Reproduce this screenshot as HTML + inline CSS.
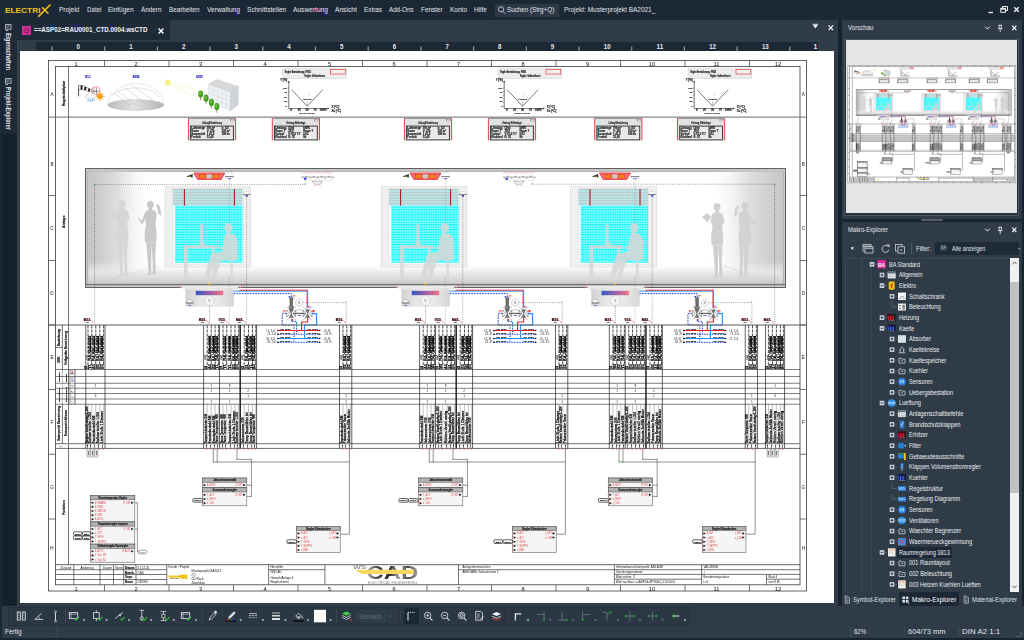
<!DOCTYPE html>
<html lang="de"><head><meta charset="utf-8"><title>ELECTRIX</title><style>
html,body{margin:0;padding:0}
body{width:1024px;height:640px;overflow:hidden;background:#2f3b47;position:relative;font-family:"Liberation Sans",sans-serif}
.b{position:absolute;display:block;overflow:hidden}
.t{position:absolute;display:block;white-space:nowrap;transform-origin:0 50%}
svg text{font-family:"Liberation Sans",sans-serif}
</style></head><body>
<div class="b" style="left:0px;top:0px;width:1024px;height:20px;background:#1c2836;"></div>
<span class="t" style="left:5px;top:5.6px;font-size:6.6px;line-height:10px;color:#f2c317;font-weight:bold;transform:scaleX(1.257)">ELECTRI</span>
<svg class="b" style="left:38px;top:3px" width="14" height="16" viewBox="0 0 14 16"><path d="M4.6 4.9 L10 10.2 M12 2 L0.6 13.4" stroke="#f2c317" stroke-width="1.5" fill="none" stroke-linecap="round"/></svg>
<span class="t" style="left:59.25px;top:4.80px;font-size:8px;line-height:10px;color:#e4e6e8;transform:scaleX(0.813);">Projekt</span>
<span class="t" style="left:86.75px;top:4.80px;font-size:8px;line-height:10px;color:#e4e6e8;transform:scaleX(0.776);">Datei</span>
<span class="t" style="left:108.25px;top:4.80px;font-size:8px;line-height:10px;color:#e4e6e8;transform:scaleX(0.807);">Einfügen</span>
<span class="t" style="left:140.75px;top:4.80px;font-size:8px;line-height:10px;color:#e4e6e8;transform:scaleX(0.795);">Ändern</span>
<span class="t" style="left:168.75px;top:4.80px;font-size:8px;line-height:10px;color:#e4e6e8;transform:scaleX(0.788);">Bearbeiten</span>
<span class="t" style="left:207.00px;top:4.80px;font-size:8px;line-height:10px;color:#e4e6e8;transform:scaleX(0.834);">Verwaltung</span>
<span class="t" style="left:246.75px;top:4.80px;font-size:8px;line-height:10px;color:#e4e6e8;transform:scaleX(0.825);">Schnittstellen</span>
<span class="t" style="left:293.00px;top:4.80px;font-size:8px;line-height:10px;color:#e4e6e8;transform:scaleX(0.828);">Auswertung</span>
<span class="t" style="left:335.00px;top:4.80px;font-size:8px;line-height:10px;color:#e4e6e8;transform:scaleX(0.829);">Ansicht</span>
<span class="t" style="left:363.75px;top:4.80px;font-size:8px;line-height:10px;color:#e4e6e8;transform:scaleX(0.794);">Extras</span>
<span class="t" style="left:388.75px;top:4.80px;font-size:8px;line-height:10px;color:#e4e6e8;transform:scaleX(0.776);">Add-Ons</span>
<span class="t" style="left:420.50px;top:4.80px;font-size:8px;line-height:10px;color:#e4e6e8;transform:scaleX(0.793);">Fenster</span>
<span class="t" style="left:449.75px;top:4.80px;font-size:8px;line-height:10px;color:#e4e6e8;transform:scaleX(0.813);">Konto</span>
<span class="t" style="left:473.75px;top:4.80px;font-size:8px;line-height:10px;color:#e4e6e8;transform:scaleX(0.796);">Hilfe</span>
<div class="b" style="left:495px;top:4px;width:63.5px;height:12.5px;background:#2c3845;border-radius:1px;"></div>
<svg class="b" style="left:497px;top:5px" width="9" height="10" viewBox="0 0 9 10"><circle cx="4" cy="4.3" r="2.6" fill="none" stroke="#d8dadc" stroke-width="0.8"/><path d="M5.9 6.3 L8 8.6" stroke="#d8dadc" stroke-width="0.9"/></svg>
<span class="t" style="left:507.00px;top:4.80px;font-size:8px;line-height:10px;color:#e4e6e8;transform:scaleX(0.784);">Suchen (Strg+Q)</span>
<span class="t" style="left:563.75px;top:4.80px;font-size:8px;line-height:10px;color:#e4e6e8;transform:scaleX(0.808);">Projekt: Musterprojekt BA2021_</span>
<svg class="b" style="left:984px;top:3px" width="38" height="14" viewBox="0 0 38 14"><path d="M4.5 9.5 h4.5" stroke="#eee" stroke-width="1.3"/><path d="M18.5 5.5 v-2 h5 v4 h-2" stroke="#eee" stroke-width="1" fill="none"/><rect x="16.8" y="5.3" width="4.6" height="4" fill="none" stroke="#eee" stroke-width="1"/><path d="M16.8 5.9h4.6" stroke="#eee" stroke-width="1.4"/><path d="M30.3 4.2 l4.4 4.6 M34.7 4.2 l-4.4 4.6" stroke="#fff" stroke-width="1.3"/></svg>
<div class="b" style="left:0px;top:20px;width:2.3px;height:587px;background:#1c2836;"></div>
<div class="b" style="left:2.3px;top:20px;width:14.7px;height:587px;background:#14212d;"></div>
<div class="b" style="left:3px;top:20px;width:14px;height:54.5px;background:#1e2a38;"></div>
<div class="b" style="left:3px;top:75.5px;width:14px;height:58px;background:#1e2a38;"></div>
<svg class="b" style="left:5px;top:23.5px" width="8" height="8" viewBox="0 0 8 8"><rect x="0.6" y="0.6" width="5.4" height="4.6" fill="none" stroke="#cfd3d6" stroke-width="0.8"/><path d="M1.6 2h3.2M1.6 3.4h2" stroke="#cfd3d6" stroke-width="0.6"/><path d="M0.6 6.6h2.4" stroke="#cfd3d6" stroke-width="0.8"/></svg>
<svg class="b" style="left:5px;top:78px" width="8" height="8" viewBox="0 0 8 8"><rect x="0.6" y="0.6" width="5.4" height="4.6" fill="none" stroke="#cfd3d6" stroke-width="0.8"/><path d="M1.6 2h3.2M1.6 3.4h2" stroke="#cfd3d6" stroke-width="0.6"/><path d="M0.6 6.6h2.4" stroke="#cfd3d6" stroke-width="0.8"/></svg>
<span class="t" style="left:13px;top:33px;font-size:6.6px;line-height:9px;color:#e4e6e8;font-weight:bold;transform-origin:0 0;transform:rotate(90deg) scaleX(0.820)">Eigenschaften</span>
<span class="t" style="left:13px;top:86.5px;font-size:6.6px;line-height:9px;color:#e4e6e8;font-weight:bold;transform-origin:0 0;transform:rotate(90deg) scaleX(0.837)">Projekt-Explorer</span>
<div class="b" style="left:17px;top:20px;width:821px;height:586px;background:#2f3b47;"></div>
<div class="b" style="left:17px;top:40px;width:1px;height:566px;background:#3a424b;"></div>
<div class="b" style="left:17px;top:20px;width:153px;height:20px;background:#1e2a38;"></div>
<div class="b" style="left:22px;top:25.5px;width:9.2px;height:9.5px;background:#d42f98;"></div>
<svg class="b" style="left:22px;top:25.5px" width="9.2" height="9.5" viewBox="0 0 9.2 9.5"><circle cx="4.6" cy="4.75" r="1.9" fill="none" stroke="#7a1c58" stroke-width="0.8"/><path d="M4.6 1.4v1.2M4.6 6.9v1.2M1.3 4.75h1.2M6.7 4.75h1.2M2.3 2.4l.8.8M6.1 6.3l.8.8M6.9 2.4l-.8.8M3.1 6.3l-.8.8" stroke="#7a1c58" stroke-width="0.7"/></svg>
<span class="t" style="left:33.50px;top:25.30px;font-size:8px;line-height:10px;color:#f0f2f4;transform:scaleX(0.784);font-weight:bold;">==ASP02=RAU0001_CTD.0004.wsCTD</span>
<svg class="b" style="left:156px;top:25.5px" width="10" height="10" viewBox="0 0 10 10"><path d="M2.6 2.4 l4.8 5 M7.4 2.4 l-4.8 5" stroke="#fff" stroke-width="1.4"/></svg>
<svg class="b" style="left:809px;top:22px" width="30" height="12" viewBox="0 0 30 12"><path d="M3.7 2.6h5.4l-2.7 4z" fill="#fff"/><path d="M3.7 2.2h5.4" stroke="#cfd3d6" stroke-width=".8"/><path d="M19.6 3.4 l4.6 4.8 M24.2 3.4 l-4.6 4.8" stroke="#fff" stroke-width="1.15"/></svg>
<div class="b" style="left:36px;top:42px;width:782px;height:9px;background:#1c2836;"></div>
<svg class="b" style="left:36px;top:42px" width="782" height="9" viewBox="0 0 782 9"><path d="M16.00 4.5v4.5" stroke="#909aa4" stroke-width="1.2"/><path d="M68.70 4.5v4.5" stroke="#909aa4" stroke-width="1.2"/><path d="M121.40 4.5v4.5" stroke="#909aa4" stroke-width="1.2"/><path d="M174.10 4.5v4.5" stroke="#909aa4" stroke-width="1.2"/><path d="M226.80 4.5v4.5" stroke="#909aa4" stroke-width="1.2"/><path d="M279.50 4.5v4.5" stroke="#909aa4" stroke-width="1.2"/><path d="M332.20 4.5v4.5" stroke="#909aa4" stroke-width="1.2"/><path d="M384.90 4.5v4.5" stroke="#909aa4" stroke-width="1.2"/><path d="M437.60 4.5v4.5" stroke="#909aa4" stroke-width="1.2"/><path d="M490.30 4.5v4.5" stroke="#909aa4" stroke-width="1.2"/><path d="M543.00 4.5v4.5" stroke="#909aa4" stroke-width="1.2"/><path d="M595.70 4.5v4.5" stroke="#909aa4" stroke-width="1.2"/><path d="M648.40 4.5v4.5" stroke="#909aa4" stroke-width="1.2"/><path d="M701.10 4.5v4.5" stroke="#909aa4" stroke-width="1.2"/><path d="M753.80 4.5v4.5" stroke="#909aa4" stroke-width="1.2"/><text x="42.20" y="7.4" font-size="6.8" font-weight="bold" fill="#e8eaec" text-anchor="middle" textLength="3.4" lengthAdjust="spacingAndGlyphs">0</text><text x="94.90" y="7.4" font-size="6.8" font-weight="bold" fill="#e8eaec" text-anchor="middle" textLength="3.4" lengthAdjust="spacingAndGlyphs">1</text><text x="147.60" y="7.4" font-size="6.8" font-weight="bold" fill="#e8eaec" text-anchor="middle" textLength="3.4" lengthAdjust="spacingAndGlyphs">2</text><text x="200.30" y="7.4" font-size="6.8" font-weight="bold" fill="#e8eaec" text-anchor="middle" textLength="3.4" lengthAdjust="spacingAndGlyphs">3</text><text x="253.00" y="7.4" font-size="6.8" font-weight="bold" fill="#e8eaec" text-anchor="middle" textLength="3.4" lengthAdjust="spacingAndGlyphs">4</text><text x="305.70" y="7.4" font-size="6.8" font-weight="bold" fill="#e8eaec" text-anchor="middle" textLength="3.4" lengthAdjust="spacingAndGlyphs">5</text><text x="358.40" y="7.4" font-size="6.8" font-weight="bold" fill="#e8eaec" text-anchor="middle" textLength="3.4" lengthAdjust="spacingAndGlyphs">6</text><text x="411.10" y="7.4" font-size="6.8" font-weight="bold" fill="#e8eaec" text-anchor="middle" textLength="3.4" lengthAdjust="spacingAndGlyphs">7</text><text x="463.80" y="7.4" font-size="6.8" font-weight="bold" fill="#e8eaec" text-anchor="middle" textLength="3.4" lengthAdjust="spacingAndGlyphs">8</text><text x="516.50" y="7.4" font-size="6.8" font-weight="bold" fill="#e8eaec" text-anchor="middle" textLength="3.4" lengthAdjust="spacingAndGlyphs">9</text><text x="571.20" y="7.4" font-size="6.8" font-weight="bold" fill="#e8eaec" text-anchor="middle" textLength="6.8" lengthAdjust="spacingAndGlyphs">10</text><text x="623.90" y="7.4" font-size="6.8" font-weight="bold" fill="#e8eaec" text-anchor="middle" textLength="6.8" lengthAdjust="spacingAndGlyphs">11</text><text x="676.60" y="7.4" font-size="6.8" font-weight="bold" fill="#e8eaec" text-anchor="middle" textLength="6.8" lengthAdjust="spacingAndGlyphs">12</text><text x="729.30" y="7.4" font-size="6.8" font-weight="bold" fill="#e8eaec" text-anchor="middle" textLength="6.8" lengthAdjust="spacingAndGlyphs">13</text><text x="779.5" y="7.4" font-size="6.8" font-weight="bold" fill="#e8eaec" text-anchor="middle">1</text></svg>
<div class="b" style="left:838px;top:20px;width:4px;height:586px;background:#17232f;"></div>
<div class="b" style="left:1022px;top:20px;width:2px;height:586px;background:#17232f;"></div>
<div class="b" style="left:842px;top:20px;width:180px;height:198.5px;background:#2f3b47;"></div>
<span class="t" style="left:847.50px;top:23.05px;font-size:7.5px;line-height:9px;color:#e4e6e8;transform:scaleX(0.815);">Vorschau</span>
<svg class="b" style="left:982px;top:24px" width="38" height="10" viewBox="0 0 38 10"><path d="M3 2.6 l2.4 2.5 l2.4-2.5" stroke="#eee" stroke-width="1" fill="none"/><path d="M16.5 1.2h3.4M17.1 1.2v3.2M19.3 1.2v3.2M15.9 4.6h4.6M18.2 4.6v3.6" stroke="#eee" stroke-width="0.85" fill="none"/><path d="M30.2 1.6 l4.2 4.6 M34.4 1.6 l-4.2 4.6" stroke="#fff" stroke-width="1.15"/></svg>
<div class="b" style="left:844px;top:38.5px;width:175px;height:177.5px;background:#26323d;border:1px solid #4a545e;box-sizing:border-box;"></div>
<div class="b" style="left:846px;top:40px;width:171px;height:173px;background:#e5e5e5;"></div>
<div class="b" style="left:842px;top:218.5px;width:180px;height:3.5px;background:#17232f;"></div>
<div class="b" style="left:921px;top:219.3px;width:21.5px;height:1.7px;background:#5a5f63;border-radius:1px;"></div>
<div class="b" style="left:842px;top:222px;width:180px;height:384px;background:#2f3b47;"></div>
<span class="t" style="left:847.50px;top:225.25px;font-size:7.5px;line-height:9px;color:#e4e6e8;transform:scaleX(0.780);">Makro-Explorer</span>
<svg class="b" style="left:982px;top:226.2px" width="38" height="10" viewBox="0 0 38 10"><path d="M3 2.6 l2.4 2.5 l2.4-2.5" stroke="#eee" stroke-width="1" fill="none"/><path d="M16.5 1.2h3.4M17.1 1.2v3.2M19.3 1.2v3.2M15.9 4.6h4.6M18.2 4.6v3.6" stroke="#eee" stroke-width="0.85" fill="none"/><path d="M30.2 1.6 l4.2 4.6 M34.4 1.6 l-4.2 4.6" stroke="#fff" stroke-width="1.15"/></svg>
<svg class="b" style="left:842px;top:240px" width="80" height="17" viewBox="0 0 80 17"><path d="M8.6 7.2h3.4l-1.7 2.8z" fill="#e8eaec"/><rect x="21" y="4.6" width="8" height="6.4" fill="none" stroke="#cfd3d6" stroke-width=".8"/><path d="M21 6.2h8" stroke="#cfd3d6" stroke-width="1"/><rect x="23" y="6.6" width="8" height="6.4" fill="#2f3b47" stroke="#cfd3d6" stroke-width=".8"/><path d="M23 8.2h8" stroke="#cfd3d6" stroke-width="1"/><path d="M45.5 6.2 a3.4 3.4 0 1 0 1.3 3.6" stroke="#cfd3d6" stroke-width=".9" fill="none"/><path d="M44.3 4.4h3.2v3.2z" fill="#cfd3d6"/><rect x="53.5" y="4.4" width="6.6" height="6.6" fill="none" stroke="#cfd3d6" stroke-width=".8"/><rect x="56" y="6.8" width="6.6" height="6.4" fill="#2f3b47" stroke="#cfd3d6" stroke-width=".8"/><path d="M58 10h2.6" stroke="#cfd3d6" stroke-width=".8"/><path d="M69.7 2.6v12" stroke="#56616c" stroke-width=".8"/></svg>
<span class="t" style="left:916.40px;top:244.05px;font-size:7.5px;line-height:9px;color:#e4e6e8;transform:scaleX(0.800);">Filter:</span>
<div class="b" style="left:935.2px;top:242.3px;width:84.3px;height:12.8px;background:#1e2a38;"></div>
<div class="b" style="left:940px;top:245.5px;width:7px;height:5.6px;background:#39444f;"></div>
<span class="t" style="left:940.80px;top:245.25px;font-size:4.5px;line-height:6px;color:#9aa3ab;transform:scaleX(0.800);font-weight:bold;">BA</span>
<span class="t" style="left:952.40px;top:244.05px;font-size:7.5px;line-height:9px;color:#e4e6e8;transform:scaleX(0.742);">Alle anzeigen</span>
<svg class="b" style="left:1015px;top:246px" width="6" height="6" viewBox="0 0 6 6"><path d="M3 2h2.4l-1.2 1.6z" fill="#aab"/></svg>
<div class="b" style="left:844.5px;top:258px;width:174.5px;height:334px;background:#2f3b47;border-left:1px solid #3c4853;border-top:1px solid #3c4853;box-sizing:border-box;"></div>
<div class="b" style="left:1009.7px;top:258px;width:9px;height:334px;background:#f1f1f1;"></div>
<div class="b" style="left:1009.7px;top:281.5px;width:9px;height:211.5px;background:#c2c2c2;"></div>
<svg class="b" style="left:1009.7px;top:258px" width="9" height="334" viewBox="0 0 9 334"><path d="M2.3 6.2l2.2-2.2 2.2 2.2" stroke="#505050" stroke-width="1" fill="none"/><path d="M2.3 327.6l2.2 2.2 2.2-2.2" stroke="#505050" stroke-width="1" fill="none"/></svg>
<svg class="b" style="left:842px;top:256px" width="180" height="338" viewBox="842 256 180 338"><path d="M861.7 258V592M871.2 258V592" stroke="#4a5560" stroke-width=".6"/><rect x="869.70" y="262.00" width="4.6" height="4.6" fill="#ccd3da"/><path d="M870.60 264.30h2.8" stroke="#223" stroke-width=".8"/><path d="M874.30 264.30h2.6" stroke="#7a858f" stroke-width=".5"/><g transform="translate(877.30 260.05)"><rect width="8.5" height="8.5" fill="#d42f98"/><text x="4.25" y="6.6" font-size="5.6" font-weight="bold" fill="#fff" text-anchor="middle" textLength="7" lengthAdjust="spacingAndGlyphs">BA</text></g><rect x="879.70" y="272.67" width="4.6" height="4.6" fill="#ccd3da"/><path d="M880.60 274.97h2.8" stroke="#223" stroke-width=".8"/><path d="M882.00 273.57v2.8" stroke="#223" stroke-width=".8"/><path d="M884.30 274.97h2.6" stroke="#7a858f" stroke-width=".5"/><g transform="translate(887.50 270.72)"><rect x="0.3" y="1.2" width="7.9" height="6.3" fill="#f4f4f4" stroke="#9aa" stroke-width=".5"/><rect x="0.3" y="1.2" width="7.9" height="1.6" fill="#5a6a7a"/><path d="M1.2 4.3h6M1.2 5.9h6" stroke="#667" stroke-width=".6" stroke-dasharray="1.2 .6"/></g><rect x="879.70" y="283.34" width="4.6" height="4.6" fill="#ccd3da"/><path d="M880.60 285.64h2.8" stroke="#223" stroke-width=".8"/><path d="M884.30 285.64h2.6" stroke="#7a858f" stroke-width=".5"/><g transform="translate(887.50 281.39)"><rect x="1.2" y="0.2" width="6" height="8.1" rx="1.4" fill="#f6c21a"/><path d="M5.4 1.6 L3.2 4.4 H4.8 L3.4 7" stroke="#c0281c" stroke-width="1" fill="none"/></g><rect x="889.70" y="294.01" width="4.6" height="4.6" fill="#ccd3da"/><path d="M890.60 296.31h2.8" stroke="#223" stroke-width=".8"/><path d="M892.00 294.91v2.8" stroke="#223" stroke-width=".8"/><path d="M894.30 296.31h2.6" stroke="#7a858f" stroke-width=".5"/><g transform="translate(897.70 292.06)"><rect x="0.3" y="0.5" width="7.9" height="7.5" fill="#f6f6f6"/><path d="M1 6.4h2v-2h2.6v2h2" stroke="#888" stroke-width=".6" fill="none"/></g><path d="M892.00 301.68V306.98h5" stroke="#7a858f" stroke-width=".5" fill="none"/><g transform="translate(897.70 302.73)"><rect x="0.3" y="0.8" width="7.9" height="7" fill="#f2f2f2"/><path d="M1.2 3h2M1.2 5.6h2M4.6 2.6h2.6M4.6 3.8h2.6M4.6 5.2h2.6M4.6 6.4h2.6" stroke="#333" stroke-width=".7"/></g><rect x="879.70" y="315.35" width="4.6" height="4.6" fill="#ccd3da"/><path d="M880.60 317.65h2.8" stroke="#223" stroke-width=".8"/><path d="M882.00 316.25v2.8" stroke="#223" stroke-width=".8"/><path d="M884.30 317.65h2.6" stroke="#7a858f" stroke-width=".5"/><g transform="translate(887.50 313.40)"><rect x="0.3" y="0.5" width="7.9" height="7.5" fill="#2a1418"/><path d="M1.2 6.5V2.5M2.8 6.5V2M4.4 6.5V2.8M6 6.5V2.2" stroke="#e23" stroke-width=".9"/><path d="M1 7h6.4" stroke="#99a" stroke-width=".6"/></g><rect x="879.70" y="326.02" width="4.6" height="4.6" fill="#ccd3da"/><path d="M880.60 328.32h2.8" stroke="#223" stroke-width=".8"/><path d="M884.30 328.32h2.6" stroke="#7a858f" stroke-width=".5"/><g transform="translate(887.50 324.07)"><rect x="0.3" y="0.5" width="7.9" height="7.5" fill="#16163a"/><path d="M1.2 6.5V2.5M2.8 6.5V2M4.4 6.5V2.8M6 6.5V2.2" stroke="#36f" stroke-width=".9"/><path d="M1 7h6.4" stroke="#aab" stroke-width=".6"/></g><rect x="889.70" y="336.69" width="4.6" height="4.6" fill="#ccd3da"/><path d="M890.60 338.99h2.8" stroke="#223" stroke-width=".8"/><path d="M892.00 337.59v2.8" stroke="#223" stroke-width=".8"/><path d="M894.30 338.99h2.6" stroke="#7a858f" stroke-width=".5"/><g transform="translate(897.70 334.74)"><rect x="0.3" y="0.5" width="7.9" height="7.5" fill="#e8eef0"/><path d="M1.2 2.2h6M1.2 4.2h6M1.2 6.2h6" stroke="#8ab" stroke-width=".6" stroke-dasharray="1 .6"/></g><rect x="889.70" y="347.36" width="4.6" height="4.6" fill="#ccd3da"/><path d="M890.60 349.66h2.8" stroke="#223" stroke-width=".8"/><path d="M892.00 348.26v2.8" stroke="#223" stroke-width=".8"/><path d="M894.30 349.66h2.6" stroke="#7a858f" stroke-width=".5"/><g transform="translate(897.70 345.41)"><path d="M1 7.4h6.6M2.6 7.2V3.4l1.6-2 1.6 2v3.8M1.4 4.6h1.2M5.8 4.6h1.4" stroke="#dfe3e6" stroke-width=".7" fill="none"/></g><rect x="889.70" y="358.03" width="4.6" height="4.6" fill="#ccd3da"/><path d="M890.60 360.33h2.8" stroke="#223" stroke-width=".8"/><path d="M892.00 358.93v2.8" stroke="#223" stroke-width=".8"/><path d="M894.30 360.33h2.6" stroke="#7a858f" stroke-width=".5"/><g transform="translate(897.70 356.08)"><path d="M1.3 2.2h2.3l.7.9h3v3.9h-6z" stroke="#dfe3e6" stroke-width=".7" fill="none"/><path d="M3 4.8h2.4" stroke="#dfe3e6" stroke-width=".6"/></g><rect x="889.70" y="368.70" width="4.6" height="4.6" fill="#ccd3da"/><path d="M890.60 371.00h2.8" stroke="#223" stroke-width=".8"/><path d="M892.00 369.60v2.8" stroke="#223" stroke-width=".8"/><path d="M894.30 371.00h2.6" stroke="#7a858f" stroke-width=".5"/><g transform="translate(897.70 366.75)"><path d="M1.3 2.2h2.3l.7.9h3v3.9h-6z" stroke="#dfe3e6" stroke-width=".7" fill="none"/><path d="M3 4.8h2.4" stroke="#dfe3e6" stroke-width=".6"/></g><rect x="889.70" y="379.37" width="4.6" height="4.6" fill="#ccd3da"/><path d="M890.60 381.67h2.8" stroke="#223" stroke-width=".8"/><path d="M892.00 380.27v2.8" stroke="#223" stroke-width=".8"/><path d="M894.30 381.67h2.6" stroke="#7a858f" stroke-width=".5"/><g transform="translate(897.70 377.42)"><circle cx="4.25" cy="4.25" r="3.9" fill="#2a7fd8"/><path d="M2.6 2.6v3.3M4.25 2.4v3.7M5.9 2.6v3.3" stroke="#dff" stroke-width=".7"/></g><rect x="889.70" y="390.04" width="4.6" height="4.6" fill="#ccd3da"/><path d="M890.60 392.34h2.8" stroke="#223" stroke-width=".8"/><path d="M892.00 390.94v2.8" stroke="#223" stroke-width=".8"/><path d="M894.30 392.34h2.6" stroke="#7a858f" stroke-width=".5"/><g transform="translate(897.70 388.09)"><path d="M1.3 2.2h2.3l.7.9h3v3.9h-6z" stroke="#dfe3e6" stroke-width=".7" fill="none"/><path d="M3 4.8h2.4" stroke="#dfe3e6" stroke-width=".6"/></g><rect x="879.70" y="400.71" width="4.6" height="4.6" fill="#ccd3da"/><path d="M880.60 403.01h2.8" stroke="#223" stroke-width=".8"/><path d="M884.30 403.01h2.6" stroke="#7a858f" stroke-width=".5"/><g transform="translate(887.50 398.76)"><ellipse cx="4.25" cy="4.25" rx="4" ry="3.7" fill="#2f8fe0"/><path d="M0.6 3.6h7.3M0.6 5h7.3" stroke="#cfe8ff" stroke-width=".7"/></g><rect x="889.70" y="411.38" width="4.6" height="4.6" fill="#ccd3da"/><path d="M890.60 413.68h2.8" stroke="#223" stroke-width=".8"/><path d="M892.00 412.28v2.8" stroke="#223" stroke-width=".8"/><path d="M894.30 413.68h2.6" stroke="#7a858f" stroke-width=".5"/><g transform="translate(897.70 409.43)"><rect x="0.3" y="1.2" width="7.9" height="6.3" fill="#f4f4f4" stroke="#9aa" stroke-width=".5"/><rect x="0.3" y="1.2" width="7.9" height="1.6" fill="#5a6a7a"/><path d="M1.2 4.3h6M1.2 5.9h6" stroke="#667" stroke-width=".6" stroke-dasharray="1.2 .6"/></g><rect x="889.70" y="422.05" width="4.6" height="4.6" fill="#ccd3da"/><path d="M890.60 424.35h2.8" stroke="#223" stroke-width=".8"/><path d="M892.00 422.95v2.8" stroke="#223" stroke-width=".8"/><path d="M894.30 424.35h2.6" stroke="#7a858f" stroke-width=".5"/><g transform="translate(897.70 420.10)"><rect x="2" y="0.4" width="4.6" height="7.8" fill="#2a7fd8"/><path d="M3.2 6L5.4 2.4" stroke="#fff" stroke-width=".8"/></g><rect x="889.70" y="432.72" width="4.6" height="4.6" fill="#ccd3da"/><path d="M890.60 435.02h2.8" stroke="#223" stroke-width=".8"/><path d="M892.00 433.62v2.8" stroke="#223" stroke-width=".8"/><path d="M894.30 435.02h2.6" stroke="#7a858f" stroke-width=".5"/><g transform="translate(897.70 430.77)"><rect x="0.3" y="0.5" width="7.9" height="7.5" fill="#2a1418"/><path d="M1.2 6.5V2.5M2.8 6.5V2M4.4 6.5V2.8M6 6.5V2.2" stroke="#e23" stroke-width=".9"/><path d="M1 7h6.4" stroke="#99a" stroke-width=".6"/></g><rect x="889.70" y="443.39" width="4.6" height="4.6" fill="#ccd3da"/><path d="M890.60 445.69h2.8" stroke="#223" stroke-width=".8"/><path d="M892.00 444.29v2.8" stroke="#223" stroke-width=".8"/><path d="M894.30 445.69h2.6" stroke="#7a858f" stroke-width=".5"/><g transform="translate(897.70 441.44)"><rect x="0.5" y="1.6" width="5.6" height="5.4" fill="#2a7fd8"/><path d="M6.1 4.3l2-1.6v3.2z" fill="#7ab8f0"/></g><rect x="889.70" y="454.06" width="4.6" height="4.6" fill="#ccd3da"/><path d="M890.60 456.36h2.8" stroke="#223" stroke-width=".8"/><path d="M892.00 454.96v2.8" stroke="#223" stroke-width=".8"/><path d="M894.30 456.36h2.6" stroke="#7a858f" stroke-width=".5"/><g transform="translate(897.70 452.11)"><rect x="0.3" y="2.4" width="6" height="4" fill="#2a7fd8"/><rect x="6.3" y="1" width="1.8" height="6.8" fill="#f2c21a"/><path d="M0.3 1.6h6" stroke="#4c4" stroke-width=".8"/></g><rect x="889.70" y="464.73" width="4.6" height="4.6" fill="#ccd3da"/><path d="M890.60 467.03h2.8" stroke="#223" stroke-width=".8"/><path d="M892.00 465.63v2.8" stroke="#223" stroke-width=".8"/><path d="M894.30 467.03h2.6" stroke="#7a858f" stroke-width=".5"/><g transform="translate(897.70 462.78)"><rect x="3" y="0.6" width="2.6" height="5" fill="#4a9af0"/><path d="M4.3 5.6v2.4" stroke="#dde" stroke-width=".8"/></g><rect x="889.70" y="475.40" width="4.6" height="4.6" fill="#ccd3da"/><path d="M890.60 477.70h2.8" stroke="#223" stroke-width=".8"/><path d="M892.00 476.30v2.8" stroke="#223" stroke-width=".8"/><path d="M894.30 477.70h2.6" stroke="#7a858f" stroke-width=".5"/><g transform="translate(897.70 473.45)"><rect x="0.3" y="0.5" width="7.9" height="7.5" fill="#16163a"/><path d="M1.2 6.5V2.5M2.8 6.5V2M4.4 6.5V2.8M6 6.5V2.2" stroke="#36f" stroke-width=".9"/><path d="M1 7h6.4" stroke="#aab" stroke-width=".6"/></g><path d="M892.00 483.07V488.37h5" stroke="#7a858f" stroke-width=".5" fill="none"/><g transform="translate(897.70 484.12)"><rect x="0.2" y="2" width="8.1" height="4.8" fill="#2a7fd8"/><path d="M1 3l1.3 2.6L3.6 3l1.2 2.6L6 3l1.3 2.6" stroke="#cfe8ff" stroke-width=".6" fill="none"/></g><path d="M892.00 493.74V499.04h5" stroke="#7a858f" stroke-width=".5" fill="none"/><g transform="translate(897.70 494.79)"><rect x="0.2" y="2" width="8.1" height="4.8" fill="#2a7fd8"/><path d="M1 3l1.3 2.6L3.6 3l1.2 2.6L6 3l1.3 2.6" stroke="#cfe8ff" stroke-width=".6" fill="none"/></g><rect x="889.70" y="507.41" width="4.6" height="4.6" fill="#ccd3da"/><path d="M890.60 509.71h2.8" stroke="#223" stroke-width=".8"/><path d="M892.00 508.31v2.8" stroke="#223" stroke-width=".8"/><path d="M894.30 509.71h2.6" stroke="#7a858f" stroke-width=".5"/><g transform="translate(897.70 505.46)"><circle cx="4.25" cy="4.25" r="3.9" fill="#2a7fd8"/><path d="M2.6 2.6v3.3M4.25 2.4v3.7M5.9 2.6v3.3" stroke="#dff" stroke-width=".7"/></g><rect x="889.70" y="518.08" width="4.6" height="4.6" fill="#ccd3da"/><path d="M890.60 520.38h2.8" stroke="#223" stroke-width=".8"/><path d="M892.00 518.98v2.8" stroke="#223" stroke-width=".8"/><path d="M894.30 520.38h2.6" stroke="#7a858f" stroke-width=".5"/><g transform="translate(897.70 516.13)"><ellipse cx="4.25" cy="4.25" rx="4" ry="3.7" fill="#2f8fe0"/><path d="M0.6 3.6h7.3M0.6 5h7.3" stroke="#cfe8ff" stroke-width=".7"/></g><rect x="889.70" y="528.75" width="4.6" height="4.6" fill="#ccd3da"/><path d="M890.60 531.05h2.8" stroke="#223" stroke-width=".8"/><path d="M892.00 529.65v2.8" stroke="#223" stroke-width=".8"/><path d="M894.30 531.05h2.6" stroke="#7a858f" stroke-width=".5"/><g transform="translate(897.70 526.80)"><path d="M1.3 2.2h2.3l.7.9h3v3.9h-6z" stroke="#dfe3e6" stroke-width=".7" fill="none"/><path d="M3 4.8h2.4" stroke="#dfe3e6" stroke-width=".6"/></g><rect x="889.70" y="539.42" width="4.6" height="4.6" fill="#ccd3da"/><path d="M890.60 541.72h2.8" stroke="#223" stroke-width=".8"/><path d="M892.00 540.32v2.8" stroke="#223" stroke-width=".8"/><path d="M894.30 541.72h2.6" stroke="#7a858f" stroke-width=".5"/><g transform="translate(897.70 537.47)"><rect x="0.3" y="0.5" width="7.9" height="7.5" fill="#3a8ae0"/><path d="M0.6 0.8l7.3 7M7.9 0.8l-7.3 7" stroke="#e44" stroke-width=".9"/></g><rect x="879.70" y="550.09" width="4.6" height="4.6" fill="#ccd3da"/><path d="M880.60 552.39h2.8" stroke="#223" stroke-width=".8"/><path d="M884.30 552.39h2.6" stroke="#7a858f" stroke-width=".5"/><g transform="translate(887.50 548.14)"><rect x="0.5" y="0.2" width="7.5" height="8.1" fill="#f4f2ea"/><path d="M1.4 2h3" stroke="#e66" stroke-width=".7"/><path d="M1.4 4h5.6M1.4 5.6h5.6" stroke="#9a9" stroke-width=".6" stroke-dasharray="1 .7"/><rect x="5.2" y="1.2" width="1.8" height="1.4" fill="#fa4"/></g><rect x="889.70" y="560.76" width="4.6" height="4.6" fill="#ccd3da"/><path d="M890.60 563.06h2.8" stroke="#223" stroke-width=".8"/><path d="M892.00 561.66v2.8" stroke="#223" stroke-width=".8"/><path d="M894.30 563.06h2.6" stroke="#7a858f" stroke-width=".5"/><g transform="translate(897.70 558.81)"><path d="M1.3 2.2h2.3l.7.9h3v3.9h-6z" stroke="#dfe3e6" stroke-width=".7" fill="none"/><path d="M3 4.8h2.4" stroke="#dfe3e6" stroke-width=".6"/></g><rect x="889.70" y="571.43" width="4.6" height="4.6" fill="#ccd3da"/><path d="M890.60 573.73h2.8" stroke="#223" stroke-width=".8"/><path d="M892.00 572.33v2.8" stroke="#223" stroke-width=".8"/><path d="M894.30 573.73h2.6" stroke="#7a858f" stroke-width=".5"/><g transform="translate(897.70 569.48)"><path d="M1.3 2.2h2.3l.7.9h3v3.9h-6z" stroke="#dfe3e6" stroke-width=".7" fill="none"/><path d="M3 4.8h2.4" stroke="#dfe3e6" stroke-width=".6"/></g><rect x="889.70" y="582.10" width="4.6" height="4.6" fill="#ccd3da"/><path d="M890.60 584.40h2.8" stroke="#223" stroke-width=".8"/><path d="M892.00 583.00v2.8" stroke="#223" stroke-width=".8"/><path d="M894.30 584.40h2.6" stroke="#7a858f" stroke-width=".5"/><g transform="translate(897.70 580.15)"><rect x="0.5" y="0.2" width="7.5" height="8.1" fill="#f4f2ea"/><path d="M1.4 2h3" stroke="#e66" stroke-width=".7"/><path d="M1.4 4h5.6M1.4 5.6h5.6" stroke="#9a9" stroke-width=".6" stroke-dasharray="1 .7"/><rect x="5.2" y="1.2" width="1.8" height="1.4" fill="#fa4"/></g></svg>
<span class="t" style="left:889.00px;top:259.55px;font-size:7.5px;line-height:9px;color:#eceef0;transform:scaleX(0.736);">BA Standard</span>
<span class="t" style="left:899.00px;top:270.22px;font-size:7.5px;line-height:9px;color:#eceef0;transform:scaleX(0.714);">Allgemein</span>
<span class="t" style="left:899.00px;top:280.89px;font-size:7.5px;line-height:9px;color:#eceef0;transform:scaleX(0.728);">Elektro</span>
<span class="t" style="left:909.00px;top:291.56px;font-size:7.5px;line-height:9px;color:#eceef0;transform:scaleX(0.756);">Schaltschrank</span>
<span class="t" style="left:909.00px;top:302.23px;font-size:7.5px;line-height:9px;color:#eceef0;transform:scaleX(0.758);">Beleuchtung</span>
<span class="t" style="left:899.00px;top:312.90px;font-size:7.5px;line-height:9px;color:#eceef0;transform:scaleX(0.727);">Heizung</span>
<span class="t" style="left:899.00px;top:323.57px;font-size:7.5px;line-height:9px;color:#eceef0;transform:scaleX(0.719);">Kaelte</span>
<span class="t" style="left:909.00px;top:334.24px;font-size:7.5px;line-height:9px;color:#eceef0;transform:scaleX(0.729);">Absorber</span>
<span class="t" style="left:909.00px;top:344.91px;font-size:7.5px;line-height:9px;color:#eceef0;transform:scaleX(0.734);">Kaeltekreise</span>
<span class="t" style="left:909.00px;top:355.58px;font-size:7.5px;line-height:9px;color:#eceef0;transform:scaleX(0.750);">Kaeltespeicher</span>
<span class="t" style="left:909.00px;top:366.25px;font-size:7.5px;line-height:9px;color:#eceef0;transform:scaleX(0.727);">Kuehler</span>
<span class="t" style="left:909.00px;top:376.92px;font-size:7.5px;line-height:9px;color:#eceef0;transform:scaleX(0.732);">Sensoren</span>
<span class="t" style="left:909.00px;top:387.59px;font-size:7.5px;line-height:9px;color:#eceef0;transform:scaleX(0.743);">Uebergabestation</span>
<span class="t" style="left:899.00px;top:398.26px;font-size:7.5px;line-height:9px;color:#eceef0;transform:scaleX(0.750);">Lueftung</span>
<span class="t" style="left:909.00px;top:408.93px;font-size:7.5px;line-height:9px;color:#eceef0;transform:scaleX(0.757);">Anlagenschaltbefehle</span>
<span class="t" style="left:909.00px;top:419.60px;font-size:7.5px;line-height:9px;color:#eceef0;transform:scaleX(0.758);">Brandschutzklappen</span>
<span class="t" style="left:909.00px;top:430.27px;font-size:7.5px;line-height:9px;color:#eceef0;transform:scaleX(0.731);">Erhitzer</span>
<span class="t" style="left:909.00px;top:440.94px;font-size:7.5px;line-height:9px;color:#eceef0;transform:scaleX(0.720);">Filter</span>
<span class="t" style="left:909.00px;top:451.61px;font-size:7.5px;line-height:9px;color:#eceef0;transform:scaleX(0.758);">Gebaeudeausschnitte</span>
<span class="t" style="left:909.00px;top:462.28px;font-size:7.5px;line-height:9px;color:#eceef0;transform:scaleX(0.742);">Klappen Volumenstromregler</span>
<span class="t" style="left:909.00px;top:472.95px;font-size:7.5px;line-height:9px;color:#eceef0;transform:scaleX(0.731);">Kuehler</span>
<span class="t" style="left:909.00px;top:483.62px;font-size:7.5px;line-height:9px;color:#eceef0;transform:scaleX(0.762);">Regelstruktur</span>
<span class="t" style="left:909.00px;top:494.29px;font-size:7.5px;line-height:9px;color:#eceef0;transform:scaleX(0.744);">Regelung Diagramm</span>
<span class="t" style="left:909.00px;top:504.96px;font-size:7.5px;line-height:9px;color:#eceef0;transform:scaleX(0.738);">Sensoren</span>
<span class="t" style="left:909.00px;top:515.63px;font-size:7.5px;line-height:9px;color:#eceef0;transform:scaleX(0.745);">Ventilatoren</span>
<span class="t" style="left:909.00px;top:526.30px;font-size:7.5px;line-height:9px;color:#eceef0;transform:scaleX(0.762);">Waechter Begrenzer</span>
<span class="t" style="left:909.00px;top:536.97px;font-size:7.5px;line-height:9px;color:#eceef0;transform:scaleX(0.764);">Waermerueckgewinnung</span>
<div class="b" style="left:897.3px;top:547.39px;width:54.8px;height:10.3px;background:#1c2836;"></div>
<span class="t" style="left:899.00px;top:547.64px;font-size:7.5px;line-height:9px;color:#eceef0;transform:scaleX(0.747);">Raumregelung 3813</span>
<span class="t" style="left:909.00px;top:558.31px;font-size:7.5px;line-height:9px;color:#eceef0;transform:scaleX(0.749);">001 Raumlayout</span>
<span class="t" style="left:909.00px;top:568.98px;font-size:7.5px;line-height:9px;color:#eceef0;transform:scaleX(0.764);">002 Beleuchtung</span>
<span class="t" style="left:909.00px;top:579.65px;font-size:7.5px;line-height:9px;color:#eceef0;transform:scaleX(0.758);">003 Heizen Kuehlen Lueften</span>
<div class="b" style="left:899px;top:592px;width:60px;height:13.7px;background:#1c2836;"></div>
<svg class="b" style="left:843.5px;top:595px" width="7" height="10" viewBox="0 0 7 10"><path d="M1.2 2h3.4l.8.8v5.4H1.2z" stroke="#cfd3d6" stroke-width=".7" fill="none"/><path d="M2 4h2.4M2 5.4h2.4M2 6.8h2.4" stroke="#cfd3d6" stroke-width=".5"/><path d="M0.6 1h2.6" stroke="#cfd3d6" stroke-width=".7"/></svg>
<span class="t" style="left:852.60px;top:595.05px;font-size:7.5px;line-height:9px;color:#dfe2e5;transform:scaleX(0.772);">Symbol-Explorer</span>
<svg class="b" style="left:901.5px;top:595.5px" width="8" height="9" viewBox="0 0 8 9"><rect x=".4" y=".6" width="2.6" height="2.6" fill="#dfe3e6"/><rect x="3.8" y=".6" width="2.6" height="2.6" fill="#dfe3e6"/><rect x=".4" y="4" width="2.6" height="2.6" fill="#dfe3e6"/><rect x="3.8" y="4" width="2.6" height="2.6" fill="#dfe3e6"/><path d="M5.6 6.4l1.6 1.8" stroke="#dfe3e6" stroke-width=".8"/></svg>
<span class="t" style="left:911.70px;top:595.20px;font-size:8px;line-height:10px;color:#ffffff;transform:scaleX(0.810);">Makro-Explorer</span>
<svg class="b" style="left:963px;top:595px" width="7" height="10" viewBox="0 0 7 10"><path d="M1.2 2h3.4l.8.8v5.4H1.2z" stroke="#cfd3d6" stroke-width=".7" fill="none"/><path d="M2 4h2.4M2 5.4h2.4M2 6.8h2.4" stroke="#cfd3d6" stroke-width=".5"/><path d="M0.6 1h2.6" stroke="#cfd3d6" stroke-width=".7"/></svg>
<span class="t" style="left:971.70px;top:595.05px;font-size:7.5px;line-height:9px;color:#dfe2e5;transform:scaleX(0.788);">Material-Explorer</span>
<svg class="b" style="left:20px;top:51px;will-change:transform" width="814" height="552" viewBox="20 51 814 552"><defs><linearGradient id="gl" x1="0" x2="1" y1="0" y2="0"><stop offset="0" stop-color="#c4c4c4"/><stop offset=".45" stop-color="#dedede"/><stop offset="1" stop-color="#fff" stop-opacity="0"/></linearGradient><linearGradient id="gr" x1="0" x2="1" y1="0" y2="0"><stop offset="0" stop-color="#fff" stop-opacity="0"/><stop offset=".55" stop-color="#e0e0e0"/><stop offset="1" stop-color="#c6c6c6"/></linearGradient><linearGradient id="gf" x1="0" x2="0" y1="0" y2="1"><stop offset="0" stop-color="#fff" stop-opacity="0"/><stop offset=".5" stop-color="#e6e6e6" stop-opacity=".9"/><stop offset="1" stop-color="#c9c9c9"/></linearGradient><linearGradient id="gfc" x1="0" x2="1" y1="0" y2="0"><stop offset="0" stop-color="#d2d2d2"/><stop offset=".5" stop-color="#f2f2f2"/><stop offset="1" stop-color="#d6d6d6"/></linearGradient><linearGradient id="gbr" x1="0" x2="1" y1="0" y2="0"><stop offset="0" stop-color="#3458c8"/><stop offset=".5" stop-color="#9a60a8"/><stop offset="1" stop-color="#f27484"/></linearGradient><linearGradient id="gdome" x1="0" x2="1" y1="0" y2="0"><stop offset="0" stop-color="#b8b8b8"/><stop offset=".45" stop-color="#e2e2e2"/><stop offset="1" stop-color="#b4b4b4"/></linearGradient><linearGradient id="gcad" x1="0" x2="1" y1="0" y2="0"><stop offset="0" stop-color="#b4b4b4"/><stop offset=".2" stop-color="#4c4c4c"/><stop offset=".45" stop-color="#2e2e2e"/><stop offset=".62" stop-color="#a4a4a4"/><stop offset=".8" stop-color="#4a4a4a"/><stop offset="1" stop-color="#a8a8a8"/></linearGradient><pattern id="cy" width="4.6" height="2.5" patternUnits="userSpaceOnUse"><rect width="4.6" height="2.5" fill="#0af6fa"/><path d="M.25 .9h1.1M1.8 .9h1.1M3.35 .9h1" stroke="#fff" stroke-width="1.12"/><path d="M0 0v2.5" stroke="#b0fcfd" stroke-width=".5"/></pattern><pattern id="bl" width="4.6" height="2.85" patternUnits="userSpaceOnUse" y="188.9"><rect width="4.6" height="2.85" fill="#f0f6f6"/><rect y="0" width="4.6" height="1.35" fill="#c0c0c0"/><path d="M.4 2.15h.9M1.95 2.15h.9M3.5 2.15h.8" stroke="#40e8f0" stroke-width=".9"/></pattern></defs><rect x="20" y="51" width="814" height="552" fill="#fff"/><g><rect x="48.50" y="60.50" width="758.00" height="530.50" fill="none" stroke="#3a3a3a" stroke-width="0.8" /><rect x="55.50" y="66.60" width="744.50" height="518.20" fill="none" stroke="#3a3a3a" stroke-width="0.8" /><path d="M104.50 60.50L104.50 66.60" stroke="#3a3a3a" stroke-width="0.7" /><path d="M104.50 584.80L104.50 591.00" stroke="#3a3a3a" stroke-width="0.7" /><path d="M169.00 60.50L169.00 66.60" stroke="#3a3a3a" stroke-width="0.7" /><path d="M169.00 584.80L169.00 591.00" stroke="#3a3a3a" stroke-width="0.7" /><path d="M233.50 60.50L233.50 66.60" stroke="#3a3a3a" stroke-width="0.7" /><path d="M233.50 584.80L233.50 591.00" stroke="#3a3a3a" stroke-width="0.7" /><path d="M298.00 60.50L298.00 66.60" stroke="#3a3a3a" stroke-width="0.7" /><path d="M298.00 584.80L298.00 591.00" stroke="#3a3a3a" stroke-width="0.7" /><path d="M362.50 60.50L362.50 66.60" stroke="#3a3a3a" stroke-width="0.7" /><path d="M362.50 584.80L362.50 591.00" stroke="#3a3a3a" stroke-width="0.7" /><path d="M427.00 60.50L427.00 66.60" stroke="#3a3a3a" stroke-width="0.7" /><path d="M427.00 584.80L427.00 591.00" stroke="#3a3a3a" stroke-width="0.7" /><path d="M491.50 60.50L491.50 66.60" stroke="#3a3a3a" stroke-width="0.7" /><path d="M491.50 584.80L491.50 591.00" stroke="#3a3a3a" stroke-width="0.7" /><path d="M556.00 60.50L556.00 66.60" stroke="#3a3a3a" stroke-width="0.7" /><path d="M556.00 584.80L556.00 591.00" stroke="#3a3a3a" stroke-width="0.7" /><path d="M620.50 60.50L620.50 66.60" stroke="#3a3a3a" stroke-width="0.7" /><path d="M620.50 584.80L620.50 591.00" stroke="#3a3a3a" stroke-width="0.7" /><path d="M685.00 60.50L685.00 66.60" stroke="#3a3a3a" stroke-width="0.7" /><path d="M685.00 584.80L685.00 591.00" stroke="#3a3a3a" stroke-width="0.7" /><path d="M749.50 60.50L749.50 66.60" stroke="#3a3a3a" stroke-width="0.7" /><path d="M749.50 584.80L749.50 591.00" stroke="#3a3a3a" stroke-width="0.7" /><text x="76.00" y="66.10" font-size="5.7" fill="#111" text-anchor="middle" >1</text><text x="76.00" y="590.70" font-size="5.7" fill="#111" text-anchor="middle" >1</text><text x="136.00" y="66.10" font-size="5.7" fill="#111" text-anchor="middle" >2</text><text x="136.00" y="590.70" font-size="5.7" fill="#111" text-anchor="middle" >2</text><text x="200.50" y="66.10" font-size="5.7" fill="#111" text-anchor="middle" >3</text><text x="200.50" y="590.70" font-size="5.7" fill="#111" text-anchor="middle" >3</text><text x="265.00" y="66.10" font-size="5.7" fill="#111" text-anchor="middle" >4</text><text x="265.00" y="590.70" font-size="5.7" fill="#111" text-anchor="middle" >4</text><text x="329.50" y="66.10" font-size="5.7" fill="#111" text-anchor="middle" >5</text><text x="329.50" y="590.70" font-size="5.7" fill="#111" text-anchor="middle" >5</text><text x="394.00" y="66.10" font-size="5.7" fill="#111" text-anchor="middle" >6</text><text x="394.00" y="590.70" font-size="5.7" fill="#111" text-anchor="middle" >6</text><text x="458.50" y="66.10" font-size="5.7" fill="#111" text-anchor="middle" >7</text><text x="458.50" y="590.70" font-size="5.7" fill="#111" text-anchor="middle" >7</text><text x="523.00" y="66.10" font-size="5.7" fill="#111" text-anchor="middle" >8</text><text x="523.00" y="590.70" font-size="5.7" fill="#111" text-anchor="middle" >8</text><text x="587.50" y="66.10" font-size="5.7" fill="#111" text-anchor="middle" >9</text><text x="587.50" y="590.70" font-size="5.7" fill="#111" text-anchor="middle" >9</text><text x="652.00" y="66.10" font-size="5.7" fill="#111" text-anchor="middle" >10</text><text x="652.00" y="590.70" font-size="5.7" fill="#111" text-anchor="middle" >10</text><text x="716.50" y="66.10" font-size="5.7" fill="#111" text-anchor="middle" >11</text><text x="716.50" y="590.70" font-size="5.7" fill="#111" text-anchor="middle" >11</text><text x="778.00" y="66.10" font-size="5.7" fill="#111" text-anchor="middle" >12</text><text x="778.00" y="590.70" font-size="5.7" fill="#111" text-anchor="middle" >12</text><path d="M48.50 195.50L55.50 195.50" stroke="#3a3a3a" stroke-width="0.7" /><path d="M800.00 195.50L806.50 195.50" stroke="#3a3a3a" stroke-width="0.7" /><path d="M48.50 260.50L55.50 260.50" stroke="#3a3a3a" stroke-width="0.7" /><path d="M800.00 260.50L806.50 260.50" stroke="#3a3a3a" stroke-width="0.7" /><path d="M48.50 325.00L55.50 325.00" stroke="#3a3a3a" stroke-width="0.7" /><path d="M800.00 325.00L806.50 325.00" stroke="#3a3a3a" stroke-width="0.7" /><path d="M48.50 389.50L55.50 389.50" stroke="#3a3a3a" stroke-width="0.7" /><path d="M800.00 389.50L806.50 389.50" stroke="#3a3a3a" stroke-width="0.7" /><path d="M48.50 454.30L55.50 454.30" stroke="#3a3a3a" stroke-width="0.7" /><path d="M800.00 454.30L806.50 454.30" stroke="#3a3a3a" stroke-width="0.7" /><path d="M48.50 519.00L55.50 519.00" stroke="#3a3a3a" stroke-width="0.7" /><path d="M800.00 519.00L806.50 519.00" stroke="#3a3a3a" stroke-width="0.7" /><text x="52.00" y="95.50" font-size="4.6" fill="#222" text-anchor="middle" >A</text><text x="803.30" y="95.50" font-size="4.6" fill="#222" text-anchor="middle" >A</text><text x="52.00" y="165.50" font-size="4.6" fill="#222" text-anchor="middle" >B</text><text x="803.30" y="165.50" font-size="4.6" fill="#222" text-anchor="middle" >B</text><text x="52.00" y="229.80" font-size="4.6" fill="#222" text-anchor="middle" >C</text><text x="803.30" y="229.80" font-size="4.6" fill="#222" text-anchor="middle" >C</text><text x="52.00" y="294.80" font-size="4.6" fill="#222" text-anchor="middle" >D</text><text x="803.30" y="294.80" font-size="4.6" fill="#222" text-anchor="middle" >D</text><text x="52.00" y="359.00" font-size="4.6" fill="#222" text-anchor="middle" >E</text><text x="803.30" y="359.00" font-size="4.6" fill="#222" text-anchor="middle" >E</text><text x="52.00" y="423.80" font-size="4.6" fill="#222" text-anchor="middle" >F</text><text x="803.30" y="423.80" font-size="4.6" fill="#222" text-anchor="middle" >F</text><text x="52.00" y="488.80" font-size="4.6" fill="#222" text-anchor="middle" >G</text><text x="803.30" y="488.80" font-size="4.6" fill="#222" text-anchor="middle" >G</text><text x="52.00" y="550.00" font-size="4.6" fill="#222" text-anchor="middle" >H</text><text x="803.30" y="550.00" font-size="4.6" fill="#222" text-anchor="middle" >H</text><path d="M68.50 66.60L68.50 564.70" stroke="#3a3a3a" stroke-width="0.7" /><path d="M48.50 117.10L806.50 117.10" stroke="#6a6a6a" stroke-width="1" /><text x="64.80" y="106.00" font-size="3.6" fill="#111" transform="rotate(-90 64.80 106.00)" textLength="25.00" lengthAdjust="spacingAndGlyphs" font-weight="bold" stroke="#111" stroke-width="0.162" >Regelschaltplan</text><text x="64.80" y="228.00" font-size="3.6" fill="#111" transform="rotate(-90 64.80 228.00)" textLength="12.50" lengthAdjust="spacingAndGlyphs" font-weight="bold" stroke="#111" stroke-width="0.162" >Anlage</text><text x="64.80" y="515.00" font-size="3.6" fill="#111" transform="rotate(-90 64.80 515.00)" textLength="14.50" lengthAdjust="spacingAndGlyphs" font-weight="bold" stroke="#111" stroke-width="0.162" >Funktion</text><text x="85.30" y="77.80" font-size="3" fill="#2222cc" textLength="5.40" lengthAdjust="spacingAndGlyphs" font-weight="bold" stroke="#2222cc" stroke-width="0.135" >B1.1</text><text x="132.60" y="77.80" font-size="3" fill="#2222cc" textLength="6.70" lengthAdjust="spacingAndGlyphs" font-weight="bold" stroke="#2222cc" stroke-width="0.135" >A008</text><text x="196.00" y="77.80" font-size="3" fill="#2222cc" textLength="6.50" lengthAdjust="spacingAndGlyphs" font-weight="bold" stroke="#2222cc" stroke-width="0.135" >A010</text><path d="M78.60 85.50L78.60 96.30" stroke="#222" stroke-width="0.8" /><path d="M78.6 85.3L83 85.6L92.5 90.2L92 92.6L82.5 89.6L78.6 89.6Z" stroke="#222" stroke-width="0.4" fill="#fff" /><path d="M80.6 85.4l1.8 .2v4h-1.8zM84.6 86.4l1.8 .9-.4 3-1.8-.6zM88.4 88.2l1.7 .8-.5 2.7-1.6-.6z" stroke="none" stroke-width="0" fill="#111" /><circle cx="95.8" cy="91" r="4.1" fill="none" stroke="#e33" stroke-width=".6"/><path d="M94 88.4v6M96.4 88v6.6M93 91.4h6" stroke="#333" stroke-width="0.5" fill="none" /><circle cx="100" cy="96.3" r="2.8" fill="#f7a21c"/><path d="M100 91.6v9.4M95.3 96.3h9.4M96.7 93l6.6 6.6M103.3 93l-6.6 6.6" stroke="#f7a21c" stroke-width="0.9" fill="none" /><path d="M86.6 98.6a2.2 2.2 0 0 1 1.2-4a3 3 0 0 1 5.6-.6a2.4 2.4 0 0 1 1.6 4.4z" stroke="#aaa" stroke-width="0.4" fill="#f8f8f8" /><path d="M88.6 99.4l-.8 2M90.6 99.4l-.8 2.6M92.6 99.4l-.8 2M94.2 99.2l-.6 1.6" stroke="#3a8fe8" stroke-width="0.8" fill="none" /><ellipse cx="135.8" cy="105" rx="28" ry="5.4" fill="url(#gdome)" stroke="#aaa" stroke-width=".3"/><path d="M107.8 105C108 92 122 83.6 136 83.6C152 83.6 163.6 92 163.8 105" stroke="#999" stroke-width="0.45" fill="none" stroke-dasharray=".8 .8"/><path d="M112 96C120 86 150 84 160 97M117 90.5L137 106M124 87L146 104M131 85L154 101M114 93L132 107" stroke="#aaa" stroke-width="0.35" fill="none" /><circle cx="167.8" cy="82.6" r="2.4" fill="#fff6a0" stroke="#f7e060" stroke-width=".7"/><path d="M167.8 78.8v7.6M164 82.6h7.6M165.2 80l5.2 5.2M170.4 80l-5.2 5.2" stroke="#f9ea80" stroke-width="0.4" fill="none" /><path d="M170 83.4L207 92.6M169.6 84.4L203 100" stroke="#f8e878" stroke-width="0.45" fill="none" stroke-dasharray="1.6 .8"/><path d="M208.4 84.5L216.5 79.4L238.4 86.5L230.4 92Z" stroke="#bbb" stroke-width="0.3" fill="#d8d8d8" /><path d="M208.4 84.5L230.4 92L230.4 110.8L208.4 101.5Z" stroke="#c4ccd2" stroke-width="0.3" fill="#eef2f5" /><path d="M230.4 92L238.4 86.5L238.4 104.6L230.4 110.8Z" stroke="#b8c0c6" stroke-width="0.3" fill="#cfd6dc" /><path d="M208.4 88.8L230.4 96.6M208.4 93L230.4 101.2M208.4 97.2L230.4 106M213 86v17M217.6 87.6v17.2M222 89.2v17.4M226.4 90.6v17.8M230.4 96.6L238.4 91M230.4 101.2L238.4 95.6M230.4 106L238.4 100M234.4 89.4v18.4" stroke="#c5ccd2" stroke-width="0.35" fill="none" /><path d="M200.60 96.00L200.60 100.20" stroke="#6b4a2a" stroke-width="0.6" /><ellipse cx="200.6" cy="94.0" rx="2.5" ry="3.6" fill="#3f9a1e"/><ellipse cx="200.1" cy="93.2" rx="1.3" ry="2" fill="#6dc23a"/><path d="M206.00 100.20L206.00 104.40" stroke="#6b4a2a" stroke-width="0.6" /><ellipse cx="206.0" cy="98.2" rx="2.5" ry="3.6" fill="#3f9a1e"/><ellipse cx="205.5" cy="97.4" rx="1.3" ry="2" fill="#6dc23a"/><path d="M211.40 104.40L211.40 108.60" stroke="#6b4a2a" stroke-width="0.6" /><ellipse cx="211.4" cy="102.4" rx="2.5" ry="3.6" fill="#3f9a1e"/><ellipse cx="210.9" cy="101.6" rx="1.3" ry="2" fill="#6dc23a"/><path d="M216.80 108.60L216.80 112.80" stroke="#6b4a2a" stroke-width="0.6" /><ellipse cx="216.8" cy="106.6" rx="2.5" ry="3.6" fill="#3f9a1e"/><ellipse cx="216.3" cy="105.8" rx="1.3" ry="2" fill="#6dc23a"/><rect x="282.60" y="68.80" width="63.80" height="9.60" fill="#ececec" stroke="#bdbdbd" stroke-width="0.4" /><text x="284.80" y="72.60" font-size="2.8" fill="#111" textLength="26.00" lengthAdjust="spacingAndGlyphs" font-weight="bold" stroke="#111" stroke-width="0.126" >Regler Bezeichnung: PI001</text><text x="304.60" y="76.80" font-size="2.8" fill="#111" textLength="20.50" lengthAdjust="spacingAndGlyphs" font-weight="bold" stroke="#111" stroke-width="0.126" >Regler: Sollwertkurve</text><rect x="330.60" y="69.60" width="14.80" height="4.40" fill="#f0f0f0" stroke="#e22" stroke-width="0.6" /><path d="M288.80 82V108.6H327.80" stroke="#222" stroke-width="0.6" fill="none" /><path d="M288.80 80.6l-1 2h2zM329.40 108.6l-2-1v2z" stroke="none" stroke-width="0" fill="#222" /><path d="M287.60 88.00L288.80 88.00" stroke="#222" stroke-width="0.4" /><path d="M287.60 91.60L288.80 91.60" stroke="#222" stroke-width="0.4" /><path d="M287.60 95.20L288.80 95.20" stroke="#222" stroke-width="0.4" /><path d="M287.60 98.80L288.80 98.80" stroke="#222" stroke-width="0.4" /><path d="M287.60 102.40L288.80 102.40" stroke="#222" stroke-width="0.4" /><path d="M287.60 106.00L288.80 106.00" stroke="#222" stroke-width="0.4" /><text x="287.20" y="80.80" font-size="2.8" fill="#111" font-weight="bold" stroke="#111" stroke-width="0.126" text-anchor="end" >Y [%]</text><text x="287.00" y="89.00" font-size="2.5" fill="#111" font-weight="bold" stroke="#111" stroke-width="0.1125" text-anchor="end" >100</text><text x="287.00" y="93.40" font-size="2.5" fill="#111" font-weight="bold" stroke="#111" stroke-width="0.1125" text-anchor="end" >75</text><text x="287.00" y="97.80" font-size="2.5" fill="#111" font-weight="bold" stroke="#111" stroke-width="0.1125" text-anchor="end" >50</text><text x="287.00" y="102.20" font-size="2.5" fill="#111" font-weight="bold" stroke="#111" stroke-width="0.1125" text-anchor="end" >25</text><text x="287.00" y="106.60" font-size="2.5" fill="#111" font-weight="bold" stroke="#111" stroke-width="0.1125" text-anchor="end" >0</text><text x="291.30" y="111.40" font-size="2.7" fill="#111" font-weight="bold" stroke="#111" stroke-width="0.1215" text-anchor="middle" >0</text><path d="M291.30 108.60L291.30 109.60" stroke="#222" stroke-width="0.4" /><text x="299.20" y="111.40" font-size="2.7" fill="#111" font-weight="bold" stroke="#111" stroke-width="0.1215" text-anchor="middle" >25</text><path d="M299.20 108.60L299.20 109.60" stroke="#222" stroke-width="0.4" /><text x="307.10" y="111.40" font-size="2.7" fill="#111" font-weight="bold" stroke="#111" stroke-width="0.1215" text-anchor="middle" >50</text><path d="M307.10 108.60L307.10 109.60" stroke="#222" stroke-width="0.4" /><text x="315.00" y="111.40" font-size="2.7" fill="#111" font-weight="bold" stroke="#111" stroke-width="0.1215" text-anchor="middle" >75</text><path d="M315.00 108.60L315.00 109.60" stroke="#222" stroke-width="0.4" /><text x="322.90" y="111.40" font-size="2.7" fill="#111" font-weight="bold" stroke="#111" stroke-width="0.1215" text-anchor="middle" >100%</text><path d="M322.90 108.60L322.90 109.60" stroke="#222" stroke-width="0.4" /><path d="M291.60 89.6L307.20 106.2L322.80 89.6" stroke="#222" stroke-width="0.6" fill="none" /><text x="307.20" y="100.40" font-size="2.4" fill="#222" font-weight="bold" stroke="#222" stroke-width="0.108" text-anchor="middle" >Totzone</text><path d="M307.20 101.20L307.20 105.40" stroke="#333" stroke-width="0.3" /><text x="308.80" y="94.60" font-size="2" fill="#333" text-anchor="middle" >0</text><text x="331.40" y="108.20" font-size="2.9" fill="#111" font-weight="bold" stroke="#111" stroke-width="0.1305" >X [°C]</text><text x="331.40" y="111.60" font-size="2.9" fill="#111" font-weight="bold" stroke="#111" stroke-width="0.1305" >Xs [°C]</text><text x="306.80" y="113.60" font-size="2.3" fill="#333" font-weight="bold" stroke="#333" stroke-width="0.1035" text-anchor="middle" >Heizen  Kühlen</text><rect x="498.00" y="68.80" width="63.80" height="9.60" fill="#ececec" stroke="#bdbdbd" stroke-width="0.4" /><text x="500.20" y="72.60" font-size="2.8" fill="#111" textLength="26.00" lengthAdjust="spacingAndGlyphs" font-weight="bold" stroke="#111" stroke-width="0.126" >Regler Bezeichnung: PI001</text><text x="520.00" y="76.80" font-size="2.8" fill="#111" textLength="20.50" lengthAdjust="spacingAndGlyphs" font-weight="bold" stroke="#111" stroke-width="0.126" >Regler: Sollwertkurve</text><rect x="546.00" y="69.60" width="14.80" height="4.40" fill="#f0f0f0" stroke="#e22" stroke-width="0.6" /><path d="M504.20 82V108.6H543.20" stroke="#222" stroke-width="0.6" fill="none" /><path d="M504.20 80.6l-1 2h2zM544.80 108.6l-2-1v2z" stroke="none" stroke-width="0" fill="#222" /><path d="M503.00 88.00L504.20 88.00" stroke="#222" stroke-width="0.4" /><path d="M503.00 91.60L504.20 91.60" stroke="#222" stroke-width="0.4" /><path d="M503.00 95.20L504.20 95.20" stroke="#222" stroke-width="0.4" /><path d="M503.00 98.80L504.20 98.80" stroke="#222" stroke-width="0.4" /><path d="M503.00 102.40L504.20 102.40" stroke="#222" stroke-width="0.4" /><path d="M503.00 106.00L504.20 106.00" stroke="#222" stroke-width="0.4" /><text x="502.60" y="80.80" font-size="2.8" fill="#111" font-weight="bold" stroke="#111" stroke-width="0.126" text-anchor="end" >Y [%]</text><text x="502.40" y="89.00" font-size="2.5" fill="#111" font-weight="bold" stroke="#111" stroke-width="0.1125" text-anchor="end" >100</text><text x="502.40" y="93.40" font-size="2.5" fill="#111" font-weight="bold" stroke="#111" stroke-width="0.1125" text-anchor="end" >75</text><text x="502.40" y="97.80" font-size="2.5" fill="#111" font-weight="bold" stroke="#111" stroke-width="0.1125" text-anchor="end" >50</text><text x="502.40" y="102.20" font-size="2.5" fill="#111" font-weight="bold" stroke="#111" stroke-width="0.1125" text-anchor="end" >25</text><text x="502.40" y="106.60" font-size="2.5" fill="#111" font-weight="bold" stroke="#111" stroke-width="0.1125" text-anchor="end" >0</text><text x="506.70" y="111.40" font-size="2.7" fill="#111" font-weight="bold" stroke="#111" stroke-width="0.1215" text-anchor="middle" >0</text><path d="M506.70 108.60L506.70 109.60" stroke="#222" stroke-width="0.4" /><text x="514.60" y="111.40" font-size="2.7" fill="#111" font-weight="bold" stroke="#111" stroke-width="0.1215" text-anchor="middle" >25</text><path d="M514.60 108.60L514.60 109.60" stroke="#222" stroke-width="0.4" /><text x="522.50" y="111.40" font-size="2.7" fill="#111" font-weight="bold" stroke="#111" stroke-width="0.1215" text-anchor="middle" >50</text><path d="M522.50 108.60L522.50 109.60" stroke="#222" stroke-width="0.4" /><text x="530.40" y="111.40" font-size="2.7" fill="#111" font-weight="bold" stroke="#111" stroke-width="0.1215" text-anchor="middle" >75</text><path d="M530.40 108.60L530.40 109.60" stroke="#222" stroke-width="0.4" /><text x="538.30" y="111.40" font-size="2.7" fill="#111" font-weight="bold" stroke="#111" stroke-width="0.1215" text-anchor="middle" >100%</text><path d="M538.30 108.60L538.30 109.60" stroke="#222" stroke-width="0.4" /><path d="M507.00 89.6L522.60 106.2L538.20 89.6" stroke="#222" stroke-width="0.6" fill="none" /><text x="522.60" y="100.40" font-size="2.4" fill="#222" font-weight="bold" stroke="#222" stroke-width="0.108" text-anchor="middle" >Totzone</text><path d="M522.60 101.20L522.60 105.40" stroke="#333" stroke-width="0.3" /><text x="524.20" y="94.60" font-size="2" fill="#333" text-anchor="middle" >0</text><text x="546.80" y="108.20" font-size="2.9" fill="#111" font-weight="bold" stroke="#111" stroke-width="0.1305" >X [°C]</text><text x="546.80" y="111.60" font-size="2.9" fill="#111" font-weight="bold" stroke="#111" stroke-width="0.1305" >Xs [°C]</text><text x="522.20" y="113.60" font-size="2.3" fill="#333" font-weight="bold" stroke="#333" stroke-width="0.1035" text-anchor="middle" >Heizen  Kühlen</text><rect x="688.00" y="68.80" width="63.80" height="9.60" fill="#ececec" stroke="#bdbdbd" stroke-width="0.4" /><text x="690.20" y="72.60" font-size="2.8" fill="#111" textLength="26.00" lengthAdjust="spacingAndGlyphs" font-weight="bold" stroke="#111" stroke-width="0.126" >Regler Bezeichnung: PI001</text><text x="710.00" y="76.80" font-size="2.8" fill="#111" textLength="20.50" lengthAdjust="spacingAndGlyphs" font-weight="bold" stroke="#111" stroke-width="0.126" >Regler: Sollwertkurve</text><rect x="736.00" y="69.60" width="14.80" height="4.40" fill="#f0f0f0" stroke="#e22" stroke-width="0.6" /><path d="M694.20 82V108.6H733.20" stroke="#222" stroke-width="0.6" fill="none" /><path d="M694.20 80.6l-1 2h2zM734.80 108.6l-2-1v2z" stroke="none" stroke-width="0" fill="#222" /><path d="M693.00 88.00L694.20 88.00" stroke="#222" stroke-width="0.4" /><path d="M693.00 91.60L694.20 91.60" stroke="#222" stroke-width="0.4" /><path d="M693.00 95.20L694.20 95.20" stroke="#222" stroke-width="0.4" /><path d="M693.00 98.80L694.20 98.80" stroke="#222" stroke-width="0.4" /><path d="M693.00 102.40L694.20 102.40" stroke="#222" stroke-width="0.4" /><path d="M693.00 106.00L694.20 106.00" stroke="#222" stroke-width="0.4" /><text x="692.60" y="80.80" font-size="2.8" fill="#111" font-weight="bold" stroke="#111" stroke-width="0.126" text-anchor="end" >Y [%]</text><text x="692.40" y="89.00" font-size="2.5" fill="#111" font-weight="bold" stroke="#111" stroke-width="0.1125" text-anchor="end" >100</text><text x="692.40" y="93.40" font-size="2.5" fill="#111" font-weight="bold" stroke="#111" stroke-width="0.1125" text-anchor="end" >75</text><text x="692.40" y="97.80" font-size="2.5" fill="#111" font-weight="bold" stroke="#111" stroke-width="0.1125" text-anchor="end" >50</text><text x="692.40" y="102.20" font-size="2.5" fill="#111" font-weight="bold" stroke="#111" stroke-width="0.1125" text-anchor="end" >25</text><text x="692.40" y="106.60" font-size="2.5" fill="#111" font-weight="bold" stroke="#111" stroke-width="0.1125" text-anchor="end" >0</text><text x="696.70" y="111.40" font-size="2.7" fill="#111" font-weight="bold" stroke="#111" stroke-width="0.1215" text-anchor="middle" >0</text><path d="M696.70 108.60L696.70 109.60" stroke="#222" stroke-width="0.4" /><text x="704.60" y="111.40" font-size="2.7" fill="#111" font-weight="bold" stroke="#111" stroke-width="0.1215" text-anchor="middle" >25</text><path d="M704.60 108.60L704.60 109.60" stroke="#222" stroke-width="0.4" /><text x="712.50" y="111.40" font-size="2.7" fill="#111" font-weight="bold" stroke="#111" stroke-width="0.1215" text-anchor="middle" >50</text><path d="M712.50 108.60L712.50 109.60" stroke="#222" stroke-width="0.4" /><text x="720.40" y="111.40" font-size="2.7" fill="#111" font-weight="bold" stroke="#111" stroke-width="0.1215" text-anchor="middle" >75</text><path d="M720.40 108.60L720.40 109.60" stroke="#222" stroke-width="0.4" /><text x="728.30" y="111.40" font-size="2.7" fill="#111" font-weight="bold" stroke="#111" stroke-width="0.1215" text-anchor="middle" >100%</text><path d="M728.30 108.60L728.30 109.60" stroke="#222" stroke-width="0.4" /><path d="M697.00 89.6L712.60 106.2L728.20 89.6" stroke="#222" stroke-width="0.6" fill="none" /><text x="712.60" y="100.40" font-size="2.4" fill="#222" font-weight="bold" stroke="#222" stroke-width="0.108" text-anchor="middle" >Totzone</text><path d="M712.60 101.20L712.60 105.40" stroke="#333" stroke-width="0.3" /><text x="714.20" y="94.60" font-size="2" fill="#333" text-anchor="middle" >0</text><text x="736.80" y="108.20" font-size="2.9" fill="#111" font-weight="bold" stroke="#111" stroke-width="0.1305" >X [°C]</text><text x="736.80" y="111.60" font-size="2.9" fill="#111" font-weight="bold" stroke="#111" stroke-width="0.1305" >Xs [°C]</text><text x="712.20" y="113.60" font-size="2.3" fill="#333" font-weight="bold" stroke="#333" stroke-width="0.1035" text-anchor="middle" >Heizen  Kühlen</text><rect x="188.40" y="118.30" width="47.20" height="22.00" fill="#e2e2e2" stroke="none" stroke-width="0" /><path d="M188.40 118.30L235.60 118.30" stroke="#555" stroke-width="0.7" /><path d="M188.40 118.30L188.40 140.30" stroke="#e0363a" stroke-width="0.9" /><path d="M235.60 118.30L235.60 140.30" stroke="#e0363a" stroke-width="0.9" /><rect x="230.80" y="119.40" width="3.40" height="1.60" fill="#f4f4f4" stroke="#555" stroke-width="0.35" /><text x="212.00" y="124.20" font-size="2.9" fill="#222" textLength="19.50" lengthAdjust="spacingAndGlyphs" font-weight="bold" stroke="#222" stroke-width="0.1305" text-anchor="middle" >Lüftung/Klimatisierung</text><rect x="190.60" y="126.10" width="42.80" height="13.80" fill="#e9e9e9" stroke="#333" stroke-width="0.95" /><text x="191.30" y="129.00" font-size="2.7" fill="#111" font-weight="bold" stroke="#111" stroke-width="0.1215" >Luftmenge</text><text x="206.80" y="129.00" font-size="2.7" fill="#111" font-weight="bold" stroke="#111" stroke-width="0.1215" >V/h,m³</text><text x="221.60" y="129.00" font-size="2.7" fill="#111" font-weight="bold" stroke="#111" stroke-width="0.1215" >n: 4,0</text><text x="191.30" y="132.15" font-size="2.7" fill="#111" font-weight="bold" stroke="#111" stroke-width="0.1215" >Raum</text><text x="206.80" y="132.15" font-size="2.7" fill="#111" font-weight="bold" stroke="#111" stroke-width="0.1215" >V: 216</text><text x="221.60" y="132.15" font-size="2.7" fill="#111" font-weight="bold" stroke="#111" stroke-width="0.1215" >100 m³</text><text x="191.30" y="135.30" font-size="2.7" fill="#111" font-weight="bold" stroke="#111" stroke-width="0.1215" >Aussenluft</text><text x="206.80" y="135.30" font-size="2.7" fill="#111" font-weight="bold" stroke="#111" stroke-width="0.1215" >1  45,0</text><text x="221.60" y="135.30" font-size="2.7" fill="#111" font-weight="bold" stroke="#111" stroke-width="0.1215" >108 l/s</text><text x="191.30" y="138.45" font-size="2.7" fill="#111" font-weight="bold" stroke="#111" stroke-width="0.1215" >Fortluft</text><text x="206.80" y="138.45" font-size="2.7" fill="#111" font-weight="bold" stroke="#111" stroke-width="0.1215" >33,40</text><text x="221.60" y="138.45" font-size="2.7" fill="#111" font-weight="bold" stroke="#111" stroke-width="0.1215" ></text><rect x="272.30" y="118.30" width="47.20" height="22.00" fill="#e2e2e2" stroke="none" stroke-width="0" /><path d="M272.30 118.30L319.50 118.30" stroke="#555" stroke-width="0.7" /><path d="M272.30 118.30L272.30 140.30" stroke="#e0363a" stroke-width="0.9" /><path d="M319.50 118.30L319.50 140.30" stroke="#e0363a" stroke-width="0.9" /><rect x="314.70" y="119.40" width="3.40" height="1.60" fill="#f4f4f4" stroke="#555" stroke-width="0.35" /><text x="295.90" y="124.20" font-size="2.9" fill="#222" textLength="19.00" lengthAdjust="spacingAndGlyphs" font-weight="bold" stroke="#222" stroke-width="0.1305" text-anchor="middle" >Heizung Kühlanlage</text><rect x="274.50" y="126.10" width="42.80" height="13.80" fill="#e9e9e9" stroke="#333" stroke-width="0.95" /><text x="275.20" y="129.00" font-size="2.7" fill="#111" font-weight="bold" stroke="#111" stroke-width="0.1215" >Leistung</text><text x="288.30" y="129.00" font-size="2.7" fill="#111" font-weight="bold" stroke="#111" stroke-width="0.1215" >Q(w)</text><text x="303.30" y="129.00" font-size="2.7" fill="#111" font-weight="bold" stroke="#111" stroke-width="0.1215" >kW/K</text><text x="275.20" y="132.15" font-size="2.7" fill="#111" font-weight="bold" stroke="#111" stroke-width="0.1215" >Raum T</text><text x="288.30" y="132.15" font-size="2.7" fill="#111" font-weight="bold" stroke="#111" stroke-width="0.1215" >19,0</text><text x="303.30" y="132.15" font-size="2.7" fill="#111" font-weight="bold" stroke="#111" stroke-width="0.1215" >Raum T</text><text x="275.20" y="135.30" font-size="2.7" fill="#111" font-weight="bold" stroke="#111" stroke-width="0.1215" >Vorlauf</text><text x="288.30" y="135.30" font-size="2.7" fill="#111" font-weight="bold" stroke="#111" stroke-width="0.1215" >V:70,0 T:7</text><text x="303.30" y="135.30" font-size="2.7" fill="#111" font-weight="bold" stroke="#111" stroke-width="0.1215" >6/12</text><text x="275.20" y="138.45" font-size="2.7" fill="#111" font-weight="bold" stroke="#111" stroke-width="0.1215" >Rücklauf</text><text x="288.30" y="138.45" font-size="2.7" fill="#111" font-weight="bold" stroke="#111" stroke-width="0.1215" >R: 55</text><text x="303.30" y="138.45" font-size="2.7" fill="#111" font-weight="bold" stroke="#111" stroke-width="0.1215" >8k</text><rect x="404.40" y="118.30" width="47.20" height="22.00" fill="#e2e2e2" stroke="none" stroke-width="0" /><path d="M404.40 118.30L451.60 118.30" stroke="#555" stroke-width="0.7" /><path d="M404.40 118.30L404.40 140.30" stroke="#e0363a" stroke-width="0.9" /><path d="M451.60 118.30L451.60 140.30" stroke="#e0363a" stroke-width="0.9" /><rect x="446.80" y="119.40" width="3.40" height="1.60" fill="#f4f4f4" stroke="#555" stroke-width="0.35" /><text x="428.00" y="124.20" font-size="2.9" fill="#222" textLength="19.50" lengthAdjust="spacingAndGlyphs" font-weight="bold" stroke="#222" stroke-width="0.1305" text-anchor="middle" >Lüftung/Klimatisierung</text><rect x="406.60" y="126.10" width="42.80" height="13.80" fill="#e9e9e9" stroke="#333" stroke-width="0.95" /><text x="407.30" y="129.00" font-size="2.7" fill="#111" font-weight="bold" stroke="#111" stroke-width="0.1215" >Luftmenge</text><text x="422.80" y="129.00" font-size="2.7" fill="#111" font-weight="bold" stroke="#111" stroke-width="0.1215" >V/h,m³</text><text x="437.60" y="129.00" font-size="2.7" fill="#111" font-weight="bold" stroke="#111" stroke-width="0.1215" >n: 4,0</text><text x="407.30" y="132.15" font-size="2.7" fill="#111" font-weight="bold" stroke="#111" stroke-width="0.1215" >Raum</text><text x="422.80" y="132.15" font-size="2.7" fill="#111" font-weight="bold" stroke="#111" stroke-width="0.1215" >V: 216</text><text x="437.60" y="132.15" font-size="2.7" fill="#111" font-weight="bold" stroke="#111" stroke-width="0.1215" >100 m³</text><text x="407.30" y="135.30" font-size="2.7" fill="#111" font-weight="bold" stroke="#111" stroke-width="0.1215" >Aussenluft</text><text x="422.80" y="135.30" font-size="2.7" fill="#111" font-weight="bold" stroke="#111" stroke-width="0.1215" >1  45,0</text><text x="437.60" y="135.30" font-size="2.7" fill="#111" font-weight="bold" stroke="#111" stroke-width="0.1215" >108 l/s</text><text x="407.30" y="138.45" font-size="2.7" fill="#111" font-weight="bold" stroke="#111" stroke-width="0.1215" >Fortluft</text><text x="422.80" y="138.45" font-size="2.7" fill="#111" font-weight="bold" stroke="#111" stroke-width="0.1215" >33,40</text><text x="437.60" y="138.45" font-size="2.7" fill="#111" font-weight="bold" stroke="#111" stroke-width="0.1215" ></text><rect x="488.40" y="118.30" width="47.20" height="22.00" fill="#e2e2e2" stroke="none" stroke-width="0" /><path d="M488.40 118.30L535.60 118.30" stroke="#555" stroke-width="0.7" /><path d="M488.40 118.30L488.40 140.30" stroke="#e0363a" stroke-width="0.9" /><path d="M535.60 118.30L535.60 140.30" stroke="#e0363a" stroke-width="0.9" /><rect x="530.80" y="119.40" width="3.40" height="1.60" fill="#f4f4f4" stroke="#555" stroke-width="0.35" /><text x="512.00" y="124.20" font-size="2.9" fill="#222" textLength="19.00" lengthAdjust="spacingAndGlyphs" font-weight="bold" stroke="#222" stroke-width="0.1305" text-anchor="middle" >Heizung Kühlanlage</text><rect x="490.60" y="126.10" width="42.80" height="13.80" fill="#e9e9e9" stroke="#333" stroke-width="0.95" /><text x="491.30" y="129.00" font-size="2.7" fill="#111" font-weight="bold" stroke="#111" stroke-width="0.1215" >Leistung</text><text x="504.40" y="129.00" font-size="2.7" fill="#111" font-weight="bold" stroke="#111" stroke-width="0.1215" >Q(w)</text><text x="519.40" y="129.00" font-size="2.7" fill="#111" font-weight="bold" stroke="#111" stroke-width="0.1215" >kW/K</text><text x="491.30" y="132.15" font-size="2.7" fill="#111" font-weight="bold" stroke="#111" stroke-width="0.1215" >Raum T</text><text x="504.40" y="132.15" font-size="2.7" fill="#111" font-weight="bold" stroke="#111" stroke-width="0.1215" >19,0</text><text x="519.40" y="132.15" font-size="2.7" fill="#111" font-weight="bold" stroke="#111" stroke-width="0.1215" >Raum T</text><text x="491.30" y="135.30" font-size="2.7" fill="#111" font-weight="bold" stroke="#111" stroke-width="0.1215" >Vorlauf</text><text x="504.40" y="135.30" font-size="2.7" fill="#111" font-weight="bold" stroke="#111" stroke-width="0.1215" >V:70,0 T:7</text><text x="519.40" y="135.30" font-size="2.7" fill="#111" font-weight="bold" stroke="#111" stroke-width="0.1215" >6/12</text><text x="491.30" y="138.45" font-size="2.7" fill="#111" font-weight="bold" stroke="#111" stroke-width="0.1215" >Rücklauf</text><text x="504.40" y="138.45" font-size="2.7" fill="#111" font-weight="bold" stroke="#111" stroke-width="0.1215" >R: 55</text><text x="519.40" y="138.45" font-size="2.7" fill="#111" font-weight="bold" stroke="#111" stroke-width="0.1215" >8k</text><rect x="594.70" y="118.30" width="47.20" height="22.00" fill="#e2e2e2" stroke="none" stroke-width="0" /><path d="M594.70 118.30L641.90 118.30" stroke="#555" stroke-width="0.7" /><path d="M594.70 118.30L594.70 140.30" stroke="#e0363a" stroke-width="0.9" /><path d="M641.90 118.30L641.90 140.30" stroke="#e0363a" stroke-width="0.9" /><rect x="637.10" y="119.40" width="3.40" height="1.60" fill="#f4f4f4" stroke="#555" stroke-width="0.35" /><text x="618.30" y="124.20" font-size="2.9" fill="#222" textLength="19.50" lengthAdjust="spacingAndGlyphs" font-weight="bold" stroke="#222" stroke-width="0.1305" text-anchor="middle" >Lüftung/Klimatisierung</text><rect x="596.90" y="126.10" width="42.80" height="13.80" fill="#e9e9e9" stroke="#333" stroke-width="0.95" /><text x="597.60" y="129.00" font-size="2.7" fill="#111" font-weight="bold" stroke="#111" stroke-width="0.1215" >Luftmenge</text><text x="613.10" y="129.00" font-size="2.7" fill="#111" font-weight="bold" stroke="#111" stroke-width="0.1215" >V/h,m³</text><text x="627.90" y="129.00" font-size="2.7" fill="#111" font-weight="bold" stroke="#111" stroke-width="0.1215" >n: 4,0</text><text x="597.60" y="132.15" font-size="2.7" fill="#111" font-weight="bold" stroke="#111" stroke-width="0.1215" >Raum</text><text x="613.10" y="132.15" font-size="2.7" fill="#111" font-weight="bold" stroke="#111" stroke-width="0.1215" >V: 216</text><text x="627.90" y="132.15" font-size="2.7" fill="#111" font-weight="bold" stroke="#111" stroke-width="0.1215" >100 m³</text><text x="597.60" y="135.30" font-size="2.7" fill="#111" font-weight="bold" stroke="#111" stroke-width="0.1215" >Aussenluft</text><text x="613.10" y="135.30" font-size="2.7" fill="#111" font-weight="bold" stroke="#111" stroke-width="0.1215" >1  45,0</text><text x="627.90" y="135.30" font-size="2.7" fill="#111" font-weight="bold" stroke="#111" stroke-width="0.1215" >108 l/s</text><text x="597.60" y="138.45" font-size="2.7" fill="#111" font-weight="bold" stroke="#111" stroke-width="0.1215" >Fortluft</text><text x="613.10" y="138.45" font-size="2.7" fill="#111" font-weight="bold" stroke="#111" stroke-width="0.1215" >33,40</text><text x="627.90" y="138.45" font-size="2.7" fill="#111" font-weight="bold" stroke="#111" stroke-width="0.1215" ></text><rect x="677.50" y="118.30" width="47.20" height="22.00" fill="#e2e2e2" stroke="none" stroke-width="0" /><path d="M677.50 118.30L724.70 118.30" stroke="#555" stroke-width="0.7" /><path d="M677.50 118.30L677.50 140.30" stroke="#e0363a" stroke-width="0.9" /><path d="M724.70 118.30L724.70 140.30" stroke="#e0363a" stroke-width="0.9" /><rect x="719.90" y="119.40" width="3.40" height="1.60" fill="#f4f4f4" stroke="#555" stroke-width="0.35" /><text x="701.10" y="124.20" font-size="2.9" fill="#222" textLength="19.00" lengthAdjust="spacingAndGlyphs" font-weight="bold" stroke="#222" stroke-width="0.1305" text-anchor="middle" >Heizung Kühlanlage</text><rect x="679.70" y="126.10" width="42.80" height="13.80" fill="#e9e9e9" stroke="#333" stroke-width="0.95" /><text x="680.40" y="129.00" font-size="2.7" fill="#111" font-weight="bold" stroke="#111" stroke-width="0.1215" >Leistung</text><text x="693.50" y="129.00" font-size="2.7" fill="#111" font-weight="bold" stroke="#111" stroke-width="0.1215" >Q(w)</text><text x="708.50" y="129.00" font-size="2.7" fill="#111" font-weight="bold" stroke="#111" stroke-width="0.1215" >kW/K</text><text x="680.40" y="132.15" font-size="2.7" fill="#111" font-weight="bold" stroke="#111" stroke-width="0.1215" >Raum T</text><text x="693.50" y="132.15" font-size="2.7" fill="#111" font-weight="bold" stroke="#111" stroke-width="0.1215" >19,0</text><text x="708.50" y="132.15" font-size="2.7" fill="#111" font-weight="bold" stroke="#111" stroke-width="0.1215" >Raum T</text><text x="680.40" y="135.30" font-size="2.7" fill="#111" font-weight="bold" stroke="#111" stroke-width="0.1215" >Vorlauf</text><text x="693.50" y="135.30" font-size="2.7" fill="#111" font-weight="bold" stroke="#111" stroke-width="0.1215" >V:70,0 T:7</text><text x="708.50" y="135.30" font-size="2.7" fill="#111" font-weight="bold" stroke="#111" stroke-width="0.1215" >6/12</text><text x="680.40" y="138.45" font-size="2.7" fill="#111" font-weight="bold" stroke="#111" stroke-width="0.1215" >Rücklauf</text><text x="693.50" y="138.45" font-size="2.7" fill="#111" font-weight="bold" stroke="#111" stroke-width="0.1215" >R: 55</text><text x="708.50" y="138.45" font-size="2.7" fill="#111" font-weight="bold" stroke="#111" stroke-width="0.1215" >8k</text><rect x="85.50" y="168.60" width="700.00" height="118.80" fill="#cfcfcf" stroke="#4a4a4a" stroke-width="0.9" /><rect x="88.00" y="171.20" width="695.00" height="113.40" fill="#fff" stroke="#6e6e6e" stroke-width="0.6" /><rect x="88.30" y="171.50" width="66.00" height="112.80" fill="url(#gl)" stroke="none" stroke-width="0.7" /><rect x="706.00" y="171.50" width="76.70" height="112.80" fill="url(#gr)" stroke="none" stroke-width="0.7" /><rect x="88.30" y="262.00" width="694.40" height="22.30" fill="url(#gf)" stroke="none" stroke-width="0.7" /><path d="M85.50 285.30L785.50 285.30" stroke="#b0b0b0" stroke-width="1.6" /><path d="M85.50 284.40L785.50 284.40" stroke="#555" stroke-width="0.7" /><path d="M94.50 283.00L160.00 266.00" stroke="#b4b4b4" stroke-width="0.4" stroke-dasharray="1 1"/><path d="M774.50 283.00L724.00 266.00" stroke="#c4c4c4" stroke-width="0.4" /><g transform="translate(122.00 203.50) scale(1.180 1.000)" fill="#d6d6d6"><ellipse cx="0" cy="0" rx="3" ry="3.8"/><path d="M-1.2 3h2.6l.4 2.6C5 6.4 5.6 8 5.4 12L4.4 21C5.6 26 5.8 32 5 39L-4.6 39C-5.6 32 -5 26 -3.8 21L-4.8 12C-5 8 -4.4 6.4 -1.6 5.6Z"/><path d="M-4.6 8L-8 16L-13 10L-8 6L-3.4 13.4L-6 17.6Z"/><path d="M4.8 8L6.6 16L1 19L.4 17.4L4 15Z"/><path d="M-3.6 39L-2.4 56L-1.6 70L-3.2 72.4L.6 72.4L.8 56L1 39Z"/><path d="M1 39L1.8 56L2.2 69L1.4 71.6L4.8 71.6L4.2 56L4.8 39Z"/></g><g transform="translate(150.40 204.60) scale(1.145 0.970)" fill="#c9c9c9"><ellipse cx="0" cy="0" rx="3" ry="3.8"/><path d="M-1.2 3h2.6l.4 2.6C5 6.4 5.6 8 5.4 12L4.4 21C5.6 26 5.8 32 5 39L-4.6 39C-5.6 32 -5 26 -3.8 21L-4.8 12C-5 8 -4.4 6.4 -1.6 5.6Z"/><path d="M4.6 7.4L9.6 11.4L8.4 2.4L6.4 -1L5 .6L6.4 4.4L6.8 8.4Z"/><path d="M-4.6 8L-7.6 17L-10 13.6L-10.8 14.4L-7.4 20.4L-3.6 13Z"/><path d="M-3.6 39L-2.4 56L-1.6 70L-3.2 72.4L.6 72.4L.8 56L1 39Z"/><path d="M1 39L1.8 56L2.2 69L1.4 71.6L4.8 71.6L4.2 56L4.8 39Z"/></g><g transform="translate(717.00 207.00) scale(1.156 0.980)" fill="#d0d0d0"><ellipse cx="0" cy="0" rx="3" ry="3.8"/><path d="M-1.2 3h2.6l.4 2.6C5 6.4 5.6 8 5.4 12L4.4 21C5.6 26 5.8 32 5 39L-4.6 39C-5.6 32 -5 26 -3.8 21L-4.8 12C-5 8 -4.4 6.4 -1.6 5.6Z"/><path d="M-4.6 8L-8 16L-13 10L-8 6L-3.4 13.4L-6 17.6Z"/><path d="M4.8 8L6.6 16L1 19L.4 17.4L4 15Z"/><path d="M-3.6 39L-2.4 56L-1.6 70L-3.2 72.4L.6 72.4L.8 56L1 39Z"/><path d="M1 39L1.8 56L2.2 69L1.4 71.6L4.8 71.6L4.2 56L4.8 39Z"/></g><g transform="translate(745.00 206.00) scale(-1.168 0.990)" fill="#d2d2d2"><ellipse cx="0" cy="0" rx="3" ry="3.8"/><path d="M-1.2 3h2.6l.4 2.6C5 6.4 5.6 8 5.4 12L4.4 21C5.6 26 5.8 32 5 39L-4.6 39C-5.6 32 -5 26 -3.8 21L-4.8 12C-5 8 -4.4 6.4 -1.6 5.6Z"/><path d="M4.6 7.4L9.6 11.4L8.4 2.4L6.4 -1L5 .6L6.4 4.4L6.8 8.4Z"/><path d="M-4.6 8L-7.6 17L-10 13.6L-10.8 14.4L-7.4 20.4L-3.6 13Z"/><path d="M-3.6 39L-2.4 56L-1.6 70L-3.2 72.4L.6 72.4L.8 56L1 39Z"/><path d="M1 39L1.8 56L2.2 69L1.4 71.6L4.8 71.6L4.2 56L4.8 39Z"/></g><rect x="165.00" y="186.80" width="85.70" height="80.20" fill="#f0f0f0" stroke="#d0d0d0" stroke-width="0.5" /><rect x="172.60" y="188.60" width="70.40" height="76.20" fill="#f8f8f8" stroke="#d6d6d6" stroke-width="0.4" /><rect x="172.80" y="188.90" width="69.70" height="16.80" fill="url(#bl)" stroke="none" stroke-width="0.7" /><rect x="175.10" y="205.60" width="67.40" height="57.20" fill="url(#cy)" stroke="none" stroke-width="0.7" /><path d="M184.40 189.00L184.40 205.60" stroke="#c81a20" stroke-width="1" /><path d="M184.40 190.00L184.40 205.00" stroke="#300" stroke-width="0.9" stroke-dasharray=".6 2.25"/><path d="M234.40 189.00L234.40 205.60" stroke="#c81a20" stroke-width="1" /><path d="M234.40 190.00L234.40 205.00" stroke="#300" stroke-width="0.9" stroke-dasharray=".6 2.25"/><g opacity=".88"><rect x="184.00" y="245.30" width="33.00" height="3.00" fill="#d8d8d8" stroke="none" stroke-width="0.7" /><rect x="184.00" y="245.30" width="3.60" height="32.50" fill="#d8d8d8" stroke="none" stroke-width="0.7" /><rect x="212.00" y="245.30" width="2.60" height="14.00" fill="#d8d8d8" stroke="none" stroke-width="0.7" /><rect x="200.20" y="223.50" width="2.80" height="20.50" fill="#d8d8d8" stroke="none" stroke-width="0.7" rx="1"/><path d="M201.60 240l-3 5.3h7.5z" stroke="none" stroke-width="0" fill="#d8d8d8" /><ellipse cx="228.60" cy="227.6" rx="4.2" ry="4.8" fill="#d8d8d8"/><path d="M226.40 232C237.60 233 238.40 240 237.40 248L238.00 259.5L211.60 259.5L211.00 254.4L224.50 250.8L215.50 246.4L215.00 249L223.00 246L224.00 238Z" stroke="none" stroke-width="0" fill="#d8d8d8" /><path d="M211.00 254.4L204.00 277.6L208.60 277.6L218.00 259.5Z" stroke="none" stroke-width="0" fill="#d8d8d8" /><path d="M216.00 257L211.40 277.6L215.60 277.6L222.00 258Z" stroke="none" stroke-width="0" fill="#d8d8d8" /><rect x="230.40" y="258.00" width="2.40" height="20.00" fill="#d8d8d8" stroke="none" stroke-width="0.7" /><rect x="222.00" y="258.60" width="14.00" height="1.80" fill="#d8d8d8" stroke="none" stroke-width="0.7" /></g><path d="M186.20 176.6l6.4-2.6v3.4z" stroke="none" stroke-width="0" fill="#222" /><path d="M188.20 176.6l3-1.2v1.4z" stroke="none" stroke-width="0" fill="#e8c020" /><path d="M193.80 173L224.80 173L221.20 179.4L197.60 179.4Z" stroke="#e62a30" stroke-width="0.8" fill="#f47070" /><rect x="199.40" y="174.40" width="6.40" height="4.00" fill="#f2801a" stroke="#d8242a" stroke-width="0.4" /><rect x="212.60" y="174.40" width="6.40" height="4.00" fill="#f2801a" stroke="#d8242a" stroke-width="0.4" /><rect x="206.60" y="174.40" width="5.20" height="4.00" fill="#c9c9c9" stroke="none" stroke-width="0.7" /><circle cx="229.40" cy="176" r="3.9" fill="#fff" stroke="#999" stroke-width=".45" stroke-dasharray=".8 .6"/><path d="M225.20 176.60L233.60 176.60" stroke="#222" stroke-width="0.6" /><text x="229.40" y="179.00" font-size="2" fill="#23c" font-weight="bold" stroke="#23c" stroke-width="0.09" text-anchor="middle" >PIR</text><path d="M229.40 180.00L229.40 222.50" stroke="#8a8a8a" stroke-width="0.5" stroke-dasharray="1.2 1.2"/><path d="M243.60 194.4a3 3 0 0 1 6 0z" stroke="#999" stroke-width="0.4" fill="#fff" stroke-dasharray=".7 .5"/><path d="M242.60 194.50L250.60 194.50" stroke="#222" stroke-width="0.5" /><rect x="245.60" y="195.00" width="2.20" height="1.60" fill="#34c" stroke="none" stroke-width="0.7" /><path d="M246.60 197.00L246.60 323.00" stroke="#444" stroke-width="0.45" stroke-dasharray="1 1.1"/><rect x="381.20" y="186.80" width="85.70" height="80.20" fill="#f0f0f0" stroke="#d0d0d0" stroke-width="0.5" /><rect x="388.80" y="188.60" width="70.40" height="76.20" fill="#f8f8f8" stroke="#d6d6d6" stroke-width="0.4" /><rect x="389.00" y="188.90" width="69.70" height="16.80" fill="url(#bl)" stroke="none" stroke-width="0.7" /><rect x="391.30" y="205.60" width="67.40" height="57.20" fill="url(#cy)" stroke="none" stroke-width="0.7" /><path d="M400.60 189.00L400.60 205.60" stroke="#c81a20" stroke-width="1" /><path d="M400.60 190.00L400.60 205.00" stroke="#300" stroke-width="0.9" stroke-dasharray=".6 2.25"/><path d="M450.60 189.00L450.60 205.60" stroke="#c81a20" stroke-width="1" /><path d="M450.60 190.00L450.60 205.00" stroke="#300" stroke-width="0.9" stroke-dasharray=".6 2.25"/><g opacity=".88"><rect x="400.20" y="245.30" width="33.00" height="3.00" fill="#d8d8d8" stroke="none" stroke-width="0.7" /><rect x="400.20" y="245.30" width="3.60" height="32.50" fill="#d8d8d8" stroke="none" stroke-width="0.7" /><rect x="428.20" y="245.30" width="2.60" height="14.00" fill="#d8d8d8" stroke="none" stroke-width="0.7" /><rect x="416.40" y="223.50" width="2.80" height="20.50" fill="#d8d8d8" stroke="none" stroke-width="0.7" rx="1"/><path d="M417.80 240l-3 5.3h7.5z" stroke="none" stroke-width="0" fill="#d8d8d8" /><ellipse cx="444.80" cy="227.6" rx="4.2" ry="4.8" fill="#d8d8d8"/><path d="M442.60 232C453.80 233 454.60 240 453.60 248L454.20 259.5L427.80 259.5L427.20 254.4L440.70 250.8L431.70 246.4L431.20 249L439.20 246L440.20 238Z" stroke="none" stroke-width="0" fill="#d8d8d8" /><path d="M427.20 254.4L420.20 277.6L424.80 277.6L434.20 259.5Z" stroke="none" stroke-width="0" fill="#d8d8d8" /><path d="M432.20 257L427.60 277.6L431.80 277.6L438.20 258Z" stroke="none" stroke-width="0" fill="#d8d8d8" /><rect x="446.60" y="258.00" width="2.40" height="20.00" fill="#d8d8d8" stroke="none" stroke-width="0.7" /><rect x="438.20" y="258.60" width="14.00" height="1.80" fill="#d8d8d8" stroke="none" stroke-width="0.7" /></g><path d="M402.40 176.6l6.4-2.6v3.4z" stroke="none" stroke-width="0" fill="#222" /><path d="M404.40 176.6l3-1.2v1.4z" stroke="none" stroke-width="0" fill="#e8c020" /><path d="M410.00 173L441.00 173L437.40 179.4L413.80 179.4Z" stroke="#e62a30" stroke-width="0.8" fill="#f47070" /><rect x="415.60" y="174.40" width="6.40" height="4.00" fill="#f2801a" stroke="#d8242a" stroke-width="0.4" /><rect x="428.80" y="174.40" width="6.40" height="4.00" fill="#f2801a" stroke="#d8242a" stroke-width="0.4" /><rect x="422.80" y="174.40" width="5.20" height="4.00" fill="#c9c9c9" stroke="none" stroke-width="0.7" /><circle cx="445.60" cy="176" r="3.9" fill="#fff" stroke="#999" stroke-width=".45" stroke-dasharray=".8 .6"/><path d="M441.40 176.60L449.80 176.60" stroke="#222" stroke-width="0.6" /><text x="445.60" y="179.00" font-size="2" fill="#23c" font-weight="bold" stroke="#23c" stroke-width="0.09" text-anchor="middle" >PIR</text><path d="M445.60 180.00L445.60 222.50" stroke="#8a8a8a" stroke-width="0.5" stroke-dasharray="1.2 1.2"/><path d="M459.80 194.4a3 3 0 0 1 6 0z" stroke="#999" stroke-width="0.4" fill="#fff" stroke-dasharray=".7 .5"/><path d="M458.80 194.50L466.80 194.50" stroke="#222" stroke-width="0.5" /><rect x="461.80" y="195.00" width="2.20" height="1.60" fill="#34c" stroke="none" stroke-width="0.7" /><path d="M462.80 197.00L462.80 323.00" stroke="#444" stroke-width="0.45" stroke-dasharray="1 1.1"/><rect x="570.60" y="186.80" width="85.70" height="80.20" fill="#f0f0f0" stroke="#d0d0d0" stroke-width="0.5" /><rect x="578.20" y="188.60" width="70.40" height="76.20" fill="#f8f8f8" stroke="#d6d6d6" stroke-width="0.4" /><rect x="578.40" y="188.90" width="69.70" height="16.80" fill="url(#bl)" stroke="none" stroke-width="0.7" /><rect x="580.70" y="205.60" width="67.40" height="57.20" fill="url(#cy)" stroke="none" stroke-width="0.7" /><path d="M590.00 189.00L590.00 205.60" stroke="#c81a20" stroke-width="1" /><path d="M590.00 190.00L590.00 205.00" stroke="#300" stroke-width="0.9" stroke-dasharray=".6 2.25"/><path d="M640.00 189.00L640.00 205.60" stroke="#c81a20" stroke-width="1" /><path d="M640.00 190.00L640.00 205.00" stroke="#300" stroke-width="0.9" stroke-dasharray=".6 2.25"/><g opacity=".88"><rect x="589.60" y="245.30" width="33.00" height="3.00" fill="#d8d8d8" stroke="none" stroke-width="0.7" /><rect x="589.60" y="245.30" width="3.60" height="32.50" fill="#d8d8d8" stroke="none" stroke-width="0.7" /><rect x="617.60" y="245.30" width="2.60" height="14.00" fill="#d8d8d8" stroke="none" stroke-width="0.7" /><rect x="605.80" y="223.50" width="2.80" height="20.50" fill="#d8d8d8" stroke="none" stroke-width="0.7" rx="1"/><path d="M607.20 240l-3 5.3h7.5z" stroke="none" stroke-width="0" fill="#d8d8d8" /><ellipse cx="634.20" cy="227.6" rx="4.2" ry="4.8" fill="#d8d8d8"/><path d="M632.00 232C643.20 233 644.00 240 643.00 248L643.60 259.5L617.20 259.5L616.60 254.4L630.10 250.8L621.10 246.4L620.60 249L628.60 246L629.60 238Z" stroke="none" stroke-width="0" fill="#d8d8d8" /><path d="M616.60 254.4L609.60 277.6L614.20 277.6L623.60 259.5Z" stroke="none" stroke-width="0" fill="#d8d8d8" /><path d="M621.60 257L617.00 277.6L621.20 277.6L627.60 258Z" stroke="none" stroke-width="0" fill="#d8d8d8" /><rect x="636.00" y="258.00" width="2.40" height="20.00" fill="#d8d8d8" stroke="none" stroke-width="0.7" /><rect x="627.60" y="258.60" width="14.00" height="1.80" fill="#d8d8d8" stroke="none" stroke-width="0.7" /></g><path d="M591.80 176.6l6.4-2.6v3.4z" stroke="none" stroke-width="0" fill="#222" /><path d="M593.80 176.6l3-1.2v1.4z" stroke="none" stroke-width="0" fill="#e8c020" /><path d="M599.40 173L630.40 173L626.80 179.4L603.20 179.4Z" stroke="#e62a30" stroke-width="0.8" fill="#f47070" /><rect x="605.00" y="174.40" width="6.40" height="4.00" fill="#f2801a" stroke="#d8242a" stroke-width="0.4" /><rect x="618.20" y="174.40" width="6.40" height="4.00" fill="#f2801a" stroke="#d8242a" stroke-width="0.4" /><rect x="612.20" y="174.40" width="5.20" height="4.00" fill="#c9c9c9" stroke="none" stroke-width="0.7" /><circle cx="635.00" cy="176" r="3.9" fill="#fff" stroke="#999" stroke-width=".45" stroke-dasharray=".8 .6"/><path d="M630.80 176.60L639.20 176.60" stroke="#222" stroke-width="0.6" /><text x="635.00" y="179.00" font-size="2" fill="#23c" font-weight="bold" stroke="#23c" stroke-width="0.09" text-anchor="middle" >PIR</text><path d="M635.00 180.00L635.00 222.50" stroke="#8a8a8a" stroke-width="0.5" stroke-dasharray="1.2 1.2"/><path d="M649.20 194.4a3 3 0 0 1 6 0z" stroke="#999" stroke-width="0.4" fill="#fff" stroke-dasharray=".7 .5"/><path d="M648.20 194.50L656.20 194.50" stroke="#222" stroke-width="0.5" /><rect x="651.20" y="195.00" width="2.20" height="1.60" fill="#34c" stroke="none" stroke-width="0.7" /><path d="M652.20 197.00L652.20 323.00" stroke="#444" stroke-width="0.45" stroke-dasharray="1 1.1"/><path d="M301.60 173.8l1.3-1.7m1.1 1.7l1.3-1.7m1.1 1.7l1.3-1.7m1.1 1.7l1.3-1.7m1.1 1.7l1.3-1.7m1.1 1.7l1.3-1.7m1.1 1.7l1.3-1.7m1.1 1.7l1.3-1.7m1.1 1.7l1.3-1.7m1.1 1.7l1.3-1.7m1.1 1.7l1.3-1.7m1.1 1.7l1.3-1.7m1.1 1.7l1.3-1.7m1.1 1.7" stroke="#e8444a" stroke-width="0.4" fill="none" /><path d="M301.60 177.20L333.80 177.20" stroke="#222" stroke-width="0.6" /><path d="M302.80 177.4a3.4 3.4 0 0 0 6.8 0" stroke="#888" stroke-width="0.4" fill="#fff" stroke-dasharray=".8 .5"/><path d="M306.20 175.60L306.20 177.20" stroke="#222" stroke-width="0.5" /><path d="M310.40 177.4a3.4 3.4 0 0 0 6.8 0" stroke="#888" stroke-width="0.4" fill="#fff" stroke-dasharray=".8 .5"/><path d="M313.80 175.60L313.80 177.20" stroke="#222" stroke-width="0.5" /><path d="M318.00 177.4a3.4 3.4 0 0 0 6.8 0" stroke="#888" stroke-width="0.4" fill="#fff" stroke-dasharray=".8 .5"/><path d="M321.40 175.60L321.40 177.20" stroke="#222" stroke-width="0.5" /><path d="M325.60 177.4a3.4 3.4 0 0 0 6.8 0" stroke="#888" stroke-width="0.4" fill="#fff" stroke-dasharray=".8 .5"/><path d="M329.00 175.60L329.00 177.20" stroke="#222" stroke-width="0.5" /><rect x="304.00" y="177.80" width="2.40" height="2.00" fill="#34c" stroke="none" stroke-width="0.7" /><path d="M312.40 181.4a5 3 0 0 0 10 0z" stroke="#777" stroke-width="0.4" fill="#f4f4f4" /><path d="M315.60 184.6l-.8 1.6M319.60 184.6l.8 1.6" stroke="#d33" stroke-width="0.45" fill="none" /><path d="M503.20 173.8l1.3-1.7m1.1 1.7l1.3-1.7m1.1 1.7l1.3-1.7m1.1 1.7l1.3-1.7m1.1 1.7l1.3-1.7m1.1 1.7l1.3-1.7m1.1 1.7l1.3-1.7m1.1 1.7l1.3-1.7m1.1 1.7l1.3-1.7m1.1 1.7l1.3-1.7m1.1 1.7l1.3-1.7m1.1 1.7l1.3-1.7m1.1 1.7l1.3-1.7m1.1 1.7" stroke="#e8444a" stroke-width="0.4" fill="none" /><path d="M503.20 177.20L535.40 177.20" stroke="#222" stroke-width="0.6" /><path d="M504.40 177.4a3.4 3.4 0 0 0 6.8 0" stroke="#888" stroke-width="0.4" fill="#fff" stroke-dasharray=".8 .5"/><path d="M507.80 175.60L507.80 177.20" stroke="#222" stroke-width="0.5" /><path d="M512.00 177.4a3.4 3.4 0 0 0 6.8 0" stroke="#888" stroke-width="0.4" fill="#fff" stroke-dasharray=".8 .5"/><path d="M515.40 175.60L515.40 177.20" stroke="#222" stroke-width="0.5" /><path d="M519.60 177.4a3.4 3.4 0 0 0 6.8 0" stroke="#888" stroke-width="0.4" fill="#fff" stroke-dasharray=".8 .5"/><path d="M523.00 175.60L523.00 177.20" stroke="#222" stroke-width="0.5" /><path d="M527.20 177.4a3.4 3.4 0 0 0 6.8 0" stroke="#888" stroke-width="0.4" fill="#fff" stroke-dasharray=".8 .5"/><path d="M530.60 175.60L530.60 177.20" stroke="#222" stroke-width="0.5" /><rect x="505.60" y="177.80" width="2.40" height="2.00" fill="#34c" stroke="none" stroke-width="0.7" /><path d="M514.00 181.4a5 3 0 0 0 10 0z" stroke="#777" stroke-width="0.4" fill="#f4f4f4" /><path d="M517.20 184.6l-.8 1.6M521.20 184.6l.8 1.6" stroke="#d33" stroke-width="0.45" fill="none" /><path d="M305.6 184.4H94.6V323.4" stroke="#333" stroke-width="0.5" fill="none" stroke-dasharray="1 1.3"/><path d="M531.8 184.2H774.6V323.4" stroke="#333" stroke-width="0.5" fill="none" stroke-dasharray="1 1.3"/><path d="M304.6 184.4l1.2-1.4" stroke="#2a2" stroke-width="0.6" fill="none" /><path d="M531.4 184.2l1.2-1.4" stroke="#2a2" stroke-width="0.6" fill="none" /><rect x="94.00" y="183.80" width="1.20" height="1.20" fill="#2a2" stroke="none" stroke-width="0.7" /><rect x="774.00" y="183.60" width="1.20" height="1.20" fill="#2a2" stroke="none" stroke-width="0.7" /><path d="M179.00 285.8H241.00L236.00 289H184.00Z" stroke="#c8c8c8" stroke-width="0.3" fill="#ececec" /><circle cx="179.60" cy="286.6" r=".9" fill="#fff" stroke="#e44" stroke-width=".4"/><circle cx="240.40" cy="286.6" r=".9" fill="#fff" stroke="#e44" stroke-width=".4"/><rect x="185.60" y="289.40" width="48.20" height="16.80" fill="url(#gfc)" stroke="#cfcfcf" stroke-width="0.3" /><rect x="195.80" y="290.80" width="27.40" height="4.40" fill="url(#gbr)" stroke="none" stroke-width="0.7" /><circle cx="209.50" cy="300.6" r="4.9" fill="#f4f4f4" stroke="#888" stroke-width=".45" stroke-dasharray=".9 .7"/><text x="209.50" y="301.80" font-size="3.4" fill="#666" text-anchor="middle" >V</text><path d="M186.40 302.8a3.2 3.2 0 0 1 6.4 0z" stroke="#777" stroke-width="0.4" fill="#fff" /><path d="M185.80 303.00L193.60 303.00" stroke="#222" stroke-width="0.5" /><text x="189.60" y="305.60" font-size="2" fill="#23c" font-weight="bold" stroke="#23c" stroke-width="0.09" text-anchor="middle" >TIC</text><rect x="208.60" y="282.60" width="1.40" height="2.00" fill="#f2d020" stroke="none" stroke-width="0.7" /><path d="M209.50 306.40L209.50 323.40" stroke="#222" stroke-width="0.5" stroke-dasharray="1 1.2"/><path d="M229.40 276.00L229.40 289.00" stroke="#8a8a8a" stroke-width="0.5" stroke-dasharray="1.2 1.2"/><path d="M229.40 306.40L229.40 323.40" stroke="#9a9a9a" stroke-width="0.5" stroke-dasharray="1.2 1.2"/><path d="M233.80 291.1H307.70V308.4" stroke="#1e8fff" stroke-width="1" fill="none" /><path d="M239.60 290.2H308.20" stroke="#e8202a" stroke-width="0.9" fill="none" /><path d="M306.80 290.2V308" stroke="#e8202a" stroke-width="0.5" fill="none" /><path d="M233.80 293.6H291.40V297.6" stroke="#1740d0" stroke-width="1" fill="none" stroke-dasharray="1.6 1.1"/><path d="M289.60 297.4h3.4l-.5 8.6h-2.4z" stroke="#333" stroke-width="0.4" fill="#9a9a9a" /><path d="M290.60 298v8M292.00 298v8" stroke="#222" stroke-width="0.45" fill="none" /><path d="M288.80 306.4h5l-1.2 3.6h-2.6z" stroke="#333" stroke-width="0.4" fill="#808080" /><rect x="288.60" y="296.00" width="1.60" height="1.40" fill="#2a50d8" stroke="none" stroke-width="0.7" /><rect x="293.20" y="295.40" width="1.60" height="1.40" fill="none" stroke="#e22" stroke-width="0.4" /><path d="M286.80 310l2.6 3.6l-2.6 3.6zM295.60 310l-2.6 3.6l2.6 3.6z" stroke="#333" stroke-width="0.4" fill="#fff" /><path d="M289.20 309.8h4l-2 3.8zM289.20 317.6h4l-2-3.8z" stroke="#333" stroke-width="0.4" fill="#7a7a7a" /><path d="M289.60 309.4l-3-2.4M292.80 309.4l3-2.4M289.60 317.8l-3 2.2M292.80 317.8l3 2.2" stroke="#555" stroke-width="0.35" fill="none" /><path d="M303.20 310l2.6 3.6l-2.6 3.6zM312.00 310l-2.6 3.6l2.6 3.6z" stroke="#333" stroke-width="0.4" fill="#fff" /><path d="M305.60 309.8h4l-2 3.8zM305.60 317.6h4l-2-3.8z" stroke="#333" stroke-width="0.4" fill="#7a7a7a" /><path d="M306.00 309.4l-3-2.4M309.20 309.4l3-2.4M306.00 317.8l-3 2.2M309.20 317.8l3 2.2" stroke="#555" stroke-width="0.35" fill="none" /><path d="M293.00 313.60L305.60 313.60" stroke="#222" stroke-width="0.7" /><circle cx="299.20" cy="302.6" r="3.7" fill="#f6f6f6" stroke="#888" stroke-width=".45" stroke-dasharray=".8 .6"/><text x="299.20" y="303.60" font-size="2.6" fill="#777" text-anchor="middle" >M</text><ellipse cx="299.40" cy="311.4" rx="3.4" ry="1.7" fill="#fff" stroke="#666" stroke-width=".4"/><text x="299.40" y="316.40" font-size="2" fill="#23c" font-weight="bold" stroke="#23c" stroke-width="0.09" text-anchor="middle" >FIQ</text><rect x="283.60" y="310.60" width="1.50" height="1.40" fill="#fff" stroke="#e22" stroke-width="0.45" /><rect x="312.80" y="310.60" width="1.50" height="1.40" fill="#fff" stroke="#e22" stroke-width="0.45" /><rect x="308.60" y="306.00" width="1.50" height="1.40" fill="#fff" stroke="#e22" stroke-width="0.45" /><rect x="291.40" y="319.40" width="1.50" height="1.40" fill="#fff" stroke="#e22" stroke-width="0.45" /><path d="M303.20 302.6H346.20V323.4" stroke="#333" stroke-width="0.45" fill="none" stroke-dasharray="1 1.2"/><path d="M345.00 302.6l1.2-1.4" stroke="#2a2" stroke-width="0.6" fill="none" /><path d="M286.40 313.6H282.20V325H294.00V342.3H320.00" stroke="#1740d0" stroke-width="1" fill="none" stroke-dasharray="1.6 1.1"/><path d="M291.40 319.4V321.6H296.60V334.3H320.00" stroke="#1740d0" stroke-width="1" fill="none" stroke-dasharray="1.6 1.1"/><path d="M277.50 334.3H296.60M277.50 342.3H294.00" stroke="#1740d0" stroke-width="1" fill="none" stroke-dasharray="1.6 1.1"/><path d="M307.60 318V322H301.60V330.5" stroke="#e8202a" stroke-width="1.1" fill="none" /><path d="M277.50 330.50L320.00 330.50" stroke="#e8202a" stroke-width="1.1" /><path d="M311.80 313.6H316.60V325H304.60V338.5" stroke="#1e8fff" stroke-width="1.1" fill="none" /><path d="M277.50 338.50L320.00 338.50" stroke="#1e8fff" stroke-width="1.1" /><path d="M279.60 330.50l-2.2-1v2zM321.00 330.50l-2.2-1v2z" stroke="none" stroke-width="0" fill="#111" /><text x="280.20" y="329.90" font-size="2.1" fill="#111" textLength="10.20" lengthAdjust="spacingAndGlyphs" font-weight="bold" stroke="#111" stroke-width="0.0945" >DN 15x3</text><text x="307.40" y="329.90" font-size="2.1" fill="#111" textLength="10.20" lengthAdjust="spacingAndGlyphs" font-weight="bold" stroke="#111" stroke-width="0.0945" >DN 15x3</text><text x="275.00" y="331.60" font-size="3.5" fill="#444" textLength="9.00" lengthAdjust="spacingAndGlyphs" text-anchor="end" >/1.14</text><text x="323.40" y="331.60" font-size="3.5" fill="#444" textLength="7.00" lengthAdjust="spacingAndGlyphs" >/4.8</text><path d="M279.60 334.30l-2.2-1v2zM321.00 334.30l-2.2-1v2z" stroke="none" stroke-width="0" fill="#111" /><text x="280.20" y="333.70" font-size="2.1" fill="#111" textLength="10.20" lengthAdjust="spacingAndGlyphs" font-weight="bold" stroke="#111" stroke-width="0.0945" >DN 15x3</text><text x="307.40" y="333.70" font-size="2.1" fill="#111" textLength="10.20" lengthAdjust="spacingAndGlyphs" font-weight="bold" stroke="#111" stroke-width="0.0945" >DN 15x3</text><text x="276.20" y="335.40" font-size="3.5" fill="#444" textLength="9.00" lengthAdjust="spacingAndGlyphs" text-anchor="end" >/1.14</text><text x="324.60" y="335.40" font-size="3.5" fill="#444" textLength="7.00" lengthAdjust="spacingAndGlyphs" >/4.8</text><path d="M279.60 338.50l-2.2-1v2zM321.00 338.50l-2.2-1v2z" stroke="none" stroke-width="0" fill="#111" /><text x="280.20" y="337.90" font-size="2.1" fill="#111" textLength="10.20" lengthAdjust="spacingAndGlyphs" font-weight="bold" stroke="#111" stroke-width="0.0945" >DN 15x3</text><text x="307.40" y="337.90" font-size="2.1" fill="#111" textLength="10.20" lengthAdjust="spacingAndGlyphs" font-weight="bold" stroke="#111" stroke-width="0.0945" >DN 15x3</text><text x="275.00" y="339.60" font-size="3.5" fill="#444" textLength="9.00" lengthAdjust="spacingAndGlyphs" text-anchor="end" >/6.10</text><text x="323.40" y="339.60" font-size="3.5" fill="#444" textLength="7.00" lengthAdjust="spacingAndGlyphs" >/4.8</text><path d="M279.60 342.30l-2.2-1v2zM321.00 342.30l-2.2-1v2z" stroke="none" stroke-width="0" fill="#111" /><text x="280.20" y="341.70" font-size="2.1" fill="#111" textLength="10.20" lengthAdjust="spacingAndGlyphs" font-weight="bold" stroke="#111" stroke-width="0.0945" >DN 15x3</text><text x="307.40" y="341.70" font-size="2.1" fill="#111" textLength="10.20" lengthAdjust="spacingAndGlyphs" font-weight="bold" stroke="#111" stroke-width="0.0945" >DN 15x3</text><text x="276.20" y="343.40" font-size="3.5" fill="#444" textLength="9.00" lengthAdjust="spacingAndGlyphs" text-anchor="end" >/6.10</text><text x="324.60" y="343.40" font-size="3.5" fill="#444" textLength="7.00" lengthAdjust="spacingAndGlyphs" >/4.8</text><path d="M395.00 285.8H457.00L452.00 289H400.00Z" stroke="#c8c8c8" stroke-width="0.3" fill="#ececec" /><circle cx="395.60" cy="286.6" r=".9" fill="#fff" stroke="#e44" stroke-width=".4"/><circle cx="456.40" cy="286.6" r=".9" fill="#fff" stroke="#e44" stroke-width=".4"/><rect x="401.60" y="289.40" width="48.20" height="16.80" fill="url(#gfc)" stroke="#cfcfcf" stroke-width="0.3" /><rect x="411.80" y="290.80" width="27.40" height="4.40" fill="url(#gbr)" stroke="none" stroke-width="0.7" /><circle cx="425.50" cy="300.6" r="4.9" fill="#f4f4f4" stroke="#888" stroke-width=".45" stroke-dasharray=".9 .7"/><text x="425.50" y="301.80" font-size="3.4" fill="#666" text-anchor="middle" >V</text><path d="M402.40 302.8a3.2 3.2 0 0 1 6.4 0z" stroke="#777" stroke-width="0.4" fill="#fff" /><path d="M401.80 303.00L409.60 303.00" stroke="#222" stroke-width="0.5" /><text x="405.60" y="305.60" font-size="2" fill="#23c" font-weight="bold" stroke="#23c" stroke-width="0.09" text-anchor="middle" >TIC</text><rect x="424.60" y="282.60" width="1.40" height="2.00" fill="#f2d020" stroke="none" stroke-width="0.7" /><path d="M425.50 306.40L425.50 323.40" stroke="#222" stroke-width="0.5" stroke-dasharray="1 1.2"/><path d="M445.40 276.00L445.40 289.00" stroke="#8a8a8a" stroke-width="0.5" stroke-dasharray="1.2 1.2"/><path d="M445.40 306.40L445.40 323.40" stroke="#9a9a9a" stroke-width="0.5" stroke-dasharray="1.2 1.2"/><path d="M449.80 291.1H523.70V308.4" stroke="#1e8fff" stroke-width="1" fill="none" /><path d="M455.60 290.2H524.20" stroke="#e8202a" stroke-width="0.9" fill="none" /><path d="M522.80 290.2V308" stroke="#e8202a" stroke-width="0.5" fill="none" /><path d="M449.80 293.6H507.40V297.6" stroke="#1740d0" stroke-width="1" fill="none" stroke-dasharray="1.6 1.1"/><path d="M505.60 297.4h3.4l-.5 8.6h-2.4z" stroke="#333" stroke-width="0.4" fill="#9a9a9a" /><path d="M506.60 298v8M508.00 298v8" stroke="#222" stroke-width="0.45" fill="none" /><path d="M504.80 306.4h5l-1.2 3.6h-2.6z" stroke="#333" stroke-width="0.4" fill="#808080" /><rect x="504.60" y="296.00" width="1.60" height="1.40" fill="#2a50d8" stroke="none" stroke-width="0.7" /><rect x="509.20" y="295.40" width="1.60" height="1.40" fill="none" stroke="#e22" stroke-width="0.4" /><path d="M502.80 310l2.6 3.6l-2.6 3.6zM511.60 310l-2.6 3.6l2.6 3.6z" stroke="#333" stroke-width="0.4" fill="#fff" /><path d="M505.20 309.8h4l-2 3.8zM505.20 317.6h4l-2-3.8z" stroke="#333" stroke-width="0.4" fill="#7a7a7a" /><path d="M505.60 309.4l-3-2.4M508.80 309.4l3-2.4M505.60 317.8l-3 2.2M508.80 317.8l3 2.2" stroke="#555" stroke-width="0.35" fill="none" /><path d="M519.20 310l2.6 3.6l-2.6 3.6zM528.00 310l-2.6 3.6l2.6 3.6z" stroke="#333" stroke-width="0.4" fill="#fff" /><path d="M521.60 309.8h4l-2 3.8zM521.60 317.6h4l-2-3.8z" stroke="#333" stroke-width="0.4" fill="#7a7a7a" /><path d="M522.00 309.4l-3-2.4M525.20 309.4l3-2.4M522.00 317.8l-3 2.2M525.20 317.8l3 2.2" stroke="#555" stroke-width="0.35" fill="none" /><path d="M509.00 313.60L521.60 313.60" stroke="#222" stroke-width="0.7" /><circle cx="515.20" cy="302.6" r="3.7" fill="#f6f6f6" stroke="#888" stroke-width=".45" stroke-dasharray=".8 .6"/><text x="515.20" y="303.60" font-size="2.6" fill="#777" text-anchor="middle" >M</text><ellipse cx="515.40" cy="311.4" rx="3.4" ry="1.7" fill="#fff" stroke="#666" stroke-width=".4"/><text x="515.40" y="316.40" font-size="2" fill="#23c" font-weight="bold" stroke="#23c" stroke-width="0.09" text-anchor="middle" >FIQ</text><rect x="499.60" y="310.60" width="1.50" height="1.40" fill="#fff" stroke="#e22" stroke-width="0.45" /><rect x="528.80" y="310.60" width="1.50" height="1.40" fill="#fff" stroke="#e22" stroke-width="0.45" /><rect x="524.60" y="306.00" width="1.50" height="1.40" fill="#fff" stroke="#e22" stroke-width="0.45" /><rect x="507.40" y="319.40" width="1.50" height="1.40" fill="#fff" stroke="#e22" stroke-width="0.45" /><path d="M519.20 302.6H562.20V323.4" stroke="#333" stroke-width="0.45" fill="none" stroke-dasharray="1 1.2"/><path d="M561.00 302.6l1.2-1.4" stroke="#2a2" stroke-width="0.6" fill="none" /><path d="M502.40 313.6H498.20V325H510.00V342.3H536.00" stroke="#1740d0" stroke-width="1" fill="none" stroke-dasharray="1.6 1.1"/><path d="M507.40 319.4V321.6H512.60V334.3H536.00" stroke="#1740d0" stroke-width="1" fill="none" stroke-dasharray="1.6 1.1"/><path d="M493.50 334.3H512.60M493.50 342.3H510.00" stroke="#1740d0" stroke-width="1" fill="none" stroke-dasharray="1.6 1.1"/><path d="M523.60 318V322H517.60V330.5" stroke="#e8202a" stroke-width="1.1" fill="none" /><path d="M493.50 330.50L536.00 330.50" stroke="#e8202a" stroke-width="1.1" /><path d="M527.80 313.6H532.60V325H520.60V338.5" stroke="#1e8fff" stroke-width="1.1" fill="none" /><path d="M493.50 338.50L536.00 338.50" stroke="#1e8fff" stroke-width="1.1" /><path d="M495.60 330.50l-2.2-1v2zM537.00 330.50l-2.2-1v2z" stroke="none" stroke-width="0" fill="#111" /><text x="496.20" y="329.90" font-size="2.1" fill="#111" textLength="10.20" lengthAdjust="spacingAndGlyphs" font-weight="bold" stroke="#111" stroke-width="0.0945" >DN 15x3</text><text x="523.40" y="329.90" font-size="2.1" fill="#111" textLength="10.20" lengthAdjust="spacingAndGlyphs" font-weight="bold" stroke="#111" stroke-width="0.0945" >DN 15x3</text><text x="491.00" y="331.60" font-size="3.5" fill="#444" textLength="7.00" lengthAdjust="spacingAndGlyphs" text-anchor="end" >/4.8</text><text x="539.40" y="331.60" font-size="3.5" fill="#444" textLength="9.00" lengthAdjust="spacingAndGlyphs" >/4.11</text><path d="M495.60 334.30l-2.2-1v2zM537.00 334.30l-2.2-1v2z" stroke="none" stroke-width="0" fill="#111" /><text x="496.20" y="333.70" font-size="2.1" fill="#111" textLength="10.20" lengthAdjust="spacingAndGlyphs" font-weight="bold" stroke="#111" stroke-width="0.0945" >DN 15x3</text><text x="523.40" y="333.70" font-size="2.1" fill="#111" textLength="10.20" lengthAdjust="spacingAndGlyphs" font-weight="bold" stroke="#111" stroke-width="0.0945" >DN 15x3</text><text x="492.20" y="335.40" font-size="3.5" fill="#444" textLength="7.00" lengthAdjust="spacingAndGlyphs" text-anchor="end" >/4.8</text><text x="540.60" y="335.40" font-size="3.5" fill="#444" textLength="9.00" lengthAdjust="spacingAndGlyphs" >/4.11</text><path d="M495.60 338.50l-2.2-1v2zM537.00 338.50l-2.2-1v2z" stroke="none" stroke-width="0" fill="#111" /><text x="496.20" y="337.90" font-size="2.1" fill="#111" textLength="10.20" lengthAdjust="spacingAndGlyphs" font-weight="bold" stroke="#111" stroke-width="0.0945" >DN 15x3</text><text x="523.40" y="337.90" font-size="2.1" fill="#111" textLength="10.20" lengthAdjust="spacingAndGlyphs" font-weight="bold" stroke="#111" stroke-width="0.0945" >DN 15x3</text><text x="491.00" y="339.60" font-size="3.5" fill="#444" textLength="7.00" lengthAdjust="spacingAndGlyphs" text-anchor="end" >/4.8</text><text x="539.40" y="339.60" font-size="3.5" fill="#444" textLength="9.00" lengthAdjust="spacingAndGlyphs" >/4.11</text><path d="M495.60 342.30l-2.2-1v2zM537.00 342.30l-2.2-1v2z" stroke="none" stroke-width="0" fill="#111" /><text x="496.20" y="341.70" font-size="2.1" fill="#111" textLength="10.20" lengthAdjust="spacingAndGlyphs" font-weight="bold" stroke="#111" stroke-width="0.0945" >DN 15x3</text><text x="523.40" y="341.70" font-size="2.1" fill="#111" textLength="10.20" lengthAdjust="spacingAndGlyphs" font-weight="bold" stroke="#111" stroke-width="0.0945" >DN 15x3</text><text x="492.20" y="343.40" font-size="3.5" fill="#444" textLength="7.00" lengthAdjust="spacingAndGlyphs" text-anchor="end" >/4.8</text><text x="540.60" y="343.40" font-size="3.5" fill="#444" textLength="9.00" lengthAdjust="spacingAndGlyphs" >/4.11</text><path d="M584.75 285.8H646.75L641.75 289H589.75Z" stroke="#c8c8c8" stroke-width="0.3" fill="#ececec" /><circle cx="585.35" cy="286.6" r=".9" fill="#fff" stroke="#e44" stroke-width=".4"/><circle cx="646.15" cy="286.6" r=".9" fill="#fff" stroke="#e44" stroke-width=".4"/><rect x="591.35" y="289.40" width="48.20" height="16.80" fill="url(#gfc)" stroke="#cfcfcf" stroke-width="0.3" /><rect x="601.55" y="290.80" width="27.40" height="4.40" fill="url(#gbr)" stroke="none" stroke-width="0.7" /><circle cx="615.25" cy="300.6" r="4.9" fill="#f4f4f4" stroke="#888" stroke-width=".45" stroke-dasharray=".9 .7"/><text x="615.25" y="301.80" font-size="3.4" fill="#666" text-anchor="middle" >V</text><path d="M592.15 302.8a3.2 3.2 0 0 1 6.4 0z" stroke="#777" stroke-width="0.4" fill="#fff" /><path d="M591.55 303.00L599.35 303.00" stroke="#222" stroke-width="0.5" /><text x="595.35" y="305.60" font-size="2" fill="#23c" font-weight="bold" stroke="#23c" stroke-width="0.09" text-anchor="middle" >TIC</text><rect x="614.35" y="282.60" width="1.40" height="2.00" fill="#f2d020" stroke="none" stroke-width="0.7" /><path d="M615.25 306.40L615.25 323.40" stroke="#222" stroke-width="0.5" stroke-dasharray="1 1.2"/><path d="M635.15 276.00L635.15 289.00" stroke="#8a8a8a" stroke-width="0.5" stroke-dasharray="1.2 1.2"/><path d="M635.15 306.40L635.15 323.40" stroke="#9a9a9a" stroke-width="0.5" stroke-dasharray="1.2 1.2"/><path d="M639.55 291.1H713.45V308.4" stroke="#1e8fff" stroke-width="1" fill="none" /><path d="M645.35 290.2H713.95" stroke="#e8202a" stroke-width="0.9" fill="none" /><path d="M712.55 290.2V308" stroke="#e8202a" stroke-width="0.5" fill="none" /><path d="M639.55 293.6H697.15V297.6" stroke="#1740d0" stroke-width="1" fill="none" stroke-dasharray="1.6 1.1"/><path d="M695.35 297.4h3.4l-.5 8.6h-2.4z" stroke="#333" stroke-width="0.4" fill="#9a9a9a" /><path d="M696.35 298v8M697.75 298v8" stroke="#222" stroke-width="0.45" fill="none" /><path d="M694.55 306.4h5l-1.2 3.6h-2.6z" stroke="#333" stroke-width="0.4" fill="#808080" /><rect x="694.35" y="296.00" width="1.60" height="1.40" fill="#2a50d8" stroke="none" stroke-width="0.7" /><rect x="698.95" y="295.40" width="1.60" height="1.40" fill="none" stroke="#e22" stroke-width="0.4" /><path d="M692.55 310l2.6 3.6l-2.6 3.6zM701.35 310l-2.6 3.6l2.6 3.6z" stroke="#333" stroke-width="0.4" fill="#fff" /><path d="M694.95 309.8h4l-2 3.8zM694.95 317.6h4l-2-3.8z" stroke="#333" stroke-width="0.4" fill="#7a7a7a" /><path d="M695.35 309.4l-3-2.4M698.55 309.4l3-2.4M695.35 317.8l-3 2.2M698.55 317.8l3 2.2" stroke="#555" stroke-width="0.35" fill="none" /><path d="M708.95 310l2.6 3.6l-2.6 3.6zM717.75 310l-2.6 3.6l2.6 3.6z" stroke="#333" stroke-width="0.4" fill="#fff" /><path d="M711.35 309.8h4l-2 3.8zM711.35 317.6h4l-2-3.8z" stroke="#333" stroke-width="0.4" fill="#7a7a7a" /><path d="M711.75 309.4l-3-2.4M714.95 309.4l3-2.4M711.75 317.8l-3 2.2M714.95 317.8l3 2.2" stroke="#555" stroke-width="0.35" fill="none" /><path d="M698.75 313.60L711.35 313.60" stroke="#222" stroke-width="0.7" /><circle cx="704.95" cy="302.6" r="3.7" fill="#f6f6f6" stroke="#888" stroke-width=".45" stroke-dasharray=".8 .6"/><text x="704.95" y="303.60" font-size="2.6" fill="#777" text-anchor="middle" >M</text><ellipse cx="705.15" cy="311.4" rx="3.4" ry="1.7" fill="#fff" stroke="#666" stroke-width=".4"/><text x="705.15" y="316.40" font-size="2" fill="#23c" font-weight="bold" stroke="#23c" stroke-width="0.09" text-anchor="middle" >FIQ</text><rect x="689.35" y="310.60" width="1.50" height="1.40" fill="#fff" stroke="#e22" stroke-width="0.45" /><rect x="718.55" y="310.60" width="1.50" height="1.40" fill="#fff" stroke="#e22" stroke-width="0.45" /><rect x="714.35" y="306.00" width="1.50" height="1.40" fill="#fff" stroke="#e22" stroke-width="0.45" /><rect x="697.15" y="319.40" width="1.50" height="1.40" fill="#fff" stroke="#e22" stroke-width="0.45" /><path d="M708.95 302.6H751.95V323.4" stroke="#333" stroke-width="0.45" fill="none" stroke-dasharray="1 1.2"/><path d="M750.75 302.6l1.2-1.4" stroke="#2a2" stroke-width="0.6" fill="none" /><path d="M692.15 313.6H687.95V325H699.75V342.3H725.75" stroke="#1740d0" stroke-width="1" fill="none" stroke-dasharray="1.6 1.1"/><path d="M697.15 319.4V321.6H702.35V334.3H725.75" stroke="#1740d0" stroke-width="1" fill="none" stroke-dasharray="1.6 1.1"/><path d="M683.25 334.3H702.35M683.25 342.3H699.75" stroke="#1740d0" stroke-width="1" fill="none" stroke-dasharray="1.6 1.1"/><path d="M713.35 318V322H707.35V330.5" stroke="#e8202a" stroke-width="1.1" fill="none" /><path d="M683.25 330.50L725.75 330.50" stroke="#e8202a" stroke-width="1.1" /><path d="M717.55 313.6H722.35V325H710.35V338.5" stroke="#1e8fff" stroke-width="1.1" fill="none" /><path d="M683.25 338.50L725.75 338.50" stroke="#1e8fff" stroke-width="1.1" /><path d="M685.35 330.50l-2.2-1v2zM726.75 330.50l-2.2-1v2z" stroke="none" stroke-width="0" fill="#111" /><text x="685.95" y="329.90" font-size="2.1" fill="#111" textLength="10.20" lengthAdjust="spacingAndGlyphs" font-weight="bold" stroke="#111" stroke-width="0.0945" >DN 15x3</text><text x="713.15" y="329.90" font-size="2.1" fill="#111" textLength="10.20" lengthAdjust="spacingAndGlyphs" font-weight="bold" stroke="#111" stroke-width="0.0945" >DN 15x3</text><text x="680.75" y="331.60" font-size="3.5" fill="#444" textLength="7.00" lengthAdjust="spacingAndGlyphs" text-anchor="end" >/4.8</text><text x="729.15" y="331.60" font-size="3.5" fill="#444" textLength="9.00" lengthAdjust="spacingAndGlyphs" >/1.14</text><path d="M685.35 334.30l-2.2-1v2zM726.75 334.30l-2.2-1v2z" stroke="none" stroke-width="0" fill="#111" /><text x="685.95" y="333.70" font-size="2.1" fill="#111" textLength="10.20" lengthAdjust="spacingAndGlyphs" font-weight="bold" stroke="#111" stroke-width="0.0945" >DN 15x3</text><text x="713.15" y="333.70" font-size="2.1" fill="#111" textLength="10.20" lengthAdjust="spacingAndGlyphs" font-weight="bold" stroke="#111" stroke-width="0.0945" >DN 15x3</text><text x="681.95" y="335.40" font-size="3.5" fill="#444" textLength="7.00" lengthAdjust="spacingAndGlyphs" text-anchor="end" >/4.8</text><text x="730.35" y="335.40" font-size="3.5" fill="#444" textLength="9.00" lengthAdjust="spacingAndGlyphs" >/1.14</text><path d="M685.35 338.50l-2.2-1v2zM726.75 338.50l-2.2-1v2z" stroke="none" stroke-width="0" fill="#111" /><text x="685.95" y="337.90" font-size="2.1" fill="#111" textLength="10.20" lengthAdjust="spacingAndGlyphs" font-weight="bold" stroke="#111" stroke-width="0.0945" >DN 15x3</text><text x="713.15" y="337.90" font-size="2.1" fill="#111" textLength="10.20" lengthAdjust="spacingAndGlyphs" font-weight="bold" stroke="#111" stroke-width="0.0945" >DN 15x3</text><text x="680.75" y="339.60" font-size="3.5" fill="#444" textLength="7.00" lengthAdjust="spacingAndGlyphs" text-anchor="end" >/4.8</text><text x="729.15" y="339.60" font-size="3.5" fill="#444" textLength="9.00" lengthAdjust="spacingAndGlyphs" >/1.14</text><path d="M685.35 342.30l-2.2-1v2zM726.75 342.30l-2.2-1v2z" stroke="none" stroke-width="0" fill="#111" /><text x="685.95" y="341.70" font-size="2.1" fill="#111" textLength="10.20" lengthAdjust="spacingAndGlyphs" font-weight="bold" stroke="#111" stroke-width="0.0945" >DN 15x3</text><text x="713.15" y="341.70" font-size="2.1" fill="#111" textLength="10.20" lengthAdjust="spacingAndGlyphs" font-weight="bold" stroke="#111" stroke-width="0.0945" >DN 15x3</text><text x="681.95" y="343.40" font-size="3.5" fill="#444" textLength="7.00" lengthAdjust="spacingAndGlyphs" text-anchor="end" >/4.8</text><path d="M48.50 325.00L806.50 325.00" stroke="#5a5a5a" stroke-width="1" /><path d="M55.50 369.50L800.00 369.50" stroke="#2a2a2a" stroke-width="0.6" /><path d="M55.50 376.50L800.00 376.50" stroke="#2a2a2a" stroke-width="0.6" /><path d="M55.50 383.25L800.00 383.25" stroke="#2a2a2a" stroke-width="0.6" /><path d="M55.50 388.25L800.00 388.25" stroke="#2a2a2a" stroke-width="0.6" /><path d="M55.50 393.50L800.00 393.50" stroke="#2a2a2a" stroke-width="0.6" /><path d="M55.50 399.00L800.00 399.00" stroke="#2a2a2a" stroke-width="0.6" /><path d="M55.50 404.25L800.00 404.25" stroke="#2a2a2a" stroke-width="0.6" /><path d="M55.50 443.60L800.00 443.60" stroke="#8a8a8a" stroke-width="1.2" /><path d="M55.50 448.40L800.00 448.40" stroke="#2a2a2a" stroke-width="0.7" /><path d="M62.40 325.00L62.40 369.50" stroke="#3a3a3a" stroke-width="0.7" /><path d="M62.40 404.25L62.40 443.60" stroke="#3a3a3a" stroke-width="0.7" /><path d="M62.40 369.50L62.40 404.25" stroke="#555" stroke-width="0.4" /><path d="M75.00 369.50L75.00 404.25" stroke="#3a3a3a" stroke-width="0.7" /><path d="M69.60 369.50L69.60 404.25" stroke="#555" stroke-width="0.4" /><path d="M55.50 347.40L62.40 347.40" stroke="#3a3a3a" stroke-width="0.7" /><text x="60.40" y="346.00" font-size="2.8" fill="#000" transform="rotate(-90 60.40 346.00)" textLength="17.00" lengthAdjust="spacingAndGlyphs" font-weight="bold" stroke="#000" stroke-width="0.126" >Bezeichnung</text><text x="60.40" y="362.50" font-size="2.8" fill="#000" transform="rotate(-90 60.40 362.50)" textLength="6.00" lengthAdjust="spacingAndGlyphs" font-weight="bold" stroke="#000" stroke-width="0.126" >BMK</text><text x="66.60" y="365.00" font-size="2.6" fill="#000" transform="rotate(-90 66.60 365.00)" textLength="34.00" lengthAdjust="spacingAndGlyphs" font-weight="bold" stroke="#000" stroke-width="0.117" >Feldgeräte Bezeichnung</text><text x="60.40" y="382.00" font-size="2.5" fill="#000" transform="rotate(-90 60.40 382.00)" textLength="10.00" lengthAdjust="spacingAndGlyphs" font-weight="bold" stroke="#000" stroke-width="0.1125" >Melden</text><text x="66.60" y="382.00" font-size="2.5" fill="#000" transform="rotate(-90 66.60 382.00)" textLength="8.00" lengthAdjust="spacingAndGlyphs" font-weight="bold" stroke="#000" stroke-width="0.1125" >Messen</text><text x="60.40" y="402.00" font-size="2.5" fill="#000" transform="rotate(-90 60.40 402.00)" textLength="14.00" lengthAdjust="spacingAndGlyphs" font-weight="bold" stroke="#000" stroke-width="0.1125" >Schalten</text><text x="66.60" y="402.00" font-size="2.5" fill="#000" transform="rotate(-90 66.60 402.00)" textLength="15.00" lengthAdjust="spacingAndGlyphs" font-weight="bold" stroke="#000" stroke-width="0.1125" >Stellen Zählen</text><text x="60.40" y="441.00" font-size="2.6" fill="#000" transform="rotate(-90 60.40 441.00)" textLength="35.00" lengthAdjust="spacingAndGlyphs" font-weight="bold" stroke="#000" stroke-width="0.117" >Datenpunkt Bezeichnung</text><text x="66.60" y="436.00" font-size="2.6" fill="#000" transform="rotate(-90 66.60 436.00)" textLength="26.00" lengthAdjust="spacingAndGlyphs" font-weight="bold" stroke="#000" stroke-width="0.117" >Datenpunkt Adresse</text><text x="59.00" y="447.40" font-size="2.4" fill="#222" >Typ</text><rect x="70.20" y="370.40" width="4.20" height="4.00" fill="#fff" stroke="#555" stroke-width="0.3" /><text x="72.30" y="373.60" font-size="2.2" fill="#234" text-anchor="middle" >BE</text><rect x="70.20" y="377.40" width="4.20" height="4.00" fill="#fff" stroke="#555" stroke-width="0.3" /><text x="72.30" y="380.60" font-size="2.2" fill="#234" text-anchor="middle" >AE</text><rect x="70.20" y="383.20" width="4.20" height="4.00" fill="#fff" stroke="#555" stroke-width="0.3" /><text x="72.30" y="386.40" font-size="2.2" fill="#234" text-anchor="middle" >ZE</text><rect x="70.20" y="388.40" width="4.20" height="4.00" fill="#fff" stroke="#555" stroke-width="0.3" /><text x="72.30" y="391.60" font-size="2.2" fill="#234" text-anchor="middle" >BA</text><rect x="70.20" y="393.70" width="4.20" height="4.00" fill="#fff" stroke="#555" stroke-width="0.3" /><text x="72.30" y="396.90" font-size="2.2" fill="#234" text-anchor="middle" >AA</text><rect x="70.20" y="399.20" width="4.20" height="4.00" fill="#fff" stroke="#555" stroke-width="0.3" /><text x="72.30" y="402.40" font-size="2.2" fill="#234" text-anchor="middle" >ZA</text><circle cx="72.3" cy="372.6" r="1" fill="#e33"/><circle cx="72.3" cy="379.6" r="1" fill="none" stroke="#36c" stroke-width=".4"/><path d="M85.80 325.00L85.80 448.40" stroke="#222" stroke-width="0.7" /><path d="M105.00 325.00L105.00 448.40" stroke="#222" stroke-width="0.7" /><path d="M88.00 325.40L88.00 369.30" stroke="#111" stroke-width="0.75" stroke-dasharray="3 1.1"/><path d="M88.00 404.40L88.00 443.40" stroke="#555" stroke-width="0.35" /><text x="87.40" y="369.00" font-size="3" fill="#000" transform="rotate(-90 87.40 369.00)" textLength="3.20" lengthAdjust="spacingAndGlyphs" font-weight="bold" stroke="#000" stroke-width="0.135" >B1</text><rect x="85.40" y="355.60" width="2.40" height="3.80" fill="#fff" stroke="#222" stroke-width="0.35" /><text x="87.20" y="359.20" font-size="1.9" fill="#000" transform="rotate(-90 87.20 359.20)" textLength="3.20" lengthAdjust="spacingAndGlyphs" font-weight="bold" stroke="#000" stroke-width="0.0855" >-A1</text><text x="87.60" y="443.20" font-size="3.2" fill="#000" transform="rotate(-90 87.60 443.20)" textLength="37.00" lengthAdjust="spacingAndGlyphs" font-weight="bold" stroke="#000" stroke-width="0.144" >Heizen Ventil stetig 0-10V</text><text x="87.60" y="448.00" font-size="2.5" fill="#000" transform="rotate(-90 87.60 448.00)" textLength="3.40" lengthAdjust="spacingAndGlyphs" font-weight="bold" stroke="#000" stroke-width="0.1125" >A2</text><rect x="87.10" y="448.80" width="1.10" height="0.90" fill="#f55" stroke="none" stroke-width="0.7" /><path d="M91.80 325.40L91.80 369.30" stroke="#111" stroke-width="0.75" stroke-dasharray="3 1.1"/><path d="M91.80 404.40L91.80 443.40" stroke="#555" stroke-width="0.35" /><text x="91.35" y="369.10" font-size="3.5" fill="#000" transform="rotate(-90 91.35 369.10)" textLength="33.40" lengthAdjust="spacingAndGlyphs" font-weight="bold" stroke="#000" stroke-width="0.1575" >Y1 _RA.KLT.ST02</text><path d="M90.30 336.40L90.30 351.60" stroke="#000" stroke-width="1.5" stroke-dasharray="2.4 .5 3.4 .4 1.6 .5"/><text x="91.40" y="443.20" font-size="3.2" fill="#000" transform="rotate(-90 91.40 443.20)" textLength="30.78" lengthAdjust="spacingAndGlyphs" font-weight="bold" stroke="#000" stroke-width="0.144" >Sollwertsteller LON</text><text x="91.40" y="448.00" font-size="2.5" fill="#000" transform="rotate(-90 91.40 448.00)" textLength="3.40" lengthAdjust="spacingAndGlyphs" font-weight="bold" stroke="#000" stroke-width="0.1125" >A8</text><rect x="90.90" y="448.80" width="1.10" height="0.90" fill="#f55" stroke="none" stroke-width="0.7" /><path d="M95.80 325.40L95.80 369.30" stroke="#111" stroke-width="0.75" stroke-dasharray="3 1.1"/><path d="M95.80 404.40L95.80 443.40" stroke="#555" stroke-width="0.35" /><text x="95.35" y="369.10" font-size="3.5" fill="#000" transform="rotate(-90 95.35 369.10)" textLength="33.40" lengthAdjust="spacingAndGlyphs" font-weight="bold" stroke="#000" stroke-width="0.1575" >A1 _RA.BEL.SB03</text><path d="M94.30 336.40L94.30 351.60" stroke="#000" stroke-width="1.5" stroke-dasharray="2.4 .5 3.4 .4 1.6 .5"/><text x="95.40" y="443.20" font-size="3.2" fill="#000" transform="rotate(-90 95.40 443.20)" textLength="27.54" lengthAdjust="spacingAndGlyphs" font-weight="bold" stroke="#000" stroke-width="0.144" >Fensterkontakt RM</text><text x="95.40" y="448.00" font-size="2.5" fill="#000" transform="rotate(-90 95.40 448.00)" textLength="3.40" lengthAdjust="spacingAndGlyphs" font-weight="bold" stroke="#000" stroke-width="0.1125" >A7</text><rect x="94.90" y="448.80" width="1.10" height="0.90" fill="#f55" stroke="none" stroke-width="0.7" /><path d="M99.80 325.40L99.80 369.30" stroke="#111" stroke-width="0.75" stroke-dasharray="3 1.1"/><path d="M99.80 404.40L99.80 443.40" stroke="#555" stroke-width="0.35" /><text x="99.35" y="369.10" font-size="3.5" fill="#000" transform="rotate(-90 99.35 369.10)" textLength="33.40" lengthAdjust="spacingAndGlyphs" font-weight="bold" stroke="#000" stroke-width="0.1575" >B2 _RA.HZG.SW01</text><path d="M98.30 336.40L98.30 351.60" stroke="#000" stroke-width="1.5" stroke-dasharray="2.4 .5 3.4 .4 1.6 .5"/><text x="99.40" y="443.20" font-size="3.2" fill="#000" transform="rotate(-90 99.40 443.20)" textLength="30.78" lengthAdjust="spacingAndGlyphs" font-weight="bold" stroke="#000" stroke-width="0.144" >Sollwertsteller LON</text><text x="99.40" y="448.00" font-size="2.5" fill="#000" transform="rotate(-90 99.40 448.00)" textLength="3.40" lengthAdjust="spacingAndGlyphs" font-weight="bold" stroke="#000" stroke-width="0.1125" >A8</text><rect x="98.90" y="448.80" width="1.10" height="0.90" fill="#f55" stroke="none" stroke-width="0.7" /><path d="M103.60 325.40L103.60 369.30" stroke="#111" stroke-width="0.75" stroke-dasharray="3 1.1"/><path d="M103.60 404.40L103.60 443.40" stroke="#555" stroke-width="0.35" /><text x="103.15" y="369.10" font-size="3.5" fill="#000" transform="rotate(-90 103.15 369.10)" textLength="33.40" lengthAdjust="spacingAndGlyphs" font-weight="bold" stroke="#000" stroke-width="0.1575" >B1 _RA.RLT.MW01</text><path d="M102.10 336.40L102.10 351.60" stroke="#000" stroke-width="1.5" stroke-dasharray="2.4 .5 3.4 .4 1.6 .5"/><text x="103.20" y="443.20" font-size="3.2" fill="#000" transform="rotate(-90 103.20 443.20)" textLength="32.40" lengthAdjust="spacingAndGlyphs" font-weight="bold" stroke="#000" stroke-width="0.144" >Licht Stufe 1 Dimmer</text><text x="103.20" y="448.00" font-size="2.5" fill="#000" transform="rotate(-90 103.20 448.00)" textLength="3.40" lengthAdjust="spacingAndGlyphs" font-weight="bold" stroke="#000" stroke-width="0.1125" >A7</text><rect x="102.70" y="448.80" width="1.10" height="0.90" fill="#f55" stroke="none" stroke-width="0.7" /><path d="M83.40 320.00H90.80L94.20 323.40" stroke="#e8333a" stroke-width="0.55" fill="none" /><text x="83.80" y="320.70" font-size="3" fill="#2a0808" textLength="6.60" lengthAdjust="spacingAndGlyphs" font-weight="bold" stroke="#2a0808" stroke-width="0.135" >B11</text><text x="85.60" y="323.20" font-size="2.1" fill="#333" textLength="3.40" lengthAdjust="spacingAndGlyphs" font-weight="bold" stroke="#333" stroke-width="0.0945" >-B1</text><text x="95.60" y="386.80" font-size="3.1" fill="#1a1a1a" text-anchor="middle" >1</text><text x="95.60" y="397.40" font-size="3.1" fill="#1a1a1a" text-anchor="middle" >4</text><path d="M203.60 325.00L203.60 448.40" stroke="#222" stroke-width="0.7" /><path d="M219.50 325.00L219.50 448.40" stroke="#222" stroke-width="0.7" /><path d="M256.60 325.00L256.60 448.40" stroke="#222" stroke-width="0.7" /><path d="M240.20 325.00L240.20 448.40" stroke="#222" stroke-width="1.5" /><path d="M207.20 325.40L207.20 369.30" stroke="#111" stroke-width="0.75" stroke-dasharray="3 1.1"/><path d="M207.20 404.40L207.20 443.40" stroke="#555" stroke-width="0.35" /><text x="206.60" y="369.00" font-size="3" fill="#000" transform="rotate(-90 206.60 369.00)" textLength="3.20" lengthAdjust="spacingAndGlyphs" font-weight="bold" stroke="#000" stroke-width="0.135" >B1</text><rect x="204.60" y="355.60" width="2.40" height="3.80" fill="#fff" stroke="#222" stroke-width="0.35" /><text x="206.40" y="359.20" font-size="1.9" fill="#000" transform="rotate(-90 206.40 359.20)" textLength="3.20" lengthAdjust="spacingAndGlyphs" font-weight="bold" stroke="#000" stroke-width="0.0855" >-A1</text><text x="206.80" y="443.20" font-size="3.2" fill="#000" transform="rotate(-90 206.80 443.20)" textLength="29.16" lengthAdjust="spacingAndGlyphs" font-weight="bold" stroke="#000" stroke-width="0.144" >Taupunktwächter SM</text><text x="206.80" y="448.00" font-size="2.5" fill="#000" transform="rotate(-90 206.80 448.00)" textLength="3.40" lengthAdjust="spacingAndGlyphs" font-weight="bold" stroke="#000" stroke-width="0.1125" >A1</text><rect x="206.30" y="448.80" width="1.10" height="0.90" fill="#f55" stroke="none" stroke-width="0.7" /><path d="M211.20 325.40L211.20 369.30" stroke="#111" stroke-width="0.75" stroke-dasharray="3 1.1"/><path d="M211.20 404.40L211.20 443.40" stroke="#555" stroke-width="0.35" /><text x="210.75" y="369.10" font-size="3.5" fill="#000" transform="rotate(-90 210.75 369.10)" textLength="33.40" lengthAdjust="spacingAndGlyphs" font-weight="bold" stroke="#000" stroke-width="0.1575" >A1 _RA.BEL.SB03</text><path d="M209.70 336.40L209.70 351.60" stroke="#000" stroke-width="1.5" stroke-dasharray="2.4 .5 3.4 .4 1.6 .5"/><text x="210.80" y="443.20" font-size="3.2" fill="#000" transform="rotate(-90 210.80 443.20)" textLength="27.54" lengthAdjust="spacingAndGlyphs" font-weight="bold" stroke="#000" stroke-width="0.144" >Fensterkontakt RM</text><text x="210.80" y="448.00" font-size="2.5" fill="#000" transform="rotate(-90 210.80 448.00)" textLength="3.40" lengthAdjust="spacingAndGlyphs" font-weight="bold" stroke="#000" stroke-width="0.1125" >A1</text><rect x="210.30" y="448.80" width="1.10" height="0.90" fill="#f55" stroke="none" stroke-width="0.7" /><path d="M215.10 325.40L215.10 369.30" stroke="#111" stroke-width="0.75" stroke-dasharray="3 1.1"/><path d="M215.10 404.40L215.10 443.40" stroke="#555" stroke-width="0.35" /><text x="214.65" y="369.10" font-size="3.5" fill="#000" transform="rotate(-90 214.65 369.10)" textLength="33.40" lengthAdjust="spacingAndGlyphs" font-weight="bold" stroke="#000" stroke-width="0.1575" >B2 _RA.HZG.SW01</text><path d="M213.60 336.40L213.60 351.60" stroke="#000" stroke-width="1.5" stroke-dasharray="2.4 .5 3.4 .4 1.6 .5"/><text x="214.70" y="443.20" font-size="3.2" fill="#000" transform="rotate(-90 214.70 443.20)" textLength="27.54" lengthAdjust="spacingAndGlyphs" font-weight="bold" stroke="#000" stroke-width="0.144" >Fensterkontakt RM</text><text x="214.70" y="448.00" font-size="2.5" fill="#000" transform="rotate(-90 214.70 448.00)" textLength="3.40" lengthAdjust="spacingAndGlyphs" font-weight="bold" stroke="#000" stroke-width="0.1125" >A8</text><rect x="214.20" y="448.80" width="1.10" height="0.90" fill="#f55" stroke="none" stroke-width="0.7" /><path d="M218.60 325.40L218.60 369.30" stroke="#111" stroke-width="0.75" stroke-dasharray="3 1.1"/><path d="M218.60 404.40L218.60 443.40" stroke="#555" stroke-width="0.35" /><text x="218.15" y="369.10" font-size="3.5" fill="#000" transform="rotate(-90 218.15 369.10)" textLength="33.40" lengthAdjust="spacingAndGlyphs" font-weight="bold" stroke="#000" stroke-width="0.1575" >Y1 _RA.KLT.ST02</text><path d="M217.10 336.40L217.10 351.60" stroke="#000" stroke-width="1.5" stroke-dasharray="2.4 .5 3.4 .4 1.6 .5"/><text x="218.20" y="443.20" font-size="3.2" fill="#000" transform="rotate(-90 218.20 443.20)" textLength="29.16" lengthAdjust="spacingAndGlyphs" font-weight="bold" stroke="#000" stroke-width="0.144" >Raum Temperatur MW</text><text x="218.20" y="448.00" font-size="2.5" fill="#000" transform="rotate(-90 218.20 448.00)" textLength="3.40" lengthAdjust="spacingAndGlyphs" font-weight="bold" stroke="#000" stroke-width="0.1125" >A3</text><rect x="217.70" y="448.80" width="1.10" height="0.90" fill="#f55" stroke="none" stroke-width="0.7" /><path d="M223.00 325.40L223.00 369.30" stroke="#111" stroke-width="0.75" stroke-dasharray="3 1.1"/><path d="M223.00 404.40L223.00 443.40" stroke="#555" stroke-width="0.35" /><text x="222.40" y="369.00" font-size="3" fill="#000" transform="rotate(-90 222.40 369.00)" textLength="3.20" lengthAdjust="spacingAndGlyphs" font-weight="bold" stroke="#000" stroke-width="0.135" >B1</text><rect x="220.40" y="355.60" width="2.40" height="3.80" fill="#fff" stroke="#222" stroke-width="0.35" /><text x="222.20" y="359.20" font-size="1.9" fill="#000" transform="rotate(-90 222.20 359.20)" textLength="3.20" lengthAdjust="spacingAndGlyphs" font-weight="bold" stroke="#000" stroke-width="0.0855" >-A1</text><text x="222.60" y="443.20" font-size="3.2" fill="#000" transform="rotate(-90 222.60 443.20)" textLength="29.16" lengthAdjust="spacingAndGlyphs" font-weight="bold" stroke="#000" stroke-width="0.144" >Raum Temperatur MW</text><text x="222.60" y="448.00" font-size="2.5" fill="#000" transform="rotate(-90 222.60 448.00)" textLength="3.40" lengthAdjust="spacingAndGlyphs" font-weight="bold" stroke="#000" stroke-width="0.1125" >A3</text><rect x="222.10" y="448.80" width="1.10" height="0.90" fill="#f55" stroke="none" stroke-width="0.7" /><path d="M226.80 325.40L226.80 369.30" stroke="#111" stroke-width="0.75" stroke-dasharray="3 1.1"/><path d="M226.80 404.40L226.80 443.40" stroke="#555" stroke-width="0.35" /><text x="226.35" y="369.10" font-size="3.5" fill="#000" transform="rotate(-90 226.35 369.10)" textLength="33.40" lengthAdjust="spacingAndGlyphs" font-weight="bold" stroke="#000" stroke-width="0.1575" >Y1 _RA.KLT.ST02</text><path d="M225.30 336.40L225.30 351.60" stroke="#000" stroke-width="1.5" stroke-dasharray="2.4 .5 3.4 .4 1.6 .5"/><text x="226.40" y="443.20" font-size="3.2" fill="#000" transform="rotate(-90 226.40 443.20)" textLength="29.16" lengthAdjust="spacingAndGlyphs" font-weight="bold" stroke="#000" stroke-width="0.144" >Raum Temperatur MW</text><text x="226.40" y="448.00" font-size="2.5" fill="#000" transform="rotate(-90 226.40 448.00)" textLength="3.40" lengthAdjust="spacingAndGlyphs" font-weight="bold" stroke="#000" stroke-width="0.1125" >A2</text><rect x="225.90" y="448.80" width="1.10" height="0.90" fill="#f55" stroke="none" stroke-width="0.7" /><path d="M231.00 325.40L231.00 369.30" stroke="#111" stroke-width="0.75" stroke-dasharray="3 1.1"/><path d="M231.00 404.40L231.00 443.40" stroke="#555" stroke-width="0.35" /><text x="230.55" y="369.10" font-size="3.5" fill="#000" transform="rotate(-90 230.55 369.10)" textLength="33.40" lengthAdjust="spacingAndGlyphs" font-weight="bold" stroke="#000" stroke-width="0.1575" >Y1 _RA.KLT.ST02</text><path d="M229.50 336.40L229.50 351.60" stroke="#000" stroke-width="1.5" stroke-dasharray="2.4 .5 3.4 .4 1.6 .5"/><text x="230.60" y="443.20" font-size="3.2" fill="#000" transform="rotate(-90 230.60 443.20)" textLength="29.16" lengthAdjust="spacingAndGlyphs" font-weight="bold" stroke="#000" stroke-width="0.144" >Taupunktwächter SM</text><text x="230.60" y="448.00" font-size="2.5" fill="#000" transform="rotate(-90 230.60 448.00)" textLength="3.40" lengthAdjust="spacingAndGlyphs" font-weight="bold" stroke="#000" stroke-width="0.1125" >A3</text><rect x="230.10" y="448.80" width="1.10" height="0.90" fill="#f55" stroke="none" stroke-width="0.7" /><path d="M235.00 325.40L235.00 369.30" stroke="#111" stroke-width="0.75" stroke-dasharray="3 1.1"/><path d="M235.00 404.40L235.00 443.40" stroke="#555" stroke-width="0.35" /><text x="234.55" y="369.10" font-size="3.5" fill="#000" transform="rotate(-90 234.55 369.10)" textLength="33.40" lengthAdjust="spacingAndGlyphs" font-weight="bold" stroke="#000" stroke-width="0.1575" >B1 _RA.RLT.MW01</text><path d="M233.50 336.40L233.50 351.60" stroke="#000" stroke-width="1.5" stroke-dasharray="2.4 .5 3.4 .4 1.6 .5"/><text x="234.60" y="443.20" font-size="3.2" fill="#000" transform="rotate(-90 234.60 443.20)" textLength="32.40" lengthAdjust="spacingAndGlyphs" font-weight="bold" stroke="#000" stroke-width="0.144" >Licht Stufe 1 Dimmer</text><text x="234.60" y="448.00" font-size="2.5" fill="#000" transform="rotate(-90 234.60 448.00)" textLength="3.40" lengthAdjust="spacingAndGlyphs" font-weight="bold" stroke="#000" stroke-width="0.1125" >A7</text><rect x="234.10" y="448.80" width="1.10" height="0.90" fill="#f55" stroke="none" stroke-width="0.7" /><path d="M238.60 325.40L238.60 369.30" stroke="#111" stroke-width="0.75" stroke-dasharray="3 1.1"/><path d="M238.60 404.40L238.60 443.40" stroke="#555" stroke-width="0.35" /><text x="238.15" y="369.10" font-size="3.5" fill="#000" transform="rotate(-90 238.15 369.10)" textLength="33.40" lengthAdjust="spacingAndGlyphs" font-weight="bold" stroke="#000" stroke-width="0.1575" >B1 _RA.RLT.MW01</text><path d="M237.10 336.40L237.10 351.60" stroke="#000" stroke-width="1.5" stroke-dasharray="2.4 .5 3.4 .4 1.6 .5"/><text x="238.20" y="443.20" font-size="3.2" fill="#000" transform="rotate(-90 238.20 443.20)" textLength="30.78" lengthAdjust="spacingAndGlyphs" font-weight="bold" stroke="#000" stroke-width="0.144" >Sollwertsteller LON</text><text x="238.20" y="448.00" font-size="2.5" fill="#000" transform="rotate(-90 238.20 448.00)" textLength="3.40" lengthAdjust="spacingAndGlyphs" font-weight="bold" stroke="#000" stroke-width="0.1125" >A3</text><rect x="237.70" y="448.80" width="1.10" height="0.90" fill="#f55" stroke="none" stroke-width="0.7" /><path d="M244.20 325.40L244.20 369.30" stroke="#111" stroke-width="0.75" stroke-dasharray="3 1.1"/><path d="M244.20 404.40L244.20 443.40" stroke="#555" stroke-width="0.35" /><text x="243.60" y="369.00" font-size="3" fill="#000" transform="rotate(-90 243.60 369.00)" textLength="3.20" lengthAdjust="spacingAndGlyphs" font-weight="bold" stroke="#000" stroke-width="0.135" >B1</text><rect x="241.60" y="355.60" width="2.40" height="3.80" fill="#fff" stroke="#222" stroke-width="0.35" /><text x="243.40" y="359.20" font-size="1.9" fill="#000" transform="rotate(-90 243.40 359.20)" textLength="3.20" lengthAdjust="spacingAndGlyphs" font-weight="bold" stroke="#000" stroke-width="0.0855" >-A1</text><text x="243.80" y="443.20" font-size="3.2" fill="#000" transform="rotate(-90 243.80 443.20)" textLength="25.92" lengthAdjust="spacingAndGlyphs" font-weight="bold" stroke="#000" stroke-width="0.144" >Volumenstrom VVS</text><text x="243.80" y="448.00" font-size="2.5" fill="#000" transform="rotate(-90 243.80 448.00)" textLength="3.40" lengthAdjust="spacingAndGlyphs" font-weight="bold" stroke="#000" stroke-width="0.1125" >A5</text><rect x="243.30" y="448.80" width="1.10" height="0.90" fill="#f55" stroke="none" stroke-width="0.7" /><path d="M248.50 325.40L248.50 369.30" stroke="#111" stroke-width="0.75" stroke-dasharray="3 1.1"/><path d="M248.50 404.40L248.50 443.40" stroke="#555" stroke-width="0.35" /><text x="248.05" y="369.10" font-size="3.5" fill="#000" transform="rotate(-90 248.05 369.10)" textLength="33.40" lengthAdjust="spacingAndGlyphs" font-weight="bold" stroke="#000" stroke-width="0.1575" >S1 _RA.JAL.BM04</text><path d="M247.00 336.40L247.00 351.60" stroke="#000" stroke-width="1.5" stroke-dasharray="2.4 .5 3.4 .4 1.6 .5"/><text x="248.10" y="443.20" font-size="3.2" fill="#000" transform="rotate(-90 248.10 443.20)" textLength="30.78" lengthAdjust="spacingAndGlyphs" font-weight="bold" stroke="#000" stroke-width="0.144" >Temp Raumfühler Ist</text><text x="248.10" y="448.00" font-size="2.5" fill="#000" transform="rotate(-90 248.10 448.00)" textLength="3.40" lengthAdjust="spacingAndGlyphs" font-weight="bold" stroke="#000" stroke-width="0.1125" >A4</text><rect x="247.60" y="448.80" width="1.10" height="0.90" fill="#f55" stroke="none" stroke-width="0.7" /><path d="M252.50 325.40L252.50 369.30" stroke="#111" stroke-width="0.75" stroke-dasharray="3 1.1"/><path d="M252.50 404.40L252.50 443.40" stroke="#555" stroke-width="0.35" /><text x="252.05" y="369.10" font-size="3.5" fill="#000" transform="rotate(-90 252.05 369.10)" textLength="33.40" lengthAdjust="spacingAndGlyphs" font-weight="bold" stroke="#000" stroke-width="0.1575" >Y1 _RA.KLT.ST02</text><path d="M251.00 336.40L251.00 351.60" stroke="#000" stroke-width="1.5" stroke-dasharray="2.4 .5 3.4 .4 1.6 .5"/><text x="252.10" y="443.20" font-size="3.2" fill="#000" transform="rotate(-90 252.10 443.20)" textLength="30.78" lengthAdjust="spacingAndGlyphs" font-weight="bold" stroke="#000" stroke-width="0.144" >Temp Raumfühler Ist</text><text x="252.10" y="448.00" font-size="2.5" fill="#000" transform="rotate(-90 252.10 448.00)" textLength="3.40" lengthAdjust="spacingAndGlyphs" font-weight="bold" stroke="#000" stroke-width="0.1125" >A7</text><rect x="251.60" y="448.80" width="1.10" height="0.90" fill="#f55" stroke="none" stroke-width="0.7" /><path d="M255.80 325.40L255.80 369.30" stroke="#111" stroke-width="0.75" stroke-dasharray="3 1.1"/><path d="M255.80 404.40L255.80 443.40" stroke="#555" stroke-width="0.35" /><text x="255.35" y="369.10" font-size="3.5" fill="#000" transform="rotate(-90 255.35 369.10)" textLength="33.40" lengthAdjust="spacingAndGlyphs" font-weight="bold" stroke="#000" stroke-width="0.1575" >A1 _RA.BEL.SB03</text><path d="M254.30 336.40L254.30 351.60" stroke="#000" stroke-width="1.5" stroke-dasharray="2.4 .5 3.4 .4 1.6 .5"/><text x="255.40" y="443.20" font-size="3.2" fill="#000" transform="rotate(-90 255.40 443.20)" textLength="29.16" lengthAdjust="spacingAndGlyphs" font-weight="bold" stroke="#000" stroke-width="0.144" >Raum Temperatur MW</text><text x="255.40" y="448.00" font-size="2.5" fill="#000" transform="rotate(-90 255.40 448.00)" textLength="3.40" lengthAdjust="spacingAndGlyphs" font-weight="bold" stroke="#000" stroke-width="0.1125" >A3</text><rect x="254.90" y="448.80" width="1.10" height="0.90" fill="#f55" stroke="none" stroke-width="0.7" /><path d="M339.50 325.00L339.50 448.40" stroke="#222" stroke-width="0.7" /><path d="M351.80 325.00L351.80 448.40" stroke="#222" stroke-width="0.7" /><path d="M343.00 325.40L343.00 369.30" stroke="#111" stroke-width="0.75" stroke-dasharray="3 1.1"/><path d="M343.00 404.40L343.00 443.40" stroke="#555" stroke-width="0.35" /><text x="342.40" y="369.00" font-size="3" fill="#000" transform="rotate(-90 342.40 369.00)" textLength="3.20" lengthAdjust="spacingAndGlyphs" font-weight="bold" stroke="#000" stroke-width="0.135" >B1</text><rect x="340.40" y="355.60" width="2.40" height="3.80" fill="#fff" stroke="#222" stroke-width="0.35" /><text x="342.20" y="359.20" font-size="1.9" fill="#000" transform="rotate(-90 342.20 359.20)" textLength="3.20" lengthAdjust="spacingAndGlyphs" font-weight="bold" stroke="#000" stroke-width="0.0855" >-A1</text><text x="342.60" y="443.20" font-size="3.2" fill="#000" transform="rotate(-90 342.60 443.20)" textLength="27.54" lengthAdjust="spacingAndGlyphs" font-weight="bold" stroke="#000" stroke-width="0.144" >Fensterkontakt RM</text><text x="342.60" y="448.00" font-size="2.5" fill="#000" transform="rotate(-90 342.60 448.00)" textLength="3.40" lengthAdjust="spacingAndGlyphs" font-weight="bold" stroke="#000" stroke-width="0.1125" >A1</text><rect x="342.10" y="448.80" width="1.10" height="0.90" fill="#f55" stroke="none" stroke-width="0.7" /><path d="M346.80 325.40L346.80 369.30" stroke="#111" stroke-width="0.75" stroke-dasharray="3 1.1"/><path d="M346.80 404.40L346.80 443.40" stroke="#555" stroke-width="0.35" /><text x="346.35" y="369.10" font-size="3.5" fill="#000" transform="rotate(-90 346.35 369.10)" textLength="33.40" lengthAdjust="spacingAndGlyphs" font-weight="bold" stroke="#000" stroke-width="0.1575" >B2 _RA.HZG.SW01</text><path d="M345.30 336.40L345.30 351.60" stroke="#000" stroke-width="1.5" stroke-dasharray="2.4 .5 3.4 .4 1.6 .5"/><text x="346.40" y="443.20" font-size="3.2" fill="#000" transform="rotate(-90 346.40 443.20)" textLength="29.16" lengthAdjust="spacingAndGlyphs" font-weight="bold" stroke="#000" stroke-width="0.144" >Präsenzmelder Raum</text><text x="346.40" y="448.00" font-size="2.5" fill="#000" transform="rotate(-90 346.40 448.00)" textLength="3.40" lengthAdjust="spacingAndGlyphs" font-weight="bold" stroke="#000" stroke-width="0.1125" >A4</text><rect x="345.90" y="448.80" width="1.10" height="0.90" fill="#f55" stroke="none" stroke-width="0.7" /><path d="M350.60 325.40L350.60 369.30" stroke="#111" stroke-width="0.75" stroke-dasharray="3 1.1"/><path d="M350.60 404.40L350.60 443.40" stroke="#555" stroke-width="0.35" /><text x="350.15" y="369.10" font-size="3.5" fill="#000" transform="rotate(-90 350.15 369.10)" textLength="33.40" lengthAdjust="spacingAndGlyphs" font-weight="bold" stroke="#000" stroke-width="0.1575" >B2 _RA.HZG.SW01</text><path d="M349.10 336.40L349.10 351.60" stroke="#000" stroke-width="1.5" stroke-dasharray="2.4 .5 3.4 .4 1.6 .5"/><text x="350.20" y="443.20" font-size="3.2" fill="#000" transform="rotate(-90 350.20 443.20)" textLength="34.02" lengthAdjust="spacingAndGlyphs" font-weight="bold" stroke="#000" stroke-width="0.144" >Jalousie Auf/Ab Motor</text><text x="350.20" y="448.00" font-size="2.5" fill="#000" transform="rotate(-90 350.20 448.00)" textLength="3.40" lengthAdjust="spacingAndGlyphs" font-weight="bold" stroke="#000" stroke-width="0.1125" >A5</text><rect x="349.70" y="448.80" width="1.10" height="0.90" fill="#f55" stroke="none" stroke-width="0.7" /><path d="M198.60 320.00H206.00L209.40 323.40" stroke="#e8333a" stroke-width="0.55" fill="none" /><text x="199.00" y="320.70" font-size="3" fill="#2a0808" textLength="6.60" lengthAdjust="spacingAndGlyphs" font-weight="bold" stroke="#2a0808" stroke-width="0.135" >B21</text><text x="200.80" y="323.20" font-size="2.1" fill="#333" textLength="3.40" lengthAdjust="spacingAndGlyphs" font-weight="bold" stroke="#333" stroke-width="0.0945" >-B1</text><path d="M218.00 320.00H225.40L228.80 323.40" stroke="#e8333a" stroke-width="0.55" fill="none" /><text x="218.40" y="320.70" font-size="3" fill="#2a0808" textLength="6.60" lengthAdjust="spacingAndGlyphs" font-weight="bold" stroke="#2a0808" stroke-width="0.135" >Y31</text><text x="220.20" y="323.20" font-size="2.1" fill="#333" textLength="3.40" lengthAdjust="spacingAndGlyphs" font-weight="bold" stroke="#333" stroke-width="0.0945" >-B1</text><path d="M235.60 320.00H243.00L246.40 323.40" stroke="#e8333a" stroke-width="0.55" fill="none" /><text x="236.00" y="320.70" font-size="3" fill="#2a0808" textLength="6.60" lengthAdjust="spacingAndGlyphs" font-weight="bold" stroke="#2a0808" stroke-width="0.135" >M41</text><text x="237.80" y="323.20" font-size="2.1" fill="#333" textLength="3.40" lengthAdjust="spacingAndGlyphs" font-weight="bold" stroke="#333" stroke-width="0.0945" >-B1</text><path d="M335.40 320.00H342.80L346.20 323.40" stroke="#e8333a" stroke-width="0.55" fill="none" /><text x="335.80" y="320.70" font-size="3" fill="#2a0808" textLength="6.60" lengthAdjust="spacingAndGlyphs" font-weight="bold" stroke="#2a0808" stroke-width="0.135" >B51</text><text x="337.60" y="323.20" font-size="2.1" fill="#333" textLength="3.40" lengthAdjust="spacingAndGlyphs" font-weight="bold" stroke="#333" stroke-width="0.0945" >-B1</text><text x="211.40" y="386.80" font-size="3.1" fill="#1a1a1a" text-anchor="middle" >1</text><text x="229.60" y="386.80" font-size="3.1" fill="#1a1a1a" text-anchor="middle" >8</text><text x="211.40" y="392.00" font-size="3.1" fill="#1a1a1a" text-anchor="middle" >1</text><text x="229.60" y="392.00" font-size="3.1" fill="#1a1a1a" text-anchor="middle" >1</text><text x="248.00" y="392.00" font-size="3.1" fill="#1a1a1a" text-anchor="middle" >2</text><text x="248.00" y="397.30" font-size="3.1" fill="#1a1a1a" text-anchor="middle" >1</text><text x="211.40" y="402.80" font-size="3.1" fill="#1a1a1a" text-anchor="middle" >1</text><text x="229.60" y="402.80" font-size="3.1" fill="#1a1a1a" text-anchor="middle" >1</text><text x="346.00" y="397.30" font-size="3.1" fill="#1a1a1a" text-anchor="middle" >1</text><text x="346.00" y="402.80" font-size="3.1" fill="#1a1a1a" text-anchor="middle" >1</text><path d="M419.60 325.00L419.60 448.40" stroke="#222" stroke-width="0.7" /><path d="M435.50 325.00L435.50 448.40" stroke="#222" stroke-width="0.7" /><path d="M472.60 325.00L472.60 448.40" stroke="#222" stroke-width="0.7" /><path d="M456.20 325.00L456.20 448.40" stroke="#222" stroke-width="1.5" /><path d="M423.20 325.40L423.20 369.30" stroke="#111" stroke-width="0.75" stroke-dasharray="3 1.1"/><path d="M423.20 404.40L423.20 443.40" stroke="#555" stroke-width="0.35" /><text x="422.60" y="369.00" font-size="3" fill="#000" transform="rotate(-90 422.60 369.00)" textLength="3.20" lengthAdjust="spacingAndGlyphs" font-weight="bold" stroke="#000" stroke-width="0.135" >B1</text><rect x="420.60" y="355.60" width="2.40" height="3.80" fill="#fff" stroke="#222" stroke-width="0.35" /><text x="422.40" y="359.20" font-size="1.9" fill="#000" transform="rotate(-90 422.40 359.20)" textLength="3.20" lengthAdjust="spacingAndGlyphs" font-weight="bold" stroke="#000" stroke-width="0.0855" >-A1</text><text x="422.80" y="443.20" font-size="3.2" fill="#000" transform="rotate(-90 422.80 443.20)" textLength="27.54" lengthAdjust="spacingAndGlyphs" font-weight="bold" stroke="#000" stroke-width="0.144" >Fensterkontakt RM</text><text x="422.80" y="448.00" font-size="2.5" fill="#000" transform="rotate(-90 422.80 448.00)" textLength="3.40" lengthAdjust="spacingAndGlyphs" font-weight="bold" stroke="#000" stroke-width="0.1125" >A8</text><rect x="422.30" y="448.80" width="1.10" height="0.90" fill="#f55" stroke="none" stroke-width="0.7" /><path d="M427.20 325.40L427.20 369.30" stroke="#111" stroke-width="0.75" stroke-dasharray="3 1.1"/><path d="M427.20 404.40L427.20 443.40" stroke="#555" stroke-width="0.35" /><text x="426.75" y="369.10" font-size="3.5" fill="#000" transform="rotate(-90 426.75 369.10)" textLength="33.40" lengthAdjust="spacingAndGlyphs" font-weight="bold" stroke="#000" stroke-width="0.1575" >A1 _RA.BEL.SB03</text><path d="M425.70 336.40L425.70 351.60" stroke="#000" stroke-width="1.5" stroke-dasharray="2.4 .5 3.4 .4 1.6 .5"/><text x="426.80" y="443.20" font-size="3.2" fill="#000" transform="rotate(-90 426.80 443.20)" textLength="25.92" lengthAdjust="spacingAndGlyphs" font-weight="bold" stroke="#000" stroke-width="0.144" >Volumenstrom VVS</text><text x="426.80" y="448.00" font-size="2.5" fill="#000" transform="rotate(-90 426.80 448.00)" textLength="3.40" lengthAdjust="spacingAndGlyphs" font-weight="bold" stroke="#000" stroke-width="0.1125" >A4</text><rect x="426.30" y="448.80" width="1.10" height="0.90" fill="#f55" stroke="none" stroke-width="0.7" /><path d="M431.10 325.40L431.10 369.30" stroke="#111" stroke-width="0.75" stroke-dasharray="3 1.1"/><path d="M431.10 404.40L431.10 443.40" stroke="#555" stroke-width="0.35" /><text x="430.65" y="369.10" font-size="3.5" fill="#000" transform="rotate(-90 430.65 369.10)" textLength="33.40" lengthAdjust="spacingAndGlyphs" font-weight="bold" stroke="#000" stroke-width="0.1575" >B2 _RA.HZG.SW01</text><path d="M429.60 336.40L429.60 351.60" stroke="#000" stroke-width="1.5" stroke-dasharray="2.4 .5 3.4 .4 1.6 .5"/><text x="430.70" y="443.20" font-size="3.2" fill="#000" transform="rotate(-90 430.70 443.20)" textLength="25.92" lengthAdjust="spacingAndGlyphs" font-weight="bold" stroke="#000" stroke-width="0.144" >Volumenstrom VVS</text><text x="430.70" y="448.00" font-size="2.5" fill="#000" transform="rotate(-90 430.70 448.00)" textLength="3.40" lengthAdjust="spacingAndGlyphs" font-weight="bold" stroke="#000" stroke-width="0.1125" >A8</text><rect x="430.20" y="448.80" width="1.10" height="0.90" fill="#f55" stroke="none" stroke-width="0.7" /><path d="M434.60 325.40L434.60 369.30" stroke="#111" stroke-width="0.75" stroke-dasharray="3 1.1"/><path d="M434.60 404.40L434.60 443.40" stroke="#555" stroke-width="0.35" /><text x="434.15" y="369.10" font-size="3.5" fill="#000" transform="rotate(-90 434.15 369.10)" textLength="33.40" lengthAdjust="spacingAndGlyphs" font-weight="bold" stroke="#000" stroke-width="0.1575" >M1 _RA.VSR.RM05</text><path d="M433.10 336.40L433.10 351.60" stroke="#000" stroke-width="1.5" stroke-dasharray="2.4 .5 3.4 .4 1.6 .5"/><text x="434.20" y="443.20" font-size="3.2" fill="#000" transform="rotate(-90 434.20 443.20)" textLength="29.16" lengthAdjust="spacingAndGlyphs" font-weight="bold" stroke="#000" stroke-width="0.144" >Taupunktwächter SM</text><text x="434.20" y="448.00" font-size="2.5" fill="#000" transform="rotate(-90 434.20 448.00)" textLength="3.40" lengthAdjust="spacingAndGlyphs" font-weight="bold" stroke="#000" stroke-width="0.1125" >A3</text><rect x="433.70" y="448.80" width="1.10" height="0.90" fill="#f55" stroke="none" stroke-width="0.7" /><path d="M439.00 325.40L439.00 369.30" stroke="#111" stroke-width="0.75" stroke-dasharray="3 1.1"/><path d="M439.00 404.40L439.00 443.40" stroke="#555" stroke-width="0.35" /><text x="438.40" y="369.00" font-size="3" fill="#000" transform="rotate(-90 438.40 369.00)" textLength="3.20" lengthAdjust="spacingAndGlyphs" font-weight="bold" stroke="#000" stroke-width="0.135" >B1</text><rect x="436.40" y="355.60" width="2.40" height="3.80" fill="#fff" stroke="#222" stroke-width="0.35" /><text x="438.20" y="359.20" font-size="1.9" fill="#000" transform="rotate(-90 438.20 359.20)" textLength="3.20" lengthAdjust="spacingAndGlyphs" font-weight="bold" stroke="#000" stroke-width="0.0855" >-A1</text><text x="438.60" y="443.20" font-size="3.2" fill="#000" transform="rotate(-90 438.60 443.20)" textLength="37.00" lengthAdjust="spacingAndGlyphs" font-weight="bold" stroke="#000" stroke-width="0.144" >Heizen Ventil stetig 0-10V</text><text x="438.60" y="448.00" font-size="2.5" fill="#000" transform="rotate(-90 438.60 448.00)" textLength="3.40" lengthAdjust="spacingAndGlyphs" font-weight="bold" stroke="#000" stroke-width="0.1125" >A7</text><rect x="438.10" y="448.80" width="1.10" height="0.90" fill="#f55" stroke="none" stroke-width="0.7" /><path d="M442.80 325.40L442.80 369.30" stroke="#111" stroke-width="0.75" stroke-dasharray="3 1.1"/><path d="M442.80 404.40L442.80 443.40" stroke="#555" stroke-width="0.35" /><text x="442.35" y="369.10" font-size="3.5" fill="#000" transform="rotate(-90 442.35 369.10)" textLength="33.40" lengthAdjust="spacingAndGlyphs" font-weight="bold" stroke="#000" stroke-width="0.1575" >M1 _RA.VSR.RM05</text><path d="M441.30 336.40L441.30 351.60" stroke="#000" stroke-width="1.5" stroke-dasharray="2.4 .5 3.4 .4 1.6 .5"/><text x="442.40" y="443.20" font-size="3.2" fill="#000" transform="rotate(-90 442.40 443.20)" textLength="32.40" lengthAdjust="spacingAndGlyphs" font-weight="bold" stroke="#000" stroke-width="0.144" >Licht Stufe 1 Dimmer</text><text x="442.40" y="448.00" font-size="2.5" fill="#000" transform="rotate(-90 442.40 448.00)" textLength="3.40" lengthAdjust="spacingAndGlyphs" font-weight="bold" stroke="#000" stroke-width="0.1125" >A5</text><rect x="441.90" y="448.80" width="1.10" height="0.90" fill="#f55" stroke="none" stroke-width="0.7" /><path d="M447.00 325.40L447.00 369.30" stroke="#111" stroke-width="0.75" stroke-dasharray="3 1.1"/><path d="M447.00 404.40L447.00 443.40" stroke="#555" stroke-width="0.35" /><text x="446.55" y="369.10" font-size="3.5" fill="#000" transform="rotate(-90 446.55 369.10)" textLength="33.40" lengthAdjust="spacingAndGlyphs" font-weight="bold" stroke="#000" stroke-width="0.1575" >A1 _RA.BEL.SB03</text><path d="M445.50 336.40L445.50 351.60" stroke="#000" stroke-width="1.5" stroke-dasharray="2.4 .5 3.4 .4 1.6 .5"/><text x="446.60" y="443.20" font-size="3.2" fill="#000" transform="rotate(-90 446.60 443.20)" textLength="32.40" lengthAdjust="spacingAndGlyphs" font-weight="bold" stroke="#000" stroke-width="0.144" >Kühlen Ventil stetig</text><text x="446.60" y="448.00" font-size="2.5" fill="#000" transform="rotate(-90 446.60 448.00)" textLength="3.40" lengthAdjust="spacingAndGlyphs" font-weight="bold" stroke="#000" stroke-width="0.1125" >A8</text><rect x="446.10" y="448.80" width="1.10" height="0.90" fill="#f55" stroke="none" stroke-width="0.7" /><path d="M451.00 325.40L451.00 369.30" stroke="#111" stroke-width="0.75" stroke-dasharray="3 1.1"/><path d="M451.00 404.40L451.00 443.40" stroke="#555" stroke-width="0.35" /><text x="450.55" y="369.10" font-size="3.5" fill="#000" transform="rotate(-90 450.55 369.10)" textLength="33.40" lengthAdjust="spacingAndGlyphs" font-weight="bold" stroke="#000" stroke-width="0.1575" >S1 _RA.JAL.BM04</text><path d="M449.50 336.40L449.50 351.60" stroke="#000" stroke-width="1.5" stroke-dasharray="2.4 .5 3.4 .4 1.6 .5"/><text x="450.60" y="443.20" font-size="3.2" fill="#000" transform="rotate(-90 450.60 443.20)" textLength="37.00" lengthAdjust="spacingAndGlyphs" font-weight="bold" stroke="#000" stroke-width="0.144" >Heizen Ventil stetig 0-10V</text><text x="450.60" y="448.00" font-size="2.5" fill="#000" transform="rotate(-90 450.60 448.00)" textLength="3.40" lengthAdjust="spacingAndGlyphs" font-weight="bold" stroke="#000" stroke-width="0.1125" >A4</text><rect x="450.10" y="448.80" width="1.10" height="0.90" fill="#f55" stroke="none" stroke-width="0.7" /><path d="M454.60 325.40L454.60 369.30" stroke="#111" stroke-width="0.75" stroke-dasharray="3 1.1"/><path d="M454.60 404.40L454.60 443.40" stroke="#555" stroke-width="0.35" /><text x="454.15" y="369.10" font-size="3.5" fill="#000" transform="rotate(-90 454.15 369.10)" textLength="33.40" lengthAdjust="spacingAndGlyphs" font-weight="bold" stroke="#000" stroke-width="0.1575" >B1 _RA.RLT.MW01</text><path d="M453.10 336.40L453.10 351.60" stroke="#000" stroke-width="1.5" stroke-dasharray="2.4 .5 3.4 .4 1.6 .5"/><text x="454.20" y="443.20" font-size="3.2" fill="#000" transform="rotate(-90 454.20 443.20)" textLength="30.78" lengthAdjust="spacingAndGlyphs" font-weight="bold" stroke="#000" stroke-width="0.144" >Temp Raumfühler Ist</text><text x="454.20" y="448.00" font-size="2.5" fill="#000" transform="rotate(-90 454.20 448.00)" textLength="3.40" lengthAdjust="spacingAndGlyphs" font-weight="bold" stroke="#000" stroke-width="0.1125" >A6</text><rect x="453.70" y="448.80" width="1.10" height="0.90" fill="#f55" stroke="none" stroke-width="0.7" /><path d="M460.20 325.40L460.20 369.30" stroke="#111" stroke-width="0.75" stroke-dasharray="3 1.1"/><path d="M460.20 404.40L460.20 443.40" stroke="#555" stroke-width="0.35" /><text x="459.60" y="369.00" font-size="3" fill="#000" transform="rotate(-90 459.60 369.00)" textLength="3.20" lengthAdjust="spacingAndGlyphs" font-weight="bold" stroke="#000" stroke-width="0.135" >B1</text><rect x="457.60" y="355.60" width="2.40" height="3.80" fill="#fff" stroke="#222" stroke-width="0.35" /><text x="459.40" y="359.20" font-size="1.9" fill="#000" transform="rotate(-90 459.40 359.20)" textLength="3.20" lengthAdjust="spacingAndGlyphs" font-weight="bold" stroke="#000" stroke-width="0.0855" >-A1</text><text x="459.80" y="443.20" font-size="3.2" fill="#000" transform="rotate(-90 459.80 443.20)" textLength="30.78" lengthAdjust="spacingAndGlyphs" font-weight="bold" stroke="#000" stroke-width="0.144" >Temp Raumfühler Ist</text><text x="459.80" y="448.00" font-size="2.5" fill="#000" transform="rotate(-90 459.80 448.00)" textLength="3.40" lengthAdjust="spacingAndGlyphs" font-weight="bold" stroke="#000" stroke-width="0.1125" >A8</text><rect x="459.30" y="448.80" width="1.10" height="0.90" fill="#f55" stroke="none" stroke-width="0.7" /><path d="M464.50 325.40L464.50 369.30" stroke="#111" stroke-width="0.75" stroke-dasharray="3 1.1"/><path d="M464.50 404.40L464.50 443.40" stroke="#555" stroke-width="0.35" /><text x="464.05" y="369.10" font-size="3.5" fill="#000" transform="rotate(-90 464.05 369.10)" textLength="33.40" lengthAdjust="spacingAndGlyphs" font-weight="bold" stroke="#000" stroke-width="0.1575" >B1 _RA.RLT.MW01</text><path d="M463.00 336.40L463.00 351.60" stroke="#000" stroke-width="1.5" stroke-dasharray="2.4 .5 3.4 .4 1.6 .5"/><text x="464.10" y="443.20" font-size="3.2" fill="#000" transform="rotate(-90 464.10 443.20)" textLength="32.40" lengthAdjust="spacingAndGlyphs" font-weight="bold" stroke="#000" stroke-width="0.144" >Licht Stufe 1 Dimmer</text><text x="464.10" y="448.00" font-size="2.5" fill="#000" transform="rotate(-90 464.10 448.00)" textLength="3.40" lengthAdjust="spacingAndGlyphs" font-weight="bold" stroke="#000" stroke-width="0.1125" >A3</text><rect x="463.60" y="448.80" width="1.10" height="0.90" fill="#f55" stroke="none" stroke-width="0.7" /><path d="M468.50 325.40L468.50 369.30" stroke="#111" stroke-width="0.75" stroke-dasharray="3 1.1"/><path d="M468.50 404.40L468.50 443.40" stroke="#555" stroke-width="0.35" /><text x="468.05" y="369.10" font-size="3.5" fill="#000" transform="rotate(-90 468.05 369.10)" textLength="33.40" lengthAdjust="spacingAndGlyphs" font-weight="bold" stroke="#000" stroke-width="0.1575" >M1 _RA.VSR.RM05</text><path d="M467.00 336.40L467.00 351.60" stroke="#000" stroke-width="1.5" stroke-dasharray="2.4 .5 3.4 .4 1.6 .5"/><text x="468.10" y="443.20" font-size="3.2" fill="#000" transform="rotate(-90 468.10 443.20)" textLength="30.78" lengthAdjust="spacingAndGlyphs" font-weight="bold" stroke="#000" stroke-width="0.144" >Temp Raumfühler Ist</text><text x="468.10" y="448.00" font-size="2.5" fill="#000" transform="rotate(-90 468.10 448.00)" textLength="3.40" lengthAdjust="spacingAndGlyphs" font-weight="bold" stroke="#000" stroke-width="0.1125" >A3</text><rect x="467.60" y="448.80" width="1.10" height="0.90" fill="#f55" stroke="none" stroke-width="0.7" /><path d="M471.80 325.40L471.80 369.30" stroke="#111" stroke-width="0.75" stroke-dasharray="3 1.1"/><path d="M471.80 404.40L471.80 443.40" stroke="#555" stroke-width="0.35" /><text x="471.35" y="369.10" font-size="3.5" fill="#000" transform="rotate(-90 471.35 369.10)" textLength="33.40" lengthAdjust="spacingAndGlyphs" font-weight="bold" stroke="#000" stroke-width="0.1575" >B1 _RA.RLT.MW01</text><path d="M470.30 336.40L470.30 351.60" stroke="#000" stroke-width="1.5" stroke-dasharray="2.4 .5 3.4 .4 1.6 .5"/><text x="471.40" y="443.20" font-size="3.2" fill="#000" transform="rotate(-90 471.40 443.20)" textLength="25.92" lengthAdjust="spacingAndGlyphs" font-weight="bold" stroke="#000" stroke-width="0.144" >Volumenstrom VVS</text><text x="471.40" y="448.00" font-size="2.5" fill="#000" transform="rotate(-90 471.40 448.00)" textLength="3.40" lengthAdjust="spacingAndGlyphs" font-weight="bold" stroke="#000" stroke-width="0.1125" >A4</text><rect x="470.90" y="448.80" width="1.10" height="0.90" fill="#f55" stroke="none" stroke-width="0.7" /><path d="M555.50 325.00L555.50 448.40" stroke="#222" stroke-width="0.7" /><path d="M567.80 325.00L567.80 448.40" stroke="#222" stroke-width="0.7" /><path d="M559.00 325.40L559.00 369.30" stroke="#111" stroke-width="0.75" stroke-dasharray="3 1.1"/><path d="M559.00 404.40L559.00 443.40" stroke="#555" stroke-width="0.35" /><text x="558.40" y="369.00" font-size="3" fill="#000" transform="rotate(-90 558.40 369.00)" textLength="3.20" lengthAdjust="spacingAndGlyphs" font-weight="bold" stroke="#000" stroke-width="0.135" >B1</text><rect x="556.40" y="355.60" width="2.40" height="3.80" fill="#fff" stroke="#222" stroke-width="0.35" /><text x="558.20" y="359.20" font-size="1.9" fill="#000" transform="rotate(-90 558.20 359.20)" textLength="3.20" lengthAdjust="spacingAndGlyphs" font-weight="bold" stroke="#000" stroke-width="0.0855" >-A1</text><text x="558.60" y="443.20" font-size="3.2" fill="#000" transform="rotate(-90 558.60 443.20)" textLength="32.40" lengthAdjust="spacingAndGlyphs" font-weight="bold" stroke="#000" stroke-width="0.144" >Licht Stufe 1 Dimmer</text><text x="558.60" y="448.00" font-size="2.5" fill="#000" transform="rotate(-90 558.60 448.00)" textLength="3.40" lengthAdjust="spacingAndGlyphs" font-weight="bold" stroke="#000" stroke-width="0.1125" >A6</text><rect x="558.10" y="448.80" width="1.10" height="0.90" fill="#f55" stroke="none" stroke-width="0.7" /><path d="M562.80 325.40L562.80 369.30" stroke="#111" stroke-width="0.75" stroke-dasharray="3 1.1"/><path d="M562.80 404.40L562.80 443.40" stroke="#555" stroke-width="0.35" /><text x="562.35" y="369.10" font-size="3.5" fill="#000" transform="rotate(-90 562.35 369.10)" textLength="33.40" lengthAdjust="spacingAndGlyphs" font-weight="bold" stroke="#000" stroke-width="0.1575" >B2 _RA.HZG.SW01</text><path d="M561.30 336.40L561.30 351.60" stroke="#000" stroke-width="1.5" stroke-dasharray="2.4 .5 3.4 .4 1.6 .5"/><text x="562.40" y="443.20" font-size="3.2" fill="#000" transform="rotate(-90 562.40 443.20)" textLength="37.00" lengthAdjust="spacingAndGlyphs" font-weight="bold" stroke="#000" stroke-width="0.144" >Heizen Ventil stetig 0-10V</text><text x="562.40" y="448.00" font-size="2.5" fill="#000" transform="rotate(-90 562.40 448.00)" textLength="3.40" lengthAdjust="spacingAndGlyphs" font-weight="bold" stroke="#000" stroke-width="0.1125" >A7</text><rect x="561.90" y="448.80" width="1.10" height="0.90" fill="#f55" stroke="none" stroke-width="0.7" /><path d="M566.60 325.40L566.60 369.30" stroke="#111" stroke-width="0.75" stroke-dasharray="3 1.1"/><path d="M566.60 404.40L566.60 443.40" stroke="#555" stroke-width="0.35" /><text x="566.15" y="369.10" font-size="3.5" fill="#000" transform="rotate(-90 566.15 369.10)" textLength="33.40" lengthAdjust="spacingAndGlyphs" font-weight="bold" stroke="#000" stroke-width="0.1575" >S1 _RA.JAL.BM04</text><path d="M565.10 336.40L565.10 351.60" stroke="#000" stroke-width="1.5" stroke-dasharray="2.4 .5 3.4 .4 1.6 .5"/><text x="566.20" y="443.20" font-size="3.2" fill="#000" transform="rotate(-90 566.20 443.20)" textLength="29.16" lengthAdjust="spacingAndGlyphs" font-weight="bold" stroke="#000" stroke-width="0.144" >Präsenzmelder Raum</text><text x="566.20" y="448.00" font-size="2.5" fill="#000" transform="rotate(-90 566.20 448.00)" textLength="3.40" lengthAdjust="spacingAndGlyphs" font-weight="bold" stroke="#000" stroke-width="0.1125" >A5</text><rect x="565.70" y="448.80" width="1.10" height="0.90" fill="#f55" stroke="none" stroke-width="0.7" /><path d="M414.60 320.00H422.00L425.40 323.40" stroke="#e8333a" stroke-width="0.55" fill="none" /><text x="415.00" y="320.70" font-size="3" fill="#2a0808" textLength="6.60" lengthAdjust="spacingAndGlyphs" font-weight="bold" stroke="#2a0808" stroke-width="0.135" >B21</text><text x="416.80" y="323.20" font-size="2.1" fill="#333" textLength="3.40" lengthAdjust="spacingAndGlyphs" font-weight="bold" stroke="#333" stroke-width="0.0945" >-B1</text><path d="M434.00 320.00H441.40L444.80 323.40" stroke="#e8333a" stroke-width="0.55" fill="none" /><text x="434.40" y="320.70" font-size="3" fill="#2a0808" textLength="6.60" lengthAdjust="spacingAndGlyphs" font-weight="bold" stroke="#2a0808" stroke-width="0.135" >Y31</text><text x="436.20" y="323.20" font-size="2.1" fill="#333" textLength="3.40" lengthAdjust="spacingAndGlyphs" font-weight="bold" stroke="#333" stroke-width="0.0945" >-B1</text><path d="M451.60 320.00H459.00L462.40 323.40" stroke="#e8333a" stroke-width="0.55" fill="none" /><text x="452.00" y="320.70" font-size="3" fill="#2a0808" textLength="6.60" lengthAdjust="spacingAndGlyphs" font-weight="bold" stroke="#2a0808" stroke-width="0.135" >M41</text><text x="453.80" y="323.20" font-size="2.1" fill="#333" textLength="3.40" lengthAdjust="spacingAndGlyphs" font-weight="bold" stroke="#333" stroke-width="0.0945" >-B1</text><path d="M551.40 320.00H558.80L562.20 323.40" stroke="#e8333a" stroke-width="0.55" fill="none" /><text x="551.80" y="320.70" font-size="3" fill="#2a0808" textLength="6.60" lengthAdjust="spacingAndGlyphs" font-weight="bold" stroke="#2a0808" stroke-width="0.135" >B51</text><text x="553.60" y="323.20" font-size="2.1" fill="#333" textLength="3.40" lengthAdjust="spacingAndGlyphs" font-weight="bold" stroke="#333" stroke-width="0.0945" >-B1</text><text x="427.40" y="386.80" font-size="3.1" fill="#1a1a1a" text-anchor="middle" >1</text><text x="445.60" y="386.80" font-size="3.1" fill="#1a1a1a" text-anchor="middle" >8</text><text x="427.40" y="392.00" font-size="3.1" fill="#1a1a1a" text-anchor="middle" >1</text><text x="445.60" y="392.00" font-size="3.1" fill="#1a1a1a" text-anchor="middle" >1</text><text x="464.00" y="392.00" font-size="3.1" fill="#1a1a1a" text-anchor="middle" >2</text><text x="464.00" y="397.30" font-size="3.1" fill="#1a1a1a" text-anchor="middle" >1</text><text x="427.40" y="402.80" font-size="3.1" fill="#1a1a1a" text-anchor="middle" >1</text><text x="445.60" y="402.80" font-size="3.1" fill="#1a1a1a" text-anchor="middle" >1</text><text x="562.00" y="397.30" font-size="3.1" fill="#1a1a1a" text-anchor="middle" >1</text><text x="562.00" y="402.80" font-size="3.1" fill="#1a1a1a" text-anchor="middle" >1</text><path d="M609.35 325.00L609.35 448.40" stroke="#222" stroke-width="0.7" /><path d="M625.25 325.00L625.25 448.40" stroke="#222" stroke-width="0.7" /><path d="M662.35 325.00L662.35 448.40" stroke="#222" stroke-width="0.7" /><path d="M645.95 325.00L645.95 448.40" stroke="#222" stroke-width="1.5" /><path d="M612.95 325.40L612.95 369.30" stroke="#111" stroke-width="0.75" stroke-dasharray="3 1.1"/><path d="M612.95 404.40L612.95 443.40" stroke="#555" stroke-width="0.35" /><text x="612.35" y="369.00" font-size="3" fill="#000" transform="rotate(-90 612.35 369.00)" textLength="3.20" lengthAdjust="spacingAndGlyphs" font-weight="bold" stroke="#000" stroke-width="0.135" >B1</text><rect x="610.35" y="355.60" width="2.40" height="3.80" fill="#fff" stroke="#222" stroke-width="0.35" /><text x="612.15" y="359.20" font-size="1.9" fill="#000" transform="rotate(-90 612.15 359.20)" textLength="3.20" lengthAdjust="spacingAndGlyphs" font-weight="bold" stroke="#000" stroke-width="0.0855" >-A1</text><text x="612.55" y="443.20" font-size="3.2" fill="#000" transform="rotate(-90 612.55 443.20)" textLength="27.54" lengthAdjust="spacingAndGlyphs" font-weight="bold" stroke="#000" stroke-width="0.144" >Fensterkontakt RM</text><text x="612.55" y="448.00" font-size="2.5" fill="#000" transform="rotate(-90 612.55 448.00)" textLength="3.40" lengthAdjust="spacingAndGlyphs" font-weight="bold" stroke="#000" stroke-width="0.1125" >A5</text><rect x="612.05" y="448.80" width="1.10" height="0.90" fill="#f55" stroke="none" stroke-width="0.7" /><path d="M616.95 325.40L616.95 369.30" stroke="#111" stroke-width="0.75" stroke-dasharray="3 1.1"/><path d="M616.95 404.40L616.95 443.40" stroke="#555" stroke-width="0.35" /><text x="616.50" y="369.10" font-size="3.5" fill="#000" transform="rotate(-90 616.50 369.10)" textLength="33.40" lengthAdjust="spacingAndGlyphs" font-weight="bold" stroke="#000" stroke-width="0.1575" >M1 _RA.VSR.RM05</text><path d="M615.45 336.40L615.45 351.60" stroke="#000" stroke-width="1.5" stroke-dasharray="2.4 .5 3.4 .4 1.6 .5"/><text x="616.55" y="443.20" font-size="3.2" fill="#000" transform="rotate(-90 616.55 443.20)" textLength="25.92" lengthAdjust="spacingAndGlyphs" font-weight="bold" stroke="#000" stroke-width="0.144" >Volumenstrom VVS</text><text x="616.55" y="448.00" font-size="2.5" fill="#000" transform="rotate(-90 616.55 448.00)" textLength="3.40" lengthAdjust="spacingAndGlyphs" font-weight="bold" stroke="#000" stroke-width="0.1125" >A6</text><rect x="616.05" y="448.80" width="1.10" height="0.90" fill="#f55" stroke="none" stroke-width="0.7" /><path d="M620.85 325.40L620.85 369.30" stroke="#111" stroke-width="0.75" stroke-dasharray="3 1.1"/><path d="M620.85 404.40L620.85 443.40" stroke="#555" stroke-width="0.35" /><text x="620.40" y="369.10" font-size="3.5" fill="#000" transform="rotate(-90 620.40 369.10)" textLength="33.40" lengthAdjust="spacingAndGlyphs" font-weight="bold" stroke="#000" stroke-width="0.1575" >B2 _RA.HZG.SW01</text><path d="M619.35 336.40L619.35 351.60" stroke="#000" stroke-width="1.5" stroke-dasharray="2.4 .5 3.4 .4 1.6 .5"/><text x="620.45" y="443.20" font-size="3.2" fill="#000" transform="rotate(-90 620.45 443.20)" textLength="32.40" lengthAdjust="spacingAndGlyphs" font-weight="bold" stroke="#000" stroke-width="0.144" >Licht Stufe 1 Dimmer</text><text x="620.45" y="448.00" font-size="2.5" fill="#000" transform="rotate(-90 620.45 448.00)" textLength="3.40" lengthAdjust="spacingAndGlyphs" font-weight="bold" stroke="#000" stroke-width="0.1125" >A1</text><rect x="619.95" y="448.80" width="1.10" height="0.90" fill="#f55" stroke="none" stroke-width="0.7" /><path d="M624.35 325.40L624.35 369.30" stroke="#111" stroke-width="0.75" stroke-dasharray="3 1.1"/><path d="M624.35 404.40L624.35 443.40" stroke="#555" stroke-width="0.35" /><text x="623.90" y="369.10" font-size="3.5" fill="#000" transform="rotate(-90 623.90 369.10)" textLength="33.40" lengthAdjust="spacingAndGlyphs" font-weight="bold" stroke="#000" stroke-width="0.1575" >Y1 _RA.KLT.ST02</text><path d="M622.85 336.40L622.85 351.60" stroke="#000" stroke-width="1.5" stroke-dasharray="2.4 .5 3.4 .4 1.6 .5"/><text x="623.95" y="443.20" font-size="3.2" fill="#000" transform="rotate(-90 623.95 443.20)" textLength="27.54" lengthAdjust="spacingAndGlyphs" font-weight="bold" stroke="#000" stroke-width="0.144" >Fensterkontakt RM</text><text x="623.95" y="448.00" font-size="2.5" fill="#000" transform="rotate(-90 623.95 448.00)" textLength="3.40" lengthAdjust="spacingAndGlyphs" font-weight="bold" stroke="#000" stroke-width="0.1125" >A5</text><rect x="623.45" y="448.80" width="1.10" height="0.90" fill="#f55" stroke="none" stroke-width="0.7" /><path d="M628.75 325.40L628.75 369.30" stroke="#111" stroke-width="0.75" stroke-dasharray="3 1.1"/><path d="M628.75 404.40L628.75 443.40" stroke="#555" stroke-width="0.35" /><text x="628.15" y="369.00" font-size="3" fill="#000" transform="rotate(-90 628.15 369.00)" textLength="3.20" lengthAdjust="spacingAndGlyphs" font-weight="bold" stroke="#000" stroke-width="0.135" >B1</text><rect x="626.15" y="355.60" width="2.40" height="3.80" fill="#fff" stroke="#222" stroke-width="0.35" /><text x="627.95" y="359.20" font-size="1.9" fill="#000" transform="rotate(-90 627.95 359.20)" textLength="3.20" lengthAdjust="spacingAndGlyphs" font-weight="bold" stroke="#000" stroke-width="0.0855" >-A1</text><text x="628.35" y="443.20" font-size="3.2" fill="#000" transform="rotate(-90 628.35 443.20)" textLength="37.00" lengthAdjust="spacingAndGlyphs" font-weight="bold" stroke="#000" stroke-width="0.144" >Heizen Ventil stetig 0-10V</text><text x="628.35" y="448.00" font-size="2.5" fill="#000" transform="rotate(-90 628.35 448.00)" textLength="3.40" lengthAdjust="spacingAndGlyphs" font-weight="bold" stroke="#000" stroke-width="0.1125" >A4</text><rect x="627.85" y="448.80" width="1.10" height="0.90" fill="#f55" stroke="none" stroke-width="0.7" /><path d="M632.55 325.40L632.55 369.30" stroke="#111" stroke-width="0.75" stroke-dasharray="3 1.1"/><path d="M632.55 404.40L632.55 443.40" stroke="#555" stroke-width="0.35" /><text x="632.10" y="369.10" font-size="3.5" fill="#000" transform="rotate(-90 632.10 369.10)" textLength="33.40" lengthAdjust="spacingAndGlyphs" font-weight="bold" stroke="#000" stroke-width="0.1575" >B1 _RA.RLT.MW01</text><path d="M631.05 336.40L631.05 351.60" stroke="#000" stroke-width="1.5" stroke-dasharray="2.4 .5 3.4 .4 1.6 .5"/><text x="632.15" y="443.20" font-size="3.2" fill="#000" transform="rotate(-90 632.15 443.20)" textLength="29.16" lengthAdjust="spacingAndGlyphs" font-weight="bold" stroke="#000" stroke-width="0.144" >Taupunktwächter SM</text><text x="632.15" y="448.00" font-size="2.5" fill="#000" transform="rotate(-90 632.15 448.00)" textLength="3.40" lengthAdjust="spacingAndGlyphs" font-weight="bold" stroke="#000" stroke-width="0.1125" >A8</text><rect x="631.65" y="448.80" width="1.10" height="0.90" fill="#f55" stroke="none" stroke-width="0.7" /><path d="M636.75 325.40L636.75 369.30" stroke="#111" stroke-width="0.75" stroke-dasharray="3 1.1"/><path d="M636.75 404.40L636.75 443.40" stroke="#555" stroke-width="0.35" /><text x="636.30" y="369.10" font-size="3.5" fill="#000" transform="rotate(-90 636.30 369.10)" textLength="33.40" lengthAdjust="spacingAndGlyphs" font-weight="bold" stroke="#000" stroke-width="0.1575" >B2 _RA.HZG.SW01</text><path d="M635.25 336.40L635.25 351.60" stroke="#000" stroke-width="1.5" stroke-dasharray="2.4 .5 3.4 .4 1.6 .5"/><text x="636.35" y="443.20" font-size="3.2" fill="#000" transform="rotate(-90 636.35 443.20)" textLength="30.78" lengthAdjust="spacingAndGlyphs" font-weight="bold" stroke="#000" stroke-width="0.144" >Sollwertsteller LON</text><text x="636.35" y="448.00" font-size="2.5" fill="#000" transform="rotate(-90 636.35 448.00)" textLength="3.40" lengthAdjust="spacingAndGlyphs" font-weight="bold" stroke="#000" stroke-width="0.1125" >A6</text><rect x="635.85" y="448.80" width="1.10" height="0.90" fill="#f55" stroke="none" stroke-width="0.7" /><path d="M640.75 325.40L640.75 369.30" stroke="#111" stroke-width="0.75" stroke-dasharray="3 1.1"/><path d="M640.75 404.40L640.75 443.40" stroke="#555" stroke-width="0.35" /><text x="640.30" y="369.10" font-size="3.5" fill="#000" transform="rotate(-90 640.30 369.10)" textLength="33.40" lengthAdjust="spacingAndGlyphs" font-weight="bold" stroke="#000" stroke-width="0.1575" >B1 _RA.RLT.MW01</text><path d="M639.25 336.40L639.25 351.60" stroke="#000" stroke-width="1.5" stroke-dasharray="2.4 .5 3.4 .4 1.6 .5"/><text x="640.35" y="443.20" font-size="3.2" fill="#000" transform="rotate(-90 640.35 443.20)" textLength="32.40" lengthAdjust="spacingAndGlyphs" font-weight="bold" stroke="#000" stroke-width="0.144" >Kühlen Ventil stetig</text><text x="640.35" y="448.00" font-size="2.5" fill="#000" transform="rotate(-90 640.35 448.00)" textLength="3.40" lengthAdjust="spacingAndGlyphs" font-weight="bold" stroke="#000" stroke-width="0.1125" >A5</text><rect x="639.85" y="448.80" width="1.10" height="0.90" fill="#f55" stroke="none" stroke-width="0.7" /><path d="M644.35 325.40L644.35 369.30" stroke="#111" stroke-width="0.75" stroke-dasharray="3 1.1"/><path d="M644.35 404.40L644.35 443.40" stroke="#555" stroke-width="0.35" /><text x="643.90" y="369.10" font-size="3.5" fill="#000" transform="rotate(-90 643.90 369.10)" textLength="33.40" lengthAdjust="spacingAndGlyphs" font-weight="bold" stroke="#000" stroke-width="0.1575" >B1 _RA.RLT.MW01</text><path d="M642.85 336.40L642.85 351.60" stroke="#000" stroke-width="1.5" stroke-dasharray="2.4 .5 3.4 .4 1.6 .5"/><text x="643.95" y="443.20" font-size="3.2" fill="#000" transform="rotate(-90 643.95 443.20)" textLength="34.02" lengthAdjust="spacingAndGlyphs" font-weight="bold" stroke="#000" stroke-width="0.144" >Jalousie Auf/Ab Motor</text><text x="643.95" y="448.00" font-size="2.5" fill="#000" transform="rotate(-90 643.95 448.00)" textLength="3.40" lengthAdjust="spacingAndGlyphs" font-weight="bold" stroke="#000" stroke-width="0.1125" >A3</text><rect x="643.45" y="448.80" width="1.10" height="0.90" fill="#f55" stroke="none" stroke-width="0.7" /><path d="M649.95 325.40L649.95 369.30" stroke="#111" stroke-width="0.75" stroke-dasharray="3 1.1"/><path d="M649.95 404.40L649.95 443.40" stroke="#555" stroke-width="0.35" /><text x="649.35" y="369.00" font-size="3" fill="#000" transform="rotate(-90 649.35 369.00)" textLength="3.20" lengthAdjust="spacingAndGlyphs" font-weight="bold" stroke="#000" stroke-width="0.135" >B1</text><rect x="647.35" y="355.60" width="2.40" height="3.80" fill="#fff" stroke="#222" stroke-width="0.35" /><text x="649.15" y="359.20" font-size="1.9" fill="#000" transform="rotate(-90 649.15 359.20)" textLength="3.20" lengthAdjust="spacingAndGlyphs" font-weight="bold" stroke="#000" stroke-width="0.0855" >-A1</text><text x="649.55" y="443.20" font-size="3.2" fill="#000" transform="rotate(-90 649.55 443.20)" textLength="30.78" lengthAdjust="spacingAndGlyphs" font-weight="bold" stroke="#000" stroke-width="0.144" >Sollwertsteller LON</text><text x="649.55" y="448.00" font-size="2.5" fill="#000" transform="rotate(-90 649.55 448.00)" textLength="3.40" lengthAdjust="spacingAndGlyphs" font-weight="bold" stroke="#000" stroke-width="0.1125" >A4</text><rect x="649.05" y="448.80" width="1.10" height="0.90" fill="#f55" stroke="none" stroke-width="0.7" /><path d="M654.25 325.40L654.25 369.30" stroke="#111" stroke-width="0.75" stroke-dasharray="3 1.1"/><path d="M654.25 404.40L654.25 443.40" stroke="#555" stroke-width="0.35" /><text x="653.80" y="369.10" font-size="3.5" fill="#000" transform="rotate(-90 653.80 369.10)" textLength="33.40" lengthAdjust="spacingAndGlyphs" font-weight="bold" stroke="#000" stroke-width="0.1575" >B2 _RA.HZG.SW01</text><path d="M652.75 336.40L652.75 351.60" stroke="#000" stroke-width="1.5" stroke-dasharray="2.4 .5 3.4 .4 1.6 .5"/><text x="653.85" y="443.20" font-size="3.2" fill="#000" transform="rotate(-90 653.85 443.20)" textLength="29.16" lengthAdjust="spacingAndGlyphs" font-weight="bold" stroke="#000" stroke-width="0.144" >Präsenzmelder Raum</text><text x="653.85" y="448.00" font-size="2.5" fill="#000" transform="rotate(-90 653.85 448.00)" textLength="3.40" lengthAdjust="spacingAndGlyphs" font-weight="bold" stroke="#000" stroke-width="0.1125" >A4</text><rect x="653.35" y="448.80" width="1.10" height="0.90" fill="#f55" stroke="none" stroke-width="0.7" /><path d="M658.25 325.40L658.25 369.30" stroke="#111" stroke-width="0.75" stroke-dasharray="3 1.1"/><path d="M658.25 404.40L658.25 443.40" stroke="#555" stroke-width="0.35" /><text x="657.80" y="369.10" font-size="3.5" fill="#000" transform="rotate(-90 657.80 369.10)" textLength="33.40" lengthAdjust="spacingAndGlyphs" font-weight="bold" stroke="#000" stroke-width="0.1575" >A1 _RA.BEL.SB03</text><path d="M656.75 336.40L656.75 351.60" stroke="#000" stroke-width="1.5" stroke-dasharray="2.4 .5 3.4 .4 1.6 .5"/><text x="657.85" y="443.20" font-size="3.2" fill="#000" transform="rotate(-90 657.85 443.20)" textLength="30.78" lengthAdjust="spacingAndGlyphs" font-weight="bold" stroke="#000" stroke-width="0.144" >Temp Raumfühler Ist</text><text x="657.85" y="448.00" font-size="2.5" fill="#000" transform="rotate(-90 657.85 448.00)" textLength="3.40" lengthAdjust="spacingAndGlyphs" font-weight="bold" stroke="#000" stroke-width="0.1125" >A1</text><rect x="657.35" y="448.80" width="1.10" height="0.90" fill="#f55" stroke="none" stroke-width="0.7" /><path d="M661.55 325.40L661.55 369.30" stroke="#111" stroke-width="0.75" stroke-dasharray="3 1.1"/><path d="M661.55 404.40L661.55 443.40" stroke="#555" stroke-width="0.35" /><text x="661.10" y="369.10" font-size="3.5" fill="#000" transform="rotate(-90 661.10 369.10)" textLength="33.40" lengthAdjust="spacingAndGlyphs" font-weight="bold" stroke="#000" stroke-width="0.1575" >B1 _RA.RLT.MW01</text><path d="M660.05 336.40L660.05 351.60" stroke="#000" stroke-width="1.5" stroke-dasharray="2.4 .5 3.4 .4 1.6 .5"/><text x="661.15" y="443.20" font-size="3.2" fill="#000" transform="rotate(-90 661.15 443.20)" textLength="34.02" lengthAdjust="spacingAndGlyphs" font-weight="bold" stroke="#000" stroke-width="0.144" >Jalousie Auf/Ab Motor</text><text x="661.15" y="448.00" font-size="2.5" fill="#000" transform="rotate(-90 661.15 448.00)" textLength="3.40" lengthAdjust="spacingAndGlyphs" font-weight="bold" stroke="#000" stroke-width="0.1125" >A6</text><rect x="660.65" y="448.80" width="1.10" height="0.90" fill="#f55" stroke="none" stroke-width="0.7" /><path d="M745.25 325.00L745.25 448.40" stroke="#222" stroke-width="0.7" /><path d="M757.55 325.00L757.55 448.40" stroke="#222" stroke-width="0.7" /><path d="M748.75 325.40L748.75 369.30" stroke="#111" stroke-width="0.75" stroke-dasharray="3 1.1"/><path d="M748.75 404.40L748.75 443.40" stroke="#555" stroke-width="0.35" /><text x="748.15" y="369.00" font-size="3" fill="#000" transform="rotate(-90 748.15 369.00)" textLength="3.20" lengthAdjust="spacingAndGlyphs" font-weight="bold" stroke="#000" stroke-width="0.135" >B1</text><rect x="746.15" y="355.60" width="2.40" height="3.80" fill="#fff" stroke="#222" stroke-width="0.35" /><text x="747.95" y="359.20" font-size="1.9" fill="#000" transform="rotate(-90 747.95 359.20)" textLength="3.20" lengthAdjust="spacingAndGlyphs" font-weight="bold" stroke="#000" stroke-width="0.0855" >-A1</text><text x="748.35" y="443.20" font-size="3.2" fill="#000" transform="rotate(-90 748.35 443.20)" textLength="29.16" lengthAdjust="spacingAndGlyphs" font-weight="bold" stroke="#000" stroke-width="0.144" >Raum Temperatur MW</text><text x="748.35" y="448.00" font-size="2.5" fill="#000" transform="rotate(-90 748.35 448.00)" textLength="3.40" lengthAdjust="spacingAndGlyphs" font-weight="bold" stroke="#000" stroke-width="0.1125" >A2</text><rect x="747.85" y="448.80" width="1.10" height="0.90" fill="#f55" stroke="none" stroke-width="0.7" /><path d="M752.55 325.40L752.55 369.30" stroke="#111" stroke-width="0.75" stroke-dasharray="3 1.1"/><path d="M752.55 404.40L752.55 443.40" stroke="#555" stroke-width="0.35" /><text x="752.10" y="369.10" font-size="3.5" fill="#000" transform="rotate(-90 752.10 369.10)" textLength="33.40" lengthAdjust="spacingAndGlyphs" font-weight="bold" stroke="#000" stroke-width="0.1575" >B1 _RA.RLT.MW01</text><path d="M751.05 336.40L751.05 351.60" stroke="#000" stroke-width="1.5" stroke-dasharray="2.4 .5 3.4 .4 1.6 .5"/><text x="752.15" y="443.20" font-size="3.2" fill="#000" transform="rotate(-90 752.15 443.20)" textLength="29.16" lengthAdjust="spacingAndGlyphs" font-weight="bold" stroke="#000" stroke-width="0.144" >Präsenzmelder Raum</text><text x="752.15" y="448.00" font-size="2.5" fill="#000" transform="rotate(-90 752.15 448.00)" textLength="3.40" lengthAdjust="spacingAndGlyphs" font-weight="bold" stroke="#000" stroke-width="0.1125" >A4</text><rect x="751.65" y="448.80" width="1.10" height="0.90" fill="#f55" stroke="none" stroke-width="0.7" /><path d="M756.35 325.40L756.35 369.30" stroke="#111" stroke-width="0.75" stroke-dasharray="3 1.1"/><path d="M756.35 404.40L756.35 443.40" stroke="#555" stroke-width="0.35" /><text x="755.90" y="369.10" font-size="3.5" fill="#000" transform="rotate(-90 755.90 369.10)" textLength="33.40" lengthAdjust="spacingAndGlyphs" font-weight="bold" stroke="#000" stroke-width="0.1575" >B2 _RA.HZG.SW01</text><path d="M754.85 336.40L754.85 351.60" stroke="#000" stroke-width="1.5" stroke-dasharray="2.4 .5 3.4 .4 1.6 .5"/><text x="755.95" y="443.20" font-size="3.2" fill="#000" transform="rotate(-90 755.95 443.20)" textLength="37.00" lengthAdjust="spacingAndGlyphs" font-weight="bold" stroke="#000" stroke-width="0.144" >Heizen Ventil stetig 0-10V</text><text x="755.95" y="448.00" font-size="2.5" fill="#000" transform="rotate(-90 755.95 448.00)" textLength="3.40" lengthAdjust="spacingAndGlyphs" font-weight="bold" stroke="#000" stroke-width="0.1125" >A2</text><rect x="755.45" y="448.80" width="1.10" height="0.90" fill="#f55" stroke="none" stroke-width="0.7" /><path d="M604.35 320.00H611.75L615.15 323.40" stroke="#e8333a" stroke-width="0.55" fill="none" /><text x="604.75" y="320.70" font-size="3" fill="#2a0808" textLength="6.60" lengthAdjust="spacingAndGlyphs" font-weight="bold" stroke="#2a0808" stroke-width="0.135" >B21</text><text x="606.55" y="323.20" font-size="2.1" fill="#333" textLength="3.40" lengthAdjust="spacingAndGlyphs" font-weight="bold" stroke="#333" stroke-width="0.0945" >-B1</text><path d="M623.75 320.00H631.15L634.55 323.40" stroke="#e8333a" stroke-width="0.55" fill="none" /><text x="624.15" y="320.70" font-size="3" fill="#2a0808" textLength="6.60" lengthAdjust="spacingAndGlyphs" font-weight="bold" stroke="#2a0808" stroke-width="0.135" >Y31</text><text x="625.95" y="323.20" font-size="2.1" fill="#333" textLength="3.40" lengthAdjust="spacingAndGlyphs" font-weight="bold" stroke="#333" stroke-width="0.0945" >-B1</text><path d="M641.35 320.00H648.75L652.15 323.40" stroke="#e8333a" stroke-width="0.55" fill="none" /><text x="641.75" y="320.70" font-size="3" fill="#2a0808" textLength="6.60" lengthAdjust="spacingAndGlyphs" font-weight="bold" stroke="#2a0808" stroke-width="0.135" >M41</text><text x="643.55" y="323.20" font-size="2.1" fill="#333" textLength="3.40" lengthAdjust="spacingAndGlyphs" font-weight="bold" stroke="#333" stroke-width="0.0945" >-B1</text><path d="M741.15 320.00H748.55L751.95 323.40" stroke="#e8333a" stroke-width="0.55" fill="none" /><text x="741.55" y="320.70" font-size="3" fill="#2a0808" textLength="6.60" lengthAdjust="spacingAndGlyphs" font-weight="bold" stroke="#2a0808" stroke-width="0.135" >B51</text><text x="743.35" y="323.20" font-size="2.1" fill="#333" textLength="3.40" lengthAdjust="spacingAndGlyphs" font-weight="bold" stroke="#333" stroke-width="0.0945" >-B1</text><text x="617.15" y="386.80" font-size="3.1" fill="#1a1a1a" text-anchor="middle" >1</text><text x="635.35" y="386.80" font-size="3.1" fill="#1a1a1a" text-anchor="middle" >8</text><text x="617.15" y="392.00" font-size="3.1" fill="#1a1a1a" text-anchor="middle" >1</text><text x="635.35" y="392.00" font-size="3.1" fill="#1a1a1a" text-anchor="middle" >1</text><text x="653.75" y="392.00" font-size="3.1" fill="#1a1a1a" text-anchor="middle" >2</text><text x="653.75" y="397.30" font-size="3.1" fill="#1a1a1a" text-anchor="middle" >1</text><text x="617.15" y="402.80" font-size="3.1" fill="#1a1a1a" text-anchor="middle" >1</text><text x="635.35" y="402.80" font-size="3.1" fill="#1a1a1a" text-anchor="middle" >1</text><text x="751.75" y="397.30" font-size="3.1" fill="#1a1a1a" text-anchor="middle" >1</text><text x="751.75" y="402.80" font-size="3.1" fill="#1a1a1a" text-anchor="middle" >1</text><path d="M765.50 325.00L765.50 448.40" stroke="#222" stroke-width="0.7" /><path d="M784.60 325.00L784.60 448.40" stroke="#222" stroke-width="0.7" /><path d="M768.40 325.40L768.40 369.30" stroke="#111" stroke-width="0.75" stroke-dasharray="3 1.1"/><path d="M768.40 404.40L768.40 443.40" stroke="#555" stroke-width="0.35" /><text x="767.80" y="369.00" font-size="3" fill="#000" transform="rotate(-90 767.80 369.00)" textLength="3.20" lengthAdjust="spacingAndGlyphs" font-weight="bold" stroke="#000" stroke-width="0.135" >B1</text><rect x="765.80" y="355.60" width="2.40" height="3.80" fill="#fff" stroke="#222" stroke-width="0.35" /><text x="767.60" y="359.20" font-size="1.9" fill="#000" transform="rotate(-90 767.60 359.20)" textLength="3.20" lengthAdjust="spacingAndGlyphs" font-weight="bold" stroke="#000" stroke-width="0.0855" >-A1</text><text x="768.00" y="443.20" font-size="3.2" fill="#000" transform="rotate(-90 768.00 443.20)" textLength="29.16" lengthAdjust="spacingAndGlyphs" font-weight="bold" stroke="#000" stroke-width="0.144" >Taupunktwächter SM</text><text x="768.00" y="448.00" font-size="2.5" fill="#000" transform="rotate(-90 768.00 448.00)" textLength="3.40" lengthAdjust="spacingAndGlyphs" font-weight="bold" stroke="#000" stroke-width="0.1125" >A5</text><rect x="767.50" y="448.80" width="1.10" height="0.90" fill="#f55" stroke="none" stroke-width="0.7" /><path d="M772.40 325.40L772.40 369.30" stroke="#111" stroke-width="0.75" stroke-dasharray="3 1.1"/><path d="M772.40 404.40L772.40 443.40" stroke="#555" stroke-width="0.35" /><text x="771.95" y="369.10" font-size="3.5" fill="#000" transform="rotate(-90 771.95 369.10)" textLength="33.40" lengthAdjust="spacingAndGlyphs" font-weight="bold" stroke="#000" stroke-width="0.1575" >M1 _RA.VSR.RM05</text><path d="M770.90 336.40L770.90 351.60" stroke="#000" stroke-width="1.5" stroke-dasharray="2.4 .5 3.4 .4 1.6 .5"/><text x="772.00" y="443.20" font-size="3.2" fill="#000" transform="rotate(-90 772.00 443.20)" textLength="34.02" lengthAdjust="spacingAndGlyphs" font-weight="bold" stroke="#000" stroke-width="0.144" >Jalousie Auf/Ab Motor</text><text x="772.00" y="448.00" font-size="2.5" fill="#000" transform="rotate(-90 772.00 448.00)" textLength="3.40" lengthAdjust="spacingAndGlyphs" font-weight="bold" stroke="#000" stroke-width="0.1125" >A1</text><rect x="771.50" y="448.80" width="1.10" height="0.90" fill="#f55" stroke="none" stroke-width="0.7" /><path d="M776.40 325.40L776.40 369.30" stroke="#111" stroke-width="0.75" stroke-dasharray="3 1.1"/><path d="M776.40 404.40L776.40 443.40" stroke="#555" stroke-width="0.35" /><text x="775.95" y="369.10" font-size="3.5" fill="#000" transform="rotate(-90 775.95 369.10)" textLength="33.40" lengthAdjust="spacingAndGlyphs" font-weight="bold" stroke="#000" stroke-width="0.1575" >A1 _RA.BEL.SB03</text><path d="M774.90 336.40L774.90 351.60" stroke="#000" stroke-width="1.5" stroke-dasharray="2.4 .5 3.4 .4 1.6 .5"/><text x="776.00" y="443.20" font-size="3.2" fill="#000" transform="rotate(-90 776.00 443.20)" textLength="32.40" lengthAdjust="spacingAndGlyphs" font-weight="bold" stroke="#000" stroke-width="0.144" >Kühlen Ventil stetig</text><text x="776.00" y="448.00" font-size="2.5" fill="#000" transform="rotate(-90 776.00 448.00)" textLength="3.40" lengthAdjust="spacingAndGlyphs" font-weight="bold" stroke="#000" stroke-width="0.1125" >A1</text><rect x="775.50" y="448.80" width="1.10" height="0.90" fill="#f55" stroke="none" stroke-width="0.7" /><path d="M780.40 325.40L780.40 369.30" stroke="#111" stroke-width="0.75" stroke-dasharray="3 1.1"/><path d="M780.40 404.40L780.40 443.40" stroke="#555" stroke-width="0.35" /><text x="779.95" y="369.10" font-size="3.5" fill="#000" transform="rotate(-90 779.95 369.10)" textLength="33.40" lengthAdjust="spacingAndGlyphs" font-weight="bold" stroke="#000" stroke-width="0.1575" >B2 _RA.HZG.SW01</text><path d="M778.90 336.40L778.90 351.60" stroke="#000" stroke-width="1.5" stroke-dasharray="2.4 .5 3.4 .4 1.6 .5"/><text x="780.00" y="443.20" font-size="3.2" fill="#000" transform="rotate(-90 780.00 443.20)" textLength="30.78" lengthAdjust="spacingAndGlyphs" font-weight="bold" stroke="#000" stroke-width="0.144" >Sollwertsteller LON</text><text x="780.00" y="448.00" font-size="2.5" fill="#000" transform="rotate(-90 780.00 448.00)" textLength="3.40" lengthAdjust="spacingAndGlyphs" font-weight="bold" stroke="#000" stroke-width="0.1125" >A6</text><rect x="779.50" y="448.80" width="1.10" height="0.90" fill="#f55" stroke="none" stroke-width="0.7" /><path d="M783.40 325.40L783.40 369.30" stroke="#111" stroke-width="0.75" stroke-dasharray="3 1.1"/><path d="M783.40 404.40L783.40 443.40" stroke="#555" stroke-width="0.35" /><text x="782.95" y="369.10" font-size="3.5" fill="#000" transform="rotate(-90 782.95 369.10)" textLength="33.40" lengthAdjust="spacingAndGlyphs" font-weight="bold" stroke="#000" stroke-width="0.1575" >A1 _RA.BEL.SB03</text><path d="M781.90 336.40L781.90 351.60" stroke="#000" stroke-width="1.5" stroke-dasharray="2.4 .5 3.4 .4 1.6 .5"/><text x="783.00" y="443.20" font-size="3.2" fill="#000" transform="rotate(-90 783.00 443.20)" textLength="32.40" lengthAdjust="spacingAndGlyphs" font-weight="bold" stroke="#000" stroke-width="0.144" >Kühlen Ventil stetig</text><text x="783.00" y="448.00" font-size="2.5" fill="#000" transform="rotate(-90 783.00 448.00)" textLength="3.40" lengthAdjust="spacingAndGlyphs" font-weight="bold" stroke="#000" stroke-width="0.1125" >A7</text><rect x="782.50" y="448.80" width="1.10" height="0.90" fill="#f55" stroke="none" stroke-width="0.7" /><path d="M763.40 320.00H770.80L774.20 323.40" stroke="#e8333a" stroke-width="0.55" fill="none" /><text x="763.80" y="320.70" font-size="3" fill="#2a0808" textLength="6.60" lengthAdjust="spacingAndGlyphs" font-weight="bold" stroke="#2a0808" stroke-width="0.135" >B61</text><text x="765.60" y="323.20" font-size="2.1" fill="#333" textLength="3.40" lengthAdjust="spacingAndGlyphs" font-weight="bold" stroke="#333" stroke-width="0.0945" >-B1</text><text x="775.00" y="386.80" font-size="3.1" fill="#1a1a1a" text-anchor="middle" >1</text><text x="775.00" y="397.40" font-size="3.1" fill="#1a1a1a" text-anchor="middle" >6</text><rect x="87.00" y="448.60" width="3.00" height="8.60" fill="#fff" stroke="#333" stroke-width="0.4" rx="1.4"/><text x="89.30" y="455.40" font-size="2.2" fill="#000" transform="rotate(-90 89.30 455.40)" textLength="4.60" lengthAdjust="spacingAndGlyphs" font-weight="bold" stroke="#000" stroke-width="0.099" >-X1</text><rect x="90.80" y="448.60" width="3.00" height="8.60" fill="#fff" stroke="#333" stroke-width="0.4" rx="1.4"/><text x="93.10" y="455.40" font-size="2.2" fill="#000" transform="rotate(-90 93.10 455.40)" textLength="4.60" lengthAdjust="spacingAndGlyphs" font-weight="bold" stroke="#000" stroke-width="0.099" >-X1</text><rect x="94.80" y="448.60" width="3.00" height="8.60" fill="#fff" stroke="#333" stroke-width="0.4" rx="1.4"/><text x="97.10" y="455.40" font-size="2.2" fill="#000" transform="rotate(-90 97.10 455.40)" textLength="4.60" lengthAdjust="spacingAndGlyphs" font-weight="bold" stroke="#000" stroke-width="0.099" >-X1</text><rect x="767.20" y="448.60" width="3.00" height="8.60" fill="#fff" stroke="#333" stroke-width="0.4" rx="1.4"/><text x="769.50" y="455.40" font-size="2.2" fill="#000" transform="rotate(-90 769.50 455.40)" textLength="4.60" lengthAdjust="spacingAndGlyphs" font-weight="bold" stroke="#000" stroke-width="0.099" >-X1</text><rect x="771.20" y="448.60" width="3.00" height="8.60" fill="#fff" stroke="#333" stroke-width="0.4" rx="1.4"/><text x="773.50" y="455.40" font-size="2.2" fill="#000" transform="rotate(-90 773.50 455.40)" textLength="4.60" lengthAdjust="spacingAndGlyphs" font-weight="bold" stroke="#000" stroke-width="0.099" >-X1</text><rect x="775.20" y="448.60" width="3.00" height="8.60" fill="#fff" stroke="#333" stroke-width="0.4" rx="1.4"/><text x="777.50" y="455.40" font-size="2.2" fill="#000" transform="rotate(-90 777.50 455.40)" textLength="4.60" lengthAdjust="spacingAndGlyphs" font-weight="bold" stroke="#000" stroke-width="0.099" >-X1</text><rect x="90.60" y="495.60" width="44.20" height="26.35" fill="#f5f5f5" stroke="#555" stroke-width="0.55" /><rect x="90.60" y="495.60" width="44.20" height="4.20" fill="#b2b2b2" stroke="#555" stroke-width="0.55" /><text x="112.70" y="498.90" font-size="2.7" fill="#111" textLength="28.35" lengthAdjust="spacingAndGlyphs" font-weight="bold" stroke="#111" stroke-width="0.1215" text-anchor="middle" >Raumtemperatur-Regler</text><path d="M91.60 501.40l2.4 1.3l-2.4 1.3z" stroke="none" stroke-width="0" fill="#111" /><text x="95.00" y="503.70" font-size="2.9" fill="#e23a3e" textLength="11.04" lengthAdjust="spacingAndGlyphs" >B_ENABLE</text><rect x="89.90" y="502.20" width="1.00" height="1.00" fill="#f66" stroke="none" stroke-width="0.7" /><path d="M91.60 505.55l2.4 1.3l-2.4 1.3z" stroke="none" stroke-width="0" fill="#111" /><text x="95.00" y="507.85" font-size="2.9" fill="#e23a3e" textLength="8.28" lengthAdjust="spacingAndGlyphs" >B_PRES</text><rect x="89.90" y="506.35" width="1.00" height="1.00" fill="#f66" stroke="none" stroke-width="0.7" /><path d="M91.60 509.70l2.4 1.3l-2.4 1.3z" stroke="none" stroke-width="0" fill="#111" /><text x="95.00" y="512.00" font-size="2.9" fill="#e23a3e" textLength="11.04" lengthAdjust="spacingAndGlyphs" >B_WINDOW</text><rect x="89.90" y="510.50" width="1.00" height="1.00" fill="#f66" stroke="none" stroke-width="0.7" /><path d="M91.60 513.85l2.4 1.3l-2.4 1.3z" stroke="none" stroke-width="0" fill="#111" /><text x="95.00" y="516.15" font-size="2.9" fill="#e23a3e" textLength="6.90" lengthAdjust="spacingAndGlyphs" >B_DEW</text><rect x="89.90" y="514.65" width="1.00" height="1.00" fill="#f66" stroke="none" stroke-width="0.7" /><path d="M91.60 518.00l2.4 1.3l-2.4 1.3z" stroke="none" stroke-width="0" fill="#111" /><text x="95.00" y="520.30" font-size="2.9" fill="#e23a3e" textLength="8.28" lengthAdjust="spacingAndGlyphs" >B_AUTO</text><rect x="89.90" y="518.80" width="1.00" height="1.00" fill="#f66" stroke="none" stroke-width="0.7" /><text x="130.40" y="503.70" font-size="2.9" fill="#e23a3e" textLength="6.90" lengthAdjust="spacingAndGlyphs" text-anchor="end" >R_SET</text><path d="M131.20 501.40l2.4 1.3l-2.4 1.3z" stroke="none" stroke-width="0" fill="#111" /><rect x="90.60" y="521.95" width="44.20" height="22.20" fill="#f5f5f5" stroke="#555" stroke-width="0.55" /><rect x="90.60" y="521.95" width="44.20" height="4.20" fill="#b2b2b2" stroke="#555" stroke-width="0.55" /><text x="112.70" y="525.25" font-size="2.7" fill="#111" textLength="30.20" lengthAdjust="spacingAndGlyphs" font-weight="bold" stroke="#111" stroke-width="0.1215" text-anchor="middle" >Temperaturregler sequenz</text><path d="M91.60 527.75l2.4 1.3l-2.4 1.3z" stroke="none" stroke-width="0" fill="#111" /><text x="95.00" y="530.05" font-size="2.9" fill="#e23a3e" textLength="6.90" lengthAdjust="spacingAndGlyphs" >T_ACT</text><rect x="89.90" y="528.55" width="1.00" height="1.00" fill="#f66" stroke="none" stroke-width="0.7" /><path d="M91.60 531.90l2.4 1.3l-2.4 1.3z" stroke="none" stroke-width="0" fill="#111" /><text x="95.00" y="534.20" font-size="2.9" fill="#e23a3e" textLength="6.90" lengthAdjust="spacingAndGlyphs" >x_OUT</text><rect x="89.90" y="532.70" width="1.00" height="1.00" fill="#f66" stroke="none" stroke-width="0.7" /><path d="M91.60 536.05l2.4 1.3l-2.4 1.3z" stroke="none" stroke-width="0" fill="#111" /><text x="95.00" y="538.35" font-size="2.9" fill="#e23a3e" textLength="8.28" lengthAdjust="spacingAndGlyphs" >T_SETH</text><rect x="89.90" y="536.85" width="1.00" height="1.00" fill="#f66" stroke="none" stroke-width="0.7" /><path d="M91.60 540.20l2.4 1.3l-2.4 1.3z" stroke="none" stroke-width="0" fill="#111" /><text x="95.00" y="542.50" font-size="2.9" fill="#e23a3e" textLength="11.04" lengthAdjust="spacingAndGlyphs" >T_SETPTS</text><rect x="89.90" y="541.00" width="1.00" height="1.00" fill="#f66" stroke="none" stroke-width="0.7" /><text x="130.40" y="530.05" font-size="2.9" fill="#e23a3e" textLength="6.90" lengthAdjust="spacingAndGlyphs" text-anchor="end" >R_SET</text><path d="M131.20 527.75l2.4 1.3l-2.4 1.3z" stroke="none" stroke-width="0" fill="#111" /><rect x="90.60" y="544.15" width="44.20" height="18.05" fill="#f5f5f5" stroke="#555" stroke-width="0.55" /><rect x="90.60" y="544.15" width="44.20" height="4.20" fill="#b2b2b2" stroke="#555" stroke-width="0.55" /><text x="112.70" y="547.45" font-size="2.7" fill="#111" textLength="30.20" lengthAdjust="spacingAndGlyphs" font-weight="bold" stroke="#111" stroke-width="0.1215" text-anchor="middle" >Sollwertvorgabe Raumregler</text><path d="M91.60 549.95l2.4 1.3l-2.4 1.3z" stroke="none" stroke-width="0" fill="#111" /><text x="95.00" y="552.25" font-size="2.9" fill="#e23a3e" textLength="8.28" lengthAdjust="spacingAndGlyphs" >B_AUTO</text><rect x="89.90" y="550.75" width="1.00" height="1.00" fill="#f66" stroke="none" stroke-width="0.7" /><path d="M91.60 554.10l2.4 1.3l-2.4 1.3z" stroke="none" stroke-width="0" fill="#111" /><text x="95.00" y="556.40" font-size="2.9" fill="#e23a3e" textLength="11.04" lengthAdjust="spacingAndGlyphs" >x_Sup_HZ</text><rect x="89.90" y="554.90" width="1.00" height="1.00" fill="#f66" stroke="none" stroke-width="0.7" /><path d="M91.60 558.25l2.4 1.3l-2.4 1.3z" stroke="none" stroke-width="0" fill="#111" /><text x="95.00" y="560.55" font-size="2.9" fill="#e23a3e" textLength="11.04" lengthAdjust="spacingAndGlyphs" >x_Sup_KL</text><rect x="89.90" y="559.05" width="1.00" height="1.00" fill="#f66" stroke="none" stroke-width="0.7" /><text x="130.40" y="552.25" font-size="2.9" fill="#e23a3e" textLength="8.28" lengthAdjust="spacingAndGlyphs" text-anchor="end" >W_AUTO</text><path d="M131.20 549.95l2.4 1.3l-2.4 1.3z" stroke="none" stroke-width="0" fill="#111" /><rect x="73.60" y="531.80" width="8.40" height="3.60" fill="#fff" stroke="#1a1a1a" stroke-width="0.7" rx=".8"/><text x="77.80" y="534.55" font-size="2.5" fill="#111" textLength="5.40" lengthAdjust="spacingAndGlyphs" font-weight="bold" stroke="#111" stroke-width="0.1125" text-anchor="middle" >x25,0</text><rect x="82.40" y="531.80" width="8.00" height="3.60" fill="#fff" stroke="#1a1a1a" stroke-width="0.7" rx=".8"/><text x="86.40" y="534.55" font-size="2.5" fill="#111" textLength="5.00" lengthAdjust="spacingAndGlyphs" font-weight="bold" stroke="#111" stroke-width="0.1125" text-anchor="middle" >x25,0</text><rect x="73.60" y="536.00" width="8.40" height="3.60" fill="#fff" stroke="#1a1a1a" stroke-width="0.7" rx=".8"/><text x="77.80" y="538.75" font-size="2.5" fill="#111" textLength="5.40" lengthAdjust="spacingAndGlyphs" font-weight="bold" stroke="#111" stroke-width="0.1125" text-anchor="middle" >x20</text><rect x="82.40" y="536.00" width="8.00" height="3.60" fill="#fff" stroke="#1a1a1a" stroke-width="0.7" rx=".8"/><text x="86.40" y="538.75" font-size="2.5" fill="#111" textLength="5.00" lengthAdjust="spacingAndGlyphs" font-weight="bold" stroke="#111" stroke-width="0.1125" text-anchor="middle" >x20</text><path d="M134.8 502.8H137.4V552H139" stroke="#4a4a4a" stroke-width="0.55" fill="none" /><path d="M134.8 529H137.4" stroke="#4a4a4a" stroke-width="0.55" fill="none" /><rect x="136.90" y="502.30" width="1.00" height="1.00" fill="#3b3" stroke="none" stroke-width="0.7" /><rect x="136.90" y="528.50" width="1.00" height="1.00" fill="#3b3" stroke="none" stroke-width="0.7" /><path d="M138.8 550.2h7l1.6 1.8l-1.6 1.8h-7z" stroke="#4a4a4a" stroke-width="0.5" fill="#fff" /><text x="142.60" y="553.00" font-size="2.2" fill="#333" text-anchor="middle" >x100</text><rect x="202.60" y="478.00" width="44.20" height="9.75" fill="#f5f5f5" stroke="#555" stroke-width="0.55" /><rect x="202.60" y="478.00" width="44.20" height="4.20" fill="#b2b2b2" stroke="#555" stroke-width="0.55" /><text x="224.70" y="481.30" font-size="2.7" fill="#111" textLength="22.95" lengthAdjust="spacingAndGlyphs" font-weight="bold" stroke="#111" stroke-width="0.1215" text-anchor="middle" >Jalousieautomatik</text><path d="M203.60 483.80l2.4 1.3l-2.4 1.3z" stroke="none" stroke-width="0" fill="#111" /><text x="207.00" y="486.10" font-size="2.9" fill="#e23a3e" textLength="8.28" lengthAdjust="spacingAndGlyphs" >B_AUTO</text><rect x="201.90" y="484.60" width="1.00" height="1.00" fill="#f66" stroke="none" stroke-width="0.7" /><text x="242.40" y="486.10" font-size="2.9" fill="#e23a3e" textLength="6.90" lengthAdjust="spacingAndGlyphs" text-anchor="end" >W_SET</text><path d="M243.20 483.80l2.4 1.3l-2.4 1.3z" stroke="none" stroke-width="0" fill="#111" /><rect x="202.60" y="487.75" width="44.20" height="18.05" fill="#f5f5f5" stroke="#555" stroke-width="0.55" /><rect x="202.60" y="487.75" width="44.20" height="4.20" fill="#b2b2b2" stroke="#555" stroke-width="0.55" /><text x="224.70" y="491.05" font-size="2.7" fill="#111" textLength="24.30" lengthAdjust="spacingAndGlyphs" font-weight="bold" stroke="#111" stroke-width="0.1215" text-anchor="middle" >Sonnenschutzregler</text><path d="M203.60 493.55l2.4 1.3l-2.4 1.3z" stroke="none" stroke-width="0" fill="#111" /><text x="207.00" y="495.85" font-size="2.9" fill="#e23a3e" textLength="6.90" lengthAdjust="spacingAndGlyphs" >T_ACT</text><rect x="201.90" y="494.35" width="1.00" height="1.00" fill="#f66" stroke="none" stroke-width="0.7" /><path d="M203.60 497.70l2.4 1.3l-2.4 1.3z" stroke="none" stroke-width="0" fill="#111" /><text x="207.00" y="500.00" font-size="2.9" fill="#e23a3e" textLength="8.28" lengthAdjust="spacingAndGlyphs" >x_SETH</text><rect x="201.90" y="498.50" width="1.00" height="1.00" fill="#f66" stroke="none" stroke-width="0.7" /><path d="M203.60 501.85l2.4 1.3l-2.4 1.3z" stroke="none" stroke-width="0" fill="#111" /><text x="207.00" y="504.15" font-size="2.9" fill="#e23a3e" textLength="6.90" lengthAdjust="spacingAndGlyphs" >x_LUX</text><rect x="201.90" y="502.65" width="1.00" height="1.00" fill="#f66" stroke="none" stroke-width="0.7" /><text x="242.40" y="495.85" font-size="2.9" fill="#e23a3e" textLength="6.90" lengthAdjust="spacingAndGlyphs" text-anchor="end" >W_SET</text><path d="M243.20 493.55l2.4 1.3l-2.4 1.3z" stroke="none" stroke-width="0" fill="#111" /><rect x="192.80" y="498.60" width="9.60" height="3.60" fill="#fff" stroke="#1a1a1a" stroke-width="0.7" rx=".8"/><text x="197.60" y="501.35" font-size="2.5" fill="#111" textLength="6.60" lengthAdjust="spacingAndGlyphs" font-weight="bold" stroke="#111" stroke-width="0.1125" text-anchor="middle" >x25,0</text><path d="M213.30 448.6V462H349.40V534.2H340.60" stroke="#4a4a4a" stroke-width="0.6" fill="none" /><path d="M217.20 448.6V462" stroke="#4a4a4a" stroke-width="0.6" fill="none" /><path d="M237.00 448.6V459.4H251.40V496.4H246.80" stroke="#4a4a4a" stroke-width="0.6" fill="none" /><path d="M246.80 485.2H251.40" stroke="#4a4a4a" stroke-width="0.6" fill="none" /><path d="M349.40 448.6V462" stroke="#4a4a4a" stroke-width="0.6" fill="none" /><rect x="212.80" y="461.50" width="1.00" height="1.00" fill="#3b3" stroke="none" stroke-width="0.7" /><rect x="216.70" y="461.50" width="1.00" height="1.00" fill="#3b3" stroke="none" stroke-width="0.7" /><rect x="236.50" y="458.90" width="1.00" height="1.00" fill="#3b3" stroke="none" stroke-width="0.7" /><rect x="250.90" y="458.90" width="1.00" height="1.00" fill="#3b3" stroke="none" stroke-width="0.7" /><rect x="348.90" y="461.50" width="1.00" height="1.00" fill="#3b3" stroke="none" stroke-width="0.7" /><rect x="250.90" y="484.70" width="1.00" height="1.00" fill="#3b3" stroke="none" stroke-width="0.7" /><rect x="250.90" y="495.90" width="1.00" height="1.00" fill="#3b3" stroke="none" stroke-width="0.7" /><rect x="296.60" y="526.30" width="43.60" height="26.35" fill="#f5f5f5" stroke="#555" stroke-width="0.55" /><rect x="296.60" y="526.30" width="43.60" height="4.20" fill="#b2b2b2" stroke="#555" stroke-width="0.55" /><text x="318.40" y="529.60" font-size="2.7" fill="#111" textLength="24.30" lengthAdjust="spacingAndGlyphs" font-weight="bold" stroke="#111" stroke-width="0.1215" text-anchor="middle" >Regler Klimadecken</text><path d="M297.60 532.10l2.4 1.3l-2.4 1.3z" stroke="none" stroke-width="0" fill="#111" /><text x="301.00" y="534.40" font-size="2.9" fill="#e23a3e" textLength="6.90" lengthAdjust="spacingAndGlyphs" >B_AUT</text><rect x="295.90" y="532.90" width="1.00" height="1.00" fill="#f66" stroke="none" stroke-width="0.7" /><path d="M297.60 536.25l2.4 1.3l-2.4 1.3z" stroke="none" stroke-width="0" fill="#111" /><text x="301.00" y="538.55" font-size="2.9" fill="#e23a3e" textLength="6.90" lengthAdjust="spacingAndGlyphs" >x_ACT</text><rect x="295.90" y="537.05" width="1.00" height="1.00" fill="#f66" stroke="none" stroke-width="0.7" /><path d="M297.60 540.40l2.4 1.3l-2.4 1.3z" stroke="none" stroke-width="0" fill="#111" /><text x="301.00" y="542.70" font-size="2.9" fill="#e23a3e" textLength="8.28" lengthAdjust="spacingAndGlyphs" >T_SETH</text><rect x="295.90" y="541.20" width="1.00" height="1.00" fill="#f66" stroke="none" stroke-width="0.7" /><path d="M297.60 544.55l2.4 1.3l-2.4 1.3z" stroke="none" stroke-width="0" fill="#111" /><text x="301.00" y="546.85" font-size="2.9" fill="#e23a3e" textLength="11.04" lengthAdjust="spacingAndGlyphs" >T_SETPTS</text><rect x="295.90" y="545.35" width="1.00" height="1.00" fill="#f66" stroke="none" stroke-width="0.7" /><path d="M297.60 548.70l2.4 1.3l-2.4 1.3z" stroke="none" stroke-width="0" fill="#111" /><text x="301.00" y="551.00" font-size="2.9" fill="#e23a3e" textLength="6.90" lengthAdjust="spacingAndGlyphs" >x_SEN</text><rect x="295.90" y="549.50" width="1.00" height="1.00" fill="#f66" stroke="none" stroke-width="0.7" /><text x="335.80" y="534.40" font-size="2.9" fill="#e23a3e" textLength="6.90" lengthAdjust="spacingAndGlyphs" text-anchor="end" >x_SET</text><path d="M336.60 532.10l2.4 1.3l-2.4 1.3z" stroke="none" stroke-width="0" fill="#111" /><text x="335.80" y="538.55" font-size="2.9" fill="#e23a3e" textLength="6.90" lengthAdjust="spacingAndGlyphs" text-anchor="end" >x_LIM</text><path d="M336.60 536.25l2.4 1.3l-2.4 1.3z" stroke="none" stroke-width="0" fill="#111" /><rect x="287.00" y="539.80" width="9.40" height="3.60" fill="#fff" stroke="#1a1a1a" stroke-width="0.7" rx=".8"/><text x="291.70" y="542.55" font-size="2.5" fill="#111" textLength="6.40" lengthAdjust="spacingAndGlyphs" font-weight="bold" stroke="#111" stroke-width="0.1125" text-anchor="middle" >x25,0</text><rect x="418.60" y="478.00" width="44.20" height="9.75" fill="#f5f5f5" stroke="#555" stroke-width="0.55" /><rect x="418.60" y="478.00" width="44.20" height="4.20" fill="#b2b2b2" stroke="#555" stroke-width="0.55" /><text x="440.70" y="481.30" font-size="2.7" fill="#111" textLength="22.95" lengthAdjust="spacingAndGlyphs" font-weight="bold" stroke="#111" stroke-width="0.1215" text-anchor="middle" >Jalousieautomatik</text><path d="M419.60 483.80l2.4 1.3l-2.4 1.3z" stroke="none" stroke-width="0" fill="#111" /><text x="423.00" y="486.10" font-size="2.9" fill="#e23a3e" textLength="8.28" lengthAdjust="spacingAndGlyphs" >B_AUTO</text><rect x="417.90" y="484.60" width="1.00" height="1.00" fill="#f66" stroke="none" stroke-width="0.7" /><text x="458.40" y="486.10" font-size="2.9" fill="#e23a3e" textLength="6.90" lengthAdjust="spacingAndGlyphs" text-anchor="end" >W_SET</text><path d="M459.20 483.80l2.4 1.3l-2.4 1.3z" stroke="none" stroke-width="0" fill="#111" /><rect x="418.60" y="487.75" width="44.20" height="18.05" fill="#f5f5f5" stroke="#555" stroke-width="0.55" /><rect x="418.60" y="487.75" width="44.20" height="4.20" fill="#b2b2b2" stroke="#555" stroke-width="0.55" /><text x="440.70" y="491.05" font-size="2.7" fill="#111" textLength="24.30" lengthAdjust="spacingAndGlyphs" font-weight="bold" stroke="#111" stroke-width="0.1215" text-anchor="middle" >Sonnenschutzregler</text><path d="M419.60 493.55l2.4 1.3l-2.4 1.3z" stroke="none" stroke-width="0" fill="#111" /><text x="423.00" y="495.85" font-size="2.9" fill="#e23a3e" textLength="6.90" lengthAdjust="spacingAndGlyphs" >T_ACT</text><rect x="417.90" y="494.35" width="1.00" height="1.00" fill="#f66" stroke="none" stroke-width="0.7" /><path d="M419.60 497.70l2.4 1.3l-2.4 1.3z" stroke="none" stroke-width="0" fill="#111" /><text x="423.00" y="500.00" font-size="2.9" fill="#e23a3e" textLength="8.28" lengthAdjust="spacingAndGlyphs" >x_SETH</text><rect x="417.90" y="498.50" width="1.00" height="1.00" fill="#f66" stroke="none" stroke-width="0.7" /><path d="M419.60 501.85l2.4 1.3l-2.4 1.3z" stroke="none" stroke-width="0" fill="#111" /><text x="423.00" y="504.15" font-size="2.9" fill="#e23a3e" textLength="6.90" lengthAdjust="spacingAndGlyphs" >x_LUX</text><rect x="417.90" y="502.65" width="1.00" height="1.00" fill="#f66" stroke="none" stroke-width="0.7" /><text x="458.40" y="495.85" font-size="2.9" fill="#e23a3e" textLength="6.90" lengthAdjust="spacingAndGlyphs" text-anchor="end" >W_SET</text><path d="M459.20 493.55l2.4 1.3l-2.4 1.3z" stroke="none" stroke-width="0" fill="#111" /><rect x="399.00" y="498.60" width="9.00" height="3.60" fill="#fff" stroke="#1a1a1a" stroke-width="0.7" rx=".8"/><text x="403.50" y="501.35" font-size="2.5" fill="#111" textLength="6.00" lengthAdjust="spacingAndGlyphs" font-weight="bold" stroke="#111" stroke-width="0.1125" text-anchor="middle" >x25,0</text><rect x="408.60" y="498.60" width="9.40" height="3.60" fill="#fff" stroke="#1a1a1a" stroke-width="0.7" rx=".8"/><text x="413.30" y="501.35" font-size="2.5" fill="#111" textLength="6.40" lengthAdjust="spacingAndGlyphs" font-weight="bold" stroke="#111" stroke-width="0.1125" text-anchor="middle" >x25,0</text><path d="M429.30 448.6V462H565.40V534.2H556.60" stroke="#4a4a4a" stroke-width="0.6" fill="none" /><path d="M433.20 448.6V462" stroke="#4a4a4a" stroke-width="0.6" fill="none" /><path d="M453.00 448.6V459.4H467.40V496.4H462.80" stroke="#4a4a4a" stroke-width="0.6" fill="none" /><path d="M462.80 485.2H467.40" stroke="#4a4a4a" stroke-width="0.6" fill="none" /><path d="M565.40 448.6V462" stroke="#4a4a4a" stroke-width="0.6" fill="none" /><rect x="428.80" y="461.50" width="1.00" height="1.00" fill="#3b3" stroke="none" stroke-width="0.7" /><rect x="432.70" y="461.50" width="1.00" height="1.00" fill="#3b3" stroke="none" stroke-width="0.7" /><rect x="452.50" y="458.90" width="1.00" height="1.00" fill="#3b3" stroke="none" stroke-width="0.7" /><rect x="466.90" y="458.90" width="1.00" height="1.00" fill="#3b3" stroke="none" stroke-width="0.7" /><rect x="564.90" y="461.50" width="1.00" height="1.00" fill="#3b3" stroke="none" stroke-width="0.7" /><rect x="466.90" y="484.70" width="1.00" height="1.00" fill="#3b3" stroke="none" stroke-width="0.7" /><rect x="466.90" y="495.90" width="1.00" height="1.00" fill="#3b3" stroke="none" stroke-width="0.7" /><rect x="512.60" y="526.30" width="43.60" height="26.35" fill="#f5f5f5" stroke="#555" stroke-width="0.55" /><rect x="512.60" y="526.30" width="43.60" height="4.20" fill="#b2b2b2" stroke="#555" stroke-width="0.55" /><text x="534.40" y="529.60" font-size="2.7" fill="#111" textLength="24.30" lengthAdjust="spacingAndGlyphs" font-weight="bold" stroke="#111" stroke-width="0.1215" text-anchor="middle" >Regler Klimadecken</text><path d="M513.60 532.10l2.4 1.3l-2.4 1.3z" stroke="none" stroke-width="0" fill="#111" /><text x="517.00" y="534.40" font-size="2.9" fill="#e23a3e" textLength="6.90" lengthAdjust="spacingAndGlyphs" >B_AUT</text><rect x="511.90" y="532.90" width="1.00" height="1.00" fill="#f66" stroke="none" stroke-width="0.7" /><path d="M513.60 536.25l2.4 1.3l-2.4 1.3z" stroke="none" stroke-width="0" fill="#111" /><text x="517.00" y="538.55" font-size="2.9" fill="#e23a3e" textLength="6.90" lengthAdjust="spacingAndGlyphs" >x_ACT</text><rect x="511.90" y="537.05" width="1.00" height="1.00" fill="#f66" stroke="none" stroke-width="0.7" /><path d="M513.60 540.40l2.4 1.3l-2.4 1.3z" stroke="none" stroke-width="0" fill="#111" /><text x="517.00" y="542.70" font-size="2.9" fill="#e23a3e" textLength="8.28" lengthAdjust="spacingAndGlyphs" >T_SETH</text><rect x="511.90" y="541.20" width="1.00" height="1.00" fill="#f66" stroke="none" stroke-width="0.7" /><path d="M513.60 544.55l2.4 1.3l-2.4 1.3z" stroke="none" stroke-width="0" fill="#111" /><text x="517.00" y="546.85" font-size="2.9" fill="#e23a3e" textLength="11.04" lengthAdjust="spacingAndGlyphs" >T_SETPTS</text><rect x="511.90" y="545.35" width="1.00" height="1.00" fill="#f66" stroke="none" stroke-width="0.7" /><path d="M513.60 548.70l2.4 1.3l-2.4 1.3z" stroke="none" stroke-width="0" fill="#111" /><text x="517.00" y="551.00" font-size="2.9" fill="#e23a3e" textLength="6.90" lengthAdjust="spacingAndGlyphs" >x_SEN</text><rect x="511.90" y="549.50" width="1.00" height="1.00" fill="#f66" stroke="none" stroke-width="0.7" /><text x="551.80" y="534.40" font-size="2.9" fill="#e23a3e" textLength="6.90" lengthAdjust="spacingAndGlyphs" text-anchor="end" >x_SET</text><path d="M552.60 532.10l2.4 1.3l-2.4 1.3z" stroke="none" stroke-width="0" fill="#111" /><text x="551.80" y="538.55" font-size="2.9" fill="#e23a3e" textLength="6.90" lengthAdjust="spacingAndGlyphs" text-anchor="end" >x_LIM</text><path d="M552.60 536.25l2.4 1.3l-2.4 1.3z" stroke="none" stroke-width="0" fill="#111" /><rect x="503.00" y="539.80" width="9.40" height="3.60" fill="#fff" stroke="#1a1a1a" stroke-width="0.7" rx=".8"/><text x="507.70" y="542.55" font-size="2.5" fill="#111" textLength="6.40" lengthAdjust="spacingAndGlyphs" font-weight="bold" stroke="#111" stroke-width="0.1125" text-anchor="middle" >x25,0</text><rect x="494.00" y="539.80" width="8.60" height="3.60" fill="#fff" stroke="#1a1a1a" stroke-width="0.7" rx=".8"/><text x="498.30" y="542.55" font-size="2.5" fill="#111" textLength="5.60" lengthAdjust="spacingAndGlyphs" font-weight="bold" stroke="#111" stroke-width="0.1125" text-anchor="middle" >x21</text><rect x="608.35" y="478.00" width="44.20" height="9.75" fill="#f5f5f5" stroke="#555" stroke-width="0.55" /><rect x="608.35" y="478.00" width="44.20" height="4.20" fill="#b2b2b2" stroke="#555" stroke-width="0.55" /><text x="630.45" y="481.30" font-size="2.7" fill="#111" textLength="22.95" lengthAdjust="spacingAndGlyphs" font-weight="bold" stroke="#111" stroke-width="0.1215" text-anchor="middle" >Jalousieautomatik</text><path d="M609.35 483.80l2.4 1.3l-2.4 1.3z" stroke="none" stroke-width="0" fill="#111" /><text x="612.75" y="486.10" font-size="2.9" fill="#e23a3e" textLength="8.28" lengthAdjust="spacingAndGlyphs" >B_AUTO</text><rect x="607.65" y="484.60" width="1.00" height="1.00" fill="#f66" stroke="none" stroke-width="0.7" /><text x="648.15" y="486.10" font-size="2.9" fill="#e23a3e" textLength="6.90" lengthAdjust="spacingAndGlyphs" text-anchor="end" >W_SET</text><path d="M648.95 483.80l2.4 1.3l-2.4 1.3z" stroke="none" stroke-width="0" fill="#111" /><rect x="608.35" y="487.75" width="44.20" height="18.05" fill="#f5f5f5" stroke="#555" stroke-width="0.55" /><rect x="608.35" y="487.75" width="44.20" height="4.20" fill="#b2b2b2" stroke="#555" stroke-width="0.55" /><text x="630.45" y="491.05" font-size="2.7" fill="#111" textLength="24.30" lengthAdjust="spacingAndGlyphs" font-weight="bold" stroke="#111" stroke-width="0.1215" text-anchor="middle" >Sonnenschutzregler</text><path d="M609.35 493.55l2.4 1.3l-2.4 1.3z" stroke="none" stroke-width="0" fill="#111" /><text x="612.75" y="495.85" font-size="2.9" fill="#e23a3e" textLength="6.90" lengthAdjust="spacingAndGlyphs" >T_ACT</text><rect x="607.65" y="494.35" width="1.00" height="1.00" fill="#f66" stroke="none" stroke-width="0.7" /><path d="M609.35 497.70l2.4 1.3l-2.4 1.3z" stroke="none" stroke-width="0" fill="#111" /><text x="612.75" y="500.00" font-size="2.9" fill="#e23a3e" textLength="8.28" lengthAdjust="spacingAndGlyphs" >x_SETH</text><rect x="607.65" y="498.50" width="1.00" height="1.00" fill="#f66" stroke="none" stroke-width="0.7" /><path d="M609.35 501.85l2.4 1.3l-2.4 1.3z" stroke="none" stroke-width="0" fill="#111" /><text x="612.75" y="504.15" font-size="2.9" fill="#e23a3e" textLength="6.90" lengthAdjust="spacingAndGlyphs" >x_LUX</text><rect x="607.65" y="502.65" width="1.00" height="1.00" fill="#f66" stroke="none" stroke-width="0.7" /><text x="648.15" y="495.85" font-size="2.9" fill="#e23a3e" textLength="6.90" lengthAdjust="spacingAndGlyphs" text-anchor="end" >W_SET</text><path d="M648.95 493.55l2.4 1.3l-2.4 1.3z" stroke="none" stroke-width="0" fill="#111" /><rect x="598.55" y="498.60" width="9.60" height="3.60" fill="#fff" stroke="#1a1a1a" stroke-width="0.7" rx=".8"/><text x="603.35" y="501.35" font-size="2.5" fill="#111" textLength="6.60" lengthAdjust="spacingAndGlyphs" font-weight="bold" stroke="#111" stroke-width="0.1125" text-anchor="middle" >x25,0</text><path d="M619.05 448.6V462H755.15V534.2H746.35" stroke="#4a4a4a" stroke-width="0.6" fill="none" /><path d="M622.95 448.6V462" stroke="#4a4a4a" stroke-width="0.6" fill="none" /><path d="M642.75 448.6V459.4H657.15V496.4H652.55" stroke="#4a4a4a" stroke-width="0.6" fill="none" /><path d="M652.55 485.2H657.15" stroke="#4a4a4a" stroke-width="0.6" fill="none" /><path d="M755.15 448.6V462" stroke="#4a4a4a" stroke-width="0.6" fill="none" /><rect x="618.55" y="461.50" width="1.00" height="1.00" fill="#3b3" stroke="none" stroke-width="0.7" /><rect x="622.45" y="461.50" width="1.00" height="1.00" fill="#3b3" stroke="none" stroke-width="0.7" /><rect x="642.25" y="458.90" width="1.00" height="1.00" fill="#3b3" stroke="none" stroke-width="0.7" /><rect x="656.65" y="458.90" width="1.00" height="1.00" fill="#3b3" stroke="none" stroke-width="0.7" /><rect x="754.65" y="461.50" width="1.00" height="1.00" fill="#3b3" stroke="none" stroke-width="0.7" /><rect x="656.65" y="484.70" width="1.00" height="1.00" fill="#3b3" stroke="none" stroke-width="0.7" /><rect x="656.65" y="495.90" width="1.00" height="1.00" fill="#3b3" stroke="none" stroke-width="0.7" /><rect x="702.35" y="526.30" width="43.60" height="26.35" fill="#f5f5f5" stroke="#555" stroke-width="0.55" /><rect x="702.35" y="526.30" width="43.60" height="4.20" fill="#b2b2b2" stroke="#555" stroke-width="0.55" /><text x="724.15" y="529.60" font-size="2.7" fill="#111" textLength="24.30" lengthAdjust="spacingAndGlyphs" font-weight="bold" stroke="#111" stroke-width="0.1215" text-anchor="middle" >Regler Klimadecken</text><path d="M703.35 532.10l2.4 1.3l-2.4 1.3z" stroke="none" stroke-width="0" fill="#111" /><text x="706.75" y="534.40" font-size="2.9" fill="#e23a3e" textLength="6.90" lengthAdjust="spacingAndGlyphs" >B_AUT</text><rect x="701.65" y="532.90" width="1.00" height="1.00" fill="#f66" stroke="none" stroke-width="0.7" /><path d="M703.35 536.25l2.4 1.3l-2.4 1.3z" stroke="none" stroke-width="0" fill="#111" /><text x="706.75" y="538.55" font-size="2.9" fill="#e23a3e" textLength="6.90" lengthAdjust="spacingAndGlyphs" >x_ACT</text><rect x="701.65" y="537.05" width="1.00" height="1.00" fill="#f66" stroke="none" stroke-width="0.7" /><path d="M703.35 540.40l2.4 1.3l-2.4 1.3z" stroke="none" stroke-width="0" fill="#111" /><text x="706.75" y="542.70" font-size="2.9" fill="#e23a3e" textLength="8.28" lengthAdjust="spacingAndGlyphs" >T_SETH</text><rect x="701.65" y="541.20" width="1.00" height="1.00" fill="#f66" stroke="none" stroke-width="0.7" /><path d="M703.35 544.55l2.4 1.3l-2.4 1.3z" stroke="none" stroke-width="0" fill="#111" /><text x="706.75" y="546.85" font-size="2.9" fill="#e23a3e" textLength="11.04" lengthAdjust="spacingAndGlyphs" >T_SETPTS</text><rect x="701.65" y="545.35" width="1.00" height="1.00" fill="#f66" stroke="none" stroke-width="0.7" /><path d="M703.35 548.70l2.4 1.3l-2.4 1.3z" stroke="none" stroke-width="0" fill="#111" /><text x="706.75" y="551.00" font-size="2.9" fill="#e23a3e" textLength="6.90" lengthAdjust="spacingAndGlyphs" >x_SEN</text><rect x="701.65" y="549.50" width="1.00" height="1.00" fill="#f66" stroke="none" stroke-width="0.7" /><text x="741.55" y="534.40" font-size="2.9" fill="#e23a3e" textLength="6.90" lengthAdjust="spacingAndGlyphs" text-anchor="end" >x_SET</text><path d="M742.35 532.10l2.4 1.3l-2.4 1.3z" stroke="none" stroke-width="0" fill="#111" /><text x="741.55" y="538.55" font-size="2.9" fill="#e23a3e" textLength="6.90" lengthAdjust="spacingAndGlyphs" text-anchor="end" >x_LIM</text><path d="M742.35 536.25l2.4 1.3l-2.4 1.3z" stroke="none" stroke-width="0" fill="#111" /><rect x="692.75" y="539.80" width="9.40" height="3.60" fill="#fff" stroke="#1a1a1a" stroke-width="0.7" rx=".8"/><text x="697.45" y="542.55" font-size="2.5" fill="#111" textLength="6.40" lengthAdjust="spacingAndGlyphs" font-weight="bold" stroke="#111" stroke-width="0.1125" text-anchor="middle" >x25,0</text><path d="M55.50 564.70L800.00 564.70" stroke="#3a3a3a" stroke-width="0.8" /><path d="M73.80 564.70L73.80 584.80" stroke="#3a3a3a" stroke-width="0.7" /><path d="M100.00 564.70L100.00 584.80" stroke="#3a3a3a" stroke-width="0.7" /><path d="M113.50 564.70L113.50 584.80" stroke="#3a3a3a" stroke-width="0.7" /><path d="M123.70 564.70L123.70 584.80" stroke="#3a3a3a" stroke-width="0.7" /><path d="M136.00 564.70L136.00 584.80" stroke="#3a3a3a" stroke-width="0.7" /><path d="M166.80 564.70L166.80 584.80" stroke="#3a3a3a" stroke-width="0.7" /><path d="M268.60 564.70L268.60 584.80" stroke="#3a3a3a" stroke-width="0.7" /><path d="M324.90 564.70L324.90 584.80" stroke="#3a3a3a" stroke-width="0.7" /><path d="M458.50 564.70L458.50 584.80" stroke="#3a3a3a" stroke-width="0.7" /><path d="M614.40 564.70L614.40 584.80" stroke="#3a3a3a" stroke-width="0.7" /><path d="M701.60 564.70L701.60 584.80" stroke="#3a3a3a" stroke-width="0.7" /><path d="M55.50 569.70L166.80 569.70" stroke="#3a3a3a" stroke-width="0.7" /><path d="M55.50 574.50L166.80 574.50" stroke="#3a3a3a" stroke-width="0.7" /><path d="M55.50 579.50L166.80 579.50" stroke="#3a3a3a" stroke-width="0.7" /><path d="M268.60 569.70L324.90 569.70" stroke="#3a3a3a" stroke-width="0.7" /><path d="M458.50 569.70L800.00 569.70" stroke="#3a3a3a" stroke-width="0.7" /><path d="M614.40 574.40L800.00 574.40" stroke="#3a3a3a" stroke-width="0.7" /><path d="M614.40 579.20L701.60 579.20" stroke="#3a3a3a" stroke-width="0.7" /><path d="M766.50 579.20L800.00 579.20" stroke="#3a3a3a" stroke-width="0.7" /><path d="M766.50 574.40L766.50 584.80" stroke="#3a3a3a" stroke-width="0.7" /><text x="60.40" y="568.60" font-size="3" fill="#111" >Zustand</text><text x="80.60" y="568.60" font-size="3" fill="#111" >Änderung</text><text x="103.00" y="568.60" font-size="3" fill="#111" >Datum</text><text x="115.20" y="568.60" font-size="3" fill="#111" >Name</text><text x="125.00" y="568.60" font-size="3" fill="#111" font-weight="bold" stroke="#111" stroke-width="0.135" >Datum</text><text x="137.60" y="568.60" font-size="3" fill="#111" >01.12.20</text><text x="125.00" y="573.50" font-size="3" fill="#111" font-weight="bold" stroke="#111" stroke-width="0.135" >Bearb.</text><text x="137.60" y="573.50" font-size="3" fill="#111" >CAD</text><text x="125.00" y="578.40" font-size="3" fill="#111" font-weight="bold" stroke="#111" stroke-width="0.135" >Gepr.</text><text x="137.60" y="578.40" font-size="3" fill="#111" ></text><text x="125.00" y="583.30" font-size="3" fill="#111" font-weight="bold" stroke="#111" stroke-width="0.135" >Norm</text><text x="137.60" y="583.30" font-size="3" fill="#111" >DIN EN</text><text x="168.60" y="568.40" font-size="3" fill="#111" >Kunde / Projekt</text><path d="M168.6 575.6h10.4l3-1.2h5.4v4.6h-5l-3-1.6h-10.8z" stroke="none" stroke-width="0" fill="#f1c31a" /><text x="170.00" y="578.60" font-size="2.2" fill="#7a6210" textLength="9.00" lengthAdjust="spacingAndGlyphs" font-weight="bold" stroke="#7a6210" stroke-width="0.099" >ELECTRIX</text><text x="191.40" y="572.40" font-size="3" fill="#111" >Musterprojekt BA2021</text><text x="191.40" y="576.20" font-size="3" fill="#111" >(C)</text><text x="191.40" y="580.00" font-size="3" fill="#111" >CD Rack</text><text x="191.40" y="583.80" font-size="3" fill="#111" >Zweckbau</text><text x="270.40" y="568.40" font-size="3" fill="#111" >Hersteller</text><text x="270.40" y="572.80" font-size="3" fill="#111" >WSCAD</text><text x="270.40" y="579.20" font-size="3" fill="#111" >Gewerk/Anlage 4</text><text x="270.40" y="583.00" font-size="3" fill="#111" >Regelschema</text><text x="353.20" y="569.30" font-size="4.6" fill="#6a6a6a" textLength="13.00" lengthAdjust="spacingAndGlyphs" >WS</text><text x="366.40" y="578.90" font-size="18" fill="url(#gcad)" textLength="52.00" lengthAdjust="spacingAndGlyphs" font-weight="bold" stroke="none" stroke-width="0.81" >CAD</text><path d="M355 569.8H413.8V574H362Z" stroke="none" stroke-width="0" fill="#f5d860" /><text x="368.00" y="583.60" font-size="2.6" fill="#8a8a8a" textLength="49.00" lengthAdjust="spacingAndGlyphs" >ELECTRICAL  ENGINEERING</text><text x="462.60" y="568.40" font-size="3" fill="#111" >Anlagenkennzeichen</text><text x="462.60" y="573.40" font-size="3" fill="#111" >ABBOARD Verkaufszone 1</text><text x="616.00" y="568.40" font-size="3" fill="#111" >Informationsschwerpunkt:      ANLAGE</text><text x="616.00" y="573.20" font-size="3" fill="#111" >Zeichnungsnummer:</text><text x="616.00" y="578.00" font-size="3" fill="#111" >Blatt  vorher:       3</text><text x="616.00" y="583.00" font-size="3" fill="#111" >Blatt  nachher:      ==ASP04=RTE004_010.0001</text><text x="703.60" y="568.40" font-size="3" fill="#111" >VALUE808</text><text x="703.60" y="573.20" font-size="3" fill="#111" >+</text><text x="703.60" y="578.00" font-size="3" fill="#111" >Bearbeitungsstatus</text><text x="703.60" y="583.00" font-size="3" fill="#111" >Lv1</text><text x="768.60" y="578.00" font-size="3" fill="#111" >Blatt    4</text><text x="768.60" y="583.00" font-size="3" fill="#111" >von    8     Bl.</text></g></svg>
<svg class="b" style="left:846px;top:40px;will-change:transform" width="171" height="173" viewBox="846 40 171 173"><rect x="847.6" y="65" width="168.6" height="118" fill="#fff"/><g transform="translate(837.151 51.891) scale(0.22164)"><rect x="48.50" y="60.50" width="758.00" height="530.50" fill="none" stroke="#3a3a3a" stroke-width="1.6" /><rect x="55.50" y="66.60" width="744.50" height="518.20" fill="none" stroke="#3a3a3a" stroke-width="1.6" /><path d="M104.50 60.50L104.50 66.60" stroke="#3a3a3a" stroke-width="1.6" /><path d="M104.50 584.80L104.50 591.00" stroke="#3a3a3a" stroke-width="1.6" /><path d="M169.00 60.50L169.00 66.60" stroke="#3a3a3a" stroke-width="1.6" /><path d="M169.00 584.80L169.00 591.00" stroke="#3a3a3a" stroke-width="1.6" /><path d="M233.50 60.50L233.50 66.60" stroke="#3a3a3a" stroke-width="1.6" /><path d="M233.50 584.80L233.50 591.00" stroke="#3a3a3a" stroke-width="1.6" /><path d="M298.00 60.50L298.00 66.60" stroke="#3a3a3a" stroke-width="1.6" /><path d="M298.00 584.80L298.00 591.00" stroke="#3a3a3a" stroke-width="1.6" /><path d="M362.50 60.50L362.50 66.60" stroke="#3a3a3a" stroke-width="1.6" /><path d="M362.50 584.80L362.50 591.00" stroke="#3a3a3a" stroke-width="1.6" /><path d="M427.00 60.50L427.00 66.60" stroke="#3a3a3a" stroke-width="1.6" /><path d="M427.00 584.80L427.00 591.00" stroke="#3a3a3a" stroke-width="1.6" /><path d="M491.50 60.50L491.50 66.60" stroke="#3a3a3a" stroke-width="1.6" /><path d="M491.50 584.80L491.50 591.00" stroke="#3a3a3a" stroke-width="1.6" /><path d="M556.00 60.50L556.00 66.60" stroke="#3a3a3a" stroke-width="1.6" /><path d="M556.00 584.80L556.00 591.00" stroke="#3a3a3a" stroke-width="1.6" /><path d="M620.50 60.50L620.50 66.60" stroke="#3a3a3a" stroke-width="1.6" /><path d="M620.50 584.80L620.50 591.00" stroke="#3a3a3a" stroke-width="1.6" /><path d="M685.00 60.50L685.00 66.60" stroke="#3a3a3a" stroke-width="1.6" /><path d="M685.00 584.80L685.00 591.00" stroke="#3a3a3a" stroke-width="1.6" /><path d="M749.50 60.50L749.50 66.60" stroke="#3a3a3a" stroke-width="1.6" /><path d="M749.50 584.80L749.50 591.00" stroke="#3a3a3a" stroke-width="1.6" /><text x="76.00" y="66.10" font-size="5.7" fill="#111" text-anchor="middle" >1</text><text x="76.00" y="590.70" font-size="5.7" fill="#111" text-anchor="middle" >1</text><text x="136.00" y="66.10" font-size="5.7" fill="#111" text-anchor="middle" >2</text><text x="136.00" y="590.70" font-size="5.7" fill="#111" text-anchor="middle" >2</text><text x="200.50" y="66.10" font-size="5.7" fill="#111" text-anchor="middle" >3</text><text x="200.50" y="590.70" font-size="5.7" fill="#111" text-anchor="middle" >3</text><text x="265.00" y="66.10" font-size="5.7" fill="#111" text-anchor="middle" >4</text><text x="265.00" y="590.70" font-size="5.7" fill="#111" text-anchor="middle" >4</text><text x="329.50" y="66.10" font-size="5.7" fill="#111" text-anchor="middle" >5</text><text x="329.50" y="590.70" font-size="5.7" fill="#111" text-anchor="middle" >5</text><text x="394.00" y="66.10" font-size="5.7" fill="#111" text-anchor="middle" >6</text><text x="394.00" y="590.70" font-size="5.7" fill="#111" text-anchor="middle" >6</text><text x="458.50" y="66.10" font-size="5.7" fill="#111" text-anchor="middle" >7</text><text x="458.50" y="590.70" font-size="5.7" fill="#111" text-anchor="middle" >7</text><text x="523.00" y="66.10" font-size="5.7" fill="#111" text-anchor="middle" >8</text><text x="523.00" y="590.70" font-size="5.7" fill="#111" text-anchor="middle" >8</text><text x="587.50" y="66.10" font-size="5.7" fill="#111" text-anchor="middle" >9</text><text x="587.50" y="590.70" font-size="5.7" fill="#111" text-anchor="middle" >9</text><text x="652.00" y="66.10" font-size="5.7" fill="#111" text-anchor="middle" >10</text><text x="652.00" y="590.70" font-size="5.7" fill="#111" text-anchor="middle" >10</text><text x="716.50" y="66.10" font-size="5.7" fill="#111" text-anchor="middle" >11</text><text x="716.50" y="590.70" font-size="5.7" fill="#111" text-anchor="middle" >11</text><text x="778.00" y="66.10" font-size="5.7" fill="#111" text-anchor="middle" >12</text><text x="778.00" y="590.70" font-size="5.7" fill="#111" text-anchor="middle" >12</text><path d="M48.50 195.50L55.50 195.50" stroke="#3a3a3a" stroke-width="1.6" /><path d="M800.00 195.50L806.50 195.50" stroke="#3a3a3a" stroke-width="1.6" /><path d="M48.50 260.50L55.50 260.50" stroke="#3a3a3a" stroke-width="1.6" /><path d="M800.00 260.50L806.50 260.50" stroke="#3a3a3a" stroke-width="1.6" /><path d="M48.50 325.00L55.50 325.00" stroke="#3a3a3a" stroke-width="1.6" /><path d="M800.00 325.00L806.50 325.00" stroke="#3a3a3a" stroke-width="1.6" /><path d="M48.50 389.50L55.50 389.50" stroke="#3a3a3a" stroke-width="1.6" /><path d="M800.00 389.50L806.50 389.50" stroke="#3a3a3a" stroke-width="1.6" /><path d="M48.50 454.30L55.50 454.30" stroke="#3a3a3a" stroke-width="1.6" /><path d="M800.00 454.30L806.50 454.30" stroke="#3a3a3a" stroke-width="1.6" /><path d="M48.50 519.00L55.50 519.00" stroke="#3a3a3a" stroke-width="1.6" /><path d="M800.00 519.00L806.50 519.00" stroke="#3a3a3a" stroke-width="1.6" /><text x="52.00" y="95.50" font-size="4.6" fill="#222" text-anchor="middle" >A</text><text x="803.30" y="95.50" font-size="4.6" fill="#222" text-anchor="middle" >A</text><text x="52.00" y="165.50" font-size="4.6" fill="#222" text-anchor="middle" >B</text><text x="803.30" y="165.50" font-size="4.6" fill="#222" text-anchor="middle" >B</text><text x="52.00" y="229.80" font-size="4.6" fill="#222" text-anchor="middle" >C</text><text x="803.30" y="229.80" font-size="4.6" fill="#222" text-anchor="middle" >C</text><text x="52.00" y="294.80" font-size="4.6" fill="#222" text-anchor="middle" >D</text><text x="803.30" y="294.80" font-size="4.6" fill="#222" text-anchor="middle" >D</text><text x="52.00" y="359.00" font-size="4.6" fill="#222" text-anchor="middle" >E</text><text x="803.30" y="359.00" font-size="4.6" fill="#222" text-anchor="middle" >E</text><text x="52.00" y="423.80" font-size="4.6" fill="#222" text-anchor="middle" >F</text><text x="803.30" y="423.80" font-size="4.6" fill="#222" text-anchor="middle" >F</text><text x="52.00" y="488.80" font-size="4.6" fill="#222" text-anchor="middle" >G</text><text x="803.30" y="488.80" font-size="4.6" fill="#222" text-anchor="middle" >G</text><text x="52.00" y="550.00" font-size="4.6" fill="#222" text-anchor="middle" >H</text><text x="803.30" y="550.00" font-size="4.6" fill="#222" text-anchor="middle" >H</text><path d="M68.50 66.60L68.50 564.70" stroke="#3a3a3a" stroke-width="1.6" /><path d="M48.50 117.10L806.50 117.10" stroke="#6a6a6a" stroke-width="1.6" /><path d="M78.60 85.50L78.60 96.30" stroke="#222" stroke-width="1.6" /><path d="M78.6 85.3L83 85.6L92.5 90.2L92 92.6L82.5 89.6L78.6 89.6Z" stroke="#222" stroke-width="1.6" fill="#fff" /><path d="M80.6 85.4l1.8 .2v4h-1.8zM84.6 86.4l1.8 .9-.4 3-1.8-.6zM88.4 88.2l1.7 .8-.5 2.7-1.6-.6z" stroke="none" stroke-width="0" fill="#111" /><circle cx="95.8" cy="91" r="4.1" fill="none" stroke="#e33" stroke-width=".6"/><path d="M94 88.4v6M96.4 88v6.6M93 91.4h6" stroke="#333" stroke-width="1.6" fill="none" /><circle cx="100" cy="96.3" r="2.8" fill="#f7a21c"/><path d="M100 91.6v9.4M95.3 96.3h9.4M96.7 93l6.6 6.6M103.3 93l-6.6 6.6" stroke="#f7a21c" stroke-width="1.6" fill="none" /><path d="M86.6 98.6a2.2 2.2 0 0 1 1.2-4a3 3 0 0 1 5.6-.6a2.4 2.4 0 0 1 1.6 4.4z" stroke="#aaa" stroke-width="1.6" fill="#f8f8f8" /><path d="M88.6 99.4l-.8 2M90.6 99.4l-.8 2.6M92.6 99.4l-.8 2M94.2 99.2l-.6 1.6" stroke="#3a8fe8" stroke-width="1.6" fill="none" /><ellipse cx="135.8" cy="105" rx="28" ry="5.4" fill="url(#gdome)" stroke="#aaa" stroke-width=".3"/><path d="M107.8 105C108 92 122 83.6 136 83.6C152 83.6 163.6 92 163.8 105" stroke="#999" stroke-width="1.6" fill="none" opacity=".55"/><path d="M112 96C120 86 150 84 160 97M117 90.5L137 106M124 87L146 104M131 85L154 101M114 93L132 107" stroke="#aaa" stroke-width="1.6" fill="none" /><circle cx="167.8" cy="82.6" r="2.4" fill="#fff6a0" stroke="#f7e060" stroke-width=".7"/><path d="M167.8 78.8v7.6M164 82.6h7.6M165.2 80l5.2 5.2M170.4 80l-5.2 5.2" stroke="#f9ea80" stroke-width="1.6" fill="none" /><path d="M170 83.4L207 92.6M169.6 84.4L203 100" stroke="#f8e878" stroke-width="1.6" fill="none" opacity=".55"/><path d="M208.4 84.5L216.5 79.4L238.4 86.5L230.4 92Z" stroke="#bbb" stroke-width="1.6" fill="#d8d8d8" /><path d="M208.4 84.5L230.4 92L230.4 110.8L208.4 101.5Z" stroke="#c4ccd2" stroke-width="1.6" fill="#eef2f5" /><path d="M230.4 92L238.4 86.5L238.4 104.6L230.4 110.8Z" stroke="#b8c0c6" stroke-width="1.6" fill="#cfd6dc" /><path d="M208.4 88.8L230.4 96.6M208.4 93L230.4 101.2M208.4 97.2L230.4 106M213 86v17M217.6 87.6v17.2M222 89.2v17.4M226.4 90.6v17.8M230.4 96.6L238.4 91M230.4 101.2L238.4 95.6M230.4 106L238.4 100M234.4 89.4v18.4" stroke="#c5ccd2" stroke-width="1.6" fill="none" /><path d="M200.60 96.00L200.60 100.20" stroke="#6b4a2a" stroke-width="1.6" /><ellipse cx="200.6" cy="94.0" rx="2.5" ry="3.6" fill="#3f9a1e"/><ellipse cx="200.1" cy="93.2" rx="1.3" ry="2" fill="#6dc23a"/><path d="M206.00 100.20L206.00 104.40" stroke="#6b4a2a" stroke-width="1.6" /><ellipse cx="206.0" cy="98.2" rx="2.5" ry="3.6" fill="#3f9a1e"/><ellipse cx="205.5" cy="97.4" rx="1.3" ry="2" fill="#6dc23a"/><path d="M211.40 104.40L211.40 108.60" stroke="#6b4a2a" stroke-width="1.6" /><ellipse cx="211.4" cy="102.4" rx="2.5" ry="3.6" fill="#3f9a1e"/><ellipse cx="210.9" cy="101.6" rx="1.3" ry="2" fill="#6dc23a"/><path d="M216.80 108.60L216.80 112.80" stroke="#6b4a2a" stroke-width="1.6" /><ellipse cx="216.8" cy="106.6" rx="2.5" ry="3.6" fill="#3f9a1e"/><ellipse cx="216.3" cy="105.8" rx="1.3" ry="2" fill="#6dc23a"/><rect x="282.60" y="68.80" width="63.80" height="9.60" fill="#ececec" stroke="#bdbdbd" stroke-width="1.6" /><rect x="330.60" y="69.60" width="14.80" height="4.40" fill="#f0f0f0" stroke="#e22" stroke-width="1.6" /><path d="M288.80 82V108.6H327.80" stroke="#222" stroke-width="1.6" fill="none" /><path d="M288.80 80.6l-1 2h2zM329.40 108.6l-2-1v2z" stroke="none" stroke-width="0" fill="#222" /><path d="M287.60 88.00L288.80 88.00" stroke="#222" stroke-width="1.6" /><path d="M287.60 91.60L288.80 91.60" stroke="#222" stroke-width="1.6" /><path d="M287.60 95.20L288.80 95.20" stroke="#222" stroke-width="1.6" /><path d="M287.60 98.80L288.80 98.80" stroke="#222" stroke-width="1.6" /><path d="M287.60 102.40L288.80 102.40" stroke="#222" stroke-width="1.6" /><path d="M287.60 106.00L288.80 106.00" stroke="#222" stroke-width="1.6" /><path d="M291.30 108.60L291.30 109.60" stroke="#222" stroke-width="1.6" /><path d="M299.20 108.60L299.20 109.60" stroke="#222" stroke-width="1.6" /><path d="M307.10 108.60L307.10 109.60" stroke="#222" stroke-width="1.6" /><path d="M315.00 108.60L315.00 109.60" stroke="#222" stroke-width="1.6" /><path d="M322.90 108.60L322.90 109.60" stroke="#222" stroke-width="1.6" /><path d="M291.60 89.6L307.20 106.2L322.80 89.6" stroke="#222" stroke-width="1.6" fill="none" /><path d="M307.20 101.20L307.20 105.40" stroke="#333" stroke-width="1.6" /><rect x="498.00" y="68.80" width="63.80" height="9.60" fill="#ececec" stroke="#bdbdbd" stroke-width="1.6" /><rect x="546.00" y="69.60" width="14.80" height="4.40" fill="#f0f0f0" stroke="#e22" stroke-width="1.6" /><path d="M504.20 82V108.6H543.20" stroke="#222" stroke-width="1.6" fill="none" /><path d="M504.20 80.6l-1 2h2zM544.80 108.6l-2-1v2z" stroke="none" stroke-width="0" fill="#222" /><path d="M503.00 88.00L504.20 88.00" stroke="#222" stroke-width="1.6" /><path d="M503.00 91.60L504.20 91.60" stroke="#222" stroke-width="1.6" /><path d="M503.00 95.20L504.20 95.20" stroke="#222" stroke-width="1.6" /><path d="M503.00 98.80L504.20 98.80" stroke="#222" stroke-width="1.6" /><path d="M503.00 102.40L504.20 102.40" stroke="#222" stroke-width="1.6" /><path d="M503.00 106.00L504.20 106.00" stroke="#222" stroke-width="1.6" /><path d="M506.70 108.60L506.70 109.60" stroke="#222" stroke-width="1.6" /><path d="M514.60 108.60L514.60 109.60" stroke="#222" stroke-width="1.6" /><path d="M522.50 108.60L522.50 109.60" stroke="#222" stroke-width="1.6" /><path d="M530.40 108.60L530.40 109.60" stroke="#222" stroke-width="1.6" /><path d="M538.30 108.60L538.30 109.60" stroke="#222" stroke-width="1.6" /><path d="M507.00 89.6L522.60 106.2L538.20 89.6" stroke="#222" stroke-width="1.6" fill="none" /><path d="M522.60 101.20L522.60 105.40" stroke="#333" stroke-width="1.6" /><rect x="688.00" y="68.80" width="63.80" height="9.60" fill="#ececec" stroke="#bdbdbd" stroke-width="1.6" /><rect x="736.00" y="69.60" width="14.80" height="4.40" fill="#f0f0f0" stroke="#e22" stroke-width="1.6" /><path d="M694.20 82V108.6H733.20" stroke="#222" stroke-width="1.6" fill="none" /><path d="M694.20 80.6l-1 2h2zM734.80 108.6l-2-1v2z" stroke="none" stroke-width="0" fill="#222" /><path d="M693.00 88.00L694.20 88.00" stroke="#222" stroke-width="1.6" /><path d="M693.00 91.60L694.20 91.60" stroke="#222" stroke-width="1.6" /><path d="M693.00 95.20L694.20 95.20" stroke="#222" stroke-width="1.6" /><path d="M693.00 98.80L694.20 98.80" stroke="#222" stroke-width="1.6" /><path d="M693.00 102.40L694.20 102.40" stroke="#222" stroke-width="1.6" /><path d="M693.00 106.00L694.20 106.00" stroke="#222" stroke-width="1.6" /><path d="M696.70 108.60L696.70 109.60" stroke="#222" stroke-width="1.6" /><path d="M704.60 108.60L704.60 109.60" stroke="#222" stroke-width="1.6" /><path d="M712.50 108.60L712.50 109.60" stroke="#222" stroke-width="1.6" /><path d="M720.40 108.60L720.40 109.60" stroke="#222" stroke-width="1.6" /><path d="M728.30 108.60L728.30 109.60" stroke="#222" stroke-width="1.6" /><path d="M697.00 89.6L712.60 106.2L728.20 89.6" stroke="#222" stroke-width="1.6" fill="none" /><path d="M712.60 101.20L712.60 105.40" stroke="#333" stroke-width="1.6" /><rect x="188.40" y="118.30" width="47.20" height="22.00" fill="#e2e2e2" stroke="none" stroke-width="0" /><path d="M188.40 118.30L235.60 118.30" stroke="#555" stroke-width="1.6" /><path d="M188.40 118.30L188.40 140.30" stroke="#e0363a" stroke-width="1.6" /><path d="M235.60 118.30L235.60 140.30" stroke="#e0363a" stroke-width="1.6" /><rect x="230.80" y="119.40" width="3.40" height="1.60" fill="#f4f4f4" stroke="#555" stroke-width="1.6" /><rect x="190.60" y="126.10" width="42.80" height="13.80" fill="#e9e9e9" stroke="#333" stroke-width="1.6" /><rect x="272.30" y="118.30" width="47.20" height="22.00" fill="#e2e2e2" stroke="none" stroke-width="0" /><path d="M272.30 118.30L319.50 118.30" stroke="#555" stroke-width="1.6" /><path d="M272.30 118.30L272.30 140.30" stroke="#e0363a" stroke-width="1.6" /><path d="M319.50 118.30L319.50 140.30" stroke="#e0363a" stroke-width="1.6" /><rect x="314.70" y="119.40" width="3.40" height="1.60" fill="#f4f4f4" stroke="#555" stroke-width="1.6" /><rect x="274.50" y="126.10" width="42.80" height="13.80" fill="#e9e9e9" stroke="#333" stroke-width="1.6" /><rect x="404.40" y="118.30" width="47.20" height="22.00" fill="#e2e2e2" stroke="none" stroke-width="0" /><path d="M404.40 118.30L451.60 118.30" stroke="#555" stroke-width="1.6" /><path d="M404.40 118.30L404.40 140.30" stroke="#e0363a" stroke-width="1.6" /><path d="M451.60 118.30L451.60 140.30" stroke="#e0363a" stroke-width="1.6" /><rect x="446.80" y="119.40" width="3.40" height="1.60" fill="#f4f4f4" stroke="#555" stroke-width="1.6" /><rect x="406.60" y="126.10" width="42.80" height="13.80" fill="#e9e9e9" stroke="#333" stroke-width="1.6" /><rect x="488.40" y="118.30" width="47.20" height="22.00" fill="#e2e2e2" stroke="none" stroke-width="0" /><path d="M488.40 118.30L535.60 118.30" stroke="#555" stroke-width="1.6" /><path d="M488.40 118.30L488.40 140.30" stroke="#e0363a" stroke-width="1.6" /><path d="M535.60 118.30L535.60 140.30" stroke="#e0363a" stroke-width="1.6" /><rect x="530.80" y="119.40" width="3.40" height="1.60" fill="#f4f4f4" stroke="#555" stroke-width="1.6" /><rect x="490.60" y="126.10" width="42.80" height="13.80" fill="#e9e9e9" stroke="#333" stroke-width="1.6" /><rect x="594.70" y="118.30" width="47.20" height="22.00" fill="#e2e2e2" stroke="none" stroke-width="0" /><path d="M594.70 118.30L641.90 118.30" stroke="#555" stroke-width="1.6" /><path d="M594.70 118.30L594.70 140.30" stroke="#e0363a" stroke-width="1.6" /><path d="M641.90 118.30L641.90 140.30" stroke="#e0363a" stroke-width="1.6" /><rect x="637.10" y="119.40" width="3.40" height="1.60" fill="#f4f4f4" stroke="#555" stroke-width="1.6" /><rect x="596.90" y="126.10" width="42.80" height="13.80" fill="#e9e9e9" stroke="#333" stroke-width="1.6" /><rect x="677.50" y="118.30" width="47.20" height="22.00" fill="#e2e2e2" stroke="none" stroke-width="0" /><path d="M677.50 118.30L724.70 118.30" stroke="#555" stroke-width="1.6" /><path d="M677.50 118.30L677.50 140.30" stroke="#e0363a" stroke-width="1.6" /><path d="M724.70 118.30L724.70 140.30" stroke="#e0363a" stroke-width="1.6" /><rect x="719.90" y="119.40" width="3.40" height="1.60" fill="#f4f4f4" stroke="#555" stroke-width="1.6" /><rect x="679.70" y="126.10" width="42.80" height="13.80" fill="#e9e9e9" stroke="#333" stroke-width="1.6" /><rect x="85.50" y="168.60" width="700.00" height="118.80" fill="#cfcfcf" stroke="#4a4a4a" stroke-width="1.6" /><rect x="88.00" y="171.20" width="695.00" height="113.40" fill="#fff" stroke="#6e6e6e" stroke-width="1.6" /><rect x="88.30" y="171.50" width="66.00" height="112.80" fill="url(#gl)" stroke="none" stroke-width="0.7" /><rect x="706.00" y="171.50" width="76.70" height="112.80" fill="url(#gr)" stroke="none" stroke-width="0.7" /><rect x="88.30" y="262.00" width="694.40" height="22.30" fill="url(#gf)" stroke="none" stroke-width="0.7" /><path d="M85.50 285.30L785.50 285.30" stroke="#b0b0b0" stroke-width="1.6" /><path d="M85.50 284.40L785.50 284.40" stroke="#555" stroke-width="1.6" /><path d="M94.50 283.00L160.00 266.00" stroke="#b4b4b4" stroke-width="1.6" opacity=".55"/><path d="M774.50 283.00L724.00 266.00" stroke="#c4c4c4" stroke-width="1.6" /><g transform="translate(122.00 203.50) scale(1.180 1.000)" fill="#d6d6d6"><ellipse cx="0" cy="0" rx="3" ry="3.8"/><path d="M-1.2 3h2.6l.4 2.6C5 6.4 5.6 8 5.4 12L4.4 21C5.6 26 5.8 32 5 39L-4.6 39C-5.6 32 -5 26 -3.8 21L-4.8 12C-5 8 -4.4 6.4 -1.6 5.6Z"/><path d="M-4.6 8L-8 16L-13 10L-8 6L-3.4 13.4L-6 17.6Z"/><path d="M4.8 8L6.6 16L1 19L.4 17.4L4 15Z"/><path d="M-3.6 39L-2.4 56L-1.6 70L-3.2 72.4L.6 72.4L.8 56L1 39Z"/><path d="M1 39L1.8 56L2.2 69L1.4 71.6L4.8 71.6L4.2 56L4.8 39Z"/></g><g transform="translate(150.40 204.60) scale(1.145 0.970)" fill="#c9c9c9"><ellipse cx="0" cy="0" rx="3" ry="3.8"/><path d="M-1.2 3h2.6l.4 2.6C5 6.4 5.6 8 5.4 12L4.4 21C5.6 26 5.8 32 5 39L-4.6 39C-5.6 32 -5 26 -3.8 21L-4.8 12C-5 8 -4.4 6.4 -1.6 5.6Z"/><path d="M4.6 7.4L9.6 11.4L8.4 2.4L6.4 -1L5 .6L6.4 4.4L6.8 8.4Z"/><path d="M-4.6 8L-7.6 17L-10 13.6L-10.8 14.4L-7.4 20.4L-3.6 13Z"/><path d="M-3.6 39L-2.4 56L-1.6 70L-3.2 72.4L.6 72.4L.8 56L1 39Z"/><path d="M1 39L1.8 56L2.2 69L1.4 71.6L4.8 71.6L4.2 56L4.8 39Z"/></g><g transform="translate(717.00 207.00) scale(1.156 0.980)" fill="#d0d0d0"><ellipse cx="0" cy="0" rx="3" ry="3.8"/><path d="M-1.2 3h2.6l.4 2.6C5 6.4 5.6 8 5.4 12L4.4 21C5.6 26 5.8 32 5 39L-4.6 39C-5.6 32 -5 26 -3.8 21L-4.8 12C-5 8 -4.4 6.4 -1.6 5.6Z"/><path d="M-4.6 8L-8 16L-13 10L-8 6L-3.4 13.4L-6 17.6Z"/><path d="M4.8 8L6.6 16L1 19L.4 17.4L4 15Z"/><path d="M-3.6 39L-2.4 56L-1.6 70L-3.2 72.4L.6 72.4L.8 56L1 39Z"/><path d="M1 39L1.8 56L2.2 69L1.4 71.6L4.8 71.6L4.2 56L4.8 39Z"/></g><g transform="translate(745.00 206.00) scale(-1.168 0.990)" fill="#d2d2d2"><ellipse cx="0" cy="0" rx="3" ry="3.8"/><path d="M-1.2 3h2.6l.4 2.6C5 6.4 5.6 8 5.4 12L4.4 21C5.6 26 5.8 32 5 39L-4.6 39C-5.6 32 -5 26 -3.8 21L-4.8 12C-5 8 -4.4 6.4 -1.6 5.6Z"/><path d="M4.6 7.4L9.6 11.4L8.4 2.4L6.4 -1L5 .6L6.4 4.4L6.8 8.4Z"/><path d="M-4.6 8L-7.6 17L-10 13.6L-10.8 14.4L-7.4 20.4L-3.6 13Z"/><path d="M-3.6 39L-2.4 56L-1.6 70L-3.2 72.4L.6 72.4L.8 56L1 39Z"/><path d="M1 39L1.8 56L2.2 69L1.4 71.6L4.8 71.6L4.2 56L4.8 39Z"/></g><rect x="165.00" y="186.80" width="85.70" height="80.20" fill="#f0f0f0" stroke="#d0d0d0" stroke-width="1.6" /><rect x="172.60" y="188.60" width="70.40" height="76.20" fill="#f8f8f8" stroke="#d6d6d6" stroke-width="1.6" /><rect x="172.80" y="188.90" width="69.70" height="16.80" fill="url(#bl)" stroke="none" stroke-width="0.7" /><rect x="175.10" y="205.60" width="67.40" height="57.20" fill="url(#cy)" stroke="none" stroke-width="0.7" /><path d="M184.40 189.00L184.40 205.60" stroke="#c81a20" stroke-width="1.6" /><path d="M184.40 190.00L184.40 205.00" stroke="#300" stroke-width="1.6" opacity=".55"/><path d="M234.40 189.00L234.40 205.60" stroke="#c81a20" stroke-width="1.6" /><path d="M234.40 190.00L234.40 205.00" stroke="#300" stroke-width="1.6" opacity=".55"/><g opacity=".88"><rect x="184.00" y="245.30" width="33.00" height="3.00" fill="#d8d8d8" stroke="none" stroke-width="0.7" /><rect x="184.00" y="245.30" width="3.60" height="32.50" fill="#d8d8d8" stroke="none" stroke-width="0.7" /><rect x="212.00" y="245.30" width="2.60" height="14.00" fill="#d8d8d8" stroke="none" stroke-width="0.7" /><rect x="200.20" y="223.50" width="2.80" height="20.50" fill="#d8d8d8" stroke="none" stroke-width="0.7" rx="1"/><path d="M201.60 240l-3 5.3h7.5z" stroke="none" stroke-width="0" fill="#d8d8d8" /><ellipse cx="228.60" cy="227.6" rx="4.2" ry="4.8" fill="#d8d8d8"/><path d="M226.40 232C237.60 233 238.40 240 237.40 248L238.00 259.5L211.60 259.5L211.00 254.4L224.50 250.8L215.50 246.4L215.00 249L223.00 246L224.00 238Z" stroke="none" stroke-width="0" fill="#d8d8d8" /><path d="M211.00 254.4L204.00 277.6L208.60 277.6L218.00 259.5Z" stroke="none" stroke-width="0" fill="#d8d8d8" /><path d="M216.00 257L211.40 277.6L215.60 277.6L222.00 258Z" stroke="none" stroke-width="0" fill="#d8d8d8" /><rect x="230.40" y="258.00" width="2.40" height="20.00" fill="#d8d8d8" stroke="none" stroke-width="0.7" /><rect x="222.00" y="258.60" width="14.00" height="1.80" fill="#d8d8d8" stroke="none" stroke-width="0.7" /></g><path d="M186.20 176.6l6.4-2.6v3.4z" stroke="none" stroke-width="0" fill="#222" /><path d="M188.20 176.6l3-1.2v1.4z" stroke="none" stroke-width="0" fill="#e8c020" /><path d="M193.80 173L224.80 173L221.20 179.4L197.60 179.4Z" stroke="#e62a30" stroke-width="1.6" fill="#f47070" /><rect x="199.40" y="174.40" width="6.40" height="4.00" fill="#f2801a" stroke="#d8242a" stroke-width="1.6" /><rect x="212.60" y="174.40" width="6.40" height="4.00" fill="#f2801a" stroke="#d8242a" stroke-width="1.6" /><rect x="206.60" y="174.40" width="5.20" height="4.00" fill="#c9c9c9" stroke="none" stroke-width="0.7" /><circle cx="229.40" cy="176" r="3.9" fill="#fff" stroke="#999" stroke-width=".45" stroke-dasharray=".8 .6"/><path d="M225.20 176.60L233.60 176.60" stroke="#222" stroke-width="1.6" /><path d="M229.40 180.00L229.40 222.50" stroke="#8a8a8a" stroke-width="1.6" opacity=".55"/><path d="M243.60 194.4a3 3 0 0 1 6 0z" stroke="#999" stroke-width="1.6" fill="#fff" opacity=".55"/><path d="M242.60 194.50L250.60 194.50" stroke="#222" stroke-width="1.6" /><rect x="245.60" y="195.00" width="2.20" height="1.60" fill="#34c" stroke="none" stroke-width="0.7" /><path d="M246.60 197.00L246.60 323.00" stroke="#444" stroke-width="1.6" opacity=".55"/><rect x="381.20" y="186.80" width="85.70" height="80.20" fill="#f0f0f0" stroke="#d0d0d0" stroke-width="1.6" /><rect x="388.80" y="188.60" width="70.40" height="76.20" fill="#f8f8f8" stroke="#d6d6d6" stroke-width="1.6" /><rect x="389.00" y="188.90" width="69.70" height="16.80" fill="url(#bl)" stroke="none" stroke-width="0.7" /><rect x="391.30" y="205.60" width="67.40" height="57.20" fill="url(#cy)" stroke="none" stroke-width="0.7" /><path d="M400.60 189.00L400.60 205.60" stroke="#c81a20" stroke-width="1.6" /><path d="M400.60 190.00L400.60 205.00" stroke="#300" stroke-width="1.6" opacity=".55"/><path d="M450.60 189.00L450.60 205.60" stroke="#c81a20" stroke-width="1.6" /><path d="M450.60 190.00L450.60 205.00" stroke="#300" stroke-width="1.6" opacity=".55"/><g opacity=".88"><rect x="400.20" y="245.30" width="33.00" height="3.00" fill="#d8d8d8" stroke="none" stroke-width="0.7" /><rect x="400.20" y="245.30" width="3.60" height="32.50" fill="#d8d8d8" stroke="none" stroke-width="0.7" /><rect x="428.20" y="245.30" width="2.60" height="14.00" fill="#d8d8d8" stroke="none" stroke-width="0.7" /><rect x="416.40" y="223.50" width="2.80" height="20.50" fill="#d8d8d8" stroke="none" stroke-width="0.7" rx="1"/><path d="M417.80 240l-3 5.3h7.5z" stroke="none" stroke-width="0" fill="#d8d8d8" /><ellipse cx="444.80" cy="227.6" rx="4.2" ry="4.8" fill="#d8d8d8"/><path d="M442.60 232C453.80 233 454.60 240 453.60 248L454.20 259.5L427.80 259.5L427.20 254.4L440.70 250.8L431.70 246.4L431.20 249L439.20 246L440.20 238Z" stroke="none" stroke-width="0" fill="#d8d8d8" /><path d="M427.20 254.4L420.20 277.6L424.80 277.6L434.20 259.5Z" stroke="none" stroke-width="0" fill="#d8d8d8" /><path d="M432.20 257L427.60 277.6L431.80 277.6L438.20 258Z" stroke="none" stroke-width="0" fill="#d8d8d8" /><rect x="446.60" y="258.00" width="2.40" height="20.00" fill="#d8d8d8" stroke="none" stroke-width="0.7" /><rect x="438.20" y="258.60" width="14.00" height="1.80" fill="#d8d8d8" stroke="none" stroke-width="0.7" /></g><path d="M402.40 176.6l6.4-2.6v3.4z" stroke="none" stroke-width="0" fill="#222" /><path d="M404.40 176.6l3-1.2v1.4z" stroke="none" stroke-width="0" fill="#e8c020" /><path d="M410.00 173L441.00 173L437.40 179.4L413.80 179.4Z" stroke="#e62a30" stroke-width="1.6" fill="#f47070" /><rect x="415.60" y="174.40" width="6.40" height="4.00" fill="#f2801a" stroke="#d8242a" stroke-width="1.6" /><rect x="428.80" y="174.40" width="6.40" height="4.00" fill="#f2801a" stroke="#d8242a" stroke-width="1.6" /><rect x="422.80" y="174.40" width="5.20" height="4.00" fill="#c9c9c9" stroke="none" stroke-width="0.7" /><circle cx="445.60" cy="176" r="3.9" fill="#fff" stroke="#999" stroke-width=".45" stroke-dasharray=".8 .6"/><path d="M441.40 176.60L449.80 176.60" stroke="#222" stroke-width="1.6" /><path d="M445.60 180.00L445.60 222.50" stroke="#8a8a8a" stroke-width="1.6" opacity=".55"/><path d="M459.80 194.4a3 3 0 0 1 6 0z" stroke="#999" stroke-width="1.6" fill="#fff" opacity=".55"/><path d="M458.80 194.50L466.80 194.50" stroke="#222" stroke-width="1.6" /><rect x="461.80" y="195.00" width="2.20" height="1.60" fill="#34c" stroke="none" stroke-width="0.7" /><path d="M462.80 197.00L462.80 323.00" stroke="#444" stroke-width="1.6" opacity=".55"/><rect x="570.60" y="186.80" width="85.70" height="80.20" fill="#f0f0f0" stroke="#d0d0d0" stroke-width="1.6" /><rect x="578.20" y="188.60" width="70.40" height="76.20" fill="#f8f8f8" stroke="#d6d6d6" stroke-width="1.6" /><rect x="578.40" y="188.90" width="69.70" height="16.80" fill="url(#bl)" stroke="none" stroke-width="0.7" /><rect x="580.70" y="205.60" width="67.40" height="57.20" fill="url(#cy)" stroke="none" stroke-width="0.7" /><path d="M590.00 189.00L590.00 205.60" stroke="#c81a20" stroke-width="1.6" /><path d="M590.00 190.00L590.00 205.00" stroke="#300" stroke-width="1.6" opacity=".55"/><path d="M640.00 189.00L640.00 205.60" stroke="#c81a20" stroke-width="1.6" /><path d="M640.00 190.00L640.00 205.00" stroke="#300" stroke-width="1.6" opacity=".55"/><g opacity=".88"><rect x="589.60" y="245.30" width="33.00" height="3.00" fill="#d8d8d8" stroke="none" stroke-width="0.7" /><rect x="589.60" y="245.30" width="3.60" height="32.50" fill="#d8d8d8" stroke="none" stroke-width="0.7" /><rect x="617.60" y="245.30" width="2.60" height="14.00" fill="#d8d8d8" stroke="none" stroke-width="0.7" /><rect x="605.80" y="223.50" width="2.80" height="20.50" fill="#d8d8d8" stroke="none" stroke-width="0.7" rx="1"/><path d="M607.20 240l-3 5.3h7.5z" stroke="none" stroke-width="0" fill="#d8d8d8" /><ellipse cx="634.20" cy="227.6" rx="4.2" ry="4.8" fill="#d8d8d8"/><path d="M632.00 232C643.20 233 644.00 240 643.00 248L643.60 259.5L617.20 259.5L616.60 254.4L630.10 250.8L621.10 246.4L620.60 249L628.60 246L629.60 238Z" stroke="none" stroke-width="0" fill="#d8d8d8" /><path d="M616.60 254.4L609.60 277.6L614.20 277.6L623.60 259.5Z" stroke="none" stroke-width="0" fill="#d8d8d8" /><path d="M621.60 257L617.00 277.6L621.20 277.6L627.60 258Z" stroke="none" stroke-width="0" fill="#d8d8d8" /><rect x="636.00" y="258.00" width="2.40" height="20.00" fill="#d8d8d8" stroke="none" stroke-width="0.7" /><rect x="627.60" y="258.60" width="14.00" height="1.80" fill="#d8d8d8" stroke="none" stroke-width="0.7" /></g><path d="M591.80 176.6l6.4-2.6v3.4z" stroke="none" stroke-width="0" fill="#222" /><path d="M593.80 176.6l3-1.2v1.4z" stroke="none" stroke-width="0" fill="#e8c020" /><path d="M599.40 173L630.40 173L626.80 179.4L603.20 179.4Z" stroke="#e62a30" stroke-width="1.6" fill="#f47070" /><rect x="605.00" y="174.40" width="6.40" height="4.00" fill="#f2801a" stroke="#d8242a" stroke-width="1.6" /><rect x="618.20" y="174.40" width="6.40" height="4.00" fill="#f2801a" stroke="#d8242a" stroke-width="1.6" /><rect x="612.20" y="174.40" width="5.20" height="4.00" fill="#c9c9c9" stroke="none" stroke-width="0.7" /><circle cx="635.00" cy="176" r="3.9" fill="#fff" stroke="#999" stroke-width=".45" stroke-dasharray=".8 .6"/><path d="M630.80 176.60L639.20 176.60" stroke="#222" stroke-width="1.6" /><path d="M635.00 180.00L635.00 222.50" stroke="#8a8a8a" stroke-width="1.6" opacity=".55"/><path d="M649.20 194.4a3 3 0 0 1 6 0z" stroke="#999" stroke-width="1.6" fill="#fff" opacity=".55"/><path d="M648.20 194.50L656.20 194.50" stroke="#222" stroke-width="1.6" /><rect x="651.20" y="195.00" width="2.20" height="1.60" fill="#34c" stroke="none" stroke-width="0.7" /><path d="M652.20 197.00L652.20 323.00" stroke="#444" stroke-width="1.6" opacity=".55"/><path d="M301.60 173.8l1.3-1.7m1.1 1.7l1.3-1.7m1.1 1.7l1.3-1.7m1.1 1.7l1.3-1.7m1.1 1.7l1.3-1.7m1.1 1.7l1.3-1.7m1.1 1.7l1.3-1.7m1.1 1.7l1.3-1.7m1.1 1.7l1.3-1.7m1.1 1.7l1.3-1.7m1.1 1.7l1.3-1.7m1.1 1.7l1.3-1.7m1.1 1.7l1.3-1.7m1.1 1.7" stroke="#e8444a" stroke-width="1.6" fill="none" /><path d="M301.60 177.20L333.80 177.20" stroke="#222" stroke-width="1.6" /><path d="M302.80 177.4a3.4 3.4 0 0 0 6.8 0" stroke="#888" stroke-width="1.6" fill="#fff" opacity=".55"/><path d="M306.20 175.60L306.20 177.20" stroke="#222" stroke-width="1.6" /><path d="M310.40 177.4a3.4 3.4 0 0 0 6.8 0" stroke="#888" stroke-width="1.6" fill="#fff" opacity=".55"/><path d="M313.80 175.60L313.80 177.20" stroke="#222" stroke-width="1.6" /><path d="M318.00 177.4a3.4 3.4 0 0 0 6.8 0" stroke="#888" stroke-width="1.6" fill="#fff" opacity=".55"/><path d="M321.40 175.60L321.40 177.20" stroke="#222" stroke-width="1.6" /><path d="M325.60 177.4a3.4 3.4 0 0 0 6.8 0" stroke="#888" stroke-width="1.6" fill="#fff" opacity=".55"/><path d="M329.00 175.60L329.00 177.20" stroke="#222" stroke-width="1.6" /><rect x="304.00" y="177.80" width="2.40" height="2.00" fill="#34c" stroke="none" stroke-width="0.7" /><path d="M312.40 181.4a5 3 0 0 0 10 0z" stroke="#777" stroke-width="1.6" fill="#f4f4f4" /><path d="M315.60 184.6l-.8 1.6M319.60 184.6l.8 1.6" stroke="#d33" stroke-width="1.6" fill="none" /><path d="M503.20 173.8l1.3-1.7m1.1 1.7l1.3-1.7m1.1 1.7l1.3-1.7m1.1 1.7l1.3-1.7m1.1 1.7l1.3-1.7m1.1 1.7l1.3-1.7m1.1 1.7l1.3-1.7m1.1 1.7l1.3-1.7m1.1 1.7l1.3-1.7m1.1 1.7l1.3-1.7m1.1 1.7l1.3-1.7m1.1 1.7l1.3-1.7m1.1 1.7l1.3-1.7m1.1 1.7" stroke="#e8444a" stroke-width="1.6" fill="none" /><path d="M503.20 177.20L535.40 177.20" stroke="#222" stroke-width="1.6" /><path d="M504.40 177.4a3.4 3.4 0 0 0 6.8 0" stroke="#888" stroke-width="1.6" fill="#fff" opacity=".55"/><path d="M507.80 175.60L507.80 177.20" stroke="#222" stroke-width="1.6" /><path d="M512.00 177.4a3.4 3.4 0 0 0 6.8 0" stroke="#888" stroke-width="1.6" fill="#fff" opacity=".55"/><path d="M515.40 175.60L515.40 177.20" stroke="#222" stroke-width="1.6" /><path d="M519.60 177.4a3.4 3.4 0 0 0 6.8 0" stroke="#888" stroke-width="1.6" fill="#fff" opacity=".55"/><path d="M523.00 175.60L523.00 177.20" stroke="#222" stroke-width="1.6" /><path d="M527.20 177.4a3.4 3.4 0 0 0 6.8 0" stroke="#888" stroke-width="1.6" fill="#fff" opacity=".55"/><path d="M530.60 175.60L530.60 177.20" stroke="#222" stroke-width="1.6" /><rect x="505.60" y="177.80" width="2.40" height="2.00" fill="#34c" stroke="none" stroke-width="0.7" /><path d="M514.00 181.4a5 3 0 0 0 10 0z" stroke="#777" stroke-width="1.6" fill="#f4f4f4" /><path d="M517.20 184.6l-.8 1.6M521.20 184.6l.8 1.6" stroke="#d33" stroke-width="1.6" fill="none" /><path d="M305.6 184.4H94.6V323.4" stroke="#333" stroke-width="1.6" fill="none" opacity=".55"/><path d="M531.8 184.2H774.6V323.4" stroke="#333" stroke-width="1.6" fill="none" opacity=".55"/><path d="M304.6 184.4l1.2-1.4" stroke="#2a2" stroke-width="1.6" fill="none" /><path d="M531.4 184.2l1.2-1.4" stroke="#2a2" stroke-width="1.6" fill="none" /><rect x="94.00" y="183.80" width="1.20" height="1.20" fill="#2a2" stroke="none" stroke-width="0.7" /><rect x="774.00" y="183.60" width="1.20" height="1.20" fill="#2a2" stroke="none" stroke-width="0.7" /><path d="M179.00 285.8H241.00L236.00 289H184.00Z" stroke="#c8c8c8" stroke-width="1.6" fill="#ececec" /><circle cx="179.60" cy="286.6" r=".9" fill="#fff" stroke="#e44" stroke-width=".4"/><circle cx="240.40" cy="286.6" r=".9" fill="#fff" stroke="#e44" stroke-width=".4"/><rect x="185.60" y="289.40" width="48.20" height="16.80" fill="url(#gfc)" stroke="#cfcfcf" stroke-width="1.6" /><rect x="195.80" y="290.80" width="27.40" height="4.40" fill="url(#gbr)" stroke="none" stroke-width="0.7" /><circle cx="209.50" cy="300.6" r="4.9" fill="#f4f4f4" stroke="#888" stroke-width=".45" stroke-dasharray=".9 .7"/><path d="M186.40 302.8a3.2 3.2 0 0 1 6.4 0z" stroke="#777" stroke-width="1.6" fill="#fff" /><path d="M185.80 303.00L193.60 303.00" stroke="#222" stroke-width="1.6" /><rect x="208.60" y="282.60" width="1.40" height="2.00" fill="#f2d020" stroke="none" stroke-width="0.7" /><path d="M209.50 306.40L209.50 323.40" stroke="#222" stroke-width="1.6" opacity=".55"/><path d="M229.40 276.00L229.40 289.00" stroke="#8a8a8a" stroke-width="1.6" opacity=".55"/><path d="M229.40 306.40L229.40 323.40" stroke="#9a9a9a" stroke-width="1.6" opacity=".55"/><path d="M233.80 291.1H307.70V308.4" stroke="#1e8fff" stroke-width="1.6" fill="none" /><path d="M239.60 290.2H308.20" stroke="#e8202a" stroke-width="1.6" fill="none" /><path d="M306.80 290.2V308" stroke="#e8202a" stroke-width="1.6" fill="none" /><path d="M233.80 293.6H291.40V297.6" stroke="#1740d0" stroke-width="1.6" fill="none" opacity=".55"/><path d="M289.60 297.4h3.4l-.5 8.6h-2.4z" stroke="#333" stroke-width="1.6" fill="#9a9a9a" /><path d="M290.60 298v8M292.00 298v8" stroke="#222" stroke-width="1.6" fill="none" /><path d="M288.80 306.4h5l-1.2 3.6h-2.6z" stroke="#333" stroke-width="1.6" fill="#808080" /><rect x="288.60" y="296.00" width="1.60" height="1.40" fill="#2a50d8" stroke="none" stroke-width="0.7" /><rect x="293.20" y="295.40" width="1.60" height="1.40" fill="none" stroke="#e22" stroke-width="1.6" /><path d="M286.80 310l2.6 3.6l-2.6 3.6zM295.60 310l-2.6 3.6l2.6 3.6z" stroke="#333" stroke-width="1.6" fill="#fff" /><path d="M289.20 309.8h4l-2 3.8zM289.20 317.6h4l-2-3.8z" stroke="#333" stroke-width="1.6" fill="#7a7a7a" /><path d="M289.60 309.4l-3-2.4M292.80 309.4l3-2.4M289.60 317.8l-3 2.2M292.80 317.8l3 2.2" stroke="#555" stroke-width="1.6" fill="none" /><path d="M303.20 310l2.6 3.6l-2.6 3.6zM312.00 310l-2.6 3.6l2.6 3.6z" stroke="#333" stroke-width="1.6" fill="#fff" /><path d="M305.60 309.8h4l-2 3.8zM305.60 317.6h4l-2-3.8z" stroke="#333" stroke-width="1.6" fill="#7a7a7a" /><path d="M306.00 309.4l-3-2.4M309.20 309.4l3-2.4M306.00 317.8l-3 2.2M309.20 317.8l3 2.2" stroke="#555" stroke-width="1.6" fill="none" /><path d="M293.00 313.60L305.60 313.60" stroke="#222" stroke-width="1.6" /><circle cx="299.20" cy="302.6" r="3.7" fill="#f6f6f6" stroke="#888" stroke-width=".45" stroke-dasharray=".8 .6"/><ellipse cx="299.40" cy="311.4" rx="3.4" ry="1.7" fill="#fff" stroke="#666" stroke-width=".4"/><rect x="283.60" y="310.60" width="1.50" height="1.40" fill="#fff" stroke="#e22" stroke-width="1.6" /><rect x="312.80" y="310.60" width="1.50" height="1.40" fill="#fff" stroke="#e22" stroke-width="1.6" /><rect x="308.60" y="306.00" width="1.50" height="1.40" fill="#fff" stroke="#e22" stroke-width="1.6" /><rect x="291.40" y="319.40" width="1.50" height="1.40" fill="#fff" stroke="#e22" stroke-width="1.6" /><path d="M303.20 302.6H346.20V323.4" stroke="#333" stroke-width="1.6" fill="none" opacity=".55"/><path d="M345.00 302.6l1.2-1.4" stroke="#2a2" stroke-width="1.6" fill="none" /><path d="M286.40 313.6H282.20V325H294.00V342.3H320.00" stroke="#1740d0" stroke-width="1.6" fill="none" opacity=".55"/><path d="M291.40 319.4V321.6H296.60V334.3H320.00" stroke="#1740d0" stroke-width="1.6" fill="none" opacity=".55"/><path d="M277.50 334.3H296.60M277.50 342.3H294.00" stroke="#1740d0" stroke-width="1.6" fill="none" opacity=".55"/><path d="M307.60 318V322H301.60V330.5" stroke="#e8202a" stroke-width="1.6" fill="none" /><path d="M277.50 330.50L320.00 330.50" stroke="#e8202a" stroke-width="1.6" /><path d="M311.80 313.6H316.60V325H304.60V338.5" stroke="#1e8fff" stroke-width="1.6" fill="none" /><path d="M277.50 338.50L320.00 338.50" stroke="#1e8fff" stroke-width="1.6" /><path d="M279.60 330.50l-2.2-1v2zM321.00 330.50l-2.2-1v2z" stroke="none" stroke-width="0" fill="#111" /><path d="M279.60 334.30l-2.2-1v2zM321.00 334.30l-2.2-1v2z" stroke="none" stroke-width="0" fill="#111" /><path d="M279.60 338.50l-2.2-1v2zM321.00 338.50l-2.2-1v2z" stroke="none" stroke-width="0" fill="#111" /><path d="M279.60 342.30l-2.2-1v2zM321.00 342.30l-2.2-1v2z" stroke="none" stroke-width="0" fill="#111" /><path d="M395.00 285.8H457.00L452.00 289H400.00Z" stroke="#c8c8c8" stroke-width="1.6" fill="#ececec" /><circle cx="395.60" cy="286.6" r=".9" fill="#fff" stroke="#e44" stroke-width=".4"/><circle cx="456.40" cy="286.6" r=".9" fill="#fff" stroke="#e44" stroke-width=".4"/><rect x="401.60" y="289.40" width="48.20" height="16.80" fill="url(#gfc)" stroke="#cfcfcf" stroke-width="1.6" /><rect x="411.80" y="290.80" width="27.40" height="4.40" fill="url(#gbr)" stroke="none" stroke-width="0.7" /><circle cx="425.50" cy="300.6" r="4.9" fill="#f4f4f4" stroke="#888" stroke-width=".45" stroke-dasharray=".9 .7"/><path d="M402.40 302.8a3.2 3.2 0 0 1 6.4 0z" stroke="#777" stroke-width="1.6" fill="#fff" /><path d="M401.80 303.00L409.60 303.00" stroke="#222" stroke-width="1.6" /><rect x="424.60" y="282.60" width="1.40" height="2.00" fill="#f2d020" stroke="none" stroke-width="0.7" /><path d="M425.50 306.40L425.50 323.40" stroke="#222" stroke-width="1.6" opacity=".55"/><path d="M445.40 276.00L445.40 289.00" stroke="#8a8a8a" stroke-width="1.6" opacity=".55"/><path d="M445.40 306.40L445.40 323.40" stroke="#9a9a9a" stroke-width="1.6" opacity=".55"/><path d="M449.80 291.1H523.70V308.4" stroke="#1e8fff" stroke-width="1.6" fill="none" /><path d="M455.60 290.2H524.20" stroke="#e8202a" stroke-width="1.6" fill="none" /><path d="M522.80 290.2V308" stroke="#e8202a" stroke-width="1.6" fill="none" /><path d="M449.80 293.6H507.40V297.6" stroke="#1740d0" stroke-width="1.6" fill="none" opacity=".55"/><path d="M505.60 297.4h3.4l-.5 8.6h-2.4z" stroke="#333" stroke-width="1.6" fill="#9a9a9a" /><path d="M506.60 298v8M508.00 298v8" stroke="#222" stroke-width="1.6" fill="none" /><path d="M504.80 306.4h5l-1.2 3.6h-2.6z" stroke="#333" stroke-width="1.6" fill="#808080" /><rect x="504.60" y="296.00" width="1.60" height="1.40" fill="#2a50d8" stroke="none" stroke-width="0.7" /><rect x="509.20" y="295.40" width="1.60" height="1.40" fill="none" stroke="#e22" stroke-width="1.6" /><path d="M502.80 310l2.6 3.6l-2.6 3.6zM511.60 310l-2.6 3.6l2.6 3.6z" stroke="#333" stroke-width="1.6" fill="#fff" /><path d="M505.20 309.8h4l-2 3.8zM505.20 317.6h4l-2-3.8z" stroke="#333" stroke-width="1.6" fill="#7a7a7a" /><path d="M505.60 309.4l-3-2.4M508.80 309.4l3-2.4M505.60 317.8l-3 2.2M508.80 317.8l3 2.2" stroke="#555" stroke-width="1.6" fill="none" /><path d="M519.20 310l2.6 3.6l-2.6 3.6zM528.00 310l-2.6 3.6l2.6 3.6z" stroke="#333" stroke-width="1.6" fill="#fff" /><path d="M521.60 309.8h4l-2 3.8zM521.60 317.6h4l-2-3.8z" stroke="#333" stroke-width="1.6" fill="#7a7a7a" /><path d="M522.00 309.4l-3-2.4M525.20 309.4l3-2.4M522.00 317.8l-3 2.2M525.20 317.8l3 2.2" stroke="#555" stroke-width="1.6" fill="none" /><path d="M509.00 313.60L521.60 313.60" stroke="#222" stroke-width="1.6" /><circle cx="515.20" cy="302.6" r="3.7" fill="#f6f6f6" stroke="#888" stroke-width=".45" stroke-dasharray=".8 .6"/><ellipse cx="515.40" cy="311.4" rx="3.4" ry="1.7" fill="#fff" stroke="#666" stroke-width=".4"/><rect x="499.60" y="310.60" width="1.50" height="1.40" fill="#fff" stroke="#e22" stroke-width="1.6" /><rect x="528.80" y="310.60" width="1.50" height="1.40" fill="#fff" stroke="#e22" stroke-width="1.6" /><rect x="524.60" y="306.00" width="1.50" height="1.40" fill="#fff" stroke="#e22" stroke-width="1.6" /><rect x="507.40" y="319.40" width="1.50" height="1.40" fill="#fff" stroke="#e22" stroke-width="1.6" /><path d="M519.20 302.6H562.20V323.4" stroke="#333" stroke-width="1.6" fill="none" opacity=".55"/><path d="M561.00 302.6l1.2-1.4" stroke="#2a2" stroke-width="1.6" fill="none" /><path d="M502.40 313.6H498.20V325H510.00V342.3H536.00" stroke="#1740d0" stroke-width="1.6" fill="none" opacity=".55"/><path d="M507.40 319.4V321.6H512.60V334.3H536.00" stroke="#1740d0" stroke-width="1.6" fill="none" opacity=".55"/><path d="M493.50 334.3H512.60M493.50 342.3H510.00" stroke="#1740d0" stroke-width="1.6" fill="none" opacity=".55"/><path d="M523.60 318V322H517.60V330.5" stroke="#e8202a" stroke-width="1.6" fill="none" /><path d="M493.50 330.50L536.00 330.50" stroke="#e8202a" stroke-width="1.6" /><path d="M527.80 313.6H532.60V325H520.60V338.5" stroke="#1e8fff" stroke-width="1.6" fill="none" /><path d="M493.50 338.50L536.00 338.50" stroke="#1e8fff" stroke-width="1.6" /><path d="M495.60 330.50l-2.2-1v2zM537.00 330.50l-2.2-1v2z" stroke="none" stroke-width="0" fill="#111" /><path d="M495.60 334.30l-2.2-1v2zM537.00 334.30l-2.2-1v2z" stroke="none" stroke-width="0" fill="#111" /><path d="M495.60 338.50l-2.2-1v2zM537.00 338.50l-2.2-1v2z" stroke="none" stroke-width="0" fill="#111" /><path d="M495.60 342.30l-2.2-1v2zM537.00 342.30l-2.2-1v2z" stroke="none" stroke-width="0" fill="#111" /><path d="M584.75 285.8H646.75L641.75 289H589.75Z" stroke="#c8c8c8" stroke-width="1.6" fill="#ececec" /><circle cx="585.35" cy="286.6" r=".9" fill="#fff" stroke="#e44" stroke-width=".4"/><circle cx="646.15" cy="286.6" r=".9" fill="#fff" stroke="#e44" stroke-width=".4"/><rect x="591.35" y="289.40" width="48.20" height="16.80" fill="url(#gfc)" stroke="#cfcfcf" stroke-width="1.6" /><rect x="601.55" y="290.80" width="27.40" height="4.40" fill="url(#gbr)" stroke="none" stroke-width="0.7" /><circle cx="615.25" cy="300.6" r="4.9" fill="#f4f4f4" stroke="#888" stroke-width=".45" stroke-dasharray=".9 .7"/><path d="M592.15 302.8a3.2 3.2 0 0 1 6.4 0z" stroke="#777" stroke-width="1.6" fill="#fff" /><path d="M591.55 303.00L599.35 303.00" stroke="#222" stroke-width="1.6" /><rect x="614.35" y="282.60" width="1.40" height="2.00" fill="#f2d020" stroke="none" stroke-width="0.7" /><path d="M615.25 306.40L615.25 323.40" stroke="#222" stroke-width="1.6" opacity=".55"/><path d="M635.15 276.00L635.15 289.00" stroke="#8a8a8a" stroke-width="1.6" opacity=".55"/><path d="M635.15 306.40L635.15 323.40" stroke="#9a9a9a" stroke-width="1.6" opacity=".55"/><path d="M639.55 291.1H713.45V308.4" stroke="#1e8fff" stroke-width="1.6" fill="none" /><path d="M645.35 290.2H713.95" stroke="#e8202a" stroke-width="1.6" fill="none" /><path d="M712.55 290.2V308" stroke="#e8202a" stroke-width="1.6" fill="none" /><path d="M639.55 293.6H697.15V297.6" stroke="#1740d0" stroke-width="1.6" fill="none" opacity=".55"/><path d="M695.35 297.4h3.4l-.5 8.6h-2.4z" stroke="#333" stroke-width="1.6" fill="#9a9a9a" /><path d="M696.35 298v8M697.75 298v8" stroke="#222" stroke-width="1.6" fill="none" /><path d="M694.55 306.4h5l-1.2 3.6h-2.6z" stroke="#333" stroke-width="1.6" fill="#808080" /><rect x="694.35" y="296.00" width="1.60" height="1.40" fill="#2a50d8" stroke="none" stroke-width="0.7" /><rect x="698.95" y="295.40" width="1.60" height="1.40" fill="none" stroke="#e22" stroke-width="1.6" /><path d="M692.55 310l2.6 3.6l-2.6 3.6zM701.35 310l-2.6 3.6l2.6 3.6z" stroke="#333" stroke-width="1.6" fill="#fff" /><path d="M694.95 309.8h4l-2 3.8zM694.95 317.6h4l-2-3.8z" stroke="#333" stroke-width="1.6" fill="#7a7a7a" /><path d="M695.35 309.4l-3-2.4M698.55 309.4l3-2.4M695.35 317.8l-3 2.2M698.55 317.8l3 2.2" stroke="#555" stroke-width="1.6" fill="none" /><path d="M708.95 310l2.6 3.6l-2.6 3.6zM717.75 310l-2.6 3.6l2.6 3.6z" stroke="#333" stroke-width="1.6" fill="#fff" /><path d="M711.35 309.8h4l-2 3.8zM711.35 317.6h4l-2-3.8z" stroke="#333" stroke-width="1.6" fill="#7a7a7a" /><path d="M711.75 309.4l-3-2.4M714.95 309.4l3-2.4M711.75 317.8l-3 2.2M714.95 317.8l3 2.2" stroke="#555" stroke-width="1.6" fill="none" /><path d="M698.75 313.60L711.35 313.60" stroke="#222" stroke-width="1.6" /><circle cx="704.95" cy="302.6" r="3.7" fill="#f6f6f6" stroke="#888" stroke-width=".45" stroke-dasharray=".8 .6"/><ellipse cx="705.15" cy="311.4" rx="3.4" ry="1.7" fill="#fff" stroke="#666" stroke-width=".4"/><rect x="689.35" y="310.60" width="1.50" height="1.40" fill="#fff" stroke="#e22" stroke-width="1.6" /><rect x="718.55" y="310.60" width="1.50" height="1.40" fill="#fff" stroke="#e22" stroke-width="1.6" /><rect x="714.35" y="306.00" width="1.50" height="1.40" fill="#fff" stroke="#e22" stroke-width="1.6" /><rect x="697.15" y="319.40" width="1.50" height="1.40" fill="#fff" stroke="#e22" stroke-width="1.6" /><path d="M708.95 302.6H751.95V323.4" stroke="#333" stroke-width="1.6" fill="none" opacity=".55"/><path d="M750.75 302.6l1.2-1.4" stroke="#2a2" stroke-width="1.6" fill="none" /><path d="M692.15 313.6H687.95V325H699.75V342.3H725.75" stroke="#1740d0" stroke-width="1.6" fill="none" opacity=".55"/><path d="M697.15 319.4V321.6H702.35V334.3H725.75" stroke="#1740d0" stroke-width="1.6" fill="none" opacity=".55"/><path d="M683.25 334.3H702.35M683.25 342.3H699.75" stroke="#1740d0" stroke-width="1.6" fill="none" opacity=".55"/><path d="M713.35 318V322H707.35V330.5" stroke="#e8202a" stroke-width="1.6" fill="none" /><path d="M683.25 330.50L725.75 330.50" stroke="#e8202a" stroke-width="1.6" /><path d="M717.55 313.6H722.35V325H710.35V338.5" stroke="#1e8fff" stroke-width="1.6" fill="none" /><path d="M683.25 338.50L725.75 338.50" stroke="#1e8fff" stroke-width="1.6" /><path d="M685.35 330.50l-2.2-1v2zM726.75 330.50l-2.2-1v2z" stroke="none" stroke-width="0" fill="#111" /><path d="M685.35 334.30l-2.2-1v2zM726.75 334.30l-2.2-1v2z" stroke="none" stroke-width="0" fill="#111" /><path d="M685.35 338.50l-2.2-1v2zM726.75 338.50l-2.2-1v2z" stroke="none" stroke-width="0" fill="#111" /><path d="M685.35 342.30l-2.2-1v2zM726.75 342.30l-2.2-1v2z" stroke="none" stroke-width="0" fill="#111" /><path d="M48.50 325.00L806.50 325.00" stroke="#5a5a5a" stroke-width="1.6" /><path d="M55.50 369.50L800.00 369.50" stroke="#2a2a2a" stroke-width="1.6" /><path d="M55.50 376.50L800.00 376.50" stroke="#2a2a2a" stroke-width="1.6" /><path d="M55.50 383.25L800.00 383.25" stroke="#2a2a2a" stroke-width="1.6" /><path d="M55.50 388.25L800.00 388.25" stroke="#2a2a2a" stroke-width="1.6" /><path d="M55.50 393.50L800.00 393.50" stroke="#2a2a2a" stroke-width="1.6" /><path d="M55.50 399.00L800.00 399.00" stroke="#2a2a2a" stroke-width="1.6" /><path d="M55.50 404.25L800.00 404.25" stroke="#2a2a2a" stroke-width="1.6" /><path d="M55.50 443.60L800.00 443.60" stroke="#8a8a8a" stroke-width="1.6" /><path d="M55.50 448.40L800.00 448.40" stroke="#2a2a2a" stroke-width="1.6" /><path d="M62.40 325.00L62.40 369.50" stroke="#3a3a3a" stroke-width="1.6" /><path d="M62.40 404.25L62.40 443.60" stroke="#3a3a3a" stroke-width="1.6" /><path d="M62.40 369.50L62.40 404.25" stroke="#555" stroke-width="1.6" /><path d="M75.00 369.50L75.00 404.25" stroke="#3a3a3a" stroke-width="1.6" /><path d="M69.60 369.50L69.60 404.25" stroke="#555" stroke-width="1.6" /><path d="M55.50 347.40L62.40 347.40" stroke="#3a3a3a" stroke-width="1.6" /><rect x="70.20" y="370.40" width="4.20" height="4.00" fill="#fff" stroke="#555" stroke-width="1.6" /><rect x="70.20" y="377.40" width="4.20" height="4.00" fill="#fff" stroke="#555" stroke-width="1.6" /><rect x="70.20" y="383.20" width="4.20" height="4.00" fill="#fff" stroke="#555" stroke-width="1.6" /><rect x="70.20" y="388.40" width="4.20" height="4.00" fill="#fff" stroke="#555" stroke-width="1.6" /><rect x="70.20" y="393.70" width="4.20" height="4.00" fill="#fff" stroke="#555" stroke-width="1.6" /><rect x="70.20" y="399.20" width="4.20" height="4.00" fill="#fff" stroke="#555" stroke-width="1.6" /><circle cx="72.3" cy="372.6" r="1" fill="#e33"/><circle cx="72.3" cy="379.6" r="1" fill="none" stroke="#36c" stroke-width=".4"/><path d="M85.80 325.00L85.80 448.40" stroke="#222" stroke-width="1.6" /><path d="M105.00 325.00L105.00 448.40" stroke="#222" stroke-width="1.6" /><path d="M88.00 325.40L88.00 369.30" stroke="#666" stroke-width="1.6" opacity=".55"/><path d="M88.00 404.40L88.00 443.40" stroke="#999" stroke-width="1.6" /><rect x="85.40" y="355.60" width="2.40" height="3.80" fill="#fff" stroke="#222" stroke-width="1.6" /><text x="87.60" y="443.20" font-size="3.2" fill="#000" opacity=".5" transform="rotate(-90 87.60 443.20)" textLength="37.00" lengthAdjust="spacingAndGlyphs" font-weight="bold" stroke="#000" stroke-width="0.144" >Heizen Ventil stetig 0-10V</text><rect x="87.10" y="448.80" width="1.10" height="0.90" fill="#f55" stroke="none" stroke-width="0.7" /><path d="M91.80 325.40L91.80 369.30" stroke="#666" stroke-width="1.6" opacity=".55"/><path d="M91.80 404.40L91.80 443.40" stroke="#999" stroke-width="1.6" /><text x="91.35" y="369.10" font-size="3.5" fill="#000" opacity=".5" transform="rotate(-90 91.35 369.10)" textLength="33.40" lengthAdjust="spacingAndGlyphs" font-weight="bold" stroke="#000" stroke-width="0.1575" >Y1 _RA.KLT.ST02</text><path d="M90.30 336.40L90.30 351.60" stroke="#777" stroke-width="1.6" opacity=".55"/><text x="91.40" y="443.20" font-size="3.2" fill="#000" opacity=".5" transform="rotate(-90 91.40 443.20)" textLength="30.78" lengthAdjust="spacingAndGlyphs" font-weight="bold" stroke="#000" stroke-width="0.144" >Sollwertsteller LON</text><rect x="90.90" y="448.80" width="1.10" height="0.90" fill="#f55" stroke="none" stroke-width="0.7" /><path d="M95.80 325.40L95.80 369.30" stroke="#666" stroke-width="1.6" opacity=".55"/><path d="M95.80 404.40L95.80 443.40" stroke="#999" stroke-width="1.6" /><text x="95.35" y="369.10" font-size="3.5" fill="#000" opacity=".5" transform="rotate(-90 95.35 369.10)" textLength="33.40" lengthAdjust="spacingAndGlyphs" font-weight="bold" stroke="#000" stroke-width="0.1575" >A1 _RA.BEL.SB03</text><path d="M94.30 336.40L94.30 351.60" stroke="#777" stroke-width="1.6" opacity=".55"/><text x="95.40" y="443.20" font-size="3.2" fill="#000" opacity=".5" transform="rotate(-90 95.40 443.20)" textLength="27.54" lengthAdjust="spacingAndGlyphs" font-weight="bold" stroke="#000" stroke-width="0.144" >Fensterkontakt RM</text><rect x="94.90" y="448.80" width="1.10" height="0.90" fill="#f55" stroke="none" stroke-width="0.7" /><path d="M99.80 325.40L99.80 369.30" stroke="#666" stroke-width="1.6" opacity=".55"/><path d="M99.80 404.40L99.80 443.40" stroke="#999" stroke-width="1.6" /><text x="99.35" y="369.10" font-size="3.5" fill="#000" opacity=".5" transform="rotate(-90 99.35 369.10)" textLength="33.40" lengthAdjust="spacingAndGlyphs" font-weight="bold" stroke="#000" stroke-width="0.1575" >B2 _RA.HZG.SW01</text><path d="M98.30 336.40L98.30 351.60" stroke="#777" stroke-width="1.6" opacity=".55"/><text x="99.40" y="443.20" font-size="3.2" fill="#000" opacity=".5" transform="rotate(-90 99.40 443.20)" textLength="30.78" lengthAdjust="spacingAndGlyphs" font-weight="bold" stroke="#000" stroke-width="0.144" >Sollwertsteller LON</text><rect x="98.90" y="448.80" width="1.10" height="0.90" fill="#f55" stroke="none" stroke-width="0.7" /><path d="M103.60 325.40L103.60 369.30" stroke="#666" stroke-width="1.6" opacity=".55"/><path d="M103.60 404.40L103.60 443.40" stroke="#999" stroke-width="1.6" /><text x="103.15" y="369.10" font-size="3.5" fill="#000" opacity=".5" transform="rotate(-90 103.15 369.10)" textLength="33.40" lengthAdjust="spacingAndGlyphs" font-weight="bold" stroke="#000" stroke-width="0.1575" >B1 _RA.RLT.MW01</text><path d="M102.10 336.40L102.10 351.60" stroke="#777" stroke-width="1.6" opacity=".55"/><text x="103.20" y="443.20" font-size="3.2" fill="#000" opacity=".5" transform="rotate(-90 103.20 443.20)" textLength="32.40" lengthAdjust="spacingAndGlyphs" font-weight="bold" stroke="#000" stroke-width="0.144" >Licht Stufe 1 Dimmer</text><rect x="102.70" y="448.80" width="1.10" height="0.90" fill="#f55" stroke="none" stroke-width="0.7" /><path d="M83.40 320.00H90.80L94.20 323.40" stroke="#e8333a" stroke-width="1.6" fill="none" /><path d="M203.60 325.00L203.60 448.40" stroke="#222" stroke-width="1.6" /><path d="M219.50 325.00L219.50 448.40" stroke="#222" stroke-width="1.6" /><path d="M256.60 325.00L256.60 448.40" stroke="#222" stroke-width="1.6" /><path d="M240.20 325.00L240.20 448.40" stroke="#222" stroke-width="1.6" /><path d="M207.20 325.40L207.20 369.30" stroke="#666" stroke-width="1.6" opacity=".55"/><path d="M207.20 404.40L207.20 443.40" stroke="#999" stroke-width="1.6" /><rect x="204.60" y="355.60" width="2.40" height="3.80" fill="#fff" stroke="#222" stroke-width="1.6" /><text x="206.80" y="443.20" font-size="3.2" fill="#000" opacity=".5" transform="rotate(-90 206.80 443.20)" textLength="29.16" lengthAdjust="spacingAndGlyphs" font-weight="bold" stroke="#000" stroke-width="0.144" >Taupunktwächter SM</text><rect x="206.30" y="448.80" width="1.10" height="0.90" fill="#f55" stroke="none" stroke-width="0.7" /><path d="M211.20 325.40L211.20 369.30" stroke="#666" stroke-width="1.6" opacity=".55"/><path d="M211.20 404.40L211.20 443.40" stroke="#999" stroke-width="1.6" /><text x="210.75" y="369.10" font-size="3.5" fill="#000" opacity=".5" transform="rotate(-90 210.75 369.10)" textLength="33.40" lengthAdjust="spacingAndGlyphs" font-weight="bold" stroke="#000" stroke-width="0.1575" >A1 _RA.BEL.SB03</text><path d="M209.70 336.40L209.70 351.60" stroke="#777" stroke-width="1.6" opacity=".55"/><text x="210.80" y="443.20" font-size="3.2" fill="#000" opacity=".5" transform="rotate(-90 210.80 443.20)" textLength="27.54" lengthAdjust="spacingAndGlyphs" font-weight="bold" stroke="#000" stroke-width="0.144" >Fensterkontakt RM</text><rect x="210.30" y="448.80" width="1.10" height="0.90" fill="#f55" stroke="none" stroke-width="0.7" /><path d="M215.10 325.40L215.10 369.30" stroke="#666" stroke-width="1.6" opacity=".55"/><path d="M215.10 404.40L215.10 443.40" stroke="#999" stroke-width="1.6" /><text x="214.65" y="369.10" font-size="3.5" fill="#000" opacity=".5" transform="rotate(-90 214.65 369.10)" textLength="33.40" lengthAdjust="spacingAndGlyphs" font-weight="bold" stroke="#000" stroke-width="0.1575" >B2 _RA.HZG.SW01</text><path d="M213.60 336.40L213.60 351.60" stroke="#777" stroke-width="1.6" opacity=".55"/><text x="214.70" y="443.20" font-size="3.2" fill="#000" opacity=".5" transform="rotate(-90 214.70 443.20)" textLength="27.54" lengthAdjust="spacingAndGlyphs" font-weight="bold" stroke="#000" stroke-width="0.144" >Fensterkontakt RM</text><rect x="214.20" y="448.80" width="1.10" height="0.90" fill="#f55" stroke="none" stroke-width="0.7" /><path d="M218.60 325.40L218.60 369.30" stroke="#666" stroke-width="1.6" opacity=".55"/><path d="M218.60 404.40L218.60 443.40" stroke="#999" stroke-width="1.6" /><text x="218.15" y="369.10" font-size="3.5" fill="#000" opacity=".5" transform="rotate(-90 218.15 369.10)" textLength="33.40" lengthAdjust="spacingAndGlyphs" font-weight="bold" stroke="#000" stroke-width="0.1575" >Y1 _RA.KLT.ST02</text><path d="M217.10 336.40L217.10 351.60" stroke="#777" stroke-width="1.6" opacity=".55"/><text x="218.20" y="443.20" font-size="3.2" fill="#000" opacity=".5" transform="rotate(-90 218.20 443.20)" textLength="29.16" lengthAdjust="spacingAndGlyphs" font-weight="bold" stroke="#000" stroke-width="0.144" >Raum Temperatur MW</text><rect x="217.70" y="448.80" width="1.10" height="0.90" fill="#f55" stroke="none" stroke-width="0.7" /><path d="M223.00 325.40L223.00 369.30" stroke="#666" stroke-width="1.6" opacity=".55"/><path d="M223.00 404.40L223.00 443.40" stroke="#999" stroke-width="1.6" /><rect x="220.40" y="355.60" width="2.40" height="3.80" fill="#fff" stroke="#222" stroke-width="1.6" /><text x="222.60" y="443.20" font-size="3.2" fill="#000" opacity=".5" transform="rotate(-90 222.60 443.20)" textLength="29.16" lengthAdjust="spacingAndGlyphs" font-weight="bold" stroke="#000" stroke-width="0.144" >Raum Temperatur MW</text><rect x="222.10" y="448.80" width="1.10" height="0.90" fill="#f55" stroke="none" stroke-width="0.7" /><path d="M226.80 325.40L226.80 369.30" stroke="#666" stroke-width="1.6" opacity=".55"/><path d="M226.80 404.40L226.80 443.40" stroke="#999" stroke-width="1.6" /><text x="226.35" y="369.10" font-size="3.5" fill="#000" opacity=".5" transform="rotate(-90 226.35 369.10)" textLength="33.40" lengthAdjust="spacingAndGlyphs" font-weight="bold" stroke="#000" stroke-width="0.1575" >Y1 _RA.KLT.ST02</text><path d="M225.30 336.40L225.30 351.60" stroke="#777" stroke-width="1.6" opacity=".55"/><text x="226.40" y="443.20" font-size="3.2" fill="#000" opacity=".5" transform="rotate(-90 226.40 443.20)" textLength="29.16" lengthAdjust="spacingAndGlyphs" font-weight="bold" stroke="#000" stroke-width="0.144" >Raum Temperatur MW</text><rect x="225.90" y="448.80" width="1.10" height="0.90" fill="#f55" stroke="none" stroke-width="0.7" /><path d="M231.00 325.40L231.00 369.30" stroke="#666" stroke-width="1.6" opacity=".55"/><path d="M231.00 404.40L231.00 443.40" stroke="#999" stroke-width="1.6" /><text x="230.55" y="369.10" font-size="3.5" fill="#000" opacity=".5" transform="rotate(-90 230.55 369.10)" textLength="33.40" lengthAdjust="spacingAndGlyphs" font-weight="bold" stroke="#000" stroke-width="0.1575" >Y1 _RA.KLT.ST02</text><path d="M229.50 336.40L229.50 351.60" stroke="#777" stroke-width="1.6" opacity=".55"/><text x="230.60" y="443.20" font-size="3.2" fill="#000" opacity=".5" transform="rotate(-90 230.60 443.20)" textLength="29.16" lengthAdjust="spacingAndGlyphs" font-weight="bold" stroke="#000" stroke-width="0.144" >Taupunktwächter SM</text><rect x="230.10" y="448.80" width="1.10" height="0.90" fill="#f55" stroke="none" stroke-width="0.7" /><path d="M235.00 325.40L235.00 369.30" stroke="#666" stroke-width="1.6" opacity=".55"/><path d="M235.00 404.40L235.00 443.40" stroke="#999" stroke-width="1.6" /><text x="234.55" y="369.10" font-size="3.5" fill="#000" opacity=".5" transform="rotate(-90 234.55 369.10)" textLength="33.40" lengthAdjust="spacingAndGlyphs" font-weight="bold" stroke="#000" stroke-width="0.1575" >B1 _RA.RLT.MW01</text><path d="M233.50 336.40L233.50 351.60" stroke="#777" stroke-width="1.6" opacity=".55"/><text x="234.60" y="443.20" font-size="3.2" fill="#000" opacity=".5" transform="rotate(-90 234.60 443.20)" textLength="32.40" lengthAdjust="spacingAndGlyphs" font-weight="bold" stroke="#000" stroke-width="0.144" >Licht Stufe 1 Dimmer</text><rect x="234.10" y="448.80" width="1.10" height="0.90" fill="#f55" stroke="none" stroke-width="0.7" /><path d="M238.60 325.40L238.60 369.30" stroke="#666" stroke-width="1.6" opacity=".55"/><path d="M238.60 404.40L238.60 443.40" stroke="#999" stroke-width="1.6" /><text x="238.15" y="369.10" font-size="3.5" fill="#000" opacity=".5" transform="rotate(-90 238.15 369.10)" textLength="33.40" lengthAdjust="spacingAndGlyphs" font-weight="bold" stroke="#000" stroke-width="0.1575" >B1 _RA.RLT.MW01</text><path d="M237.10 336.40L237.10 351.60" stroke="#777" stroke-width="1.6" opacity=".55"/><text x="238.20" y="443.20" font-size="3.2" fill="#000" opacity=".5" transform="rotate(-90 238.20 443.20)" textLength="30.78" lengthAdjust="spacingAndGlyphs" font-weight="bold" stroke="#000" stroke-width="0.144" >Sollwertsteller LON</text><rect x="237.70" y="448.80" width="1.10" height="0.90" fill="#f55" stroke="none" stroke-width="0.7" /><path d="M244.20 325.40L244.20 369.30" stroke="#666" stroke-width="1.6" opacity=".55"/><path d="M244.20 404.40L244.20 443.40" stroke="#999" stroke-width="1.6" /><rect x="241.60" y="355.60" width="2.40" height="3.80" fill="#fff" stroke="#222" stroke-width="1.6" /><text x="243.80" y="443.20" font-size="3.2" fill="#000" opacity=".5" transform="rotate(-90 243.80 443.20)" textLength="25.92" lengthAdjust="spacingAndGlyphs" font-weight="bold" stroke="#000" stroke-width="0.144" >Volumenstrom VVS</text><rect x="243.30" y="448.80" width="1.10" height="0.90" fill="#f55" stroke="none" stroke-width="0.7" /><path d="M248.50 325.40L248.50 369.30" stroke="#666" stroke-width="1.6" opacity=".55"/><path d="M248.50 404.40L248.50 443.40" stroke="#999" stroke-width="1.6" /><text x="248.05" y="369.10" font-size="3.5" fill="#000" opacity=".5" transform="rotate(-90 248.05 369.10)" textLength="33.40" lengthAdjust="spacingAndGlyphs" font-weight="bold" stroke="#000" stroke-width="0.1575" >S1 _RA.JAL.BM04</text><path d="M247.00 336.40L247.00 351.60" stroke="#777" stroke-width="1.6" opacity=".55"/><text x="248.10" y="443.20" font-size="3.2" fill="#000" opacity=".5" transform="rotate(-90 248.10 443.20)" textLength="30.78" lengthAdjust="spacingAndGlyphs" font-weight="bold" stroke="#000" stroke-width="0.144" >Temp Raumfühler Ist</text><rect x="247.60" y="448.80" width="1.10" height="0.90" fill="#f55" stroke="none" stroke-width="0.7" /><path d="M252.50 325.40L252.50 369.30" stroke="#666" stroke-width="1.6" opacity=".55"/><path d="M252.50 404.40L252.50 443.40" stroke="#999" stroke-width="1.6" /><text x="252.05" y="369.10" font-size="3.5" fill="#000" opacity=".5" transform="rotate(-90 252.05 369.10)" textLength="33.40" lengthAdjust="spacingAndGlyphs" font-weight="bold" stroke="#000" stroke-width="0.1575" >Y1 _RA.KLT.ST02</text><path d="M251.00 336.40L251.00 351.60" stroke="#777" stroke-width="1.6" opacity=".55"/><text x="252.10" y="443.20" font-size="3.2" fill="#000" opacity=".5" transform="rotate(-90 252.10 443.20)" textLength="30.78" lengthAdjust="spacingAndGlyphs" font-weight="bold" stroke="#000" stroke-width="0.144" >Temp Raumfühler Ist</text><rect x="251.60" y="448.80" width="1.10" height="0.90" fill="#f55" stroke="none" stroke-width="0.7" /><path d="M255.80 325.40L255.80 369.30" stroke="#666" stroke-width="1.6" opacity=".55"/><path d="M255.80 404.40L255.80 443.40" stroke="#999" stroke-width="1.6" /><text x="255.35" y="369.10" font-size="3.5" fill="#000" opacity=".5" transform="rotate(-90 255.35 369.10)" textLength="33.40" lengthAdjust="spacingAndGlyphs" font-weight="bold" stroke="#000" stroke-width="0.1575" >A1 _RA.BEL.SB03</text><path d="M254.30 336.40L254.30 351.60" stroke="#777" stroke-width="1.6" opacity=".55"/><text x="255.40" y="443.20" font-size="3.2" fill="#000" opacity=".5" transform="rotate(-90 255.40 443.20)" textLength="29.16" lengthAdjust="spacingAndGlyphs" font-weight="bold" stroke="#000" stroke-width="0.144" >Raum Temperatur MW</text><rect x="254.90" y="448.80" width="1.10" height="0.90" fill="#f55" stroke="none" stroke-width="0.7" /><path d="M339.50 325.00L339.50 448.40" stroke="#222" stroke-width="1.6" /><path d="M351.80 325.00L351.80 448.40" stroke="#222" stroke-width="1.6" /><path d="M343.00 325.40L343.00 369.30" stroke="#666" stroke-width="1.6" opacity=".55"/><path d="M343.00 404.40L343.00 443.40" stroke="#999" stroke-width="1.6" /><rect x="340.40" y="355.60" width="2.40" height="3.80" fill="#fff" stroke="#222" stroke-width="1.6" /><text x="342.60" y="443.20" font-size="3.2" fill="#000" opacity=".5" transform="rotate(-90 342.60 443.20)" textLength="27.54" lengthAdjust="spacingAndGlyphs" font-weight="bold" stroke="#000" stroke-width="0.144" >Fensterkontakt RM</text><rect x="342.10" y="448.80" width="1.10" height="0.90" fill="#f55" stroke="none" stroke-width="0.7" /><path d="M346.80 325.40L346.80 369.30" stroke="#666" stroke-width="1.6" opacity=".55"/><path d="M346.80 404.40L346.80 443.40" stroke="#999" stroke-width="1.6" /><text x="346.35" y="369.10" font-size="3.5" fill="#000" opacity=".5" transform="rotate(-90 346.35 369.10)" textLength="33.40" lengthAdjust="spacingAndGlyphs" font-weight="bold" stroke="#000" stroke-width="0.1575" >B2 _RA.HZG.SW01</text><path d="M345.30 336.40L345.30 351.60" stroke="#777" stroke-width="1.6" opacity=".55"/><text x="346.40" y="443.20" font-size="3.2" fill="#000" opacity=".5" transform="rotate(-90 346.40 443.20)" textLength="29.16" lengthAdjust="spacingAndGlyphs" font-weight="bold" stroke="#000" stroke-width="0.144" >Präsenzmelder Raum</text><rect x="345.90" y="448.80" width="1.10" height="0.90" fill="#f55" stroke="none" stroke-width="0.7" /><path d="M350.60 325.40L350.60 369.30" stroke="#666" stroke-width="1.6" opacity=".55"/><path d="M350.60 404.40L350.60 443.40" stroke="#999" stroke-width="1.6" /><text x="350.15" y="369.10" font-size="3.5" fill="#000" opacity=".5" transform="rotate(-90 350.15 369.10)" textLength="33.40" lengthAdjust="spacingAndGlyphs" font-weight="bold" stroke="#000" stroke-width="0.1575" >B2 _RA.HZG.SW01</text><path d="M349.10 336.40L349.10 351.60" stroke="#777" stroke-width="1.6" opacity=".55"/><text x="350.20" y="443.20" font-size="3.2" fill="#000" opacity=".5" transform="rotate(-90 350.20 443.20)" textLength="34.02" lengthAdjust="spacingAndGlyphs" font-weight="bold" stroke="#000" stroke-width="0.144" >Jalousie Auf/Ab Motor</text><rect x="349.70" y="448.80" width="1.10" height="0.90" fill="#f55" stroke="none" stroke-width="0.7" /><path d="M198.60 320.00H206.00L209.40 323.40" stroke="#e8333a" stroke-width="1.6" fill="none" /><path d="M218.00 320.00H225.40L228.80 323.40" stroke="#e8333a" stroke-width="1.6" fill="none" /><path d="M235.60 320.00H243.00L246.40 323.40" stroke="#e8333a" stroke-width="1.6" fill="none" /><path d="M335.40 320.00H342.80L346.20 323.40" stroke="#e8333a" stroke-width="1.6" fill="none" /><path d="M419.60 325.00L419.60 448.40" stroke="#222" stroke-width="1.6" /><path d="M435.50 325.00L435.50 448.40" stroke="#222" stroke-width="1.6" /><path d="M472.60 325.00L472.60 448.40" stroke="#222" stroke-width="1.6" /><path d="M456.20 325.00L456.20 448.40" stroke="#222" stroke-width="1.6" /><path d="M423.20 325.40L423.20 369.30" stroke="#666" stroke-width="1.6" opacity=".55"/><path d="M423.20 404.40L423.20 443.40" stroke="#999" stroke-width="1.6" /><rect x="420.60" y="355.60" width="2.40" height="3.80" fill="#fff" stroke="#222" stroke-width="1.6" /><text x="422.80" y="443.20" font-size="3.2" fill="#000" opacity=".5" transform="rotate(-90 422.80 443.20)" textLength="27.54" lengthAdjust="spacingAndGlyphs" font-weight="bold" stroke="#000" stroke-width="0.144" >Fensterkontakt RM</text><rect x="422.30" y="448.80" width="1.10" height="0.90" fill="#f55" stroke="none" stroke-width="0.7" /><path d="M427.20 325.40L427.20 369.30" stroke="#666" stroke-width="1.6" opacity=".55"/><path d="M427.20 404.40L427.20 443.40" stroke="#999" stroke-width="1.6" /><text x="426.75" y="369.10" font-size="3.5" fill="#000" opacity=".5" transform="rotate(-90 426.75 369.10)" textLength="33.40" lengthAdjust="spacingAndGlyphs" font-weight="bold" stroke="#000" stroke-width="0.1575" >A1 _RA.BEL.SB03</text><path d="M425.70 336.40L425.70 351.60" stroke="#777" stroke-width="1.6" opacity=".55"/><text x="426.80" y="443.20" font-size="3.2" fill="#000" opacity=".5" transform="rotate(-90 426.80 443.20)" textLength="25.92" lengthAdjust="spacingAndGlyphs" font-weight="bold" stroke="#000" stroke-width="0.144" >Volumenstrom VVS</text><rect x="426.30" y="448.80" width="1.10" height="0.90" fill="#f55" stroke="none" stroke-width="0.7" /><path d="M431.10 325.40L431.10 369.30" stroke="#666" stroke-width="1.6" opacity=".55"/><path d="M431.10 404.40L431.10 443.40" stroke="#999" stroke-width="1.6" /><text x="430.65" y="369.10" font-size="3.5" fill="#000" opacity=".5" transform="rotate(-90 430.65 369.10)" textLength="33.40" lengthAdjust="spacingAndGlyphs" font-weight="bold" stroke="#000" stroke-width="0.1575" >B2 _RA.HZG.SW01</text><path d="M429.60 336.40L429.60 351.60" stroke="#777" stroke-width="1.6" opacity=".55"/><text x="430.70" y="443.20" font-size="3.2" fill="#000" opacity=".5" transform="rotate(-90 430.70 443.20)" textLength="25.92" lengthAdjust="spacingAndGlyphs" font-weight="bold" stroke="#000" stroke-width="0.144" >Volumenstrom VVS</text><rect x="430.20" y="448.80" width="1.10" height="0.90" fill="#f55" stroke="none" stroke-width="0.7" /><path d="M434.60 325.40L434.60 369.30" stroke="#666" stroke-width="1.6" opacity=".55"/><path d="M434.60 404.40L434.60 443.40" stroke="#999" stroke-width="1.6" /><text x="434.15" y="369.10" font-size="3.5" fill="#000" opacity=".5" transform="rotate(-90 434.15 369.10)" textLength="33.40" lengthAdjust="spacingAndGlyphs" font-weight="bold" stroke="#000" stroke-width="0.1575" >M1 _RA.VSR.RM05</text><path d="M433.10 336.40L433.10 351.60" stroke="#777" stroke-width="1.6" opacity=".55"/><text x="434.20" y="443.20" font-size="3.2" fill="#000" opacity=".5" transform="rotate(-90 434.20 443.20)" textLength="29.16" lengthAdjust="spacingAndGlyphs" font-weight="bold" stroke="#000" stroke-width="0.144" >Taupunktwächter SM</text><rect x="433.70" y="448.80" width="1.10" height="0.90" fill="#f55" stroke="none" stroke-width="0.7" /><path d="M439.00 325.40L439.00 369.30" stroke="#666" stroke-width="1.6" opacity=".55"/><path d="M439.00 404.40L439.00 443.40" stroke="#999" stroke-width="1.6" /><rect x="436.40" y="355.60" width="2.40" height="3.80" fill="#fff" stroke="#222" stroke-width="1.6" /><text x="438.60" y="443.20" font-size="3.2" fill="#000" opacity=".5" transform="rotate(-90 438.60 443.20)" textLength="37.00" lengthAdjust="spacingAndGlyphs" font-weight="bold" stroke="#000" stroke-width="0.144" >Heizen Ventil stetig 0-10V</text><rect x="438.10" y="448.80" width="1.10" height="0.90" fill="#f55" stroke="none" stroke-width="0.7" /><path d="M442.80 325.40L442.80 369.30" stroke="#666" stroke-width="1.6" opacity=".55"/><path d="M442.80 404.40L442.80 443.40" stroke="#999" stroke-width="1.6" /><text x="442.35" y="369.10" font-size="3.5" fill="#000" opacity=".5" transform="rotate(-90 442.35 369.10)" textLength="33.40" lengthAdjust="spacingAndGlyphs" font-weight="bold" stroke="#000" stroke-width="0.1575" >M1 _RA.VSR.RM05</text><path d="M441.30 336.40L441.30 351.60" stroke="#777" stroke-width="1.6" opacity=".55"/><text x="442.40" y="443.20" font-size="3.2" fill="#000" opacity=".5" transform="rotate(-90 442.40 443.20)" textLength="32.40" lengthAdjust="spacingAndGlyphs" font-weight="bold" stroke="#000" stroke-width="0.144" >Licht Stufe 1 Dimmer</text><rect x="441.90" y="448.80" width="1.10" height="0.90" fill="#f55" stroke="none" stroke-width="0.7" /><path d="M447.00 325.40L447.00 369.30" stroke="#666" stroke-width="1.6" opacity=".55"/><path d="M447.00 404.40L447.00 443.40" stroke="#999" stroke-width="1.6" /><text x="446.55" y="369.10" font-size="3.5" fill="#000" opacity=".5" transform="rotate(-90 446.55 369.10)" textLength="33.40" lengthAdjust="spacingAndGlyphs" font-weight="bold" stroke="#000" stroke-width="0.1575" >A1 _RA.BEL.SB03</text><path d="M445.50 336.40L445.50 351.60" stroke="#777" stroke-width="1.6" opacity=".55"/><text x="446.60" y="443.20" font-size="3.2" fill="#000" opacity=".5" transform="rotate(-90 446.60 443.20)" textLength="32.40" lengthAdjust="spacingAndGlyphs" font-weight="bold" stroke="#000" stroke-width="0.144" >Kühlen Ventil stetig</text><rect x="446.10" y="448.80" width="1.10" height="0.90" fill="#f55" stroke="none" stroke-width="0.7" /><path d="M451.00 325.40L451.00 369.30" stroke="#666" stroke-width="1.6" opacity=".55"/><path d="M451.00 404.40L451.00 443.40" stroke="#999" stroke-width="1.6" /><text x="450.55" y="369.10" font-size="3.5" fill="#000" opacity=".5" transform="rotate(-90 450.55 369.10)" textLength="33.40" lengthAdjust="spacingAndGlyphs" font-weight="bold" stroke="#000" stroke-width="0.1575" >S1 _RA.JAL.BM04</text><path d="M449.50 336.40L449.50 351.60" stroke="#777" stroke-width="1.6" opacity=".55"/><text x="450.60" y="443.20" font-size="3.2" fill="#000" opacity=".5" transform="rotate(-90 450.60 443.20)" textLength="37.00" lengthAdjust="spacingAndGlyphs" font-weight="bold" stroke="#000" stroke-width="0.144" >Heizen Ventil stetig 0-10V</text><rect x="450.10" y="448.80" width="1.10" height="0.90" fill="#f55" stroke="none" stroke-width="0.7" /><path d="M454.60 325.40L454.60 369.30" stroke="#666" stroke-width="1.6" opacity=".55"/><path d="M454.60 404.40L454.60 443.40" stroke="#999" stroke-width="1.6" /><text x="454.15" y="369.10" font-size="3.5" fill="#000" opacity=".5" transform="rotate(-90 454.15 369.10)" textLength="33.40" lengthAdjust="spacingAndGlyphs" font-weight="bold" stroke="#000" stroke-width="0.1575" >B1 _RA.RLT.MW01</text><path d="M453.10 336.40L453.10 351.60" stroke="#777" stroke-width="1.6" opacity=".55"/><text x="454.20" y="443.20" font-size="3.2" fill="#000" opacity=".5" transform="rotate(-90 454.20 443.20)" textLength="30.78" lengthAdjust="spacingAndGlyphs" font-weight="bold" stroke="#000" stroke-width="0.144" >Temp Raumfühler Ist</text><rect x="453.70" y="448.80" width="1.10" height="0.90" fill="#f55" stroke="none" stroke-width="0.7" /><path d="M460.20 325.40L460.20 369.30" stroke="#666" stroke-width="1.6" opacity=".55"/><path d="M460.20 404.40L460.20 443.40" stroke="#999" stroke-width="1.6" /><rect x="457.60" y="355.60" width="2.40" height="3.80" fill="#fff" stroke="#222" stroke-width="1.6" /><text x="459.80" y="443.20" font-size="3.2" fill="#000" opacity=".5" transform="rotate(-90 459.80 443.20)" textLength="30.78" lengthAdjust="spacingAndGlyphs" font-weight="bold" stroke="#000" stroke-width="0.144" >Temp Raumfühler Ist</text><rect x="459.30" y="448.80" width="1.10" height="0.90" fill="#f55" stroke="none" stroke-width="0.7" /><path d="M464.50 325.40L464.50 369.30" stroke="#666" stroke-width="1.6" opacity=".55"/><path d="M464.50 404.40L464.50 443.40" stroke="#999" stroke-width="1.6" /><text x="464.05" y="369.10" font-size="3.5" fill="#000" opacity=".5" transform="rotate(-90 464.05 369.10)" textLength="33.40" lengthAdjust="spacingAndGlyphs" font-weight="bold" stroke="#000" stroke-width="0.1575" >B1 _RA.RLT.MW01</text><path d="M463.00 336.40L463.00 351.60" stroke="#777" stroke-width="1.6" opacity=".55"/><text x="464.10" y="443.20" font-size="3.2" fill="#000" opacity=".5" transform="rotate(-90 464.10 443.20)" textLength="32.40" lengthAdjust="spacingAndGlyphs" font-weight="bold" stroke="#000" stroke-width="0.144" >Licht Stufe 1 Dimmer</text><rect x="463.60" y="448.80" width="1.10" height="0.90" fill="#f55" stroke="none" stroke-width="0.7" /><path d="M468.50 325.40L468.50 369.30" stroke="#666" stroke-width="1.6" opacity=".55"/><path d="M468.50 404.40L468.50 443.40" stroke="#999" stroke-width="1.6" /><text x="468.05" y="369.10" font-size="3.5" fill="#000" opacity=".5" transform="rotate(-90 468.05 369.10)" textLength="33.40" lengthAdjust="spacingAndGlyphs" font-weight="bold" stroke="#000" stroke-width="0.1575" >M1 _RA.VSR.RM05</text><path d="M467.00 336.40L467.00 351.60" stroke="#777" stroke-width="1.6" opacity=".55"/><text x="468.10" y="443.20" font-size="3.2" fill="#000" opacity=".5" transform="rotate(-90 468.10 443.20)" textLength="30.78" lengthAdjust="spacingAndGlyphs" font-weight="bold" stroke="#000" stroke-width="0.144" >Temp Raumfühler Ist</text><rect x="467.60" y="448.80" width="1.10" height="0.90" fill="#f55" stroke="none" stroke-width="0.7" /><path d="M471.80 325.40L471.80 369.30" stroke="#666" stroke-width="1.6" opacity=".55"/><path d="M471.80 404.40L471.80 443.40" stroke="#999" stroke-width="1.6" /><text x="471.35" y="369.10" font-size="3.5" fill="#000" opacity=".5" transform="rotate(-90 471.35 369.10)" textLength="33.40" lengthAdjust="spacingAndGlyphs" font-weight="bold" stroke="#000" stroke-width="0.1575" >B1 _RA.RLT.MW01</text><path d="M470.30 336.40L470.30 351.60" stroke="#777" stroke-width="1.6" opacity=".55"/><text x="471.40" y="443.20" font-size="3.2" fill="#000" opacity=".5" transform="rotate(-90 471.40 443.20)" textLength="25.92" lengthAdjust="spacingAndGlyphs" font-weight="bold" stroke="#000" stroke-width="0.144" >Volumenstrom VVS</text><rect x="470.90" y="448.80" width="1.10" height="0.90" fill="#f55" stroke="none" stroke-width="0.7" /><path d="M555.50 325.00L555.50 448.40" stroke="#222" stroke-width="1.6" /><path d="M567.80 325.00L567.80 448.40" stroke="#222" stroke-width="1.6" /><path d="M559.00 325.40L559.00 369.30" stroke="#666" stroke-width="1.6" opacity=".55"/><path d="M559.00 404.40L559.00 443.40" stroke="#999" stroke-width="1.6" /><rect x="556.40" y="355.60" width="2.40" height="3.80" fill="#fff" stroke="#222" stroke-width="1.6" /><text x="558.60" y="443.20" font-size="3.2" fill="#000" opacity=".5" transform="rotate(-90 558.60 443.20)" textLength="32.40" lengthAdjust="spacingAndGlyphs" font-weight="bold" stroke="#000" stroke-width="0.144" >Licht Stufe 1 Dimmer</text><rect x="558.10" y="448.80" width="1.10" height="0.90" fill="#f55" stroke="none" stroke-width="0.7" /><path d="M562.80 325.40L562.80 369.30" stroke="#666" stroke-width="1.6" opacity=".55"/><path d="M562.80 404.40L562.80 443.40" stroke="#999" stroke-width="1.6" /><text x="562.35" y="369.10" font-size="3.5" fill="#000" opacity=".5" transform="rotate(-90 562.35 369.10)" textLength="33.40" lengthAdjust="spacingAndGlyphs" font-weight="bold" stroke="#000" stroke-width="0.1575" >B2 _RA.HZG.SW01</text><path d="M561.30 336.40L561.30 351.60" stroke="#777" stroke-width="1.6" opacity=".55"/><text x="562.40" y="443.20" font-size="3.2" fill="#000" opacity=".5" transform="rotate(-90 562.40 443.20)" textLength="37.00" lengthAdjust="spacingAndGlyphs" font-weight="bold" stroke="#000" stroke-width="0.144" >Heizen Ventil stetig 0-10V</text><rect x="561.90" y="448.80" width="1.10" height="0.90" fill="#f55" stroke="none" stroke-width="0.7" /><path d="M566.60 325.40L566.60 369.30" stroke="#666" stroke-width="1.6" opacity=".55"/><path d="M566.60 404.40L566.60 443.40" stroke="#999" stroke-width="1.6" /><text x="566.15" y="369.10" font-size="3.5" fill="#000" opacity=".5" transform="rotate(-90 566.15 369.10)" textLength="33.40" lengthAdjust="spacingAndGlyphs" font-weight="bold" stroke="#000" stroke-width="0.1575" >S1 _RA.JAL.BM04</text><path d="M565.10 336.40L565.10 351.60" stroke="#777" stroke-width="1.6" opacity=".55"/><text x="566.20" y="443.20" font-size="3.2" fill="#000" opacity=".5" transform="rotate(-90 566.20 443.20)" textLength="29.16" lengthAdjust="spacingAndGlyphs" font-weight="bold" stroke="#000" stroke-width="0.144" >Präsenzmelder Raum</text><rect x="565.70" y="448.80" width="1.10" height="0.90" fill="#f55" stroke="none" stroke-width="0.7" /><path d="M414.60 320.00H422.00L425.40 323.40" stroke="#e8333a" stroke-width="1.6" fill="none" /><path d="M434.00 320.00H441.40L444.80 323.40" stroke="#e8333a" stroke-width="1.6" fill="none" /><path d="M451.60 320.00H459.00L462.40 323.40" stroke="#e8333a" stroke-width="1.6" fill="none" /><path d="M551.40 320.00H558.80L562.20 323.40" stroke="#e8333a" stroke-width="1.6" fill="none" /><path d="M609.35 325.00L609.35 448.40" stroke="#222" stroke-width="1.6" /><path d="M625.25 325.00L625.25 448.40" stroke="#222" stroke-width="1.6" /><path d="M662.35 325.00L662.35 448.40" stroke="#222" stroke-width="1.6" /><path d="M645.95 325.00L645.95 448.40" stroke="#222" stroke-width="1.6" /><path d="M612.95 325.40L612.95 369.30" stroke="#666" stroke-width="1.6" opacity=".55"/><path d="M612.95 404.40L612.95 443.40" stroke="#999" stroke-width="1.6" /><rect x="610.35" y="355.60" width="2.40" height="3.80" fill="#fff" stroke="#222" stroke-width="1.6" /><text x="612.55" y="443.20" font-size="3.2" fill="#000" opacity=".5" transform="rotate(-90 612.55 443.20)" textLength="27.54" lengthAdjust="spacingAndGlyphs" font-weight="bold" stroke="#000" stroke-width="0.144" >Fensterkontakt RM</text><rect x="612.05" y="448.80" width="1.10" height="0.90" fill="#f55" stroke="none" stroke-width="0.7" /><path d="M616.95 325.40L616.95 369.30" stroke="#666" stroke-width="1.6" opacity=".55"/><path d="M616.95 404.40L616.95 443.40" stroke="#999" stroke-width="1.6" /><text x="616.50" y="369.10" font-size="3.5" fill="#000" opacity=".5" transform="rotate(-90 616.50 369.10)" textLength="33.40" lengthAdjust="spacingAndGlyphs" font-weight="bold" stroke="#000" stroke-width="0.1575" >M1 _RA.VSR.RM05</text><path d="M615.45 336.40L615.45 351.60" stroke="#777" stroke-width="1.6" opacity=".55"/><text x="616.55" y="443.20" font-size="3.2" fill="#000" opacity=".5" transform="rotate(-90 616.55 443.20)" textLength="25.92" lengthAdjust="spacingAndGlyphs" font-weight="bold" stroke="#000" stroke-width="0.144" >Volumenstrom VVS</text><rect x="616.05" y="448.80" width="1.10" height="0.90" fill="#f55" stroke="none" stroke-width="0.7" /><path d="M620.85 325.40L620.85 369.30" stroke="#666" stroke-width="1.6" opacity=".55"/><path d="M620.85 404.40L620.85 443.40" stroke="#999" stroke-width="1.6" /><text x="620.40" y="369.10" font-size="3.5" fill="#000" opacity=".5" transform="rotate(-90 620.40 369.10)" textLength="33.40" lengthAdjust="spacingAndGlyphs" font-weight="bold" stroke="#000" stroke-width="0.1575" >B2 _RA.HZG.SW01</text><path d="M619.35 336.40L619.35 351.60" stroke="#777" stroke-width="1.6" opacity=".55"/><text x="620.45" y="443.20" font-size="3.2" fill="#000" opacity=".5" transform="rotate(-90 620.45 443.20)" textLength="32.40" lengthAdjust="spacingAndGlyphs" font-weight="bold" stroke="#000" stroke-width="0.144" >Licht Stufe 1 Dimmer</text><rect x="619.95" y="448.80" width="1.10" height="0.90" fill="#f55" stroke="none" stroke-width="0.7" /><path d="M624.35 325.40L624.35 369.30" stroke="#666" stroke-width="1.6" opacity=".55"/><path d="M624.35 404.40L624.35 443.40" stroke="#999" stroke-width="1.6" /><text x="623.90" y="369.10" font-size="3.5" fill="#000" opacity=".5" transform="rotate(-90 623.90 369.10)" textLength="33.40" lengthAdjust="spacingAndGlyphs" font-weight="bold" stroke="#000" stroke-width="0.1575" >Y1 _RA.KLT.ST02</text><path d="M622.85 336.40L622.85 351.60" stroke="#777" stroke-width="1.6" opacity=".55"/><text x="623.95" y="443.20" font-size="3.2" fill="#000" opacity=".5" transform="rotate(-90 623.95 443.20)" textLength="27.54" lengthAdjust="spacingAndGlyphs" font-weight="bold" stroke="#000" stroke-width="0.144" >Fensterkontakt RM</text><rect x="623.45" y="448.80" width="1.10" height="0.90" fill="#f55" stroke="none" stroke-width="0.7" /><path d="M628.75 325.40L628.75 369.30" stroke="#666" stroke-width="1.6" opacity=".55"/><path d="M628.75 404.40L628.75 443.40" stroke="#999" stroke-width="1.6" /><rect x="626.15" y="355.60" width="2.40" height="3.80" fill="#fff" stroke="#222" stroke-width="1.6" /><text x="628.35" y="443.20" font-size="3.2" fill="#000" opacity=".5" transform="rotate(-90 628.35 443.20)" textLength="37.00" lengthAdjust="spacingAndGlyphs" font-weight="bold" stroke="#000" stroke-width="0.144" >Heizen Ventil stetig 0-10V</text><rect x="627.85" y="448.80" width="1.10" height="0.90" fill="#f55" stroke="none" stroke-width="0.7" /><path d="M632.55 325.40L632.55 369.30" stroke="#666" stroke-width="1.6" opacity=".55"/><path d="M632.55 404.40L632.55 443.40" stroke="#999" stroke-width="1.6" /><text x="632.10" y="369.10" font-size="3.5" fill="#000" opacity=".5" transform="rotate(-90 632.10 369.10)" textLength="33.40" lengthAdjust="spacingAndGlyphs" font-weight="bold" stroke="#000" stroke-width="0.1575" >B1 _RA.RLT.MW01</text><path d="M631.05 336.40L631.05 351.60" stroke="#777" stroke-width="1.6" opacity=".55"/><text x="632.15" y="443.20" font-size="3.2" fill="#000" opacity=".5" transform="rotate(-90 632.15 443.20)" textLength="29.16" lengthAdjust="spacingAndGlyphs" font-weight="bold" stroke="#000" stroke-width="0.144" >Taupunktwächter SM</text><rect x="631.65" y="448.80" width="1.10" height="0.90" fill="#f55" stroke="none" stroke-width="0.7" /><path d="M636.75 325.40L636.75 369.30" stroke="#666" stroke-width="1.6" opacity=".55"/><path d="M636.75 404.40L636.75 443.40" stroke="#999" stroke-width="1.6" /><text x="636.30" y="369.10" font-size="3.5" fill="#000" opacity=".5" transform="rotate(-90 636.30 369.10)" textLength="33.40" lengthAdjust="spacingAndGlyphs" font-weight="bold" stroke="#000" stroke-width="0.1575" >B2 _RA.HZG.SW01</text><path d="M635.25 336.40L635.25 351.60" stroke="#777" stroke-width="1.6" opacity=".55"/><text x="636.35" y="443.20" font-size="3.2" fill="#000" opacity=".5" transform="rotate(-90 636.35 443.20)" textLength="30.78" lengthAdjust="spacingAndGlyphs" font-weight="bold" stroke="#000" stroke-width="0.144" >Sollwertsteller LON</text><rect x="635.85" y="448.80" width="1.10" height="0.90" fill="#f55" stroke="none" stroke-width="0.7" /><path d="M640.75 325.40L640.75 369.30" stroke="#666" stroke-width="1.6" opacity=".55"/><path d="M640.75 404.40L640.75 443.40" stroke="#999" stroke-width="1.6" /><text x="640.30" y="369.10" font-size="3.5" fill="#000" opacity=".5" transform="rotate(-90 640.30 369.10)" textLength="33.40" lengthAdjust="spacingAndGlyphs" font-weight="bold" stroke="#000" stroke-width="0.1575" >B1 _RA.RLT.MW01</text><path d="M639.25 336.40L639.25 351.60" stroke="#777" stroke-width="1.6" opacity=".55"/><text x="640.35" y="443.20" font-size="3.2" fill="#000" opacity=".5" transform="rotate(-90 640.35 443.20)" textLength="32.40" lengthAdjust="spacingAndGlyphs" font-weight="bold" stroke="#000" stroke-width="0.144" >Kühlen Ventil stetig</text><rect x="639.85" y="448.80" width="1.10" height="0.90" fill="#f55" stroke="none" stroke-width="0.7" /><path d="M644.35 325.40L644.35 369.30" stroke="#666" stroke-width="1.6" opacity=".55"/><path d="M644.35 404.40L644.35 443.40" stroke="#999" stroke-width="1.6" /><text x="643.90" y="369.10" font-size="3.5" fill="#000" opacity=".5" transform="rotate(-90 643.90 369.10)" textLength="33.40" lengthAdjust="spacingAndGlyphs" font-weight="bold" stroke="#000" stroke-width="0.1575" >B1 _RA.RLT.MW01</text><path d="M642.85 336.40L642.85 351.60" stroke="#777" stroke-width="1.6" opacity=".55"/><text x="643.95" y="443.20" font-size="3.2" fill="#000" opacity=".5" transform="rotate(-90 643.95 443.20)" textLength="34.02" lengthAdjust="spacingAndGlyphs" font-weight="bold" stroke="#000" stroke-width="0.144" >Jalousie Auf/Ab Motor</text><rect x="643.45" y="448.80" width="1.10" height="0.90" fill="#f55" stroke="none" stroke-width="0.7" /><path d="M649.95 325.40L649.95 369.30" stroke="#666" stroke-width="1.6" opacity=".55"/><path d="M649.95 404.40L649.95 443.40" stroke="#999" stroke-width="1.6" /><rect x="647.35" y="355.60" width="2.40" height="3.80" fill="#fff" stroke="#222" stroke-width="1.6" /><text x="649.55" y="443.20" font-size="3.2" fill="#000" opacity=".5" transform="rotate(-90 649.55 443.20)" textLength="30.78" lengthAdjust="spacingAndGlyphs" font-weight="bold" stroke="#000" stroke-width="0.144" >Sollwertsteller LON</text><rect x="649.05" y="448.80" width="1.10" height="0.90" fill="#f55" stroke="none" stroke-width="0.7" /><path d="M654.25 325.40L654.25 369.30" stroke="#666" stroke-width="1.6" opacity=".55"/><path d="M654.25 404.40L654.25 443.40" stroke="#999" stroke-width="1.6" /><text x="653.80" y="369.10" font-size="3.5" fill="#000" opacity=".5" transform="rotate(-90 653.80 369.10)" textLength="33.40" lengthAdjust="spacingAndGlyphs" font-weight="bold" stroke="#000" stroke-width="0.1575" >B2 _RA.HZG.SW01</text><path d="M652.75 336.40L652.75 351.60" stroke="#777" stroke-width="1.6" opacity=".55"/><text x="653.85" y="443.20" font-size="3.2" fill="#000" opacity=".5" transform="rotate(-90 653.85 443.20)" textLength="29.16" lengthAdjust="spacingAndGlyphs" font-weight="bold" stroke="#000" stroke-width="0.144" >Präsenzmelder Raum</text><rect x="653.35" y="448.80" width="1.10" height="0.90" fill="#f55" stroke="none" stroke-width="0.7" /><path d="M658.25 325.40L658.25 369.30" stroke="#666" stroke-width="1.6" opacity=".55"/><path d="M658.25 404.40L658.25 443.40" stroke="#999" stroke-width="1.6" /><text x="657.80" y="369.10" font-size="3.5" fill="#000" opacity=".5" transform="rotate(-90 657.80 369.10)" textLength="33.40" lengthAdjust="spacingAndGlyphs" font-weight="bold" stroke="#000" stroke-width="0.1575" >A1 _RA.BEL.SB03</text><path d="M656.75 336.40L656.75 351.60" stroke="#777" stroke-width="1.6" opacity=".55"/><text x="657.85" y="443.20" font-size="3.2" fill="#000" opacity=".5" transform="rotate(-90 657.85 443.20)" textLength="30.78" lengthAdjust="spacingAndGlyphs" font-weight="bold" stroke="#000" stroke-width="0.144" >Temp Raumfühler Ist</text><rect x="657.35" y="448.80" width="1.10" height="0.90" fill="#f55" stroke="none" stroke-width="0.7" /><path d="M661.55 325.40L661.55 369.30" stroke="#666" stroke-width="1.6" opacity=".55"/><path d="M661.55 404.40L661.55 443.40" stroke="#999" stroke-width="1.6" /><text x="661.10" y="369.10" font-size="3.5" fill="#000" opacity=".5" transform="rotate(-90 661.10 369.10)" textLength="33.40" lengthAdjust="spacingAndGlyphs" font-weight="bold" stroke="#000" stroke-width="0.1575" >B1 _RA.RLT.MW01</text><path d="M660.05 336.40L660.05 351.60" stroke="#777" stroke-width="1.6" opacity=".55"/><text x="661.15" y="443.20" font-size="3.2" fill="#000" opacity=".5" transform="rotate(-90 661.15 443.20)" textLength="34.02" lengthAdjust="spacingAndGlyphs" font-weight="bold" stroke="#000" stroke-width="0.144" >Jalousie Auf/Ab Motor</text><rect x="660.65" y="448.80" width="1.10" height="0.90" fill="#f55" stroke="none" stroke-width="0.7" /><path d="M745.25 325.00L745.25 448.40" stroke="#222" stroke-width="1.6" /><path d="M757.55 325.00L757.55 448.40" stroke="#222" stroke-width="1.6" /><path d="M748.75 325.40L748.75 369.30" stroke="#666" stroke-width="1.6" opacity=".55"/><path d="M748.75 404.40L748.75 443.40" stroke="#999" stroke-width="1.6" /><rect x="746.15" y="355.60" width="2.40" height="3.80" fill="#fff" stroke="#222" stroke-width="1.6" /><text x="748.35" y="443.20" font-size="3.2" fill="#000" opacity=".5" transform="rotate(-90 748.35 443.20)" textLength="29.16" lengthAdjust="spacingAndGlyphs" font-weight="bold" stroke="#000" stroke-width="0.144" >Raum Temperatur MW</text><rect x="747.85" y="448.80" width="1.10" height="0.90" fill="#f55" stroke="none" stroke-width="0.7" /><path d="M752.55 325.40L752.55 369.30" stroke="#666" stroke-width="1.6" opacity=".55"/><path d="M752.55 404.40L752.55 443.40" stroke="#999" stroke-width="1.6" /><text x="752.10" y="369.10" font-size="3.5" fill="#000" opacity=".5" transform="rotate(-90 752.10 369.10)" textLength="33.40" lengthAdjust="spacingAndGlyphs" font-weight="bold" stroke="#000" stroke-width="0.1575" >B1 _RA.RLT.MW01</text><path d="M751.05 336.40L751.05 351.60" stroke="#777" stroke-width="1.6" opacity=".55"/><text x="752.15" y="443.20" font-size="3.2" fill="#000" opacity=".5" transform="rotate(-90 752.15 443.20)" textLength="29.16" lengthAdjust="spacingAndGlyphs" font-weight="bold" stroke="#000" stroke-width="0.144" >Präsenzmelder Raum</text><rect x="751.65" y="448.80" width="1.10" height="0.90" fill="#f55" stroke="none" stroke-width="0.7" /><path d="M756.35 325.40L756.35 369.30" stroke="#666" stroke-width="1.6" opacity=".55"/><path d="M756.35 404.40L756.35 443.40" stroke="#999" stroke-width="1.6" /><text x="755.90" y="369.10" font-size="3.5" fill="#000" opacity=".5" transform="rotate(-90 755.90 369.10)" textLength="33.40" lengthAdjust="spacingAndGlyphs" font-weight="bold" stroke="#000" stroke-width="0.1575" >B2 _RA.HZG.SW01</text><path d="M754.85 336.40L754.85 351.60" stroke="#777" stroke-width="1.6" opacity=".55"/><text x="755.95" y="443.20" font-size="3.2" fill="#000" opacity=".5" transform="rotate(-90 755.95 443.20)" textLength="37.00" lengthAdjust="spacingAndGlyphs" font-weight="bold" stroke="#000" stroke-width="0.144" >Heizen Ventil stetig 0-10V</text><rect x="755.45" y="448.80" width="1.10" height="0.90" fill="#f55" stroke="none" stroke-width="0.7" /><path d="M604.35 320.00H611.75L615.15 323.40" stroke="#e8333a" stroke-width="1.6" fill="none" /><path d="M623.75 320.00H631.15L634.55 323.40" stroke="#e8333a" stroke-width="1.6" fill="none" /><path d="M641.35 320.00H648.75L652.15 323.40" stroke="#e8333a" stroke-width="1.6" fill="none" /><path d="M741.15 320.00H748.55L751.95 323.40" stroke="#e8333a" stroke-width="1.6" fill="none" /><path d="M765.50 325.00L765.50 448.40" stroke="#222" stroke-width="1.6" /><path d="M784.60 325.00L784.60 448.40" stroke="#222" stroke-width="1.6" /><path d="M768.40 325.40L768.40 369.30" stroke="#666" stroke-width="1.6" opacity=".55"/><path d="M768.40 404.40L768.40 443.40" stroke="#999" stroke-width="1.6" /><rect x="765.80" y="355.60" width="2.40" height="3.80" fill="#fff" stroke="#222" stroke-width="1.6" /><text x="768.00" y="443.20" font-size="3.2" fill="#000" opacity=".5" transform="rotate(-90 768.00 443.20)" textLength="29.16" lengthAdjust="spacingAndGlyphs" font-weight="bold" stroke="#000" stroke-width="0.144" >Taupunktwächter SM</text><rect x="767.50" y="448.80" width="1.10" height="0.90" fill="#f55" stroke="none" stroke-width="0.7" /><path d="M772.40 325.40L772.40 369.30" stroke="#666" stroke-width="1.6" opacity=".55"/><path d="M772.40 404.40L772.40 443.40" stroke="#999" stroke-width="1.6" /><text x="771.95" y="369.10" font-size="3.5" fill="#000" opacity=".5" transform="rotate(-90 771.95 369.10)" textLength="33.40" lengthAdjust="spacingAndGlyphs" font-weight="bold" stroke="#000" stroke-width="0.1575" >M1 _RA.VSR.RM05</text><path d="M770.90 336.40L770.90 351.60" stroke="#777" stroke-width="1.6" opacity=".55"/><text x="772.00" y="443.20" font-size="3.2" fill="#000" opacity=".5" transform="rotate(-90 772.00 443.20)" textLength="34.02" lengthAdjust="spacingAndGlyphs" font-weight="bold" stroke="#000" stroke-width="0.144" >Jalousie Auf/Ab Motor</text><rect x="771.50" y="448.80" width="1.10" height="0.90" fill="#f55" stroke="none" stroke-width="0.7" /><path d="M776.40 325.40L776.40 369.30" stroke="#666" stroke-width="1.6" opacity=".55"/><path d="M776.40 404.40L776.40 443.40" stroke="#999" stroke-width="1.6" /><text x="775.95" y="369.10" font-size="3.5" fill="#000" opacity=".5" transform="rotate(-90 775.95 369.10)" textLength="33.40" lengthAdjust="spacingAndGlyphs" font-weight="bold" stroke="#000" stroke-width="0.1575" >A1 _RA.BEL.SB03</text><path d="M774.90 336.40L774.90 351.60" stroke="#777" stroke-width="1.6" opacity=".55"/><text x="776.00" y="443.20" font-size="3.2" fill="#000" opacity=".5" transform="rotate(-90 776.00 443.20)" textLength="32.40" lengthAdjust="spacingAndGlyphs" font-weight="bold" stroke="#000" stroke-width="0.144" >Kühlen Ventil stetig</text><rect x="775.50" y="448.80" width="1.10" height="0.90" fill="#f55" stroke="none" stroke-width="0.7" /><path d="M780.40 325.40L780.40 369.30" stroke="#666" stroke-width="1.6" opacity=".55"/><path d="M780.40 404.40L780.40 443.40" stroke="#999" stroke-width="1.6" /><text x="779.95" y="369.10" font-size="3.5" fill="#000" opacity=".5" transform="rotate(-90 779.95 369.10)" textLength="33.40" lengthAdjust="spacingAndGlyphs" font-weight="bold" stroke="#000" stroke-width="0.1575" >B2 _RA.HZG.SW01</text><path d="M778.90 336.40L778.90 351.60" stroke="#777" stroke-width="1.6" opacity=".55"/><text x="780.00" y="443.20" font-size="3.2" fill="#000" opacity=".5" transform="rotate(-90 780.00 443.20)" textLength="30.78" lengthAdjust="spacingAndGlyphs" font-weight="bold" stroke="#000" stroke-width="0.144" >Sollwertsteller LON</text><rect x="779.50" y="448.80" width="1.10" height="0.90" fill="#f55" stroke="none" stroke-width="0.7" /><path d="M783.40 325.40L783.40 369.30" stroke="#666" stroke-width="1.6" opacity=".55"/><path d="M783.40 404.40L783.40 443.40" stroke="#999" stroke-width="1.6" /><text x="782.95" y="369.10" font-size="3.5" fill="#000" opacity=".5" transform="rotate(-90 782.95 369.10)" textLength="33.40" lengthAdjust="spacingAndGlyphs" font-weight="bold" stroke="#000" stroke-width="0.1575" >A1 _RA.BEL.SB03</text><path d="M781.90 336.40L781.90 351.60" stroke="#777" stroke-width="1.6" opacity=".55"/><text x="783.00" y="443.20" font-size="3.2" fill="#000" opacity=".5" transform="rotate(-90 783.00 443.20)" textLength="32.40" lengthAdjust="spacingAndGlyphs" font-weight="bold" stroke="#000" stroke-width="0.144" >Kühlen Ventil stetig</text><rect x="782.50" y="448.80" width="1.10" height="0.90" fill="#f55" stroke="none" stroke-width="0.7" /><path d="M763.40 320.00H770.80L774.20 323.40" stroke="#e8333a" stroke-width="1.6" fill="none" /><rect x="87.00" y="448.60" width="3.00" height="8.60" fill="#fff" stroke="#333" stroke-width="1.6" rx="1.4"/><rect x="90.80" y="448.60" width="3.00" height="8.60" fill="#fff" stroke="#333" stroke-width="1.6" rx="1.4"/><rect x="94.80" y="448.60" width="3.00" height="8.60" fill="#fff" stroke="#333" stroke-width="1.6" rx="1.4"/><rect x="767.20" y="448.60" width="3.00" height="8.60" fill="#fff" stroke="#333" stroke-width="1.6" rx="1.4"/><rect x="771.20" y="448.60" width="3.00" height="8.60" fill="#fff" stroke="#333" stroke-width="1.6" rx="1.4"/><rect x="775.20" y="448.60" width="3.00" height="8.60" fill="#fff" stroke="#333" stroke-width="1.6" rx="1.4"/><rect x="90.60" y="495.60" width="44.20" height="26.35" fill="#f5f5f5" stroke="#555" stroke-width="1.6" /><rect x="90.60" y="495.60" width="44.20" height="4.20" fill="#b2b2b2" stroke="#555" stroke-width="1.6" /><path d="M91.60 501.40l2.4 1.3l-2.4 1.3z" stroke="none" stroke-width="0" fill="#111" /><rect x="89.90" y="502.20" width="1.00" height="1.00" fill="#f66" stroke="none" stroke-width="0.7" /><path d="M91.60 505.55l2.4 1.3l-2.4 1.3z" stroke="none" stroke-width="0" fill="#111" /><rect x="89.90" y="506.35" width="1.00" height="1.00" fill="#f66" stroke="none" stroke-width="0.7" /><path d="M91.60 509.70l2.4 1.3l-2.4 1.3z" stroke="none" stroke-width="0" fill="#111" /><rect x="89.90" y="510.50" width="1.00" height="1.00" fill="#f66" stroke="none" stroke-width="0.7" /><path d="M91.60 513.85l2.4 1.3l-2.4 1.3z" stroke="none" stroke-width="0" fill="#111" /><rect x="89.90" y="514.65" width="1.00" height="1.00" fill="#f66" stroke="none" stroke-width="0.7" /><path d="M91.60 518.00l2.4 1.3l-2.4 1.3z" stroke="none" stroke-width="0" fill="#111" /><rect x="89.90" y="518.80" width="1.00" height="1.00" fill="#f66" stroke="none" stroke-width="0.7" /><path d="M131.20 501.40l2.4 1.3l-2.4 1.3z" stroke="none" stroke-width="0" fill="#111" /><rect x="90.60" y="521.95" width="44.20" height="22.20" fill="#f5f5f5" stroke="#555" stroke-width="1.6" /><rect x="90.60" y="521.95" width="44.20" height="4.20" fill="#b2b2b2" stroke="#555" stroke-width="1.6" /><path d="M91.60 527.75l2.4 1.3l-2.4 1.3z" stroke="none" stroke-width="0" fill="#111" /><rect x="89.90" y="528.55" width="1.00" height="1.00" fill="#f66" stroke="none" stroke-width="0.7" /><path d="M91.60 531.90l2.4 1.3l-2.4 1.3z" stroke="none" stroke-width="0" fill="#111" /><rect x="89.90" y="532.70" width="1.00" height="1.00" fill="#f66" stroke="none" stroke-width="0.7" /><path d="M91.60 536.05l2.4 1.3l-2.4 1.3z" stroke="none" stroke-width="0" fill="#111" /><rect x="89.90" y="536.85" width="1.00" height="1.00" fill="#f66" stroke="none" stroke-width="0.7" /><path d="M91.60 540.20l2.4 1.3l-2.4 1.3z" stroke="none" stroke-width="0" fill="#111" /><rect x="89.90" y="541.00" width="1.00" height="1.00" fill="#f66" stroke="none" stroke-width="0.7" /><path d="M131.20 527.75l2.4 1.3l-2.4 1.3z" stroke="none" stroke-width="0" fill="#111" /><rect x="90.60" y="544.15" width="44.20" height="18.05" fill="#f5f5f5" stroke="#555" stroke-width="1.6" /><rect x="90.60" y="544.15" width="44.20" height="4.20" fill="#b2b2b2" stroke="#555" stroke-width="1.6" /><path d="M91.60 549.95l2.4 1.3l-2.4 1.3z" stroke="none" stroke-width="0" fill="#111" /><rect x="89.90" y="550.75" width="1.00" height="1.00" fill="#f66" stroke="none" stroke-width="0.7" /><path d="M91.60 554.10l2.4 1.3l-2.4 1.3z" stroke="none" stroke-width="0" fill="#111" /><rect x="89.90" y="554.90" width="1.00" height="1.00" fill="#f66" stroke="none" stroke-width="0.7" /><path d="M91.60 558.25l2.4 1.3l-2.4 1.3z" stroke="none" stroke-width="0" fill="#111" /><rect x="89.90" y="559.05" width="1.00" height="1.00" fill="#f66" stroke="none" stroke-width="0.7" /><path d="M131.20 549.95l2.4 1.3l-2.4 1.3z" stroke="none" stroke-width="0" fill="#111" /><rect x="73.60" y="531.80" width="8.40" height="3.60" fill="#fff" stroke="#1a1a1a" stroke-width="1.6" rx=".8"/><rect x="82.40" y="531.80" width="8.00" height="3.60" fill="#fff" stroke="#1a1a1a" stroke-width="1.6" rx=".8"/><rect x="73.60" y="536.00" width="8.40" height="3.60" fill="#fff" stroke="#1a1a1a" stroke-width="1.6" rx=".8"/><rect x="82.40" y="536.00" width="8.00" height="3.60" fill="#fff" stroke="#1a1a1a" stroke-width="1.6" rx=".8"/><path d="M134.8 502.8H137.4V552H139" stroke="#4a4a4a" stroke-width="1.6" fill="none" /><path d="M134.8 529H137.4" stroke="#4a4a4a" stroke-width="1.6" fill="none" /><rect x="136.90" y="502.30" width="1.00" height="1.00" fill="#3b3" stroke="none" stroke-width="0.7" /><rect x="136.90" y="528.50" width="1.00" height="1.00" fill="#3b3" stroke="none" stroke-width="0.7" /><path d="M138.8 550.2h7l1.6 1.8l-1.6 1.8h-7z" stroke="#4a4a4a" stroke-width="1.6" fill="#fff" /><rect x="202.60" y="478.00" width="44.20" height="9.75" fill="#f5f5f5" stroke="#555" stroke-width="1.6" /><rect x="202.60" y="478.00" width="44.20" height="4.20" fill="#b2b2b2" stroke="#555" stroke-width="1.6" /><path d="M203.60 483.80l2.4 1.3l-2.4 1.3z" stroke="none" stroke-width="0" fill="#111" /><rect x="201.90" y="484.60" width="1.00" height="1.00" fill="#f66" stroke="none" stroke-width="0.7" /><path d="M243.20 483.80l2.4 1.3l-2.4 1.3z" stroke="none" stroke-width="0" fill="#111" /><rect x="202.60" y="487.75" width="44.20" height="18.05" fill="#f5f5f5" stroke="#555" stroke-width="1.6" /><rect x="202.60" y="487.75" width="44.20" height="4.20" fill="#b2b2b2" stroke="#555" stroke-width="1.6" /><path d="M203.60 493.55l2.4 1.3l-2.4 1.3z" stroke="none" stroke-width="0" fill="#111" /><rect x="201.90" y="494.35" width="1.00" height="1.00" fill="#f66" stroke="none" stroke-width="0.7" /><path d="M203.60 497.70l2.4 1.3l-2.4 1.3z" stroke="none" stroke-width="0" fill="#111" /><rect x="201.90" y="498.50" width="1.00" height="1.00" fill="#f66" stroke="none" stroke-width="0.7" /><path d="M203.60 501.85l2.4 1.3l-2.4 1.3z" stroke="none" stroke-width="0" fill="#111" /><rect x="201.90" y="502.65" width="1.00" height="1.00" fill="#f66" stroke="none" stroke-width="0.7" /><path d="M243.20 493.55l2.4 1.3l-2.4 1.3z" stroke="none" stroke-width="0" fill="#111" /><rect x="192.80" y="498.60" width="9.60" height="3.60" fill="#fff" stroke="#1a1a1a" stroke-width="1.6" rx=".8"/><path d="M213.30 448.6V462H349.40V534.2H340.60" stroke="#4a4a4a" stroke-width="1.6" fill="none" /><path d="M217.20 448.6V462" stroke="#4a4a4a" stroke-width="1.6" fill="none" /><path d="M237.00 448.6V459.4H251.40V496.4H246.80" stroke="#4a4a4a" stroke-width="1.6" fill="none" /><path d="M246.80 485.2H251.40" stroke="#4a4a4a" stroke-width="1.6" fill="none" /><path d="M349.40 448.6V462" stroke="#4a4a4a" stroke-width="1.6" fill="none" /><rect x="212.80" y="461.50" width="1.00" height="1.00" fill="#3b3" stroke="none" stroke-width="0.7" /><rect x="216.70" y="461.50" width="1.00" height="1.00" fill="#3b3" stroke="none" stroke-width="0.7" /><rect x="236.50" y="458.90" width="1.00" height="1.00" fill="#3b3" stroke="none" stroke-width="0.7" /><rect x="250.90" y="458.90" width="1.00" height="1.00" fill="#3b3" stroke="none" stroke-width="0.7" /><rect x="348.90" y="461.50" width="1.00" height="1.00" fill="#3b3" stroke="none" stroke-width="0.7" /><rect x="250.90" y="484.70" width="1.00" height="1.00" fill="#3b3" stroke="none" stroke-width="0.7" /><rect x="250.90" y="495.90" width="1.00" height="1.00" fill="#3b3" stroke="none" stroke-width="0.7" /><rect x="296.60" y="526.30" width="43.60" height="26.35" fill="#f5f5f5" stroke="#555" stroke-width="1.6" /><rect x="296.60" y="526.30" width="43.60" height="4.20" fill="#b2b2b2" stroke="#555" stroke-width="1.6" /><path d="M297.60 532.10l2.4 1.3l-2.4 1.3z" stroke="none" stroke-width="0" fill="#111" /><rect x="295.90" y="532.90" width="1.00" height="1.00" fill="#f66" stroke="none" stroke-width="0.7" /><path d="M297.60 536.25l2.4 1.3l-2.4 1.3z" stroke="none" stroke-width="0" fill="#111" /><rect x="295.90" y="537.05" width="1.00" height="1.00" fill="#f66" stroke="none" stroke-width="0.7" /><path d="M297.60 540.40l2.4 1.3l-2.4 1.3z" stroke="none" stroke-width="0" fill="#111" /><rect x="295.90" y="541.20" width="1.00" height="1.00" fill="#f66" stroke="none" stroke-width="0.7" /><path d="M297.60 544.55l2.4 1.3l-2.4 1.3z" stroke="none" stroke-width="0" fill="#111" /><rect x="295.90" y="545.35" width="1.00" height="1.00" fill="#f66" stroke="none" stroke-width="0.7" /><path d="M297.60 548.70l2.4 1.3l-2.4 1.3z" stroke="none" stroke-width="0" fill="#111" /><rect x="295.90" y="549.50" width="1.00" height="1.00" fill="#f66" stroke="none" stroke-width="0.7" /><path d="M336.60 532.10l2.4 1.3l-2.4 1.3z" stroke="none" stroke-width="0" fill="#111" /><path d="M336.60 536.25l2.4 1.3l-2.4 1.3z" stroke="none" stroke-width="0" fill="#111" /><rect x="287.00" y="539.80" width="9.40" height="3.60" fill="#fff" stroke="#1a1a1a" stroke-width="1.6" rx=".8"/><rect x="418.60" y="478.00" width="44.20" height="9.75" fill="#f5f5f5" stroke="#555" stroke-width="1.6" /><rect x="418.60" y="478.00" width="44.20" height="4.20" fill="#b2b2b2" stroke="#555" stroke-width="1.6" /><path d="M419.60 483.80l2.4 1.3l-2.4 1.3z" stroke="none" stroke-width="0" fill="#111" /><rect x="417.90" y="484.60" width="1.00" height="1.00" fill="#f66" stroke="none" stroke-width="0.7" /><path d="M459.20 483.80l2.4 1.3l-2.4 1.3z" stroke="none" stroke-width="0" fill="#111" /><rect x="418.60" y="487.75" width="44.20" height="18.05" fill="#f5f5f5" stroke="#555" stroke-width="1.6" /><rect x="418.60" y="487.75" width="44.20" height="4.20" fill="#b2b2b2" stroke="#555" stroke-width="1.6" /><path d="M419.60 493.55l2.4 1.3l-2.4 1.3z" stroke="none" stroke-width="0" fill="#111" /><rect x="417.90" y="494.35" width="1.00" height="1.00" fill="#f66" stroke="none" stroke-width="0.7" /><path d="M419.60 497.70l2.4 1.3l-2.4 1.3z" stroke="none" stroke-width="0" fill="#111" /><rect x="417.90" y="498.50" width="1.00" height="1.00" fill="#f66" stroke="none" stroke-width="0.7" /><path d="M419.60 501.85l2.4 1.3l-2.4 1.3z" stroke="none" stroke-width="0" fill="#111" /><rect x="417.90" y="502.65" width="1.00" height="1.00" fill="#f66" stroke="none" stroke-width="0.7" /><path d="M459.20 493.55l2.4 1.3l-2.4 1.3z" stroke="none" stroke-width="0" fill="#111" /><rect x="399.00" y="498.60" width="9.00" height="3.60" fill="#fff" stroke="#1a1a1a" stroke-width="1.6" rx=".8"/><rect x="408.60" y="498.60" width="9.40" height="3.60" fill="#fff" stroke="#1a1a1a" stroke-width="1.6" rx=".8"/><path d="M429.30 448.6V462H565.40V534.2H556.60" stroke="#4a4a4a" stroke-width="1.6" fill="none" /><path d="M433.20 448.6V462" stroke="#4a4a4a" stroke-width="1.6" fill="none" /><path d="M453.00 448.6V459.4H467.40V496.4H462.80" stroke="#4a4a4a" stroke-width="1.6" fill="none" /><path d="M462.80 485.2H467.40" stroke="#4a4a4a" stroke-width="1.6" fill="none" /><path d="M565.40 448.6V462" stroke="#4a4a4a" stroke-width="1.6" fill="none" /><rect x="428.80" y="461.50" width="1.00" height="1.00" fill="#3b3" stroke="none" stroke-width="0.7" /><rect x="432.70" y="461.50" width="1.00" height="1.00" fill="#3b3" stroke="none" stroke-width="0.7" /><rect x="452.50" y="458.90" width="1.00" height="1.00" fill="#3b3" stroke="none" stroke-width="0.7" /><rect x="466.90" y="458.90" width="1.00" height="1.00" fill="#3b3" stroke="none" stroke-width="0.7" /><rect x="564.90" y="461.50" width="1.00" height="1.00" fill="#3b3" stroke="none" stroke-width="0.7" /><rect x="466.90" y="484.70" width="1.00" height="1.00" fill="#3b3" stroke="none" stroke-width="0.7" /><rect x="466.90" y="495.90" width="1.00" height="1.00" fill="#3b3" stroke="none" stroke-width="0.7" /><rect x="512.60" y="526.30" width="43.60" height="26.35" fill="#f5f5f5" stroke="#555" stroke-width="1.6" /><rect x="512.60" y="526.30" width="43.60" height="4.20" fill="#b2b2b2" stroke="#555" stroke-width="1.6" /><path d="M513.60 532.10l2.4 1.3l-2.4 1.3z" stroke="none" stroke-width="0" fill="#111" /><rect x="511.90" y="532.90" width="1.00" height="1.00" fill="#f66" stroke="none" stroke-width="0.7" /><path d="M513.60 536.25l2.4 1.3l-2.4 1.3z" stroke="none" stroke-width="0" fill="#111" /><rect x="511.90" y="537.05" width="1.00" height="1.00" fill="#f66" stroke="none" stroke-width="0.7" /><path d="M513.60 540.40l2.4 1.3l-2.4 1.3z" stroke="none" stroke-width="0" fill="#111" /><rect x="511.90" y="541.20" width="1.00" height="1.00" fill="#f66" stroke="none" stroke-width="0.7" /><path d="M513.60 544.55l2.4 1.3l-2.4 1.3z" stroke="none" stroke-width="0" fill="#111" /><rect x="511.90" y="545.35" width="1.00" height="1.00" fill="#f66" stroke="none" stroke-width="0.7" /><path d="M513.60 548.70l2.4 1.3l-2.4 1.3z" stroke="none" stroke-width="0" fill="#111" /><rect x="511.90" y="549.50" width="1.00" height="1.00" fill="#f66" stroke="none" stroke-width="0.7" /><path d="M552.60 532.10l2.4 1.3l-2.4 1.3z" stroke="none" stroke-width="0" fill="#111" /><path d="M552.60 536.25l2.4 1.3l-2.4 1.3z" stroke="none" stroke-width="0" fill="#111" /><rect x="503.00" y="539.80" width="9.40" height="3.60" fill="#fff" stroke="#1a1a1a" stroke-width="1.6" rx=".8"/><rect x="494.00" y="539.80" width="8.60" height="3.60" fill="#fff" stroke="#1a1a1a" stroke-width="1.6" rx=".8"/><rect x="608.35" y="478.00" width="44.20" height="9.75" fill="#f5f5f5" stroke="#555" stroke-width="1.6" /><rect x="608.35" y="478.00" width="44.20" height="4.20" fill="#b2b2b2" stroke="#555" stroke-width="1.6" /><path d="M609.35 483.80l2.4 1.3l-2.4 1.3z" stroke="none" stroke-width="0" fill="#111" /><rect x="607.65" y="484.60" width="1.00" height="1.00" fill="#f66" stroke="none" stroke-width="0.7" /><path d="M648.95 483.80l2.4 1.3l-2.4 1.3z" stroke="none" stroke-width="0" fill="#111" /><rect x="608.35" y="487.75" width="44.20" height="18.05" fill="#f5f5f5" stroke="#555" stroke-width="1.6" /><rect x="608.35" y="487.75" width="44.20" height="4.20" fill="#b2b2b2" stroke="#555" stroke-width="1.6" /><path d="M609.35 493.55l2.4 1.3l-2.4 1.3z" stroke="none" stroke-width="0" fill="#111" /><rect x="607.65" y="494.35" width="1.00" height="1.00" fill="#f66" stroke="none" stroke-width="0.7" /><path d="M609.35 497.70l2.4 1.3l-2.4 1.3z" stroke="none" stroke-width="0" fill="#111" /><rect x="607.65" y="498.50" width="1.00" height="1.00" fill="#f66" stroke="none" stroke-width="0.7" /><path d="M609.35 501.85l2.4 1.3l-2.4 1.3z" stroke="none" stroke-width="0" fill="#111" /><rect x="607.65" y="502.65" width="1.00" height="1.00" fill="#f66" stroke="none" stroke-width="0.7" /><path d="M648.95 493.55l2.4 1.3l-2.4 1.3z" stroke="none" stroke-width="0" fill="#111" /><rect x="598.55" y="498.60" width="9.60" height="3.60" fill="#fff" stroke="#1a1a1a" stroke-width="1.6" rx=".8"/><path d="M619.05 448.6V462H755.15V534.2H746.35" stroke="#4a4a4a" stroke-width="1.6" fill="none" /><path d="M622.95 448.6V462" stroke="#4a4a4a" stroke-width="1.6" fill="none" /><path d="M642.75 448.6V459.4H657.15V496.4H652.55" stroke="#4a4a4a" stroke-width="1.6" fill="none" /><path d="M652.55 485.2H657.15" stroke="#4a4a4a" stroke-width="1.6" fill="none" /><path d="M755.15 448.6V462" stroke="#4a4a4a" stroke-width="1.6" fill="none" /><rect x="618.55" y="461.50" width="1.00" height="1.00" fill="#3b3" stroke="none" stroke-width="0.7" /><rect x="622.45" y="461.50" width="1.00" height="1.00" fill="#3b3" stroke="none" stroke-width="0.7" /><rect x="642.25" y="458.90" width="1.00" height="1.00" fill="#3b3" stroke="none" stroke-width="0.7" /><rect x="656.65" y="458.90" width="1.00" height="1.00" fill="#3b3" stroke="none" stroke-width="0.7" /><rect x="754.65" y="461.50" width="1.00" height="1.00" fill="#3b3" stroke="none" stroke-width="0.7" /><rect x="656.65" y="484.70" width="1.00" height="1.00" fill="#3b3" stroke="none" stroke-width="0.7" /><rect x="656.65" y="495.90" width="1.00" height="1.00" fill="#3b3" stroke="none" stroke-width="0.7" /><rect x="702.35" y="526.30" width="43.60" height="26.35" fill="#f5f5f5" stroke="#555" stroke-width="1.6" /><rect x="702.35" y="526.30" width="43.60" height="4.20" fill="#b2b2b2" stroke="#555" stroke-width="1.6" /><path d="M703.35 532.10l2.4 1.3l-2.4 1.3z" stroke="none" stroke-width="0" fill="#111" /><rect x="701.65" y="532.90" width="1.00" height="1.00" fill="#f66" stroke="none" stroke-width="0.7" /><path d="M703.35 536.25l2.4 1.3l-2.4 1.3z" stroke="none" stroke-width="0" fill="#111" /><rect x="701.65" y="537.05" width="1.00" height="1.00" fill="#f66" stroke="none" stroke-width="0.7" /><path d="M703.35 540.40l2.4 1.3l-2.4 1.3z" stroke="none" stroke-width="0" fill="#111" /><rect x="701.65" y="541.20" width="1.00" height="1.00" fill="#f66" stroke="none" stroke-width="0.7" /><path d="M703.35 544.55l2.4 1.3l-2.4 1.3z" stroke="none" stroke-width="0" fill="#111" /><rect x="701.65" y="545.35" width="1.00" height="1.00" fill="#f66" stroke="none" stroke-width="0.7" /><path d="M703.35 548.70l2.4 1.3l-2.4 1.3z" stroke="none" stroke-width="0" fill="#111" /><rect x="701.65" y="549.50" width="1.00" height="1.00" fill="#f66" stroke="none" stroke-width="0.7" /><path d="M742.35 532.10l2.4 1.3l-2.4 1.3z" stroke="none" stroke-width="0" fill="#111" /><path d="M742.35 536.25l2.4 1.3l-2.4 1.3z" stroke="none" stroke-width="0" fill="#111" /><rect x="692.75" y="539.80" width="9.40" height="3.60" fill="#fff" stroke="#1a1a1a" stroke-width="1.6" rx=".8"/><path d="M55.50 564.70L800.00 564.70" stroke="#3a3a3a" stroke-width="1.6" /><path d="M73.80 564.70L73.80 584.80" stroke="#3a3a3a" stroke-width="1.6" /><path d="M100.00 564.70L100.00 584.80" stroke="#3a3a3a" stroke-width="1.6" /><path d="M113.50 564.70L113.50 584.80" stroke="#3a3a3a" stroke-width="1.6" /><path d="M123.70 564.70L123.70 584.80" stroke="#3a3a3a" stroke-width="1.6" /><path d="M136.00 564.70L136.00 584.80" stroke="#3a3a3a" stroke-width="1.6" /><path d="M166.80 564.70L166.80 584.80" stroke="#3a3a3a" stroke-width="1.6" /><path d="M268.60 564.70L268.60 584.80" stroke="#3a3a3a" stroke-width="1.6" /><path d="M324.90 564.70L324.90 584.80" stroke="#3a3a3a" stroke-width="1.6" /><path d="M458.50 564.70L458.50 584.80" stroke="#3a3a3a" stroke-width="1.6" /><path d="M614.40 564.70L614.40 584.80" stroke="#3a3a3a" stroke-width="1.6" /><path d="M701.60 564.70L701.60 584.80" stroke="#3a3a3a" stroke-width="1.6" /><path d="M55.50 569.70L166.80 569.70" stroke="#3a3a3a" stroke-width="1.6" /><path d="M55.50 574.50L166.80 574.50" stroke="#3a3a3a" stroke-width="1.6" /><path d="M55.50 579.50L166.80 579.50" stroke="#3a3a3a" stroke-width="1.6" /><path d="M268.60 569.70L324.90 569.70" stroke="#3a3a3a" stroke-width="1.6" /><path d="M458.50 569.70L800.00 569.70" stroke="#3a3a3a" stroke-width="1.6" /><path d="M614.40 574.40L800.00 574.40" stroke="#3a3a3a" stroke-width="1.6" /><path d="M614.40 579.20L701.60 579.20" stroke="#3a3a3a" stroke-width="1.6" /><path d="M766.50 579.20L800.00 579.20" stroke="#3a3a3a" stroke-width="1.6" /><path d="M766.50 574.40L766.50 584.80" stroke="#3a3a3a" stroke-width="1.6" /><path d="M168.6 575.6h10.4l3-1.2h5.4v4.6h-5l-3-1.6h-10.8z" stroke="none" stroke-width="0" fill="#f1c31a" /><text x="353.20" y="569.30" font-size="4.6" fill="#6a6a6a" textLength="13.00" lengthAdjust="spacingAndGlyphs" >WS</text><text x="366.40" y="578.90" font-size="18" fill="url(#gcad)" textLength="52.00" lengthAdjust="spacingAndGlyphs" font-weight="bold" stroke="none" stroke-width="0.81" >CAD</text><path d="M355 569.8H413.8V574H362Z" stroke="none" stroke-width="0" fill="#f5d860" /></g></svg>
<div class="b" style="left:0px;top:606px;width:1024px;height:34px;background:#2f3b47;"></div>
<div class="b" style="left:0px;top:606px;width:2.3px;height:34px;background:#1c2836;"></div>
<div class="b" style="left:0px;top:638px;width:1024px;height:2px;background:#17232f;"></div>
<div class="b" style="left:7.5px;top:607px;width:390px;height:18.5px;background:#2b3742;border:1px solid #273039;box-sizing:border-box;"></div>
<div class="b" style="left:398.5px;top:607px;width:106.5px;height:18.5px;background:#2b3742;border:1px solid #273039;box-sizing:border-box;"></div>
<div class="b" style="left:505.5px;top:607px;width:184px;height:18.5px;background:#2b3742;border:1px solid #273039;box-sizing:border-box;"></div>
<div class="b" style="left:403.5px;top:608.2px;width:15.5px;height:16px;background:#1c2836;"></div>
<svg class="b" style="left:0px;top:606px" width="700" height="20" viewBox="0 606 700 20"><rect x="9.60" y="612.00" width="1.1" height="1.1" fill="#4c5863"/><rect x="9.60" y="615.30" width="1.1" height="1.1" fill="#4c5863"/><rect x="9.60" y="618.60" width="1.1" height="1.1" fill="#4c5863"/><rect x="399.80" y="612.00" width="1.1" height="1.1" fill="#4c5863"/><rect x="399.80" y="615.30" width="1.1" height="1.1" fill="#4c5863"/><rect x="399.80" y="618.60" width="1.1" height="1.1" fill="#4c5863"/><rect x="507.30" y="612.00" width="1.1" height="1.1" fill="#4c5863"/><rect x="507.30" y="615.30" width="1.1" height="1.1" fill="#4c5863"/><rect x="507.30" y="618.60" width="1.1" height="1.1" fill="#4c5863"/><rect x="17.3" y="612" width="3" height="8" fill="none" stroke="#d6dade" stroke-width=".9"/><rect x="22.3" y="612" width="3" height="8" fill="none" stroke="#d6dade" stroke-width=".9"/><path d="M18.8 613v6M23.8 613v6" stroke="#d6dade" stroke-width=".7" stroke-dasharray="1 1"/><path d="M34.8 619.4h8.4M35 619.2l6.4-5.6" stroke="#d6dade" stroke-width=".9" fill="none"/><path d="M39.6 619a2.6 2.6 0 0 0-1.4-2.6" stroke="#d6dade" stroke-width=".6" fill="none"/><path d="M55.5 612.4v8" stroke="#d6dade" stroke-width="1"/><circle cx="55.5" cy="611.6" r="1" fill="none" stroke="#d6dade" stroke-width=".7"/><circle cx="55.5" cy="621" r="1" fill="none" stroke="#d6dade" stroke-width=".7"/><path d="M65.5 609.5v13.5M202 609.5v13.5M336.5 609.5v13.5" stroke="#45515c" stroke-width=".7"/><rect x="69.3" y="612.6" width="8.4" height="5.8" fill="none" stroke="#d6dade" stroke-width=".9"/><path d="M71 612.6v5.8M69.3 614.2h8.4" stroke="#d6dade" stroke-width=".6"/><path d="M74.60 618.60l1.4 1.6 3-3.4" stroke="#38b838" stroke-width="1.1" fill="none"/><path d="M82.70 619.30h2.6l-1.3 1.9z" fill="#d0d4d8"/><rect x="93.6" y="612.6" width="5.6" height="6" fill="none" stroke="#d6dade" stroke-width=".9"/><path d="M96.4 610.2v2.4M96.4 618.6v2.6" stroke="#d6dade" stroke-width=".8"/><path d="M98.00 618.60l1.4 1.6 3-3.4" stroke="#38b838" stroke-width="1.1" fill="none"/><path d="M105.20 619.30h2.6l-1.3 1.9z" fill="#d0d4d8"/><path d="M115 618.6l8-6.2" stroke="#d6dade" stroke-width=".8"/><path d="M118 615l2.6 1.4.8-2.6z" fill="#d6dade"/><path d="M120.50 618.60l1.4 1.6 3-3.4" stroke="#38b838" stroke-width="1.1" fill="none"/><path d="M127.70 619.30h2.6l-1.3 1.9z" fill="#d0d4d8"/><path d="M141.8 610v10.6M139.6 610.4h4.4" stroke="#d6dade" stroke-width=".8"/><circle cx="141.8" cy="618.4" r="1.8" fill="none" stroke="#d6dade" stroke-width=".7"/><path d="M142.60 619.00l1.4 1.6 3-3.4" stroke="#38b838" stroke-width="1.1" fill="none"/><path d="M149.90 619.30h2.6l-1.3 1.9z" fill="#d0d4d8"/><path d="M160.6 611.6h5.6M160.6 620.6h5.6M163.4 611.6v9" stroke="#d6dade" stroke-width=".8"/><rect x="161.8" y="614.2" width="3.2" height="3.6" fill="#2b3742" stroke="#d6dade" stroke-width=".7"/><path d="M165.20 618.60l1.4 1.6 3-3.4" stroke="#38b838" stroke-width="1.1" fill="none"/><path d="M172.40 619.30h2.6l-1.3 1.9z" fill="#d0d4d8"/><rect x="181.3" y="612.6" width="8.4" height="5.8" fill="none" stroke="#d6dade" stroke-width=".9"/><path d="M183 612.6v5.8M181.3 614.2h8.4" stroke="#d6dade" stroke-width=".6"/><path d="M186.60 618.60l1.4 1.6 3-3.4" stroke="#38b838" stroke-width="1.1" fill="none"/><path d="M194.70 619.30h2.6l-1.3 1.9z" fill="#d0d4d8"/><path d="M209 620l1-2.6 4.4-4.6 1.6 1.6-4.4 4.6z" fill="none" stroke="#d6dade" stroke-width=".8"/><path d="M213.6 612l2.2-1.4 1.4 1.4-1.4 2.2z" fill="#d6dade"/><path d="M228 619l1-2.8 5-5 1.8 1.8-5 5z" fill="#d6dade"/><rect x="225.6" y="620.2" width="10.6" height="1.6" fill="#111"/><rect x="226.6" y="619.4" width="2" height="1" fill="#e22"/><rect x="229.4" y="619.4" width="2" height="1" fill="#2b2"/><rect x="232.2" y="619.4" width="2" height="1" fill="#24e"/><path d="M239.40 619.30h2.6l-1.3 1.9z" fill="#d0d4d8"/><path d="M249 613.6h8" stroke="#d6dade" stroke-width=".8"/><path d="M249 615.6h8" stroke="#d6dade" stroke-width=".8" stroke-dasharray="2.2 .8"/><path d="M249 617.6h8" stroke="#d6dade" stroke-width=".8" stroke-dasharray="1 .8"/><path d="M261.70 619.30h2.6l-1.3 1.9z" fill="#d0d4d8"/><path d="M272 613h8" stroke="#fff" stroke-width=".7"/><path d="M272 615.8h8" stroke="#fff" stroke-width="1.2"/><path d="M272 619h8" stroke="#fff" stroke-width="1.7"/><path d="M284.20 619.30h2.6l-1.3 1.9z" fill="#d0d4d8"/><path d="M295.6 616.2l3-3 3 3-3 2.6z" fill="none" stroke="#d6dade" stroke-width=".8"/><path d="M296.4 616.4h4.4l-2.2 1.8z" fill="#d6dade"/><path d="M302.4 616.6v1.8" stroke="#d6dade" stroke-width=".9"/><rect x="293.6" y="620.2" width="10" height="1.7" fill="#0a0a0a"/><path d="M306.70 619.30h2.6l-1.3 1.9z" fill="#d0d4d8"/><rect x="314" y="609.8" width="12" height="12.5" fill="#fff"/><path d="M329.20 619.30h2.6l-1.3 1.9z" fill="#d0d4d8"/><path d="M342 613.4l4.4-2 4.4 2-4.4 2z" fill="#44d24a"/><path d="M342 615.4l4.4 2 4.4-2M342 617.4l4.4 2 4.4-2" stroke="#d6dade" stroke-width=".8" fill="none"/><path d="M350 619.4l2 2M352 619.4l-2 2" stroke="#e22" stroke-width=".8"/><rect x="356.5" y="611" width="39.5" height="10.6" fill="#2e3a45" stroke="#3a4650" stroke-width=".6"/><path d="M384.5 611.6v9.4" stroke="#3e4a55" stroke-width=".6"/><path d="M388 615l2 2.2 2-2.2" stroke="#4a5661" stroke-width=".8" fill="none"/><path d="M408 620.6v-8" stroke="#e8ecf0" stroke-width="1"/><path d="M408 612.4h7" stroke="#e8ecf0" stroke-width=".9" stroke-dasharray="1.2 .9"/><circle cx="427.60" cy="615.4" r="3.2" fill="none" stroke="#d6dade" stroke-width=".9"/><path d="M429.90 617.8l2.6 2.8" stroke="#d6dade" stroke-width="1.1"/><path d="M426.10 615.4h3" stroke="#d6dade" stroke-width=".8"/><path d="M427.60 613.9v3" stroke="#d6dade" stroke-width=".8"/><circle cx="444.60" cy="615.4" r="3.2" fill="none" stroke="#d6dade" stroke-width=".9"/><path d="M446.90 617.8l2.6 2.8" stroke="#d6dade" stroke-width="1.1"/><path d="M443.10 615.4h3" stroke="#d6dade" stroke-width=".8"/><circle cx="461.60" cy="615.4" r="3.2" fill="none" stroke="#d6dade" stroke-width=".9"/><path d="M463.90 617.8l2.6 2.8" stroke="#d6dade" stroke-width="1.1"/><path d="M458.90 615.4h5.4M461.60 612.7v5.4" stroke="#d6dade" stroke-width=".7"/><rect x="460.40" y="614.2" width="2.4" height="2.4" fill="#2b3742" stroke="#d6dade" stroke-width=".6"/><path d="M475.8 611.4h5l1.6 1.6v7.2h-6.6z" fill="none" stroke="#d6dade" stroke-width=".9"/><path d="M477 614.2h3M477 616h3M477 617.8h2" stroke="#d6dade" stroke-width=".6"/><path d="M480.4 619.4l3-3.4" stroke="#d6dade" stroke-width="1"/><path d="M492 614l4.5-2 4.5 2-4.5 2z" fill="#f4f6f8"/><path d="M492 616.2l4.5 2 4.5-2" stroke="#d6dade" stroke-width=".9" fill="none"/><path d="M492 618.2l4.5 2 4.5-2" stroke="#d33" stroke-width=".9" fill="none"/><path d="M515.4 620.4v-6.6h6" stroke="#e4e8ec" stroke-width="1.3" fill="none"/><path d="M526.70 619.30h2.6l-1.3 1.9z" fill="#d0d4d8"/><path d="M536.6 614.6h7.4v-3.2M544 614.6v5.6" stroke="#6e7a85" stroke-width=".8" fill="none"/><path d="M542.8 619l1.2 1.8 1.2-1.8z" fill="#2f9a3c" stroke="#2f9a3c" stroke-width=".5"/><path d="M549.20 619.30h2.6l-1.3 1.9z" fill="#6e7a85"/><path d="M562 611.6v8.4M558 620h9" stroke="#6e7a85" stroke-width=".8" fill="none"/><path d="M566 618.8l1.8 1.2-1.8 1.2z" fill="#2f9a3c" stroke="#2f9a3c" stroke-width=".5"/><path d="M571.70 619.30h2.6l-1.3 1.9z" fill="#6e7a85"/><path d="M582.6 611.4v8.6M582.6 614.6h7.6" stroke="#6e7a85" stroke-width=".8" fill="none"/><path d="M581.4 619l1.2 1.8 1.2-1.8z" fill="#2f9a3c" stroke="#2f9a3c" stroke-width=".5"/><path d="M594.20 619.30h2.6l-1.3 1.9z" fill="#6e7a85"/><path d="M602.6 612.4h4.4v8M607 615l3.6-2.8" stroke="#6e7a85" stroke-width=".8" fill="none"/><path d="M609.6 611.4l2 .4-1 1.6z" fill="#2f9a3c" stroke="#2f9a3c" stroke-width=".5"/><path d="M616.70 619.30h2.6l-1.3 1.9z" fill="#6e7a85"/><path d="M629.8 611.4v9.4M626 616h8" stroke="#6e7a85" stroke-width=".8" fill="none"/><path d="M626.4 614.8l-1.8 1.2 1.8 1.2zM633.4 614.8l1.8 1.2-1.8 1.2z" fill="#2f9a3c" stroke="#2f9a3c" stroke-width=".5"/><path d="M638.70 619.30h2.6l-1.3 1.9z" fill="#6e7a85"/><path d="M652.4 611.4v9.4M648.6 616h8" stroke="#6e7a85" stroke-width=".8" fill="none"/><path d="M649 614.8l-1.8 1.2 1.8 1.2zM656 614.8l1.8 1.2-1.8 1.2z" fill="#2f9a3c" stroke="#2f9a3c" stroke-width=".5"/><path d="M661.20 619.30h2.6l-1.3 1.9z" fill="#6e7a85"/><path d="M672.6 616h6.6" stroke="#e4e8ec" stroke-width="1"/><path d="M674.6 613.6l-2.6 2.4 2.6 2.4" stroke="#2f9a3c" stroke-width="1" fill="none"/><path d="M683.70 619.30h2.6l-1.3 1.9z" fill="#d0d4d8"/></svg>
<span class="t" style="left:358.50px;top:611.70px;font-size:7px;line-height:9px;color:#55616c;transform:scaleX(0.742);font-weight:bold;">Standard</span>
<div class="b" style="left:2px;top:626px;width:1022px;height:12px;background:#2f3b47;"></div>
<svg class="b" style="left:0px;top:626px" width="1024" height="12" viewBox="0 626 1024 12"><path d="M56.2 627v10" stroke="#46525d" stroke-width=".7"/><path d="M851.0 627v10" stroke="#46525d" stroke-width=".7"/><path d="M905.0 627v10" stroke="#46525d" stroke-width=".7"/><path d="M959.0 627v10" stroke="#46525d" stroke-width=".7"/><path d="M1016 636.4h5v-5" stroke="#5a6671" stroke-width=".9" fill="none"/></svg>
<span class="t" style="left:5.30px;top:627.45px;font-size:7.5px;line-height:9px;color:#e4e6e8;transform:scaleX(0.861);">Fertig</span>
<span class="t" style="left:854.00px;top:627.40px;font-size:7.2px;line-height:9px;color:#e4e6e8;transform:scaleX(0.833);">62%</span>
<span class="t" style="left:907.50px;top:627.40px;font-size:7.2px;line-height:9px;color:#e4e6e8;transform:scaleX(1.041);">604/73 mm</span>
<span class="t" style="left:961.50px;top:627.40px;font-size:7.2px;line-height:9px;color:#e4e6e8;transform:scaleX(1.100);">DIN A2  1:1</span>
</body></html>
